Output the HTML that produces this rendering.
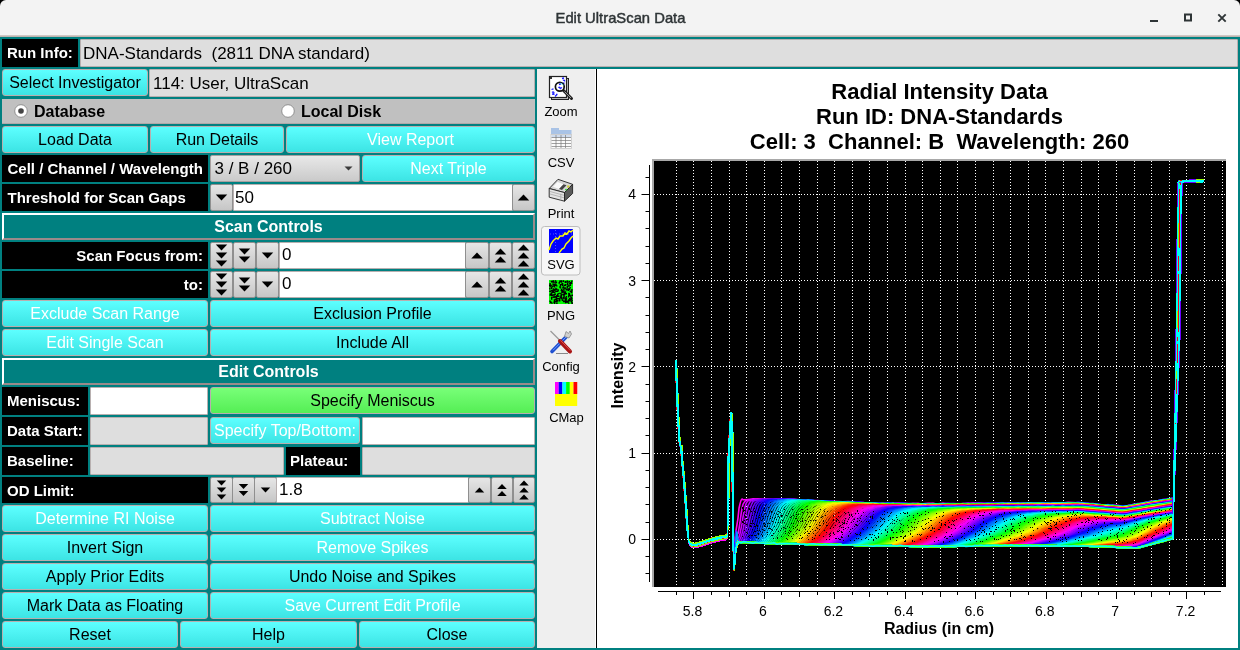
<!DOCTYPE html><html><head><meta charset="utf-8"><style>
html,body{margin:0;padding:0}
body{width:1240px;height:650px;position:relative;overflow:hidden;will-change:transform;background:#008080;font-family:"Liberation Sans", sans-serif}
</style></head><body><div style="position:absolute;left:0px;top:0px;width:1240px;height:10px;background:#000"></div><div style="position:absolute;left:0px;top:0px;width:1240px;height:37px;background:#f3f3f3;border-radius:6px 6px 0 0;border-bottom:1px solid #cfc6c2;box-sizing:border-box"></div><div style="position:absolute;left:0px;top:35px;width:1240px;height:2px;background:linear-gradient(#d8d2cf,#b8aaa5)"></div><div style="position:absolute;left:0.5px;top:9px;width:1240px;text-align:center;font-size:14.8px;font-weight:normal;-webkit-text-stroke:0.45px #2e3436;color:#2e3436;line-height:18px">Edit UltraScan Data</div><svg style="position:absolute;left:0;top:0" width="1240" height="36"><rect x="1150" y="20" width="8" height="2" fill="#2e3436"/><rect x="1185" y="14.5" width="6" height="6" fill="none" stroke="#2e3436" stroke-width="2"/><path d="M1218.3 14.3 L1225.7 21.7 M1225.7 14.3 L1218.3 21.7" stroke="#2e3436" stroke-width="1.9"/></svg><div style="position:absolute;left:2px;top:39px;width:76px;height:28px;background:#000;color:#fff;font-weight:bold;font-size:15px;display:flex;align-items:center;justify-content:flex-start;padding:0 5px;box-sizing:border-box;white-space:pre"><span style="position:relative;top:-1px">Run Info:</span></div><div style="position:absolute;left:80px;top:39px;width:1158px;height:28px;background:#dedede;border:1px solid #b8b0b0;border-radius:1px;box-sizing:border-box;color:#000;font-size:17px;display:flex;align-items:center;padding:0 2px;white-space:pre"><span style="position:relative;top:1px">DNA-Standards  (2811 DNA standard)</span></div><div style="position:absolute;left:2px;top:69px;width:146px;height:27px;background:linear-gradient(#5dffff,#3ce4e4);border:1px solid #b9aeae;border-radius:3px;box-sizing:border-box;color:#000;font-size:16px;display:flex;align-items:center;justify-content:center;padding:0 0px;white-space:pre"><span style="position:relative;top:0px">Select Investigator</span></div><div style="position:absolute;left:149px;top:69px;width:386px;height:28px;background:#dedede;border:1px solid #b8b0b0;border-radius:1px;box-sizing:border-box;color:#000;font-size:17px;display:flex;align-items:center;padding:0 3px;white-space:pre"><span style="position:relative;top:1px">114: User, UltraScan</span></div><div style="position:absolute;left:2px;top:99px;width:533px;height:25px;background:#c0c0c0;border-bottom:1px solid #b0a8a8;box-sizing:border-box"></div><svg style="position:absolute;left:0;top:99px" width="540" height="25"><circle cx="21" cy="12" r="6.3" fill="#fff" stroke="#888" stroke-width="0.9"/><circle cx="21" cy="12" r="2.8" fill="#444"/><circle cx="288" cy="12" r="6.3" fill="#fff" stroke="#888" stroke-width="0.9"/></svg><div style="position:absolute;left:34px;top:99px;height:25px;line-height:25px;font-size:16px;font-weight:bold;color:#000">Database</div><div style="position:absolute;left:301px;top:99px;height:25px;line-height:25px;font-size:16px;font-weight:bold;color:#000">Local Disk</div><div style="position:absolute;left:2px;top:126px;width:146px;height:27px;background:linear-gradient(#5dffff,#3ce4e4);border:1px solid #b9aeae;border-radius:3px;box-sizing:border-box;color:#000;font-size:16px;display:flex;align-items:center;justify-content:center;padding:0 0px;white-space:pre"><span style="position:relative;top:0px">Load Data</span></div><div style="position:absolute;left:150px;top:126px;width:134px;height:27px;background:linear-gradient(#5dffff,#3ce4e4);border:1px solid #b9aeae;border-radius:3px;box-sizing:border-box;color:#000;font-size:16px;display:flex;align-items:center;justify-content:center;padding:0 0px;white-space:pre"><span style="position:relative;top:0px">Run Details</span></div><div style="position:absolute;left:286px;top:126px;width:249px;height:27px;background:linear-gradient(#5dffff,#3ce4e4);border:1px solid #b9aeae;border-radius:3px;box-sizing:border-box;color:#fff;font-size:16px;display:flex;align-items:center;justify-content:center;padding:0 0px;white-space:pre"><span style="position:relative;top:0px">View Report</span></div><div style="position:absolute;left:2px;top:155px;width:206px;height:27px;background:#000;color:#fff;font-weight:bold;font-size:15px;display:flex;align-items:center;justify-content:flex-start;padding:0 5.5px;box-sizing:border-box;white-space:pre"><span style="position:relative;top:0px">Cell / Channel / Wavelength</span></div><div style="position:absolute;left:210px;top:155px;width:150px;height:27px;background:linear-gradient(#e8e8e8,#cacaca);border:1px solid #a8a0a0;border-radius:2px;box-sizing:border-box;font-size:17px;display:flex;align-items:center;padding-left:3.5px">3 / B / 260<svg style="position:absolute;left:132px;top:9.3px" width="14" height="8"><polygon points="1.5,1.5 9.5,1.5 5.5,5.5" fill="#3a3a3a"/></svg></div><div style="position:absolute;left:362px;top:155px;width:173px;height:27px;background:linear-gradient(#5dffff,#3ce4e4);border:1px solid #b9aeae;border-radius:3px;box-sizing:border-box;color:#fff;font-size:16px;display:flex;align-items:center;justify-content:center;padding:0 0px;white-space:pre"><span style="position:relative;top:0px">Next Triple</span></div><div style="position:absolute;left:2px;top:184px;width:206px;height:27px;background:#000;color:#fff;font-weight:bold;font-size:15px;display:flex;align-items:center;justify-content:flex-start;padding:0 5.5px;box-sizing:border-box;white-space:pre"><span style="position:relative;top:0px">Threshold for Scan Gaps</span></div><div style="position:absolute;left:210px;top:184px;width:23px;height:27px;background:linear-gradient(#e6e6e6,#c6c6c6);border:1px solid #8f8f8f;border-radius:2px;box-sizing:border-box"><svg width="23" height="27" style="position:absolute;left:-1.5px;top:-1.3px"><polygon points="5.75,10.6 17.25,10.6 11.5,16.4" fill="#000"/></svg></div><div style="position:absolute;left:233px;top:184px;width:280px;height:27px;background:#fff;border:1px solid #b8b0b0;border-radius:1px;box-sizing:border-box;color:#000;font-size:17px;display:flex;align-items:center;padding:0 1px;white-space:pre"><span style="position:relative;top:0px">50</span></div><div style="position:absolute;left:512px;top:184px;width:23px;height:27px;background:linear-gradient(#e6e6e6,#c6c6c6);border:1px solid #8f8f8f;border-radius:2px;box-sizing:border-box"><svg width="23" height="27" style="position:absolute;left:-1.5px;top:-1.3px"><polygon points="5.75,16.4 17.25,16.4 11.5,10.6" fill="#000"/></svg></div><div style="position:absolute;left:2px;top:213px;width:533px;height:27px;background:#008080;border-top:2px solid #fff;border-left:2px solid #fff;border-bottom:2px solid #9a8a8a;border-right:2px solid #9a8a8a;box-sizing:border-box;color:#fff;font-weight:bold;font-size:16px;display:flex;align-items:center;justify-content:center">Scan Controls</div><div style="position:absolute;left:2px;top:242px;width:206px;height:27px;background:#000;color:#fff;font-weight:bold;font-size:15px;display:flex;align-items:center;justify-content:flex-end;padding:0 5px;box-sizing:border-box;white-space:pre"><span style="position:relative;top:0px">Scan Focus from:</span></div><div style="position:absolute;left:210px;top:242px;width:23px;height:27px;background:linear-gradient(#e6e6e6,#c6c6c6);border:1px solid #8f8f8f;border-radius:2px;box-sizing:border-box"><svg width="23" height="27" style="position:absolute;left:-1.5px;top:-1.3px"><polygon points="5.75,2.6 17.25,2.6 11.5,8.4" fill="#000"/><polygon points="5.75,10.6 17.25,10.6 11.5,16.4" fill="#000"/><polygon points="5.75,18.6 17.25,18.6 11.5,24.4" fill="#000"/></svg></div><div style="position:absolute;left:233px;top:242px;width:23px;height:27px;background:linear-gradient(#e6e6e6,#c6c6c6);border:1px solid #8f8f8f;border-radius:2px;box-sizing:border-box"><svg width="23" height="27" style="position:absolute;left:-1.5px;top:-1.3px"><polygon points="5.75,6.6 17.25,6.6 11.5,12.4" fill="#000"/><polygon points="5.75,14.6 17.25,14.6 11.5,20.4" fill="#000"/></svg></div><div style="position:absolute;left:256px;top:242px;width:23px;height:27px;background:linear-gradient(#e6e6e6,#c6c6c6);border:1px solid #8f8f8f;border-radius:2px;box-sizing:border-box"><svg width="23" height="27" style="position:absolute;left:-1.5px;top:-1.3px"><polygon points="5.75,10.6 17.25,10.6 11.5,16.4" fill="#000"/></svg></div><div style="position:absolute;left:279px;top:242px;width:187px;height:27px;background:#fff;border:1px solid #b8b0b0;border-radius:1px;box-sizing:border-box;color:#000;font-size:17px;display:flex;align-items:center;padding:0 2px;white-space:pre"><span style="position:relative;top:-0.5px">0</span></div><div style="position:absolute;left:465px;top:242px;width:24px;height:27px;background:linear-gradient(#e6e6e6,#c6c6c6);border:1px solid #8f8f8f;border-radius:2px;box-sizing:border-box"><svg width="24" height="27" style="position:absolute;left:-1.5px;top:-1.3px"><polygon points="6.25,16.4 17.75,16.4 12.0,10.6" fill="#000"/></svg></div><div style="position:absolute;left:489px;top:242px;width:23px;height:27px;background:linear-gradient(#e6e6e6,#c6c6c6);border:1px solid #8f8f8f;border-radius:2px;box-sizing:border-box"><svg width="23" height="27" style="position:absolute;left:-1.5px;top:-1.3px"><polygon points="5.75,12.4 17.25,12.4 11.5,6.6" fill="#000"/><polygon points="5.75,20.4 17.25,20.4 11.5,14.6" fill="#000"/></svg></div><div style="position:absolute;left:512px;top:242px;width:23px;height:27px;background:linear-gradient(#e6e6e6,#c6c6c6);border:1px solid #8f8f8f;border-radius:2px;box-sizing:border-box"><svg width="23" height="27" style="position:absolute;left:-1.5px;top:-1.3px"><polygon points="5.75,8.4 17.25,8.4 11.5,2.6" fill="#000"/><polygon points="5.75,16.4 17.25,16.4 11.5,10.6" fill="#000"/><polygon points="5.75,24.4 17.25,24.4 11.5,18.6" fill="#000"/></svg></div><div style="position:absolute;left:2px;top:271px;width:206px;height:27px;background:#000;color:#fff;font-weight:bold;font-size:15px;display:flex;align-items:center;justify-content:flex-end;padding:0 5px;box-sizing:border-box;white-space:pre"><span style="position:relative;top:0px">to:</span></div><div style="position:absolute;left:210px;top:271px;width:23px;height:27px;background:linear-gradient(#e6e6e6,#c6c6c6);border:1px solid #8f8f8f;border-radius:2px;box-sizing:border-box"><svg width="23" height="27" style="position:absolute;left:-1.5px;top:-1.3px"><polygon points="5.75,2.6 17.25,2.6 11.5,8.4" fill="#000"/><polygon points="5.75,10.6 17.25,10.6 11.5,16.4" fill="#000"/><polygon points="5.75,18.6 17.25,18.6 11.5,24.4" fill="#000"/></svg></div><div style="position:absolute;left:233px;top:271px;width:23px;height:27px;background:linear-gradient(#e6e6e6,#c6c6c6);border:1px solid #8f8f8f;border-radius:2px;box-sizing:border-box"><svg width="23" height="27" style="position:absolute;left:-1.5px;top:-1.3px"><polygon points="5.75,6.6 17.25,6.6 11.5,12.4" fill="#000"/><polygon points="5.75,14.6 17.25,14.6 11.5,20.4" fill="#000"/></svg></div><div style="position:absolute;left:256px;top:271px;width:23px;height:27px;background:linear-gradient(#e6e6e6,#c6c6c6);border:1px solid #8f8f8f;border-radius:2px;box-sizing:border-box"><svg width="23" height="27" style="position:absolute;left:-1.5px;top:-1.3px"><polygon points="5.75,10.6 17.25,10.6 11.5,16.4" fill="#000"/></svg></div><div style="position:absolute;left:279px;top:271px;width:187px;height:27px;background:#fff;border:1px solid #b8b0b0;border-radius:1px;box-sizing:border-box;color:#000;font-size:17px;display:flex;align-items:center;padding:0 2px;white-space:pre"><span style="position:relative;top:-0.5px">0</span></div><div style="position:absolute;left:465px;top:271px;width:24px;height:27px;background:linear-gradient(#e6e6e6,#c6c6c6);border:1px solid #8f8f8f;border-radius:2px;box-sizing:border-box"><svg width="24" height="27" style="position:absolute;left:-1.5px;top:-1.3px"><polygon points="6.25,16.4 17.75,16.4 12.0,10.6" fill="#000"/></svg></div><div style="position:absolute;left:489px;top:271px;width:23px;height:27px;background:linear-gradient(#e6e6e6,#c6c6c6);border:1px solid #8f8f8f;border-radius:2px;box-sizing:border-box"><svg width="23" height="27" style="position:absolute;left:-1.5px;top:-1.3px"><polygon points="5.75,12.4 17.25,12.4 11.5,6.6" fill="#000"/><polygon points="5.75,20.4 17.25,20.4 11.5,14.6" fill="#000"/></svg></div><div style="position:absolute;left:512px;top:271px;width:23px;height:27px;background:linear-gradient(#e6e6e6,#c6c6c6);border:1px solid #8f8f8f;border-radius:2px;box-sizing:border-box"><svg width="23" height="27" style="position:absolute;left:-1.5px;top:-1.3px"><polygon points="5.75,8.4 17.25,8.4 11.5,2.6" fill="#000"/><polygon points="5.75,16.4 17.25,16.4 11.5,10.6" fill="#000"/><polygon points="5.75,24.4 17.25,24.4 11.5,18.6" fill="#000"/></svg></div><div style="position:absolute;left:2px;top:300px;width:206px;height:27px;background:linear-gradient(#5dffff,#3ce4e4);border:1px solid #b9aeae;border-radius:3px;box-sizing:border-box;color:#fff;font-size:16px;display:flex;align-items:center;justify-content:center;padding:0 0px;white-space:pre"><span style="position:relative;top:0px">Exclude Scan Range</span></div><div style="position:absolute;left:210px;top:300px;width:325px;height:27px;background:linear-gradient(#5dffff,#3ce4e4);border:1px solid #b9aeae;border-radius:3px;box-sizing:border-box;color:#000;font-size:16px;display:flex;align-items:center;justify-content:center;padding:0 0px;white-space:pre"><span style="position:relative;top:0px">Exclusion Profile</span></div><div style="position:absolute;left:2px;top:329px;width:206px;height:27px;background:linear-gradient(#5dffff,#3ce4e4);border:1px solid #b9aeae;border-radius:3px;box-sizing:border-box;color:#fff;font-size:16px;display:flex;align-items:center;justify-content:center;padding:0 0px;white-space:pre"><span style="position:relative;top:0px">Edit Single Scan</span></div><div style="position:absolute;left:210px;top:329px;width:325px;height:27px;background:linear-gradient(#5dffff,#3ce4e4);border:1px solid #b9aeae;border-radius:3px;box-sizing:border-box;color:#000;font-size:16px;display:flex;align-items:center;justify-content:center;padding:0 0px;white-space:pre"><span style="position:relative;top:0px">Include All</span></div><div style="position:absolute;left:2px;top:358px;width:533px;height:27px;background:#008080;border-top:2px solid #fff;border-left:2px solid #fff;border-bottom:2px solid #9a8a8a;border-right:2px solid #9a8a8a;box-sizing:border-box;color:#fff;font-weight:bold;font-size:16px;display:flex;align-items:center;justify-content:center">Edit Controls</div><div style="position:absolute;left:2px;top:387px;width:86px;height:28px;background:#000;color:#fff;font-weight:bold;font-size:15px;display:flex;align-items:center;justify-content:flex-start;padding:0 5px;box-sizing:border-box;white-space:pre"><span style="position:relative;top:-1px">Meniscus:</span></div><div style="position:absolute;left:90px;top:387px;width:118px;height:28px;background:#fff;border:1px solid #b8b0b0;border-radius:1px;box-sizing:border-box;color:#000;font-size:17px;display:flex;align-items:center;padding:0 4px;white-space:pre"><span style="position:relative;top:1px"></span></div><div style="position:absolute;left:210px;top:387px;width:325px;height:27px;background:linear-gradient(#78ff78,#55ee55);border:1px solid #b9aeae;border-radius:3px;box-sizing:border-box;color:#000;font-size:16px;display:flex;align-items:center;justify-content:center;padding:0 0px;white-space:pre"><span style="position:relative;top:0px">Specify Meniscus</span></div><div style="position:absolute;left:2px;top:417px;width:86px;height:28px;background:#000;color:#fff;font-weight:bold;font-size:15px;display:flex;align-items:center;justify-content:flex-start;padding:0 5px;box-sizing:border-box;white-space:pre"><span style="position:relative;top:-1px">Data Start:</span></div><div style="position:absolute;left:90px;top:417px;width:118px;height:28px;background:#dedede;border:1px solid #b8b0b0;border-radius:1px;box-sizing:border-box;color:#000;font-size:17px;display:flex;align-items:center;padding:0 4px;white-space:pre"><span style="position:relative;top:1px"></span></div><div style="position:absolute;left:210px;top:417px;width:150px;height:27px;background:linear-gradient(#5dffff,#3ce4e4);border:1px solid #b9aeae;border-radius:3px;box-sizing:border-box;color:#fff;font-size:16px;display:flex;align-items:center;justify-content:center;padding:0 0px;white-space:pre"><span style="position:relative;top:0px">Specify Top/Bottom:</span></div><div style="position:absolute;left:362px;top:417px;width:173px;height:28px;background:#fff;border:1px solid #b8b0b0;border-radius:1px;box-sizing:border-box;color:#000;font-size:17px;display:flex;align-items:center;padding:0 4px;white-space:pre"><span style="position:relative;top:1px"></span></div><div style="position:absolute;left:2px;top:447px;width:86px;height:28px;background:#000;color:#fff;font-weight:bold;font-size:15px;display:flex;align-items:center;justify-content:flex-start;padding:0 5px;box-sizing:border-box;white-space:pre"><span style="position:relative;top:-1px">Baseline:</span></div><div style="position:absolute;left:90px;top:447px;width:194px;height:28px;background:#dedede;border:1px solid #b8b0b0;border-radius:1px;box-sizing:border-box;color:#000;font-size:17px;display:flex;align-items:center;padding:0 4px;white-space:pre"><span style="position:relative;top:1px"></span></div><div style="position:absolute;left:286px;top:447px;width:74px;height:28px;background:#000;color:#fff;font-weight:bold;font-size:15px;display:flex;align-items:center;justify-content:flex-start;padding:0 4px;box-sizing:border-box;white-space:pre"><span style="position:relative;top:-1px">Plateau:</span></div><div style="position:absolute;left:362px;top:447px;width:173px;height:28px;background:#dedede;border:1px solid #b8b0b0;border-radius:1px;box-sizing:border-box;color:#000;font-size:17px;display:flex;align-items:center;padding:0 4px;white-space:pre"><span style="position:relative;top:1px"></span></div><div style="position:absolute;left:2px;top:477px;width:206px;height:26px;background:#000;color:#fff;font-weight:bold;font-size:15px;display:flex;align-items:center;justify-content:flex-start;padding:0 5px;box-sizing:border-box;white-space:pre"><span style="position:relative;top:0px">OD Limit:</span></div><div style="position:absolute;left:210px;top:477px;width:23px;height:26px;background:linear-gradient(#e6e6e6,#c6c6c6);border:1px solid #8f8f8f;border-radius:2px;box-sizing:border-box"><svg width="23" height="26" style="position:absolute;left:-1.5px;top:-1.3px"><polygon points="6.75,3.5 16.25,3.5 11.5,8.5" fill="#000"/><polygon points="6.75,10.5 16.25,10.5 11.5,15.5" fill="#000"/><polygon points="6.75,17.5 16.25,17.5 11.5,22.5" fill="#000"/></svg></div><div style="position:absolute;left:232px;top:477px;width:23px;height:26px;background:linear-gradient(#e6e6e6,#c6c6c6);border:1px solid #8f8f8f;border-radius:2px;box-sizing:border-box"><svg width="23" height="26" style="position:absolute;left:-1.5px;top:-1.3px"><polygon points="6.75,7.0 16.25,7.0 11.5,12.0" fill="#000"/><polygon points="6.75,14.0 16.25,14.0 11.5,19.0" fill="#000"/></svg></div><div style="position:absolute;left:254px;top:477px;width:23px;height:26px;background:linear-gradient(#e6e6e6,#c6c6c6);border:1px solid #8f8f8f;border-radius:2px;box-sizing:border-box"><svg width="23" height="26" style="position:absolute;left:-1.5px;top:-1.3px"><polygon points="6.75,10.5 16.25,10.5 11.5,15.5" fill="#000"/></svg></div><div style="position:absolute;left:276px;top:477px;width:193px;height:26px;background:#fff;border:1px solid #b8b0b0;border-radius:1px;box-sizing:border-box;color:#000;font-size:17px;display:flex;align-items:center;padding:0 2px;white-space:pre"><span style="position:relative;top:0px">1.8</span></div><div style="position:absolute;left:468px;top:477px;width:23px;height:26px;background:linear-gradient(#e6e6e6,#c6c6c6);border:1px solid #8f8f8f;border-radius:2px;box-sizing:border-box"><svg width="23" height="26" style="position:absolute;left:-1.5px;top:-1.3px"><polygon points="6.75,15.5 16.25,15.5 11.5,10.5" fill="#000"/></svg></div><div style="position:absolute;left:491px;top:477px;width:22px;height:26px;background:linear-gradient(#e6e6e6,#c6c6c6);border:1px solid #8f8f8f;border-radius:2px;box-sizing:border-box"><svg width="22" height="26" style="position:absolute;left:-1.5px;top:-1.3px"><polygon points="6.25,12.0 15.75,12.0 11.0,7.0" fill="#000"/><polygon points="6.25,19.0 15.75,19.0 11.0,14.0" fill="#000"/></svg></div><div style="position:absolute;left:513px;top:477px;width:22px;height:26px;background:linear-gradient(#e6e6e6,#c6c6c6);border:1px solid #8f8f8f;border-radius:2px;box-sizing:border-box"><svg width="22" height="26" style="position:absolute;left:-1.5px;top:-1.3px"><polygon points="6.25,8.5 15.75,8.5 11.0,3.5" fill="#000"/><polygon points="6.25,15.5 15.75,15.5 11.0,10.5" fill="#000"/><polygon points="6.25,22.5 15.75,22.5 11.0,17.5" fill="#000"/></svg></div><div style="position:absolute;left:2px;top:505px;width:206px;height:27px;background:linear-gradient(#5dffff,#3ce4e4);border:1px solid #b9aeae;border-radius:3px;box-sizing:border-box;color:#fff;font-size:16px;display:flex;align-items:center;justify-content:center;padding:0 0px;white-space:pre"><span style="position:relative;top:0px">Determine RI Noise</span></div><div style="position:absolute;left:210px;top:505px;width:325px;height:27px;background:linear-gradient(#5dffff,#3ce4e4);border:1px solid #b9aeae;border-radius:3px;box-sizing:border-box;color:#fff;font-size:16px;display:flex;align-items:center;justify-content:center;padding:0 0px;white-space:pre"><span style="position:relative;top:0px">Subtract Noise</span></div><div style="position:absolute;left:2px;top:534px;width:206px;height:27px;background:linear-gradient(#5dffff,#3ce4e4);border:1px solid #b9aeae;border-radius:3px;box-sizing:border-box;color:#000;font-size:16px;display:flex;align-items:center;justify-content:center;padding:0 0px;white-space:pre"><span style="position:relative;top:0px">Invert Sign</span></div><div style="position:absolute;left:210px;top:534px;width:325px;height:27px;background:linear-gradient(#5dffff,#3ce4e4);border:1px solid #b9aeae;border-radius:3px;box-sizing:border-box;color:#fff;font-size:16px;display:flex;align-items:center;justify-content:center;padding:0 0px;white-space:pre"><span style="position:relative;top:0px">Remove Spikes</span></div><div style="position:absolute;left:2px;top:563px;width:206px;height:27px;background:linear-gradient(#5dffff,#3ce4e4);border:1px solid #b9aeae;border-radius:3px;box-sizing:border-box;color:#000;font-size:16px;display:flex;align-items:center;justify-content:center;padding:0 0px;white-space:pre"><span style="position:relative;top:0px">Apply Prior Edits</span></div><div style="position:absolute;left:210px;top:563px;width:325px;height:27px;background:linear-gradient(#5dffff,#3ce4e4);border:1px solid #b9aeae;border-radius:3px;box-sizing:border-box;color:#000;font-size:16px;display:flex;align-items:center;justify-content:center;padding:0 0px;white-space:pre"><span style="position:relative;top:0px">Undo Noise and Spikes</span></div><div style="position:absolute;left:2px;top:592px;width:206px;height:27px;background:linear-gradient(#5dffff,#3ce4e4);border:1px solid #b9aeae;border-radius:3px;box-sizing:border-box;color:#000;font-size:16px;display:flex;align-items:center;justify-content:center;padding:0 0px;white-space:pre"><span style="position:relative;top:0px">Mark Data as Floating</span></div><div style="position:absolute;left:210px;top:592px;width:325px;height:27px;background:linear-gradient(#5dffff,#3ce4e4);border:1px solid #b9aeae;border-radius:3px;box-sizing:border-box;color:#fff;font-size:16px;display:flex;align-items:center;justify-content:center;padding:0 0px;white-space:pre"><span style="position:relative;top:0px">Save Current Edit Profile</span></div><div style="position:absolute;left:2px;top:621px;width:176px;height:27px;background:linear-gradient(#5dffff,#3ce4e4);border:1px solid #b9aeae;border-radius:3px;box-sizing:border-box;color:#000;font-size:16px;display:flex;align-items:center;justify-content:center;padding:0 0px;white-space:pre"><span style="position:relative;top:0px">Reset</span></div><div style="position:absolute;left:180px;top:621px;width:177px;height:27px;background:linear-gradient(#5dffff,#3ce4e4);border:1px solid #b9aeae;border-radius:3px;box-sizing:border-box;color:#000;font-size:16px;display:flex;align-items:center;justify-content:center;padding:0 0px;white-space:pre"><span style="position:relative;top:0px">Help</span></div><div style="position:absolute;left:359px;top:621px;width:176px;height:27px;background:linear-gradient(#5dffff,#3ce4e4);border:1px solid #b9aeae;border-radius:3px;box-sizing:border-box;color:#000;font-size:16px;display:flex;align-items:center;justify-content:center;padding:0 0px;white-space:pre"><span style="position:relative;top:0px">Close</span></div><div style="position:absolute;left:537px;top:69px;width:59px;height:579px;background:#efefef"></div><div style="position:absolute;left:595px;top:69px;width:1px;height:579px;background:#fff"></div><div style="position:absolute;left:596px;top:69px;width:1px;height:579px;background:#000"></div><div style="position:absolute;left:597px;top:69px;width:641px;height:579px;background:#fff"></div><svg style="position:absolute;left:0;top:0" width="1240" height="650" font-family="Liberation Sans, sans-serif"><rect x="541.5" y="226.5" width="38.5" height="48.5" rx="3" fill="#f7f7f7" stroke="#bdbdbd" stroke-width="1"/><text x="561" y="116" font-size="13" text-anchor="middle" fill="#000">Zoom</text><text x="561" y="167" font-size="13" text-anchor="middle" fill="#000">CSV</text><text x="561" y="218" font-size="13" text-anchor="middle" fill="#000">Print</text><text x="561" y="269" font-size="13" text-anchor="middle" fill="#000">SVG</text><text x="561" y="320" font-size="13" text-anchor="middle" fill="#000">PNG</text><text x="561" y="370.5" font-size="13" text-anchor="middle" fill="#000">Config</text><text x="566.5" y="421.7" font-size="13" text-anchor="middle" fill="#000">CMap</text><g><rect x="551.5" y="78.5" width="17" height="21" fill="#bdbdbd" stroke="#222" stroke-width="1"/><rect x="549.5" y="76.5" width="17" height="21" fill="#fff" stroke="#222" stroke-width="1.2"/><path d="M550 77h2v2h-2z" fill="#333"/><path d="M562 78.5l2 -0.5M563 80.5c1 -1 2 0 1.5 1M562.5 83.5l2 -0.5M551.5 89.5l2 -0.6M552 92.5c1.5 -1.3 2.5 0 1.5 1M552 94l2.5 0.3M555 96.5l1.5 -1.5M556 94.5h1.5" stroke="#1a1aff" stroke-width="1.3" fill="none"/><line x1="563.5" y1="90.5" x2="571.5" y2="98.5" stroke="#222" stroke-width="3" stroke-linecap="round"/><line x1="564.5" y1="91.5" x2="571" y2="98" stroke="#999" stroke-width="1"/><circle cx="559.8" cy="86.8" r="4.4" fill="#fff" stroke="#111" stroke-width="1.7"/><path d="M559 84.5l2 -0.6M558.5 87.8c1 -1 2.2 0 1.5 1.2M561 87.5l0.8 0.8" stroke="#1a1aff" stroke-width="1.5" fill="none"/><path d="M560.5 83.3a3.5 3.5 0 0 1 2.8 2" stroke="#6ee" stroke-width="1" fill="none"/></g><g><rect x="551" y="128" width="8" height="3" fill="#a9c3e6"/><rect x="551" y="130" width="20.5" height="4.5" fill="#a9c3e6"/><rect x="551" y="134.5" width="20.5" height="14" fill="#fafafa" stroke="#c8c8c8" stroke-width="0.8"/><rect x="551.5" y="135" width="19.5" height="2.5" fill="#cfdcef"/><path d="M551.5 137.5H571M551.5 140.5H571M551.5 143.5H571M551.5 146.5H571M556 135V148M561 135V148M565.5 135V148" stroke="#7a7a7a" stroke-width="0.7"/></g><g stroke-linejoin="round"><polygon points="549.2,188.5 558,179.3 572.6,184.3 564.5,192.6" fill="#d6d6d6" stroke="#222" stroke-width="0.9"/><polygon points="549.2,188.5 564.5,192.6 564.5,201.2 549.2,197.2" fill="#e4e4e4" stroke="#222" stroke-width="0.9"/><polygon points="564.5,192.6 572.6,184.3 572.6,193.5 564.5,201.2" fill="#5a5a5a" stroke="#222" stroke-width="0.9"/><polygon points="553,186.8 557.5,182 563.5,184.2 559,189" fill="#fafafa"/><polygon points="559,189 563.5,184.2 566.5,185.3 562,190" fill="#444"/><path d="M550 191.5L564 195.3M550 194L564 197.8M560.8 193.8V200.5" stroke="#aaa" stroke-width="0.8"/><circle cx="566" cy="189.6" r="0.9" fill="#22dd22"/><rect x="567.2" y="185.5" width="2.2" height="2.2" fill="#cccc33"/></g><rect x="549" y="229" width="24" height="24" fill="#0000ff"/><path d="M549 250 L551 244 L553 241 L556 238 L558 239 L560 236 L563 236 L565 233 L567 234 L569 231 L571 232 L573 230" stroke="#ffff00" stroke-width="1.4" fill="none"/><path d="M559 253 L562 249 L564 248 L566 244 L569 241 L571 238 L573 236" stroke="#ffff00" stroke-width="1.4" fill="none"/><path d="M555.5 230V253M550 234H573" stroke="#8888ff" stroke-width="0.6" stroke-dasharray="1 2" fill="none"/><rect x="549" y="280" width="24" height="24" fill="#00ff00"/><path d="M559.2 292.7h1.4v1.4h-1.4zM569.9 290.5h1.4v1.4h-1.4zM560.5 293.3h1.4v1.4h-1.4zM553.2 291.6h1.4v1.4h-1.4zM563.2 297.9h1.4v1.4h-1.4zM551.1 286.9h1.4v1.4h-1.4zM551.0 298.3h1.4v1.4h-1.4zM564.7 280.9h1.4v1.4h-1.4zM571.2 301.8h1.4v1.4h-1.4zM563.8 293.9h1.4v1.4h-1.4zM552.6 280.3h1.4v1.4h-1.4zM560.9 281.3h1.4v1.4h-1.4zM553.3 285.5h1.4v1.4h-1.4zM549.7 290.5h1.4v1.4h-1.4zM559.0 299.0h1.4v1.4h-1.4zM560.7 294.5h1.4v1.4h-1.4zM560.3 295.0h1.4v1.4h-1.4zM559.3 286.3h1.4v1.4h-1.4zM571.5 302.5h1.4v1.4h-1.4zM568.0 296.0h1.4v1.4h-1.4zM556.1 285.2h1.4v1.4h-1.4zM555.5 281.6h1.4v1.4h-1.4zM566.3 289.0h1.4v1.4h-1.4zM568.1 288.7h1.4v1.4h-1.4zM570.7 299.1h1.4v1.4h-1.4zM549.0 284.7h1.4v1.4h-1.4zM569.6 290.6h1.4v1.4h-1.4zM571.2 289.0h1.4v1.4h-1.4zM550.7 294.2h1.4v1.4h-1.4zM566.6 286.1h1.4v1.4h-1.4zM551.0 287.5h1.4v1.4h-1.4zM570.8 297.1h1.4v1.4h-1.4zM551.7 285.6h1.4v1.4h-1.4zM551.3 281.4h1.4v1.4h-1.4zM567.0 284.0h1.4v1.4h-1.4zM561.6 290.1h1.4v1.4h-1.4zM553.3 296.5h1.4v1.4h-1.4zM552.0 294.5h1.4v1.4h-1.4zM551.6 289.5h1.4v1.4h-1.4zM553.8 286.1h1.4v1.4h-1.4zM570.9 298.2h1.4v1.4h-1.4zM555.9 300.0h1.4v1.4h-1.4zM553.8 288.9h1.4v1.4h-1.4zM568.3 294.5h1.4v1.4h-1.4zM551.3 302.4h1.4v1.4h-1.4zM553.8 285.8h1.4v1.4h-1.4zM566.5 287.4h1.4v1.4h-1.4zM555.7 281.7h1.4v1.4h-1.4zM551.0 293.2h1.4v1.4h-1.4zM554.5 293.6h1.4v1.4h-1.4zM557.4 290.2h1.4v1.4h-1.4zM570.7 290.9h1.4v1.4h-1.4zM562.0 299.6h1.4v1.4h-1.4zM553.1 283.5h1.4v1.4h-1.4zM569.5 298.5h1.4v1.4h-1.4zM554.6 284.3h1.4v1.4h-1.4zM565.7 301.3h1.4v1.4h-1.4zM553.4 301.5h1.4v1.4h-1.4zM568.9 293.6h1.4v1.4h-1.4zM558.5 282.3h1.4v1.4h-1.4zM549.9 301.8h1.4v1.4h-1.4zM554.4 295.9h1.4v1.4h-1.4zM554.8 298.6h1.4v1.4h-1.4zM562.5 286.6h1.4v1.4h-1.4zM553.0 296.3h1.4v1.4h-1.4zM550.6 285.2h1.4v1.4h-1.4zM561.6 299.3h1.4v1.4h-1.4zM562.9 286.3h1.4v1.4h-1.4zM569.7 284.6h1.4v1.4h-1.4zM549.4 286.1h1.4v1.4h-1.4zM559.1 281.4h1.4v1.4h-1.4zM553.0 288.3h1.4v1.4h-1.4zM561.9 283.0h1.4v1.4h-1.4zM557.2 300.1h1.4v1.4h-1.4zM571.2 294.8h1.4v1.4h-1.4zM564.6 293.2h1.4v1.4h-1.4zM552.2 280.8h1.4v1.4h-1.4zM549.4 300.6h1.4v1.4h-1.4zM564.8 301.8h1.4v1.4h-1.4zM549.5 294.4h1.4v1.4h-1.4zM559.9 296.5h1.4v1.4h-1.4zM556.2 302.6h1.4v1.4h-1.4zM550.7 292.3h1.4v1.4h-1.4zM565.7 300.3h1.4v1.4h-1.4zM565.7 295.9h1.4v1.4h-1.4zM566.9 300.7h1.4v1.4h-1.4zM557.0 295.5h1.4v1.4h-1.4zM569.4 299.7h1.4v1.4h-1.4zM558.4 297.9h1.4v1.4h-1.4zM568.5 292.9h1.4v1.4h-1.4zM563.1 288.6h1.4v1.4h-1.4zM562.2 293.8h1.4v1.4h-1.4zM550.8 294.5h1.4v1.4h-1.4zM571.4 299.9h1.4v1.4h-1.4zM565.5 288.8h1.4v1.4h-1.4zM565.6 293.1h1.4v1.4h-1.4zM559.0 298.9h1.4v1.4h-1.4zM550.9 297.0h1.4v1.4h-1.4zM549.7 293.6h1.4v1.4h-1.4zM559.9 285.2h1.4v1.4h-1.4zM564.8 291.2h1.4v1.4h-1.4zM562.9 300.8h1.4v1.4h-1.4zM554.8 280.3h1.4v1.4h-1.4zM555.8 295.3h1.4v1.4h-1.4zM553.6 283.8h1.4v1.4h-1.4zM569.5 294.9h1.4v1.4h-1.4zM559.0 300.2h1.4v1.4h-1.4zM556.4 295.0h1.4v1.4h-1.4zM553.5 289.7h1.4v1.4h-1.4zM567.2 300.7h1.4v1.4h-1.4zM568.9 288.7h1.4v1.4h-1.4zM562.2 287.2h1.4v1.4h-1.4zM552.1 291.2h1.4v1.4h-1.4zM567.9 299.2h1.4v1.4h-1.4zM565.1 301.5h1.4v1.4h-1.4zM555.3 283.8h1.4v1.4h-1.4zM559.2 286.2h1.4v1.4h-1.4zM553.8 289.4h1.4v1.4h-1.4zM563.1 291.2h1.4v1.4h-1.4zM556.1 299.0h1.4v1.4h-1.4zM571.2 290.2h1.4v1.4h-1.4zM550.7 280.7h1.4v1.4h-1.4zM568.7 280.9h1.4v1.4h-1.4zM565.0 292.9h1.4v1.4h-1.4zM556.0 297.9h1.4v1.4h-1.4zM549.4 283.1h1.4v1.4h-1.4zM559.3 280.6h1.4v1.4h-1.4zM567.8 285.4h1.4v1.4h-1.4zM552.2 281.1h1.4v1.4h-1.4zM563.2 290.1h1.4v1.4h-1.4zM563.2 294.8h1.4v1.4h-1.4zM567.2 301.7h1.4v1.4h-1.4zM564.5 284.5h1.4v1.4h-1.4zM559.7 284.0h1.4v1.4h-1.4zM549.2 290.7h1.4v1.4h-1.4zM565.1 284.0h1.4v1.4h-1.4zM555.2 287.8h1.4v1.4h-1.4zM564.8 291.8h1.4v1.4h-1.4zM562.9 297.1h1.4v1.4h-1.4zM557.9 297.9h1.4v1.4h-1.4zM569.5 282.0h1.4v1.4h-1.4zM570.1 296.3h1.4v1.4h-1.4zM551.9 290.2h1.4v1.4h-1.4zM563.1 300.6h1.4v1.4h-1.4zM557.5 292.9h1.4v1.4h-1.4zM568.9 298.0h1.4v1.4h-1.4zM570.3 290.5h1.4v1.4h-1.4zM563.7 284.6h1.4v1.4h-1.4zM565.3 298.5h1.4v1.4h-1.4zM563.5 296.2h1.4v1.4h-1.4zM553.8 300.3h1.4v1.4h-1.4zM571.2 302.1h1.4v1.4h-1.4zM561.1 297.9h1.4v1.4h-1.4zM556.2 300.6h1.4v1.4h-1.4zM568.3 287.9h1.4v1.4h-1.4zM550.9 290.0h1.4v1.4h-1.4zM561.4 297.4h1.4v1.4h-1.4zM560.0 280.6h1.4v1.4h-1.4zM567.3 281.4h1.4v1.4h-1.4zM567.1 283.9h1.4v1.4h-1.4zM556.6 297.8h1.4v1.4h-1.4zM552.2 283.4h1.4v1.4h-1.4zM560.7 296.4h1.4v1.4h-1.4zM568.0 295.6h1.4v1.4h-1.4zM570.4 291.1h1.4v1.4h-1.4zM570.5 281.9h1.4v1.4h-1.4zM554.0 291.9h1.4v1.4h-1.4zM555.6 296.5h1.4v1.4h-1.4zM563.4 291.8h1.4v1.4h-1.4zM568.1 292.7h1.4v1.4h-1.4zM556.0 288.6h1.4v1.4h-1.4zM568.1 300.4h1.4v1.4h-1.4zM553.7 299.2h1.4v1.4h-1.4zM570.9 291.8h1.4v1.4h-1.4zM561.9 284.5h1.4v1.4h-1.4zM561.1 291.4h1.4v1.4h-1.4zM562.7 280.6h1.4v1.4h-1.4zM570.9 291.7h1.4v1.4h-1.4zM558.1 298.1h1.4v1.4h-1.4zM561.7 291.1h1.4v1.4h-1.4zM564.6 281.5h1.4v1.4h-1.4zM561.2 289.4h1.4v1.4h-1.4zM570.6 300.9h1.4v1.4h-1.4zM555.1 290.7h1.4v1.4h-1.4zM551.9 289.8h1.4v1.4h-1.4zM567.4 300.4h1.4v1.4h-1.4zM559.8 287.2h1.4v1.4h-1.4zM553.3 294.0h1.4v1.4h-1.4zM569.9 282.9h1.4v1.4h-1.4zM566.6 280.5h1.4v1.4h-1.4zM553.4 285.1h1.4v1.4h-1.4zM564.5 287.3h1.4v1.4h-1.4zM557.0 294.0h1.4v1.4h-1.4zM551.4 296.5h1.4v1.4h-1.4zM551.8 291.5h1.4v1.4h-1.4zM554.7 284.5h1.4v1.4h-1.4zM561.0 289.9h1.4v1.4h-1.4zM557.5 289.3h1.4v1.4h-1.4zM561.0 283.6h1.4v1.4h-1.4zM553.6 294.3h1.4v1.4h-1.4zM563.4 292.0h1.4v1.4h-1.4zM568.2 293.8h1.4v1.4h-1.4zM568.4 285.3h1.4v1.4h-1.4zM565.7 298.3h1.4v1.4h-1.4zM569.4 287.1h1.4v1.4h-1.4zM556.1 300.9h1.4v1.4h-1.4zM553.9 302.6h1.4v1.4h-1.4zM569.1 283.0h1.4v1.4h-1.4zM554.4 296.4h1.4v1.4h-1.4zM554.9 282.2h1.4v1.4h-1.4zM567.8 289.5h1.4v1.4h-1.4zM566.9 282.8h1.4v1.4h-1.4zM558.1 295.5h1.4v1.4h-1.4zM549.4 284.5h1.4v1.4h-1.4zM564.4 300.6h1.4v1.4h-1.4zM570.9 282.6h1.4v1.4h-1.4zM560.4 297.1h1.4v1.4h-1.4zM560.4 295.5h1.4v1.4h-1.4zM553.3 281.6h1.4v1.4h-1.4zM551.4 280.8h1.4v1.4h-1.4zM561.5 291.6h1.4v1.4h-1.4zM561.9 283.3h1.4v1.4h-1.4zM553.2 284.6h1.4v1.4h-1.4zM568.0 302.4h1.4v1.4h-1.4zM569.9 282.2h1.4v1.4h-1.4zM550.4 301.5h1.4v1.4h-1.4zM559.4 297.3h1.4v1.4h-1.4zM556.4 290.6h1.4v1.4h-1.4zM560.6 289.7h1.4v1.4h-1.4zM562.6 280.3h1.4v1.4h-1.4zM564.8 299.1h1.4v1.4h-1.4zM553.1 290.3h1.4v1.4h-1.4zM565.7 289.2h1.4v1.4h-1.4zM553.4 283.7h1.4v1.4h-1.4zM560.6 280.3h1.4v1.4h-1.4zM569.2 298.1h1.4v1.4h-1.4zM564.9 299.5h1.4v1.4h-1.4zM563.2 289.1h1.4v1.4h-1.4zM562.6 291.4h1.4v1.4h-1.4zM571.2 298.2h1.4v1.4h-1.4zM554.8 300.6h1.4v1.4h-1.4zM565.8 297.6h1.4v1.4h-1.4zM567.4 289.2h1.4v1.4h-1.4zM569.3 299.9h1.4v1.4h-1.4zM564.7 297.3h1.4v1.4h-1.4zM566.3 289.2h1.4v1.4h-1.4zM565.3 281.6h1.4v1.4h-1.4zM556.7 290.6h1.4v1.4h-1.4zM549.2 288.0h1.4v1.4h-1.4zM563.4 294.1h1.4v1.4h-1.4zM554.2 301.3h1.4v1.4h-1.4zM564.1 287.6h1.4v1.4h-1.4zM563.9 292.9h1.4v1.4h-1.4zM561.0 288.8h1.4v1.4h-1.4zM571.6 294.5h1.4v1.4h-1.4zM564.8 297.2h1.4v1.4h-1.4zM571.1 280.5h1.4v1.4h-1.4zM562.9 296.7h1.4v1.4h-1.4zM554.8 289.1h1.4v1.4h-1.4zM550.1 284.4h1.4v1.4h-1.4z" fill="#000"/><g><line x1="550.5" y1="331" x2="560" y2="340.5" stroke="#9a9a9a" stroke-width="1.3"/><line x1="567" y1="336" x2="552" y2="351.5" stroke="#1f4fd0" stroke-width="3.6" stroke-linecap="round"/><line x1="566" y1="337" x2="553" y2="350.3" stroke="#6f9bff" stroke-width="1"/><path d="M564.5 336.5 L566 331.5 L568.5 333.5 L570 331 L571.5 334 L569 338 Z" fill="#cfcfcf" stroke="#8a8a8a" stroke-width="0.8"/><line x1="560" y1="341" x2="570" y2="351.5" stroke="#a81414" stroke-width="4" stroke-linecap="round"/><line x1="560.5" y1="340.3" x2="570.2" y2="350.5" stroke="#e05050" stroke-width="1"/><line x1="556" y1="353.5" x2="568" y2="353.5" stroke="#888" stroke-width="1"/></g><rect x="555" y="382" width="3.75" height="12" fill="#ff00ff"/><rect x="558.7" y="382" width="3.75" height="12" fill="#0000ff"/><rect x="562.4" y="382" width="3.75" height="12" fill="#00ffff"/><rect x="566.1" y="382" width="3.75" height="12" fill="#00ff00"/><rect x="569.8" y="382" width="3.75" height="12" fill="#ffff00"/><rect x="573.5" y="382" width="3.75" height="12" fill="#ff0000"/><rect x="555" y="394" width="22.2" height="12" fill="#ffff00"/></svg><svg style="position:absolute;left:0;top:0" width="1240" height="650" font-family="Liberation Sans, sans-serif"><text x="939.5" y="99" font-size="22" font-weight="bold" text-anchor="middle" xml:space="preserve">Radial Intensity Data</text><text x="939.5" y="124" font-size="22" font-weight="bold" text-anchor="middle" xml:space="preserve">Run ID: DNA-Standards</text><text x="939.5" y="149" font-size="22" font-weight="bold" text-anchor="middle" xml:space="preserve">Cell: 3  Channel: B  Wavelength: 260</text><rect x="652" y="159" width="574" height="428" fill="#a8a8a8"/><rect x="654" y="161" width="572" height="426" fill="#000"/><path d="M676.5 161V587M693.5 161V587M711.5 161V587M729.5 161V587M746.5 161V587M764.5 161V587M781.5 161V587M799.5 161V587M817.5 161V587M834.5 161V587M852.5 161V587M869.5 161V587M887.5 161V587M905.5 161V587M922.5 161V587M940.5 161V587M957.5 161V587M975.5 161V587M993.5 161V587M1010.5 161V587M1028.5 161V587M1045.5 161V587M1063.5 161V587M1081.5 161V587M1098.5 161V587M1116.5 161V587M1134.5 161V587M1151.5 161V587M1169.5 161V587M1186.5 161V587M1204.5 161V587M1222.5 161V587M654 539.5H1226M654 453.5H1226M654 366.5H1226M654 280.5H1226M654 194.5H1226" stroke="#fff" stroke-width="1" stroke-dasharray="1 2" fill="none"/><path d="M649.5 165V582M645.5 573.5H649.5M645.5 556.5H649.5M641.5 539.5H649.5M645.5 522.5H649.5M645.5 504.5H649.5M645.5 487.5H649.5M645.5 470.5H649.5M641.5 453.5H649.5M645.5 435.5H649.5M645.5 418.5H649.5M645.5 401.5H649.5M645.5 384.5H649.5M641.5 366.5H649.5M645.5 349.5H649.5M645.5 332.5H649.5M645.5 315.5H649.5M645.5 297.5H649.5M641.5 280.5H649.5M645.5 263.5H649.5M645.5 246.5H649.5M645.5 228.5H649.5M645.5 211.5H649.5M641.5 194.5H649.5M645.5 177.5H649.5" stroke="#000" stroke-width="1" fill="none"/><text x="636" y="544.4" font-size="14" text-anchor="end">0</text><text x="636" y="458.1" font-size="14" text-anchor="end">1</text><text x="636" y="371.9" font-size="14" text-anchor="end">2</text><text x="636" y="285.6" font-size="14" text-anchor="end">3</text><text x="636" y="199.4" font-size="14" text-anchor="end">4</text><path d="M658 591.5H1221M676.5 591V595M693.5 591V599M711.5 591V595M729.5 591V597M746.5 591V595M764.5 591V599M781.5 591V595M799.5 591V597M817.5 591V595M834.5 591V599M852.5 591V595M869.5 591V597M887.5 591V595M905.5 591V599M922.5 591V595M940.5 591V597M957.5 591V595M975.5 591V599M993.5 591V595M1010.5 591V597M1028.5 591V595M1046.5 591V599M1063.5 591V595M1081.5 591V597M1098.5 591V595M1116.5 591V599M1134.5 591V595M1151.5 591V597M1169.5 591V595M1186.5 591V599M1204.5 591V595" stroke="#000" stroke-width="1" fill="none"/><text x="692.5" y="616" font-size="14" text-anchor="middle">5.8</text><text x="762.9" y="616" font-size="14" text-anchor="middle">6</text><text x="833.4" y="616" font-size="14" text-anchor="middle">6.2</text><text x="903.8" y="616" font-size="14" text-anchor="middle">6.4</text><text x="974.3" y="616" font-size="14" text-anchor="middle">6.6</text><text x="1044.7" y="616" font-size="14" text-anchor="middle">6.8</text><text x="1115.1" y="616" font-size="14" text-anchor="middle">7</text><text x="1185.6" y="616" font-size="14" text-anchor="middle">7.2</text><text x="939" y="634" font-size="16" font-weight="bold" text-anchor="middle">Radius (in cm)</text><text transform="translate(622.5,375.5) rotate(-90)" font-size="16" font-weight="bold" text-anchor="middle">Intensity</text><g fill="none" stroke-linejoin="round"><path d="M734 560.8 735.5 533.8 738 518.1 739 508.3 740 503.9 741 500.4 742 499 743 499.7 748 499.6 753 499.7 758 499.1 763 499.3 768 499.5 773 499.5 778 499.4 783 499.2 788 499.2 793 499.5 798 499.8 803 499.9 808 500.5 813 500.9 818 500.7 823 501.3 828 501.5 833 501.4 838 501.6 843 501.9 848 501.5 853 501.8 858 502.6 863 502.7 868 503.3 873 503.4 878 503.2 883 503.8 888 503.6 893 503.3 898 503.2 903 503.3 908 503.7 913 504.2 918 504 923 503.7 928 503.4 933 503.3 938 504.3 943 503.6 948 504.3 953 504.3 958 503.7 963 503.7 968 503.8 973 503.9 978 503.3 983 503.5 988 503.6 993 503.5 998 503.4 1003 503.2 1008 503.1 1013 503.3 1018 503.3 1023 503.2 1028 503.4 1033 503.5 1038 503 1043 503.4 1048 503.3 1053 502.9 1058 503 1063 503 1068 502.4 1073 502.5 1078 503 1083 503.2 1088 504 1093 504.3 1098 504.2 1103 505.1 1108 505.2 1113 505.3 1118 505.5 1123 506 1128 505.7 1133 505.3 1138 504.2 1143 503 1148 501.8 1153 500.8 1158 501.1 1163 499.7 1168 499.7 1173 499" stroke="#ff00f2" stroke-width="1.60"/><path d="M734.2 562.1 735.6 536.4 738 533.6 739 528.4 740 522.5 741 514.7 742 508.4 743 504.4 744 502.6 745 501.2 746 500.2 747 499.9 748 499.8 753 498.9 758 499 763 499.5 768 499.6 773 499.7 778 498.7 783 499.9 788 499.1 793 499 798 499.9 803 500.6 808 500.6 813 500.7 818 500.9 823 501 828 501.3 833 501.5 838 502.4 843 502.2 848 502.4 853 502.5 858 502.6 863 502.8 868 503.2 873 502.8 878 503.4 883 503.9 888 503.8 893 503.6 898 503.2 903 503.8 908 503.5 913 503.5 918 503.4 923 504.2 928 503.8 933 503.7 938 503.9 943 503.4 948 503.7 953 503.5 958 503.8 963 503.8 968 503.8 973 503.1 978 503.2 983 503.6 988 503.7 993 503.7 998 502.7 1003 503.9 1008 503.1 1013 502.8 1018 503.4 1023 503.8 1028 503.6 1033 503.4 1038 503.3 1043 503 1048 503.1 1053 503.1 1058 503.7 1063 503.3 1068 503.3 1073 503.1 1078 503 1083 503.3 1088 503.8 1093 503.6 1098 504.5 1103 505.2 1108 505.4 1113 505.6 1118 505.5 1123 506.5 1128 505.6 1133 504.6 1138 503.6 1143 503.5 1148 502.1 1153 501.3 1158 500.8 1163 499.5 1168 499.1 1173 498.2" stroke="#ec00ff" stroke-width="1.61"/><path d="M734.2 561.6 735.7 536.7 738 540.1 739 536.9 740 533.5 741 528.7 742 523.9 743 517.1 744 512 745 507.1 746 503.9 747 501.9 748 500.7 749 500.4 750 500.2 753 499.7 758 499.7 763 499.6 768 499.3 773 499.2 778 499.8 783 499.2 788 499.7 793 499.9 798 500.2 803 500.4 808 500.5 813 500.9 818 501.1 823 501.3 828 502.2 833 501.7 838 501.8 843 501.9 848 502.2 853 502.4 858 503.1 863 502.8 868 502.9 873 503.8 878 503.6 883 503.4 888 503.5 893 503.3 898 503.9 903 503.5 908 504.2 913 503.6 918 503.7 923 504.2 928 504.2 933 503.5 938 504.2 943 504 948 503.9 953 503.8 958 503.7 963 503.5 968 503.4 973 503.8 978 503.8 983 503.7 988 503.3 993 503.3 998 503.8 1003 503.2 1008 503.7 1013 503.6 1018 503.7 1023 503.6 1028 503.4 1033 503.5 1038 503.5 1043 503.4 1048 504 1053 503.2 1058 503.1 1063 503 1068 503 1073 503.1 1078 503.4 1083 503.2 1088 503.5 1093 504.6 1098 504.6 1103 504.8 1108 505.2 1113 505.3 1118 506.2 1123 506.2 1128 506.3 1133 504.7 1138 503.9 1143 503.5 1148 502.6 1153 501.1 1158 501 1163 500.2 1168 499.3 1173 498.4" stroke="#cc00ff" stroke-width="1.61"/><path d="M734.1 563.5 735.8 536.8 738 542 739 541.7 740 539.2 741 536.7 742 533.5 743 529.6 744 525.3 745 519.8 746 513.7 747 509.4 748 505.7 749 503.9 750 502 751 501 752 500 753 501 754 499.8 758 499.9 763 499.5 768 500.1 773 500.1 778 499.9 783 499.5 788 499.5 793 500 798 500.8 803 500.4 808 500.6 813 500.5 818 500.6 823 501.7 828 501.6 833 501.7 838 502 843 502.2 848 502.6 853 502.1 858 503.2 863 502.6 868 503.2 873 503.4 878 503.6 883 503.8 888 503.9 893 503.9 898 503.7 903 503.4 908 503.8 913 504.3 918 503.8 923 503.7 928 503.7 933 503.7 938 504 943 503.9 948 503.6 953 503.7 958 503.9 963 503.9 968 503.4 973 504.5 978 504.1 983 503.6 988 504.2 993 504.2 998 504 1003 503.5 1008 503.5 1013 503.8 1018 504.3 1023 503.6 1028 503.5 1033 503.1 1038 502.9 1043 503.8 1048 503.4 1053 503.3 1058 503.3 1063 503.3 1068 503.4 1073 502.8 1078 503.6 1083 503 1088 503.9 1093 504.2 1098 504.6 1103 505.1 1108 505.5 1113 505.9 1118 506.1 1123 506.1 1128 505.8 1133 505.4 1138 504 1143 502.9 1148 502.1 1153 501.2 1158 500.9 1163 500 1168 499 1173 498.3" stroke="#ac00ff" stroke-width="1.62"/><path d="M733.9 563.3 735.9 536 738 542 739 542 740 542.1 741 541.1 742 539.1 743 536.3 744 532.9 745 530.5 746 525.9 747 521.7 748 516.3 749 511.8 750 507.8 751 505.8 752 503.5 753 501.7 754 500.8 755 500.7 756 499.9 757 500.1 758 499.9 763 499.4 768 499.6 773 499.5 778 499.4 783 499.5 788 499.4 793 499.6 798 499.9 803 500.6 808 499.9 813 500.9 818 501.5 823 501.4 828 501.4 833 501.9 838 501.9 843 502.2 848 501.8 853 502.3 858 502.1 863 502.5 868 503.2 873 503.3 878 503.9 883 503.5 888 503.5 893 504 898 503.9 903 504 908 503.8 913 504 918 504.2 923 504.7 928 504 933 504.6 938 504.1 943 504.5 948 503.8 953 504.1 958 504 963 503.8 968 503.8 973 503.4 978 503.8 983 503.5 988 503.7 993 503.5 998 503.4 1003 503.5 1008 503.3 1013 503.4 1018 503.4 1023 503.8 1028 502.8 1033 503.5 1038 503.9 1043 503.5 1048 503.2 1053 503.4 1058 503.3 1063 503.3 1068 502.7 1073 502.9 1078 502.5 1083 502.9 1088 503.8 1093 504.1 1098 505 1103 504.9 1108 505.1 1113 506 1118 506.3 1123 506.7 1128 505.8 1133 505.1 1138 504.4 1143 504 1148 502.3 1153 502.1 1158 500.9 1163 500.6 1168 499.2 1173 498.7" stroke="#8c00ff" stroke-width="1.62"/><path d="M734 560.2 736 530.8 738 542 739 542 740 542.1 741 542.1 742 542.2 743 540.8 744 538.8 745 536 746 533.3 747 530.3 748 527.4 749 523 750 518.3 751 514.3 752 510.2 753 506.9 754 505.1 755 503.1 756 502.2 757 501.6 758 500.4 759 500.7 760 499.9 763 499.6 768 499.2 773 499.9 778 498.7 783 499.6 788 499.4 793 499.8 798 499.8 803 500.3 808 500.8 813 500.7 818 501.5 823 502 828 501.6 833 501.6 838 502.2 843 501.9 848 501.9 853 502.9 858 502.6 863 502.7 868 503.1 873 503.3 878 503.3 883 503.6 888 503.3 893 503.8 898 503.7 903 503.5 908 503.9 913 503.8 918 504 923 504.2 928 504.6 933 504.1 938 504.3 943 504.2 948 503.6 953 504.4 958 503.5 963 504 968 504.2 973 503.8 978 503.5 983 503.6 988 503.3 993 503.9 998 502.7 1003 503.6 1008 503.3 1013 503.6 1018 503.3 1023 503.5 1028 503.7 1033 503.4 1038 503.9 1043 504.1 1048 503.4 1053 503.2 1058 503.5 1063 503 1068 502.7 1073 503.5 1078 503 1083 503.2 1088 503.7 1093 504.1 1098 504.3 1103 505 1108 505 1113 505.8 1118 506 1123 506.2 1128 506 1133 505 1138 504.2 1143 503.5 1148 502.9 1153 501.7 1158 501.2 1163 500.3 1168 499 1173 499" stroke="#6c00ff" stroke-width="1.63"/><path d="M734.1 563.6 736.1 532.7 738 542 739 542 740.1 542.1 741.1 542.1 742.2 542.2 743 542.2 743.2 542.2 744.3 541.6 745.3 539.8 746.3 538 747.4 535.2 748 533.6 748.4 532.5 749.5 529.1 750.5 526.6 751.6 521.7 752.6 517.5 753 515.5 753.6 513.1 754.7 509.7 755.7 506.4 756.8 504.1 757.8 503.4 758 502.7 758.9 501.8 759.9 501.3 760.9 501 762 500.4 763 499.8 768 499.8 773 499.5 778 499.3 783 499.8 788 499.9 793 499.9 798 499.9 803 500.6 808 500.1 813 500.9 818 501.3 823 501.1 828 501.8 833 502 838 501.8 843 502.6 848 502.5 853 502.4 858 502.6 863 502.8 868 503.3 873 503.3 878 503.8 883 503.5 888 503.4 893 503.4 898 503.8 903 503.9 908 503.9 913 504.5 918 504.1 923 504.3 928 504 933 504.5 938 504.4 943 504.7 948 504.1 953 503.9 958 503.9 963 503.8 968 503.8 973 503.8 978 503.7 983 503.4 988 503.8 993 503.5 998 503.3 1003 503.7 1008 503.9 1013 503.6 1018 503.4 1023 503.8 1028 503 1033 503.5 1038 503.7 1043 503.2 1048 503.6 1053 503.5 1058 503.2 1063 503.7 1068 503.4 1073 503 1078 503 1083 503.2 1088 503.9 1093 504.1 1098 504.8 1103 504.8 1108 505.1 1113 505.4 1118 506.2 1123 506.6 1128 505.9 1133 505.6 1138 504.3 1143 503.6 1148 502.3 1153 502.1 1158 501.2 1163 500.8 1168 499.5 1173 498.5" stroke="#4c00ff" stroke-width="1.63"/><path d="M734.1 563.2 736.2 537.7 738 542 739.3 542.1 740.4 542.1 741.5 542.2 742.6 542.2 743 542.2 743.8 542.3 744.9 542.3 746 541.8 747.1 540 748 538.5 748.2 538.1 749.3 535.4 750.5 532.3 751.6 529.2 752.7 526.7 753 525.5 753.8 522.3 754.9 517.3 756 513.6 757.2 509.4 758 507 758.3 506.3 759.4 504 760.5 503.6 761.6 501.9 762.7 501.4 763 501.4 763.9 501 765 500.2 766.1 500 768 499.8 773 499.3 778 500.1 783 499.2 788 499.9 793 500.1 798 499.6 803 500.8 808 500.3 813 501.1 818 501.1 823 501.1 828 501.7 833 501.8 838 502.2 843 502.6 848 502.6 853 502.6 858 502.2 863 502.7 868 502.9 873 503.1 878 503.6 883 503.7 888 503.9 893 503.9 898 503.9 903 503.8 908 503.8 913 504.3 918 504.1 923 504.4 928 504.1 933 504 938 504 943 504 948 504 953 504.4 958 503.8 963 503.9 968 504.1 973 503.9 978 503.4 983 504 988 503.6 993 503.3 998 504.2 1003 503.2 1008 503.9 1013 503.9 1018 503.1 1023 504 1028 503.2 1033 503.8 1038 503.4 1043 503.2 1048 503.5 1053 503.3 1058 503.5 1063 503.7 1068 503.5 1073 503.2 1078 502.6 1083 503.1 1088 503.5 1093 503.9 1098 504.6 1103 505 1108 505.5 1113 505.9 1118 506.2 1123 506.5 1128 505.8 1133 505.4 1138 504.3 1143 503.7 1148 502.5 1153 501.6 1158 500.9 1163 500.2 1168 499.4 1173 499.1" stroke="#2d00ff" stroke-width="1.64"/><path d="M734.2 560.3 736.3 534.2 738 542 740.7 542.1 741.9 542.2 743 542.2 744.2 542.3 745.4 542.3 746.6 542.4 747.8 541.9 748 541.6 749 539.9 750.2 537.8 751.3 535.4 752.5 532.6 753 531.6 753.7 529.7 754.9 525.9 756.1 522 757.3 517.3 758 515.1 758.5 513.4 759.7 510.3 760.8 506.9 762 504.8 763 503.5 763.2 503.3 764.4 502.6 765.6 501.4 766.8 501 768 500.2 769.1 500.5 770.3 500 773 500 778 499.8 783 499.6 788 499.7 793 500.4 798 500.2 803 500.5 808 500.4 813 501 818 501 823 501.6 828 501.2 833 501.4 838 502.2 843 501.7 848 502.8 853 502.8 858 501.9 863 502.8 868 503.7 873 503.5 878 502.9 883 504.1 888 503 893 503.9 898 504.1 903 503.5 908 503.9 913 504.2 918 504 923 504.3 928 503.8 933 503.9 938 504.1 943 503.8 948 503.5 953 503.9 958 503.8 963 504.7 968 503.8 973 503.9 978 504.1 983 503.9 988 503.6 993 503.9 998 503.8 1003 503.5 1008 503.6 1013 504.2 1018 503.7 1023 503.7 1028 503.3 1033 503.7 1038 503.4 1043 503.6 1048 503 1053 502.9 1058 503.5 1063 502.8 1068 503.7 1073 503.4 1078 502.3 1083 503.3 1088 504.3 1093 504.4 1098 503.9 1103 505.5 1108 504.6 1113 505.9 1118 506.4 1123 506.2 1128 505.9 1133 505.3 1138 504.2 1143 503.5 1148 502.2 1153 501.5 1158 500.9 1163 499.9 1168 498.9 1173 498.6" stroke="#0d00ff" stroke-width="1.64"/><path d="M734.2 565.5 736.4 534.2 738 542 742.1 542.2 743 542.2 743.3 542.2 744.6 542.3 745.8 542.4 747.1 542.4 748 542.5 748.3 542.5 749.6 542 750.9 540.1 752.1 537.9 753 536.7 753.4 535.9 754.6 533 755.9 530.2 757.1 526.3 758 524.5 758.4 522.9 759.6 517.8 760.9 513.1 762.1 509.9 763 507.7 763.4 506.9 764.6 504.7 765.9 503.3 767.2 502.2 768 501.4 768.4 501.2 769.7 500.7 770.9 500.8 772.2 500.1 773 500.4 773.4 500.3 778 500 783 499.5 788 499.8 793 499.5 798 500.2 803 500.5 808 500.3 813 501.4 818 500.9 823 500.7 828 501.3 833 502 838 501.9 843 502.6 848 502.7 853 502.8 858 503.1 863 502.8 868 502.9 873 503.8 878 504.2 883 503.9 888 503.2 893 503.4 898 503.9 903 503.1 908 504.4 913 504.5 918 504.2 923 504.4 928 504.7 933 504 938 504.1 943 504.9 948 504.5 953 503.6 958 503.8 963 504 968 504 973 504.3 978 504.5 983 503.8 988 503.6 993 504 998 503.9 1003 503.5 1008 503.8 1013 503.2 1018 503.7 1023 503.7 1028 503.2 1033 504 1038 503.2 1043 502.8 1048 503.1 1053 503.5 1058 503.3 1063 503.7 1068 503.5 1073 503.4 1078 503.5 1083 503.2 1088 503.5 1093 504.6 1098 505.2 1103 505.2 1108 504.9 1113 505.4 1118 506.2 1123 505.8 1128 506.5 1133 505.6 1138 504.4 1143 503.7 1148 503 1153 501.6 1158 500.9 1163 501 1168 499.9 1173 498.3" stroke="#0013ff" stroke-width="1.65"/><path d="M734.2 562.1 736.5 536.5 738 542 743 542.2 743.5 542.2 744.8 542.3 746.1 542.4 747.5 542.4 748 542.5 748.8 542.5 750.1 542.5 751.4 542.1 752.7 540.4 753 539.9 754.1 538.2 755.4 535.2 756.7 532.9 758 530.1 759.3 526.4 760.7 523 762 517.5 763 514.1 763.3 513.2 764.6 509.5 765.9 507.4 767.3 505.2 768 503.6 768.6 502.9 769.9 501.6 771.2 501 772.5 500.7 773 500.4 773.9 500.2 775.2 500.4 778 500.3 783 499.7 788 499.6 793 499.6 798 499.9 803 500.3 808 500.5 813 500.5 818 501.2 823 501.1 828 501.5 833 502.6 838 502 843 502.1 848 502.6 853 503.1 858 502.7 863 503.3 868 503.3 873 503.2 878 503.8 883 504 888 503.7 893 503.8 898 504.1 903 503.3 908 504.3 913 504.1 918 504.2 923 503.8 928 504.3 933 504.2 938 503.9 943 504.8 948 504.3 953 503.7 958 503.9 963 503.8 968 504.1 973 503.9 978 504.1 983 503.8 988 503.6 993 503.5 998 504.1 1003 503.6 1008 503.6 1013 503.4 1018 503.4 1023 503.5 1028 503.4 1033 503.1 1038 503.5 1043 503.2 1048 503.3 1053 504.1 1058 503.3 1063 503.2 1068 503.4 1073 503.7 1078 503.1 1083 503.8 1088 503.9 1093 504.1 1098 504.8 1103 505.3 1108 505.4 1113 505.8 1118 506.4 1123 506 1128 506.3 1133 505.2 1138 504.4 1143 503.1 1148 502.7 1153 501.8 1158 500.7 1163 500.9 1168 499.7 1173 498.4" stroke="#0033ff" stroke-width="1.65"/><path d="M734.3 563.9 736.6 533.6 738 542 743 542.2 745 542.3 746.4 542.4 747.7 542.4 748 542.5 749.1 542.5 750.5 542.6 751.9 542.6 753 542.5 753.3 542.2 754.6 540.2 756 538.3 757.4 535.9 758 535 758.8 533.3 760.2 530.1 761.6 526.2 762.9 522.2 763 522.5 764.3 518 765.7 513.2 767.1 509.9 768 507.7 768.5 506.8 769.9 503.9 771.2 503.4 772.6 502.3 773 502.2 774 501.9 775.4 500.7 776.8 501 778 499.8 778.1 499.8 779.5 500.6 783 500.3 788 499.8 793 500.3 798 500.2 803 500.8 808 500.8 813 500.7 818 501.2 823 502 828 502.2 833 501.8 838 502.5 843 501.9 848 502.9 853 502.3 858 503.2 863 503.5 868 502.7 873 503.6 878 503.7 883 503.6 888 504.1 893 503.7 898 503.6 903 504 908 503.7 913 504.3 918 503.9 923 503.8 928 504 933 504.4 938 504 943 503.9 948 504.8 953 504.1 958 504.6 963 504.2 968 503.8 973 504.3 978 504.4 983 504.1 988 503.7 993 504 998 503.3 1003 504.1 1008 503.7 1013 504 1018 503.7 1023 504 1028 503.7 1033 503.3 1038 503.5 1043 504.1 1048 504 1053 503.4 1058 503.8 1063 503 1068 503.7 1073 503 1078 503.6 1083 503.9 1088 503.3 1093 504.4 1098 504.8 1103 504.9 1108 505.8 1113 505.7 1118 506 1123 506.7 1128 505.7 1133 505.4 1138 504.1 1143 503.1 1148 502.3 1153 501.9 1158 500.9 1163 500 1168 500.2 1173 498.8" stroke="#0053ff" stroke-width="1.66"/><path d="M734.1 560.3 736.7 535.8 738 542 743 542.2 746.4 542.4 747.9 542.5 748 542.5 749.3 542.5 750.8 542.6 752.2 542.6 753 542.7 753.7 542.7 755.1 542.3 756.6 540.5 758 538.4 759.4 535.9 760.9 533.4 762.3 529.8 763 528.6 763.8 526.8 765.2 522.5 766.7 517.2 768 513.2 768.1 512.9 769.6 509.7 771 507 772.4 504.5 773 504.1 773.9 503.2 775.3 501.9 776.8 501.8 778 500.8 778.2 500.7 779.7 500.5 781.1 500.1 782.6 500 783 500.2 788 500.6 793 500.4 798 500.6 803 500.3 808 500.8 813 501 818 501 823 501.3 828 502 833 502.3 838 502.2 843 502.7 848 502.3 853 502.8 858 502.8 863 503.2 868 503.4 873 503.4 878 503.9 883 503.7 888 503.9 893 504.1 898 504.1 903 504.1 908 503.9 913 503.5 918 504 923 503.8 928 505 933 504.3 938 504.5 943 504.5 948 503.9 953 504.1 958 504.1 963 504.2 968 503.7 973 504.4 978 504.1 983 504.1 988 503.4 993 503.8 998 503.6 1003 503.9 1008 504.5 1013 504.2 1018 504.1 1023 503.5 1028 503.7 1033 503.7 1038 503.3 1043 503.4 1048 503.8 1053 503.8 1058 503.5 1063 503.8 1068 503.2 1073 503.4 1078 503.2 1083 503.7 1088 504 1093 504.2 1098 505 1103 505.1 1108 505.6 1113 506.1 1118 506.5 1123 506.8 1128 505.9 1133 504.7 1138 504.2 1143 503.1 1148 503.3 1153 501.9 1158 501.4 1163 500.6 1168 499.3 1173 498.8" stroke="#0073ff" stroke-width="1.67"/><path d="M734.1 563.8 736.8 532.2 738 542 743 542.2 747.9 542.5 748 542.5 749.4 542.5 751 542.6 752.5 542.7 753 542.7 754 542.7 755.5 542.8 757 542.3 758 541.1 758.5 540.4 760 538.5 761.5 535.9 763 533.6 764.5 530.6 766 526.2 767.5 522.2 768 521.6 769 517.4 770.5 513.6 772 509.8 773 508 773.5 507.2 775 505 776.5 503.6 778 502.1 779.5 501.2 781 500.7 782.5 500.6 783 500.5 784.1 500.1 788 499.7 793 499.9 798 500.7 803 500.8 808 500.5 813 501.1 818 501.6 823 501.6 828 501.8 833 502.2 838 502.2 843 502.6 848 502.9 853 502.9 858 503 863 503.4 868 503.7 873 503.3 878 503.7 883 503.8 888 503.4 893 503.9 898 503.8 903 504.7 908 504.1 913 504.3 918 504.1 923 504.1 928 504 933 505.1 938 504.6 943 504.2 948 504.3 953 504.4 958 505 963 503.6 968 504.3 973 503.9 978 503.8 983 504.6 988 504.7 993 504 998 503.6 1003 503.8 1008 503.5 1013 503.6 1018 504.2 1023 504 1028 503.5 1033 503.7 1038 503.9 1043 503.6 1048 503.6 1053 503.7 1058 503.5 1063 503.7 1068 503.8 1073 503.5 1078 503.3 1083 503.8 1088 504.3 1093 504.1 1098 504.7 1103 505.1 1108 505.1 1113 505.9 1118 506.1 1123 507.4 1128 506.1 1133 505.5 1138 504.3 1143 503.4 1148 502.4 1153 502.6 1158 501.4 1163 500.3 1168 499.6 1173 499.1" stroke="#0093ff" stroke-width="1.67"/><path d="M738 542 743 542.2 748 542.5 749.5 542.5 751 542.6 752.6 542.7 753 542.7 754.1 542.7 755.7 542.8 757.3 542.9 758 542.9 758.8 542.5 760.4 540.9 762 538.2 763 537.2 763.5 536.4 765.1 533.1 766.7 530.1 768 527.5 768.2 527.1 769.8 522.4 771.3 517.7 772.9 513.4 773 513.5 774.5 510.1 776 506.7 777.6 505.1 778 505 779.2 503.6 780.7 501.9 782.3 501.6 783 501.8 783.9 501.5 785.4 500.6 787 500.1 788 500.1 793 500 798 500.5 803 500.5 808 500.4 813 500.6 818 501.6 823 501.8 828 502.4 833 502.1 838 502.6 843 502.9 848 502.3 853 503.1 858 503.3 863 503.1 868 503.3 873 503.9 878 503.7 883 504.1 888 503.8 893 503.7 898 504.3 903 504.1 908 504.9 913 504.5 918 504.2 923 504.5 928 504.7 933 504.2 938 504.4 943 504.5 948 504.5 953 504.2 958 504.5 963 504.2 968 504.9 973 503.7 978 504.4 983 504.5 988 504.3 993 504.2 998 504.4 1003 504.4 1008 503.7 1013 503.6 1018 503.9 1023 503.7 1028 503.3 1033 503.3 1038 504 1043 503.8 1048 504.2 1053 503.7 1058 503.9 1063 504 1068 503.1 1073 503.7 1078 503.6 1083 503.6 1088 503.9 1093 504.7 1098 504.7 1103 505.4 1108 505.5 1113 505.7 1118 506.7 1123 506.8 1128 507 1133 505.6 1138 504.4 1143 503.7 1148 503.1 1153 501.7 1158 501.3 1163 500.6 1168 499.9 1173 498.9" stroke="#00b2ff" stroke-width="1.68"/><path d="M738 542 743 542.2 748 542.5 751 542.6 752.6 542.7 753 542.7 754.2 542.7 755.9 542.8 757.5 542.9 758 542.9 759.1 543 760.7 542.5 762.3 540.8 763 540 764 538.7 765.6 535.8 767.2 533.6 768 531.9 768.8 530.3 770.4 527.3 772.1 522.4 773 519.8 773.7 517.8 775.3 513.2 776.9 510.4 778 508.2 778.5 507.4 780.2 505.1 781.8 503.4 783 503.1 783.4 502.9 785 501.5 786.6 501.7 788 500.4 788.3 500.4 789.9 500.6 793 500.6 798 500.6 803 500.9 808 500.5 813 500.8 818 501.3 823 501.3 828 501.7 833 502.2 838 502.4 843 502.3 848 502.9 853 502.9 858 503.2 863 503.3 868 503.7 873 503.4 878 503.8 883 504.2 888 504.1 893 504.1 898 504 903 504.1 908 504 913 504.2 918 504.7 923 504.4 928 505.1 933 504.5 938 504 943 504 948 504.8 953 504.3 958 504.4 963 503.9 968 504 973 504.1 978 504.4 983 504.5 988 504.3 993 504 998 504.1 1003 504.4 1008 503.6 1013 504.1 1018 504 1023 504.1 1028 503.4 1033 503.5 1038 503.7 1043 503.4 1048 503.5 1053 503.8 1058 503.7 1063 503.4 1068 503.7 1073 503.6 1078 503.6 1083 503.7 1088 504.3 1093 504.2 1098 504.8 1103 505.5 1108 505.8 1113 506.2 1118 506.4 1123 506.8 1128 506.1 1133 505.3 1138 504.8 1143 503.7 1148 503.5 1153 502.1 1158 500.8 1163 500.1 1168 500.2 1173 499" stroke="#00d2ff" stroke-width="1.68"/><path d="M738 542 743 542.2 748 542.5 752.5 542.7 753 542.7 754.2 542.7 755.9 542.8 757.6 542.9 758 542.9 759.2 543 760.9 543 762.6 542.6 763 542.1 764.3 540.7 766 538.5 767.6 536.7 768 535.2 769.3 533 771 530.1 772.7 526.5 773 526.2 774.3 523.3 776 517.9 777.7 513.6 778 512.7 779.4 509.9 781 506.7 782.7 504.8 783 504.5 784.4 503.3 786.1 502.5 787.8 501.6 788 502.4 789.4 501.5 791.1 500.7 792.8 500.5 793 500.7 794.5 500.6 798 500.5 803 500.9 808 500.8 813 501.1 818 501.2 823 501.6 828 502.3 833 502.2 838 501.9 843 502.1 848 503.2 853 503 858 503 863 503.4 868 503.2 873 503.6 878 503.9 883 504.2 888 503.7 893 504.7 898 504.5 903 504.1 908 504.4 913 504.8 918 504.6 923 504.5 928 505 933 504.3 938 504.4 943 504.3 948 504.9 953 504.4 958 504.5 963 504.1 968 505 973 504.2 978 503.7 983 503.9 988 503.9 993 504.1 998 503.9 1003 503.7 1008 504.8 1013 504 1018 503.9 1023 504.1 1028 503.7 1033 503.7 1038 503.6 1043 503.7 1048 504.1 1053 503.7 1058 503.3 1063 503.2 1068 504.1 1073 503.6 1078 503.4 1083 503.8 1088 503.8 1093 504.5 1098 505 1103 505.5 1108 505.4 1113 506.7 1118 506.8 1123 506.8 1128 506.4 1133 505.9 1138 504.8 1143 503.8 1148 503.4 1153 501.9 1158 501.2 1163 500.4 1168 500.3 1173 499.1" stroke="#00f2ff" stroke-width="1.69"/><path d="M738 542 743 542.2 748 542.5 753 542.7 754.1 542.7 755.8 542.8 757.6 542.9 758 542.9 759.3 543 761 543 762.8 543.1 763 543.1 764.5 542.6 766.2 540.9 768 538.4 769.7 536.3 771.4 533.6 773 530.7 773.2 530.4 774.9 526.9 776.6 522.7 778 518.6 778.3 517.8 780.1 513.7 781.8 510.2 783 507.7 783.5 506.9 785.3 505.2 787 503.8 788 502.7 788.7 502.3 790.5 501.9 792.2 500.7 793 501.5 793.9 501.4 795.7 501.2 798 500.4 803 500.6 808 501 813 501.2 818 501.4 823 502.3 828 502 833 502.1 838 502.3 843 502.9 848 502.4 853 502.3 858 503.7 863 502.9 868 503.4 873 503.9 878 503.8 883 504.7 888 504.3 893 504.2 898 504.1 903 504.1 908 504.7 913 505.2 918 503.8 923 504.2 928 504.6 933 504.2 938 504.4 943 504.9 948 504.1 953 504.3 958 504.2 963 504.4 968 504.2 973 504.5 978 504.5 983 504.2 988 504 993 504.4 998 503.8 1003 503.7 1008 503.8 1013 504.4 1018 503.6 1023 503.7 1028 503.9 1033 503.9 1038 503.8 1043 504.4 1048 503.8 1053 503.7 1058 503.6 1063 504 1068 503.3 1073 503 1078 504.1 1083 503.3 1088 504 1093 504.7 1098 504.8 1103 506 1108 505.9 1113 506.2 1118 506.5 1123 506.8 1128 506.8 1133 506.3 1138 504 1143 503.5 1148 503 1153 501.8 1158 501.2 1163 501 1168 499.5 1173 499" stroke="#00ffec" stroke-width="1.69"/><path d="M738 542 743 542.2 748 542.5 753 542.7 755.7 542.8 757.4 542.9 758 542.9 759.2 543 761 543 762.8 543.1 763 543.1 764.6 543.1 766.4 542.6 768 541 768.2 540.8 770 538.4 771.7 536.9 773 533.8 773.5 533 775.3 530.1 777.1 527 778 525.1 778.9 522.6 780.7 518 782.5 513.5 783 512.1 784.3 510 786 507.4 787.8 505.1 788 504.8 789.6 503.4 791.4 502.4 793 501.9 793.2 501.9 795 501.5 796.8 501 798 501.3 798.6 501.3 800.3 500.7 803 501.4 808 500.7 813 501.8 818 501.8 823 501.7 828 502.3 833 502 838 502.2 843 502.5 848 503 853 503 858 503.6 863 503.8 868 503.7 873 503.5 878 504 883 504.1 888 504.5 893 503.6 898 504.3 903 504.5 908 504.6 913 504.8 918 505.1 923 504.5 928 505 933 504.9 938 504.3 943 504.9 948 504.3 953 504.8 958 504.5 963 504.6 968 503.8 973 504.6 978 505 983 504.6 988 504.2 993 503.8 998 503.9 1003 503.6 1008 503.9 1013 504 1018 504.2 1023 504.5 1028 503.6 1033 504.4 1038 504.1 1043 503.8 1048 504.1 1053 503.5 1058 503.5 1063 503.6 1068 503.9 1073 503.6 1078 504 1083 504.2 1088 504.3 1093 504.3 1098 505 1103 505.4 1108 506.1 1113 505.6 1118 506.7 1123 507.2 1128 506.6 1133 505.9 1138 505.3 1143 503.7 1148 503.4 1153 502.5 1158 501.1 1163 501 1168 499.7 1173 499.5" stroke="#00ffcc" stroke-width="1.70"/><path d="M738 542 743 542.2 748 542.5 753 542.7 757.2 542.9 758 542.9 759.1 543 760.9 543 762.8 543.1 763 543.1 764.6 543.1 766.4 543.2 768 543 768.3 542.7 770.1 540.9 772 538.8 773 537.4 773.8 536.2 775.6 533.6 777.5 530.5 778 529.8 779.3 527.7 781.2 522.8 783 517.9 784.9 513.7 786.7 510.2 788 508.2 788.5 507.5 790.4 505 792.2 503.6 793 503.1 794.1 502.8 795.9 501.9 797.7 501.5 798 500.9 799.6 501.2 801.4 501.4 803 501.8 808 500.7 813 501.2 818 501.4 823 502.5 828 501.9 833 502.5 838 502.5 843 502.6 848 502.9 853 502.8 858 503.5 863 503.9 868 503.2 873 504.2 878 504.1 883 504.3 888 504.4 893 504.2 898 504.1 903 504.8 908 504.3 913 504.6 918 504.9 923 505 928 504.9 933 504 938 504.5 943 504.4 948 504.1 953 504.7 958 504.4 963 504.7 968 504.7 973 504.4 978 504.7 983 503.8 988 504.5 993 504.2 998 504.6 1003 504 1008 504.2 1013 503.9 1018 503.3 1023 504.7 1028 503.5 1033 503.8 1038 503.8 1043 504.6 1048 503.7 1053 504 1058 503.8 1063 503.7 1068 503.7 1073 503.5 1078 503.9 1083 504.3 1088 503.9 1093 505 1098 505.1 1103 505.7 1108 506 1113 506.2 1118 506.5 1123 507.5 1128 506.3 1133 505.7 1138 505 1143 504.2 1148 503.2 1153 501.6 1158 501.3 1163 500.5 1168 499.5 1173 499.4" stroke="#00ffac" stroke-width="1.70"/><path d="M738 542 743 542.2 748 542.5 753 542.7 758 542.9 758.8 542.9 760.7 543 762.6 543.1 763 543.1 764.5 543.1 766.4 543.2 768 543.2 768.3 543.2 770.2 542.7 772.1 540.9 773 539.9 774 538.8 775.9 536.1 777.8 532.8 778 533 779.7 530.7 781.6 526.7 783 524.4 783.4 523.4 785.3 518.6 787.2 513.9 788 512.6 789.1 510.2 791 507.2 792.9 505.2 793 505.5 794.8 504.2 796.7 503.3 798 502.1 798.6 501.9 800.5 501.6 802.4 501.5 803 501.3 804.3 501.4 808 501.2 813 501.9 818 501 823 502 828 501.8 833 503.1 838 502.8 843 502.9 848 502.9 853 502.8 858 503.5 863 503.7 868 503.6 873 503.6 878 503.9 883 503.7 888 504.6 893 504.7 898 504.7 903 504.4 908 504.8 913 504.5 918 504.4 923 505 928 505 933 504.5 938 504.7 943 504.5 948 504 953 504.2 958 504.6 963 504.2 968 504.4 973 504.8 978 504 983 504.1 988 504.7 993 504.2 998 504.1 1003 504.5 1008 504.5 1013 504.4 1018 503.8 1023 503.9 1028 503.9 1033 504.5 1038 503.4 1043 504.1 1048 503.6 1053 504.6 1058 504.1 1063 504 1068 503.7 1073 503.4 1078 503.9 1083 504.1 1088 504.2 1093 504.4 1098 505 1103 505 1108 506.3 1113 506.7 1118 507 1123 507.1 1128 506.9 1133 505.6 1138 504.6 1143 504.3 1148 503.4 1153 502.1 1158 501.5 1163 500.6 1168 499.4 1173 498.9" stroke="#00ff8c" stroke-width="1.71"/><path d="M738 542 743 542.2 748 542.5 753 542.7 758 542.9 760.4 543 762.4 543.1 763 543.1 764.3 543.1 766.3 543.2 768 543.2 768.2 543.2 770.2 543.3 772.1 542.8 773 542.1 774.1 540.9 776 539.1 777.9 536.5 778 536.5 779.9 533.5 781.8 530.8 783 527.9 783.8 526.6 785.7 522.7 787.7 518.1 788 517.8 789.6 514.4 791.6 510.5 793 508.5 793.5 507.8 795.4 505.8 797.4 504.2 798 503.9 799.3 503.2 801.3 502.5 803 501.6 803.2 501.6 805.2 502 807.1 501.3 808 501.4 813 502 818 501.6 823 502.1 828 502.6 833 502.6 838 502.4 843 502.7 848 503 853 502.9 858 503.3 863 503.7 868 503.6 873 504.2 878 504.3 883 504.5 888 504.8 893 504.9 898 504.3 903 504.8 908 504.3 913 504.5 918 504.5 923 504.6 928 504.9 933 505.4 938 504.2 943 505.1 948 504.8 953 504.6 958 504.6 963 504.9 968 504.3 973 504.3 978 504.3 983 504.7 988 504.2 993 504.6 998 504.6 1003 503.7 1008 504.6 1013 504.4 1018 504.3 1023 503.6 1028 503.9 1033 504.5 1038 503.9 1043 504.1 1048 504.4 1053 504.2 1058 503.7 1063 503.8 1068 503.9 1073 503.5 1078 503.7 1083 504.1 1088 504.2 1093 505 1098 505.4 1103 505.8 1108 506.5 1113 506.9 1118 506.7 1123 507.5 1128 506.3 1133 505.6 1138 504.7 1143 503.9 1148 503.2 1153 503 1158 501 1163 501.2 1168 500.2 1173 499.3" stroke="#00ff6c" stroke-width="1.71"/><path d="M738 542 743 542.2 748 542.5 753 542.7 758 542.9 762 543 763 543.1 764 543.1 766 543.1 768 543.2 770 543.2 772 543.3 773 543.3 774 542.8 776 541 778 538.8 780 536.5 782 533.5 783 531.8 784 530.9 786 527.3 788 522.9 790 518.3 792 514.2 793 512.1 794 510.7 796 507.9 798 505.3 800 504.7 802 503.4 803 503 804 502.6 806 502.3 808 502.4 810 501.7 812 501.6 813 501.8 818 500.9 823 502.3 828 501.8 833 502.4 838 503 843 503.3 848 503.1 853 503.3 858 503.9 863 503.9 868 503.7 873 503.7 878 504.2 883 504.5 888 504.4 893 503.6 898 504.9 903 504.1 908 504.7 913 505 918 504.4 923 505.5 928 505 933 505 938 505 943 505.2 948 504.5 953 504.9 958 504.8 963 505.5 968 504.7 973 504.5 978 504.7 983 504.2 988 504.3 993 504.4 998 504.2 1003 504.1 1008 504.2 1013 504.2 1018 503.8 1023 504.3 1028 504.6 1033 504.2 1038 503.2 1043 504.4 1048 503.6 1053 503.9 1058 504.3 1063 504.4 1068 504 1073 503.9 1078 504.2 1083 504.3 1088 504.3 1093 504.5 1098 505.3 1103 505.8 1108 506 1113 505.6 1118 507.3 1123 506.8 1128 506.7 1133 506.1 1138 504.6 1143 504.7 1148 503.3 1153 502.6 1158 501.8 1163 501.3 1168 499.9 1173 499.6" stroke="#00ff4c" stroke-width="1.72"/><path d="M738 542 743 542.2 748 542.5 753 542.7 758 542.9 763 543.1 763.7 543.1 765.7 543.1 767.8 543.2 768 543.2 769.8 543.2 771.9 543.3 773 543.3 773.9 543.3 775.9 542.9 778 540.9 780 539 782.1 536.6 783 535.4 784.1 534 786.2 531.1 788 527.8 788.2 527.5 790.3 523 792.3 518.5 793 516.4 794.4 514.5 796.4 510.5 798 508.3 798.5 507.7 800.5 506 802.6 504 803 504.2 804.6 503.5 806.6 502.8 808 502.7 808.7 502.6 810.7 502.4 812.8 501.8 813 501.8 814.8 502 818 501.8 823 501.9 828 502.2 833 502.4 838 502.9 843 503.1 848 502.7 853 502.9 858 503.6 863 503.6 868 504 873 504.5 878 503.5 883 504.5 888 504.6 893 504.9 898 504.6 903 504.4 908 504.9 913 504.7 918 504.1 923 504.8 928 504.8 933 505.2 938 504.5 943 505 948 504.2 953 504.8 958 505 963 504.4 968 505 973 504.8 978 504.6 983 504.7 988 504.4 993 503.9 998 503.9 1003 504.6 1008 504.5 1013 503.9 1018 504.1 1023 504.2 1028 504.4 1033 504 1038 504 1043 503.9 1048 503.9 1053 503.9 1058 504.2 1063 504.2 1068 503.5 1073 503.5 1078 504 1083 504.1 1088 504.6 1093 505.3 1098 504.5 1103 505.8 1108 506.3 1113 506.9 1118 506.9 1123 507.1 1128 506.9 1133 505.8 1138 504.3 1143 504 1148 503.2 1153 502.8 1158 501.3 1163 501.1 1168 499.6 1173 499.5" stroke="#00ff2d" stroke-width="1.73"/><path d="M738 542 743 542.2 748 542.5 753 542.7 758 542.9 763 543.1 765.3 543.1 767.4 543.2 768 543.2 769.5 543.2 771.6 543.3 773 543.3 773.7 543.3 775.8 543.4 777.9 542.9 778 542.9 780 541.1 782.1 538.9 783 538.2 784.2 537 786.3 534.1 788 531 788.4 530.4 790.5 527 792.5 523.4 793 521.8 794.6 518.6 796.7 514.5 798 512.4 798.8 511.1 800.9 508.3 803 506 805.1 504.7 807.2 503.7 808 503.4 809.3 502.7 811.4 502.7 813 501.9 813.5 501.8 815.6 502.4 817.7 502.4 818 502 823 502.2 828 502.3 833 502.6 838 502.6 843 503 848 503.4 853 503.5 858 503.7 863 504.1 868 504.5 873 504.4 878 504.8 883 504.1 888 505.1 893 504.4 898 504.5 903 505 908 504.9 913 504.7 918 504.9 923 505 928 504.7 933 504.6 938 504.8 943 505.2 948 505.1 953 504.6 958 504.8 963 504.9 968 504.2 973 504.4 978 504.6 983 504.6 988 504.5 993 504.6 998 504.8 1003 504.8 1008 504.3 1013 504.1 1018 504.6 1023 504.2 1028 504.3 1033 503.7 1038 504 1043 504.2 1048 504.1 1053 504.1 1058 503.9 1063 504.1 1068 504.3 1073 504.1 1078 504 1083 504.5 1088 505.1 1093 505.2 1098 505.9 1103 505.5 1108 506.7 1113 506.4 1118 506.9 1123 507.7 1128 506.9 1133 505.8 1138 505.1 1143 504.3 1148 503.1 1153 502.2 1158 501.6 1163 501.3 1168 500.5 1173 499.3" stroke="#00ff0d" stroke-width="1.73"/><path d="M738 542 743 542.2 748 542.5 753 542.7 758 542.9 763 543.1 766.9 543.2 768 543.2 769.1 543.2 771.2 543.3 773 543.3 773.4 543.3 775.5 543.4 777.7 543.4 778 543.5 779.8 543 781.9 541.2 783 540.3 784.1 539.3 786.2 536.8 788 535 788.4 534.5 790.5 530.7 792.7 527.6 793 527 794.8 523.3 797 518.2 798 516.8 799.1 514.5 801.3 511.1 803 508.5 803.4 508.1 805.6 505.9 807.7 504.3 808 504.9 809.8 504.3 812 503.3 813 503.5 814.1 502.7 816.3 502.7 818 502.4 818.4 502.4 823 502.8 828 502.9 833 502.7 838 503 843 503 848 503.3 853 503.3 858 504.1 863 503.8 868 504.2 873 504.6 878 504.2 883 503.7 888 504.3 893 504.8 898 504.4 903 504.9 908 504.5 913 504.6 918 504.8 923 505 928 504.9 933 504.8 938 504.8 943 504.9 948 504.6 953 504.6 958 504.2 963 504.6 968 504.6 973 505.3 978 504.9 983 504.8 988 504.9 993 504.4 998 504.6 1003 504.8 1008 505.3 1013 504.5 1018 504.7 1023 504.2 1028 504.6 1033 504.8 1038 504.3 1043 504.6 1048 504.6 1053 504.2 1058 504.3 1063 504.1 1068 504.1 1073 503.9 1078 504.5 1083 504.2 1088 504.8 1093 505.4 1098 505.2 1103 505 1108 505.9 1113 506.8 1118 506.7 1123 507.5 1128 506.5 1133 505.7 1138 505 1143 504.3 1148 503.2 1153 502.4 1158 501.7 1163 501 1168 500 1173 499.3" stroke="#13ff00" stroke-width="1.74"/><path d="M738 542 743 542.2 748 542.5 753 542.7 758 542.9 763 543.1 768 543.2 768.6 543.2 770.8 543.3 773 543.3 775.2 543.4 777.3 543.4 778 543.5 779.5 543.5 781.7 543.1 783 542.1 783.9 541.4 786.1 539.1 788 537.2 788.3 536.8 790.5 534 792.7 531.4 793 530.2 794.9 527 797.1 523.6 798 521.5 799.3 518.6 801.5 514.7 803 511.6 803.7 510.6 805.9 508.4 808 507.2 808.1 507.2 810.3 505 812.5 503.9 813 504.6 814.7 503.6 816.8 502.9 818 502.9 819 502.4 821.2 502.3 823 502.3 823.4 502.3 828 502.8 833 503.1 838 502.8 843 503.8 848 503.5 853 503.2 858 503 863 503.9 868 504.2 873 504.4 878 504.7 883 504.3 888 504.3 893 504.4 898 504.7 903 504.3 908 504.9 913 504.5 918 504.8 923 505 928 505.4 933 505.3 938 505.2 943 505.1 948 504.9 953 504.7 958 504.7 963 504.4 968 504.8 973 505 978 505 983 505.3 988 504.9 993 504.6 998 504.3 1003 505.1 1008 504.8 1013 504.4 1018 504.5 1023 504 1028 505.2 1033 505.1 1038 504.4 1043 504.1 1048 504.4 1053 504.6 1058 504.1 1063 504.9 1068 504.3 1073 503.9 1078 503.4 1083 504.3 1088 504.8 1093 505.2 1098 505.7 1103 505.6 1108 506 1113 506.4 1118 507 1123 507 1128 506.9 1133 505.6 1138 505 1143 504.3 1148 503.7 1153 502.8 1158 502 1163 501.2 1168 500.3 1173 499.4" stroke="#33ff00" stroke-width="1.74"/><path d="M738 542 743 542.2 748 542.5 753 542.7 758 542.9 763 543.1 768 543.2 770.2 543.3 772.5 543.3 773 543.3 774.7 543.4 776.9 543.4 778 543.5 779.2 543.5 781.4 543.5 783 543.6 783.7 543.1 785.9 541.4 788 539.4 788.2 539.2 790.4 536.8 792.6 534.1 793 533.5 794.9 530.5 797.1 527.5 798 526.8 799.4 523.6 801.6 519.1 803 516.9 803.9 515.3 806.1 511.2 808 509.1 808.3 508.8 810.6 506.4 812.8 504.8 813 505.2 815.1 504.6 817.3 503.4 818 503.7 819.6 503.1 821.8 502.6 823 502.9 824 502.8 826.3 503.3 828 502.7 833 503 838 503.2 843 503.1 848 503.2 853 503.3 858 503.7 863 503.7 868 504.1 873 504.3 878 504.5 883 504.9 888 505.2 893 504.9 898 504.9 903 505.2 908 504.9 913 505.1 918 504.7 923 505.3 928 505.1 933 505.8 938 505.2 943 505.2 948 504.7 953 505.1 958 504.9 963 504.7 968 505.5 973 505.4 978 504.1 983 504.9 988 504.6 993 504.6 998 504.9 1003 504.7 1008 504.7 1013 504.7 1018 505 1023 505.1 1028 504.6 1033 504.5 1038 504.7 1043 504.4 1048 504.2 1053 504.5 1058 504.5 1063 504.2 1068 504 1073 503.9 1078 504.1 1083 504.2 1088 504.7 1093 505.2 1098 505.6 1103 506.2 1108 506.8 1113 506.9 1118 507.2 1123 507.9 1128 506.9 1133 506.2 1138 504.9 1143 504.6 1148 503.5 1153 503.4 1158 502 1163 501.3 1168 500.1 1173 499.8" stroke="#53ff00" stroke-width="1.75"/><path d="M738 542 743 542.2 748 542.5 753 542.7 758 542.9 763 543.1 768 543.2 771.9 543.3 773 543.3 774.2 543.4 776.5 543.4 778 543.5 778.7 543.5 781 543.5 783 543.6 783.3 543.6 785.6 543.1 787.9 541.2 788 541.2 790.2 539.3 792.5 537 793 535.9 794.8 533.6 797.1 531.6 798 529.5 799.4 527.4 801.6 523.4 803 521 803.9 519.2 806.2 514.3 808 511.9 808.5 511.2 810.8 509.1 813 506.3 813.1 506.3 815.4 504.9 817.7 504.2 818 503.9 820 503.7 822.3 503.8 823 503.4 824.5 503.4 826.8 502.8 828 503 829.1 503.2 833 503.1 838 503.1 843 503.5 848 503.2 853 503.6 858 503.6 863 503.7 868 503.5 873 504.4 878 504.8 883 504.6 888 504.8 893 504.7 898 505.4 903 504.8 908 505.1 913 505.4 918 505.4 923 505.2 928 505.3 933 505.2 938 505 943 504.8 948 504.6 953 505.7 958 504.7 963 505.3 968 504.7 973 504.7 978 505.4 983 504.5 988 505.1 993 504.9 998 504.4 1003 504.8 1008 504.5 1013 504.4 1018 504.5 1023 504.7 1028 504.3 1033 504 1038 504.1 1043 504.5 1048 504.4 1053 504.5 1058 504.3 1063 504.6 1068 504.1 1073 504.3 1078 504 1083 504.1 1088 504.2 1093 505.2 1098 505.8 1103 505.9 1108 506.4 1113 506.7 1118 507.7 1123 507.5 1128 507.2 1133 506.5 1138 505.6 1143 504.5 1148 503.7 1153 502.8 1158 501.8 1163 500.9 1168 500 1173 500.4" stroke="#73ff00" stroke-width="1.75"/><path d="M738 542 743 542.2 748 542.5 753 542.7 758 542.9 763 543.1 768 543.2 773 543.3 773.5 543.3 775.9 543.4 778 543.5 778.2 543.5 780.6 543.5 782.9 543.6 783 543.6 785.2 543.6 787.6 543.1 788 542.9 789.9 541.3 792.2 539.4 793 538.6 794.6 536.7 796.9 533.9 798 533.1 799.2 531.6 801.6 527.8 803 525.4 803.9 523.6 806.3 518.9 808 516 808.6 515 810.9 511.4 813 509.2 813.3 508.9 815.6 507.4 817.9 505.8 818 505.3 820.3 504.3 822.6 504.1 823 503.8 824.9 503.8 827.3 503.4 828 503.5 829.6 503.2 833 502.9 838 503.2 843 503.3 848 503.4 853 504.1 858 504.1 863 504.1 868 504 873 504.8 878 505.4 883 504.3 888 504.8 893 504.8 898 505.1 903 504.7 908 504.9 913 505.1 918 505.7 923 505.3 928 505 933 505.4 938 505.1 943 505.7 948 505.3 953 504.8 958 504.7 963 505.3 968 505.3 973 505 978 504.8 983 505 988 504.9 993 505.6 998 505.2 1003 504.5 1008 504.8 1013 504.9 1018 505.1 1023 504.4 1028 504.7 1033 504.5 1038 504.3 1043 504.4 1048 504.7 1053 504.1 1058 504.4 1063 504.3 1068 504.3 1073 504.7 1078 504.5 1083 504.5 1088 504.6 1093 505.6 1098 506.4 1103 505.6 1108 506.4 1113 506.8 1118 507.4 1123 507.4 1128 507 1133 506.2 1138 505.9 1143 504.6 1148 503.4 1153 503 1158 501.9 1163 501.8 1168 500.7 1173 499.5" stroke="#93ff00" stroke-width="1.76"/><path d="M738 542 743 542.2 748 542.5 753 542.7 758 542.9 763 543.1 768 543.2 773 543.3 775.2 543.4 777.6 543.4 778 543.5 780 543.5 782.4 543.6 783 543.6 784.7 543.6 787.1 543.7 788 543.7 789.5 543.2 791.9 541.6 793 540.5 794.3 539.3 796.7 536.1 798 535.1 799 534.4 801.4 530.5 803 529.1 803.8 528 806.2 524.3 808 520.5 808.6 519.3 811 514.2 813 512.4 813.3 512 815.7 509.2 818 507 818.1 506.9 820.5 505.8 822.9 504.9 823 504.2 825.3 504.4 827.6 503.9 828 503.3 830 503.9 832.4 503.2 833 503.4 838 503.8 843 503.2 848 503.6 853 504.3 858 504.5 863 504.1 868 504 873 504.7 878 505 883 505.3 888 505.1 893 504.5 898 505.3 903 504.9 908 505 913 505.7 918 504.6 923 505.5 928 505.6 933 505.4 938 505.8 943 505.1 948 505.4 953 505.4 958 505.2 963 505.3 968 505.3 973 504.7 978 504.9 983 505 988 504.5 993 504.6 998 505.2 1003 505.3 1008 504.7 1013 504.8 1018 504.4 1023 504.8 1028 504.8 1033 504.9 1038 504.4 1043 504 1048 504.1 1053 504.5 1058 504.9 1063 504.2 1068 504.4 1073 504.9 1078 504.8 1083 504.5 1088 504.7 1093 505.5 1098 506.1 1103 506.6 1108 506.7 1113 506.5 1118 507.6 1123 507.6 1128 507 1133 506.8 1138 504.8 1143 504.8 1148 504 1153 503 1158 502.6 1163 501.2 1168 500.8 1173 500" stroke="#b3ff00" stroke-width="1.76"/><path d="M738 542 743 542.2 748 542.5 753 542.7 758 542.9 763 543.1 768 543.2 773 543.3 776.9 543.4 778 543.5 779.3 543.5 781.7 543.5 783 543.6 784.2 543.6 786.6 543.7 788 543.7 789 543.7 791.5 543.3 793 542.1 793.9 541.4 796.3 539.7 798 537.6 798.7 536.9 801.2 534.5 803 531.8 803.6 531 806 528.5 808 525.5 808.5 524.5 810.9 519.3 813 515.9 813.3 515.4 815.8 511.2 818 509.7 818.2 509.6 820.6 507.4 823 505.6 825.5 505.4 827.9 504.6 828 504.7 830.3 503.8 832.8 504.3 833 503.4 835.2 502.9 837.6 503.5 838 503.3 843 503.5 848 503.8 853 504.1 858 503.9 863 504.1 868 504.6 873 504.8 878 504.9 883 504.6 888 504.9 893 504.8 898 505.2 903 505.1 908 505.1 913 504.7 918 505.9 923 505.4 928 504.6 933 505.2 938 505.5 943 505.4 948 505.7 953 505.3 958 505.2 963 504.5 968 505.3 973 505.3 978 505.4 983 505.6 988 505.3 993 504.8 998 505.5 1003 505 1008 504.9 1013 504.6 1018 504.7 1023 504.6 1028 505.3 1033 504.8 1038 505 1043 504.3 1048 504.9 1053 504.2 1058 504.3 1063 504.4 1068 504.6 1073 504.7 1078 504.3 1083 504.5 1088 505.2 1093 505.7 1098 505.9 1103 505.9 1108 506.6 1113 506.8 1118 507.5 1123 507.8 1128 507.2 1133 505.8 1138 506.1 1143 504.7 1148 503 1153 502.8 1158 502.4 1163 501.6 1168 501.1 1173 500" stroke="#d2ff00" stroke-width="1.77"/><path d="M738 542 743 542.2 748 542.5 753 542.7 758 542.9 763 543.1 768 543.2 773 543.3 778 543.5 778.6 543.5 781 543.5 783 543.6 783.5 543.6 786 543.6 788 543.7 788.5 543.7 790.9 543.8 793 543.6 793.4 543.3 795.9 541.5 798 539.7 798.4 539.4 800.8 536.9 803 534.8 803.3 534.4 805.8 531.2 808 528.6 808.3 528.2 810.7 524.6 813 520.3 813.2 519.9 815.7 515.1 818 512.3 818.2 512 820.6 509.5 823 507.4 823.1 507.4 825.6 506.1 828 504.3 828.1 504.3 830.5 504.8 833 503.5 835.5 504 838 503.7 840.4 503.3 843 503.2 848 503.4 853 503.8 858 504 863 504.1 868 504.6 873 504.4 878 504.7 883 505.4 888 505 893 505.1 898 504.9 903 505.9 908 505.3 913 505.5 918 504.8 923 505.3 928 505.6 933 505 938 506 943 505.7 948 505.4 953 505.1 958 505.8 963 505.8 968 505.4 973 505.3 978 505.1 983 504.6 988 505.2 993 504.7 998 505.3 1003 505 1008 504.4 1013 504.6 1018 504.8 1023 505 1028 504.9 1033 505.2 1038 504.8 1043 504.6 1048 503.8 1053 504 1058 504.5 1063 504.1 1068 504.2 1073 504.4 1078 504.4 1083 504.6 1088 505.2 1093 505.2 1098 505.8 1103 506.7 1108 506.6 1113 507.1 1118 507.2 1123 508.6 1128 507.4 1133 506.6 1138 505 1143 504.6 1148 504 1153 502.5 1158 502.9 1163 501.8 1168 500.8 1173 499.8" stroke="#f2ff00" stroke-width="1.77"/><path d="M738 542 743 542.2 748 542.5 753 542.7 758 542.9 763 543.1 768 543.2 773 543.3 778 543.5 780.2 543.5 782.8 543.6 783 543.6 785.3 543.6 787.8 543.7 788 543.7 790.3 543.8 792.8 543.8 793 543.8 795.4 543.4 797.9 541.7 798 541.6 800.4 539.5 802.9 537.1 803 536.8 805.4 534.1 808 531.5 810.5 528.8 813 524.2 815.5 520.1 818 515.6 818.1 515.5 820.6 512.5 823 509.5 823.1 509.4 825.6 507.6 828 506.3 828.1 506.3 830.7 505.1 833 504.7 833.2 504.7 835.7 504.2 838 504.4 838.2 504.4 840.7 503.6 843 503.5 843.3 503.5 848 503.7 853 503.8 858 504.5 863 504.2 868 504.7 873 504.7 878 504.9 883 504.8 888 505.6 893 504.9 898 504.8 903 505.1 908 505.4 913 505.5 918 504.6 923 505 928 505.4 933 505.5 938 505.8 943 505.4 948 505.4 953 505.3 958 505.1 963 505.9 968 504.7 973 505.1 978 504.9 983 505.6 988 505 993 505.3 998 504.7 1003 505.1 1008 505.2 1013 504.8 1018 505.1 1023 504.7 1028 505.1 1033 504.8 1038 504.8 1043 504.6 1048 504.7 1053 504.7 1058 505 1063 504.2 1068 504.4 1073 504.3 1078 504.9 1083 504.6 1088 505.3 1093 505.5 1098 505.9 1103 506.2 1108 507.2 1113 506.9 1118 507.1 1123 507.8 1128 507.5 1133 506.6 1138 504.8 1143 504.2 1148 503.8 1153 503.1 1158 502.6 1163 501.5 1168 500.8 1173 500" stroke="#ffec00" stroke-width="1.78"/><path d="M738 542 743 542.2 748 542.5 753 542.7 758 542.9 763 543.1 768 543.2 773 543.3 778 543.5 781.9 543.5 783 543.6 784.5 543.6 787.1 543.7 788 543.7 789.6 543.7 792.2 543.8 793 543.8 794.8 543.9 797.3 543.5 798 543.1 799.9 541.6 802.5 539.5 803 539 805 536.8 807.6 534.5 808 534.1 810.2 531.2 812.7 528.2 813 528 815.3 524.5 817.8 520.4 818 519.7 820.4 515.6 823 512 825.5 510.7 828 507.9 828.1 507.8 830.7 506.4 833 505.1 833.2 505 835.8 505.6 838 504.9 838.4 504.9 840.9 504.3 843 504.3 843.5 504.3 848 504.5 853 504.5 858 504.5 863 504.1 868 504.6 873 504.2 878 504.6 883 505.8 888 505.1 893 505.5 898 505.4 903 505.4 908 505.3 913 504.9 918 505.6 923 505.1 928 505.6 933 505.4 938 505.7 943 505.9 948 505.9 953 505.3 958 505.3 963 505 968 505.3 973 505 978 505.5 983 505.6 988 505.5 993 505.2 998 505.3 1003 504.9 1008 504.8 1013 504.8 1018 505.4 1023 504.9 1028 505.1 1033 505 1038 505 1043 504.5 1048 504.8 1053 504.3 1058 505.1 1063 504.9 1068 505.1 1073 505 1078 504.8 1083 504.5 1088 505.2 1093 505.1 1098 505.7 1103 507.1 1108 506.8 1113 507.5 1118 507.7 1123 508.1 1128 507.3 1133 506 1138 505.8 1143 504.4 1148 503.9 1153 503 1158 502.5 1163 502 1168 501.3 1173 500" stroke="#ffcc00" stroke-width="1.79"/><path d="M738 542 743 542.2 748 542.5 753 542.7 758 542.9 763 543.1 768 543.2 773 543.3 778 543.5 783 543.6 783.6 543.6 786.2 543.7 788 543.7 788.9 543.7 791.5 543.8 793 543.8 794.1 543.9 796.7 543.9 798 544 799.3 543.5 801.9 541.9 803 540.8 804.5 539.7 807.1 536.5 808 535.8 809.7 534.4 812.3 531.1 813 530.3 814.9 528.6 817.6 524.6 818 523.6 820.2 520 822.8 515.9 823 515.5 825.4 512.3 828 509.8 830.6 507.8 833 507.1 833.2 507 835.8 506 838 505.2 838.4 505.1 841 504.5 843 504.6 843.6 504.6 846.3 504.6 848 504.3 848.9 504.3 853 504.1 858 504.2 863 504.5 868 504.4 873 504.9 878 505.2 883 505.5 888 505.3 893 505.4 898 505.6 903 505.9 908 505.9 913 505.1 918 505.2 923 505.7 928 505.7 933 505.1 938 505.1 943 505.2 948 505.6 953 505 958 505.4 963 505.1 968 505.3 973 505.3 978 505.4 983 505.8 988 505.3 993 504.8 998 505.2 1003 505 1008 504.8 1013 504.8 1018 505 1023 504.9 1028 504.5 1033 504.5 1038 504.9 1043 504.9 1048 504.8 1053 505.2 1058 504.9 1063 504.9 1068 504.8 1073 504.6 1078 504.5 1083 504.9 1088 505 1093 505.7 1098 506.2 1103 506.9 1108 506.9 1113 507.5 1118 507.9 1123 508.6 1128 507.9 1133 506.2 1138 505.4 1143 505 1148 504.1 1153 502.7 1158 502 1163 501.3 1168 501 1173 499.7" stroke="#ffac00" stroke-width="1.79"/><path d="M738 542 743 542.2 748 542.5 753 542.7 758 542.9 763 543.1 768 543.2 773 543.3 778 543.5 783 543.6 785.3 543.6 788 543.7 790.6 543.8 793 543.8 793.3 543.8 795.9 543.9 798 544 798.6 544 801.3 543.5 803 542.4 803.9 541.8 806.6 539.7 808 538.7 809.2 537.5 811.9 534.6 813 533.3 814.5 531.9 817.2 528.5 818 527.3 819.8 524.8 822.5 520.3 823 519.7 825.1 516.1 827.8 512.6 828 513.1 830.4 509.4 833 508.5 833.1 508.4 835.7 507 838 506.1 838.4 506 841.1 505.8 843 504.8 843.7 504.7 846.4 504.4 848 504.6 849 504.2 853 504.2 858 504.3 863 504.3 868 505.1 873 504.9 878 506.1 883 505.3 888 505.6 893 505.9 898 505.7 903 505.2 908 505.9 913 505.5 918 505.5 923 505.8 928 506.1 933 505.2 938 506 943 506 948 505.3 953 505.9 958 506.1 963 505.6 968 506 973 505.8 978 505 983 505.3 988 505.3 993 505.5 998 505.2 1003 505.3 1008 505.5 1013 505.1 1018 505.4 1023 505.3 1028 505.4 1033 505.1 1038 504.8 1043 505.5 1048 505.6 1053 505.2 1058 505 1063 504.7 1068 504.9 1073 504.6 1078 504.6 1083 504.7 1088 505.7 1093 505.7 1098 507.2 1103 506.6 1108 507.2 1113 507.9 1118 508 1123 507.9 1128 508 1133 506.6 1138 505.7 1143 505 1148 504.5 1153 502.8 1158 502.8 1163 502.2 1168 500.7 1173 500.6" stroke="#ff8c00" stroke-width="1.80"/><path d="M738 542 743 542.2 748 542.5 753 542.7 758 542.9 763 543.1 768 543.2 773 543.3 778 543.5 783 543.6 787 543.7 788 543.7 789.7 543.7 792.4 543.8 793 543.8 795.1 543.9 797.8 543.9 798 544 800.5 544 803 543.7 803.2 543.6 805.9 541.7 808 540.4 808.6 539.9 811.3 537.2 813 535.8 814 534.2 816.7 531.7 818 530.1 819.4 528.5 822.1 524.6 823 523.3 824.8 519.9 827.5 515.5 828 515.8 830.2 513.2 832.9 510.2 833 510.1 835.6 507.6 838 506.8 838.3 506.7 841 506.6 843 506 843.7 505.9 846.4 505.2 848 504.5 849.1 504.9 851.8 505.5 853 504.9 858 504.3 863 504.6 868 504.9 873 505.4 878 505.1 883 505.3 888 506 893 505.7 898 505.4 903 505.2 908 505.9 913 505.7 918 505.9 923 506.2 928 505.6 933 505.6 938 505.7 943 505.4 948 505.6 953 506.3 958 505.5 963 505.4 968 505.3 973 505.5 978 505.4 983 505.2 988 505.8 993 505 998 505.5 1003 505.3 1008 505.4 1013 504.9 1018 505.6 1023 505.1 1028 505.4 1033 505.2 1038 505 1043 505.2 1048 505.3 1053 504.9 1058 504.7 1063 505.4 1068 504.6 1073 505.1 1078 504.5 1083 504.9 1088 505.5 1093 506.2 1098 506.1 1103 506.6 1108 507.7 1113 507.7 1118 507.7 1123 507.8 1128 507.9 1133 506.8 1138 506.1 1143 505.5 1148 504 1153 503.1 1158 502.6 1163 501.5 1168 500.9 1173 501" stroke="#ff6c00" stroke-width="1.80"/><path d="M738 542 743 542.2 748 542.5 753 542.7 758 542.9 763 543.1 768 543.2 773 543.3 778 543.5 783 543.6 788 543.7 788.7 543.7 791.5 543.8 793 543.8 794.2 543.9 797 543.9 798 544 799.7 544 802.4 544.1 803 544.1 805.2 543.6 807.9 541.8 808 541.8 810.7 539.7 813 537.6 813.4 537.3 816.1 535 818 533.5 818.9 532.5 821.6 528.4 823 527 824.4 525 827.1 520.1 828 518.4 829.9 516.1 832.6 512.9 833 512.4 835.3 510.4 838 508.3 838.1 508.2 840.8 507.5 843 506 843.6 505.8 846.3 505.5 848 505.2 849 505.3 851.8 504.8 853 504.9 854.5 504.6 857.3 504.6 858 505 863 504.8 868 505 873 504.6 878 505.5 883 505.5 888 505.5 893 505.9 898 505.6 903 505.6 908 505.8 913 505.6 918 506.1 923 506.2 928 505.7 933 506.1 938 505.7 943 505.5 948 505.3 953 505.7 958 505.7 963 505.6 968 506 973 505.3 978 505.6 983 506 988 505.7 993 505.2 998 505.3 1003 505.6 1008 505.6 1013 505.2 1018 505.1 1023 505.5 1028 505.3 1033 505.1 1038 505.9 1043 505 1048 504.6 1053 504.9 1058 504.8 1063 504.6 1068 504.8 1073 505 1078 505.1 1083 505.1 1088 505.6 1093 505.3 1098 506.5 1103 506.8 1108 507.1 1113 507.9 1118 508 1123 508.3 1128 507.9 1133 506.7 1138 506.3 1143 505.5 1148 504.1 1153 503.7 1158 502.5 1163 501.6 1168 500.7 1173 500.4" stroke="#ff4d00" stroke-width="1.81"/><path d="M738 542 743 542.2 748 542.5 753 542.7 758 542.9 763 543.1 768 543.2 773 543.3 778 543.5 783 543.6 788 543.7 790.5 543.8 793 543.8 793.2 543.8 796 543.9 798 544 798.8 544 801.6 544 803 544.1 804.4 544.1 807.2 543.6 808 543.1 809.9 541.9 812.7 539.8 813 539.7 815.5 538 818 535.1 818.3 534.8 821.1 531.6 823 529.1 823.9 528.1 826.6 524.8 828 522.4 829.4 520.8 832.2 516.4 833 515.2 835 513.4 837.8 510.2 838 510.7 840.6 508.4 843 507.3 843.3 507.2 846.1 506.5 848 505.5 848.9 505.3 851.7 505.1 853 505.4 854.5 505.2 857.3 505.4 858 505.1 860 504.8 863 504.9 868 505.1 873 505 878 505.1 883 505.3 888 505.5 893 505.3 898 505.8 903 505.8 908 506.1 913 506 918 506.5 923 505.8 928 506.2 933 506.3 938 506 943 506.3 948 505.7 953 505.3 958 505.9 963 505.7 968 506 973 505.4 978 505.2 983 505.9 988 505.6 993 505.4 998 505.5 1003 505.9 1008 505.6 1013 505.2 1018 505.5 1023 505.5 1028 505.2 1033 505.4 1038 505.2 1043 504.6 1048 504.9 1053 505 1058 505.5 1063 505 1068 504.6 1073 505.2 1078 505.1 1083 505.1 1088 505.6 1093 505.7 1098 506.1 1103 506.6 1108 507.1 1113 507.3 1118 508.1 1123 508.5 1128 508.2 1133 507.1 1138 506.7 1143 505.1 1148 504.5 1153 503.9 1158 502.9 1163 502.4 1168 501.1 1173 500" stroke="#ff2d00" stroke-width="1.81"/><path d="M738 542 743 542.2 748 542.5 753 542.7 758 542.9 763 543.1 768 543.2 773 543.3 778 543.5 783 543.6 788 543.7 792.2 543.8 793 543.8 795 543.9 797.8 543.9 798 544 800.7 544 803 544.1 803.5 544.1 806.3 544.1 808 544.2 809.1 543.8 812 541.9 813 541.5 814.8 539.9 817.6 537.5 818 536.9 820.4 535.8 823 532.3 823.3 532 826.1 528.9 828 526.6 828.9 525.1 831.7 520.3 833 518.4 834.6 517.3 837.4 513.7 838 512.6 840.2 510.6 843 508.5 845.9 507.4 848 506.6 848.7 506.4 851.5 505.8 853 505.1 854.3 505.5 857.2 505.3 858 504.9 860 505.1 862.8 505.9 863 506 868 505.4 873 504.7 878 505.3 883 505.3 888 506.1 893 505.7 898 505.6 903 506 908 505.6 913 506.3 918 505.8 923 506.1 928 505.6 933 505.8 938 506.3 943 505.6 948 505.7 953 505.9 958 505.6 963 505.6 968 505.8 973 506.5 978 505.9 983 504.9 988 505.5 993 505.5 998 505.8 1003 505.4 1008 505.8 1013 505.6 1018 505.2 1023 505.9 1028 505.5 1033 505.8 1038 505.1 1043 505.4 1048 505.3 1053 504.9 1058 505.1 1063 504.8 1068 505 1073 504.5 1078 504.7 1083 506.1 1088 505.9 1093 505.4 1098 506.2 1103 506.5 1108 507.8 1113 507.7 1118 508 1123 508.7 1128 507.7 1133 507.4 1138 506 1143 505.4 1148 503.9 1153 503.3 1158 503.1 1163 501.7 1168 501.1 1173 500.6" stroke="#ff0d00" stroke-width="1.82"/><path d="M738 542 743 542.2 748 542.5 753 542.7 758 542.9 763 543.1 768 543.2 773 543.3 778 543.5 783 543.6 788 543.7 793 543.8 793.9 543.8 796.8 543.9 798 544 799.6 544 802.5 544.1 803 544.1 805.4 544.1 808 544.2 808.2 544.2 811.1 543.8 813 542.7 814 542 816.8 540.1 818 539.2 819.7 537.5 822.6 535 823 535.1 825.4 532 828 529.4 828.3 529 831.2 524.7 833 522.2 834.1 520.9 836.9 517 838 515.3 839.8 513.9 842.7 510.3 843 510.9 845.5 509.2 848 507.7 848.4 507.5 851.3 506.5 853 506.3 854.1 506.1 857 506.1 858 505.5 859.9 505.4 862.7 505.9 863 505.4 865.6 505.8 868 506.2 873 505.8 878 505.3 883 505.7 888 505.7 893 505.3 898 505.6 903 506 908 506.7 913 505.9 918 506.2 923 506.1 928 506.1 933 506.9 938 506.2 943 506.2 948 505.9 953 505.8 958 506.1 963 505.4 968 505.7 973 505.6 978 506 983 506.1 988 505.9 993 504.8 998 505.9 1003 505 1008 505.8 1013 505.5 1018 505.3 1023 505.9 1028 506 1033 505.7 1038 505.5 1043 505.9 1048 505.3 1053 505.3 1058 505.2 1063 505.6 1068 505.1 1073 505.2 1078 505 1083 505.4 1088 506.6 1093 506.5 1098 506.3 1103 507 1108 507.3 1113 507.3 1118 508 1123 508.7 1128 508.8 1133 507 1138 506.4 1143 505.4 1148 504.5 1153 504.5 1158 503.1 1163 502.3 1168 501.2 1173 500.4" stroke="#ff0013" stroke-width="1.82"/><path d="M738 542 743 542.2 748 542.5 753 542.7 758 542.9 763 543.1 768 543.2 773 543.3 778 543.5 783 543.6 788 543.7 793 543.8 795.6 543.9 798 544 798.5 544 801.4 544 803 544.1 804.4 544.1 807.3 544.2 808 544.2 810.2 544.2 813 543.8 813.1 543.8 816 542.1 818 540.5 818.9 539.8 821.8 537.7 823 536.6 824.7 534.9 827.6 531.8 828 531.5 830.5 529.3 833 526.5 833.5 525.7 836.4 521.2 838 518.6 839.3 516 842.2 513.3 843 512.7 845.1 510.9 848 509.6 850.9 507.8 853 507.2 853.8 506.9 856.7 506.4 858 506 859.6 505.4 862.6 506.1 863 505.6 865.5 506 868 505.6 873 504.8 878 505.4 883 506 888 505.5 893 505.4 898 505.4 903 506 908 505.9 913 505.9 918 506.4 923 506.5 928 506.3 933 506.3 938 506.2 943 506.9 948 506.2 953 506.3 958 505.5 963 505.4 968 506.1 973 505.8 978 506.2 983 505.9 988 505.6 993 506.1 998 505.5 1003 506.3 1008 506.1 1013 505.5 1018 505.4 1023 505.4 1028 504.9 1033 505.6 1038 505.2 1043 505.5 1048 505.2 1053 505.9 1058 505.5 1063 505.3 1068 505.7 1073 505.3 1078 505.1 1083 505.4 1088 505.8 1093 505.4 1098 506.3 1103 507.2 1108 507.2 1113 507.4 1118 507.7 1123 508.7 1128 507.9 1133 507.1 1138 506.6 1143 505.8 1148 504.6 1153 503.8 1158 503 1163 503 1168 501.6 1173 501" stroke="#ff0033" stroke-width="1.83"/><path d="M738 542 743 542.2 748 542.5 753 542.7 758 542.9 763 543.1 768 543.2 773 543.3 778 543.5 783 543.6 788 543.7 793 543.8 797.4 543.9 798 544 800.3 544 803 544.1 803.3 544.1 806.2 544.1 808 544.2 809.2 544.2 812.1 544.3 813 544.3 815.1 543.8 818 542.2 821 540.3 823 538.5 823.9 537.8 826.9 535.6 828 533.9 829.8 531.7 832.8 529.3 833 529 835.7 525.9 838 521.5 838.7 520.5 841.6 517.5 843 515.2 844.6 513.7 847.5 510.9 848 511.1 850.5 509.4 853 508.3 853.4 508.1 856.4 507.7 858 507 859.3 506.1 862.3 505.5 863 506 865.2 505.5 868 506 868.2 506 871.1 506.4 873 505.5 878 506.2 883 505.8 888 505.6 893 506.4 898 506.2 903 506 908 505.9 913 506 918 506.5 923 506.1 928 506.8 933 506 938 506.3 943 506.6 948 506.4 953 506.1 958 506.2 963 506.3 968 505.9 973 506.3 978 505.3 983 506.2 988 505.9 993 505.6 998 506.4 1003 505.3 1008 505.8 1013 505.8 1018 505.9 1023 505.7 1028 505.5 1033 505.8 1038 505.9 1043 505.6 1048 505.4 1053 505.5 1058 505 1063 505.3 1068 505.6 1073 505.5 1078 505.6 1083 505.5 1088 506.2 1093 506.1 1098 507.1 1103 507.1 1108 507.2 1113 508.3 1118 508.5 1123 508.6 1128 507.9 1133 507.1 1138 506.7 1143 505.4 1148 505.2 1153 503.5 1158 503.1 1163 502.8 1168 501.8 1173 500.8" stroke="#ff0053" stroke-width="1.83"/><path d="M738 542 743 542.2 748 542.5 753 542.7 758 542.9 763 543.1 768 543.2 773 543.3 778 543.5 783 543.6 788 543.7 793 543.8 798 544 799.1 544 802.1 544 803 544.1 805.1 544.1 808 544.2 808.1 544.2 811.1 544.2 813 544.3 814.1 544.3 817 543.9 818 543.4 820 542.2 823 539.9 826 538.1 828 536.2 829 535.4 832 532.7 833 531.3 835 529.2 838 525.4 841 520.9 843 518.3 844 517.2 847 514.2 848 513.1 850 511.2 853 509.4 856 508.1 858 507.2 858.9 507 861.9 507.2 863 506.5 864.9 506.2 867.9 506 868 506.3 870.9 505.8 873 506.4 878 506.2 883 505.9 888 505.6 893 506.9 898 505.8 903 505.9 908 506.5 913 506.3 918 506.8 923 505.6 928 506.1 933 506.5 938 506.3 943 506.1 948 505.9 953 505.8 958 506.2 963 505.7 968 506.1 973 506.3 978 505.9 983 506.3 988 506 993 505.7 998 506.1 1003 505.6 1008 505.5 1013 505.5 1018 505.5 1023 505.3 1028 505.2 1033 505.7 1038 505.8 1043 505.2 1048 505.7 1053 505.5 1058 505.5 1063 505.4 1068 505.7 1073 505.4 1078 505.1 1083 505.6 1088 506.3 1093 506.9 1098 507.1 1103 507.1 1108 507.2 1113 508.9 1118 508.1 1123 508.6 1128 508.5 1133 507.4 1138 507 1143 504.9 1148 504.4 1153 504 1158 503.1 1163 502.2 1168 501.3 1173 500.5" stroke="#ff0073" stroke-width="1.84"/><path d="M738 542 743 542.2 748 542.5 753 542.7 758 542.9 763 543.1 768 543.2 773 543.3 778 543.5 783 543.6 788 543.7 793 543.8 798 544 800.8 544 803 544.1 803.9 544.1 806.9 544.1 808 544.2 809.9 544.2 813 544.3 816 544.3 818 544.4 819 543.9 822.1 542.3 823 541.5 825.1 540.1 828 538.1 828.1 538 831.2 535.2 833 533.7 834.2 532.3 837.2 529.2 838 528.5 840.3 525.2 843 521.8 843.3 521.3 846.3 516.9 848 515.3 849.4 514.5 852.4 510.7 853 511.2 855.4 509.6 858 508.5 858.5 508.3 861.5 507.5 863 506.9 864.5 507 867.6 506.5 868 506.1 870.6 506 873 505.8 873.6 505.8 878 505.8 883 506.4 888 506 893 505.9 898 506.6 903 506.4 908 506.3 913 506.3 918 506.3 923 506.5 928 506.2 933 506.4 938 506.2 943 506.7 948 506.4 953 506.1 958 506.4 963 505.9 968 506.1 973 506.4 978 506.1 983 506 988 505.9 993 506.2 998 505.4 1003 505.9 1008 505.6 1013 505.9 1018 505.4 1023 505.9 1028 506 1033 505.6 1038 505.7 1043 505.3 1048 505.8 1053 505.8 1058 505.4 1063 505.8 1068 505.4 1073 505.6 1078 505.4 1083 505.5 1088 505.8 1093 506.1 1098 506.6 1103 507.5 1108 507.6 1113 507.8 1118 508.9 1123 509.1 1128 508.3 1133 507.4 1138 506.5 1143 505.8 1148 504.6 1153 504 1158 503 1163 502.8 1168 501.8 1173 500.8" stroke="#ff0093" stroke-width="1.85"/><path d="M738 542 743 542.2 748 542.5 753 542.7 758 542.9 763 543.1 768 543.2 773 543.3 778 543.5 783 543.6 788 543.7 793 543.8 798 544 802.6 544.1 803 544.1 805.6 544.1 808 544.2 808.7 544.2 811.8 544.3 813 544.3 814.9 544.3 817.9 544.4 818 544.4 821 544 823 542.9 824.1 542.3 827.2 540.4 828 539.5 830.2 538.4 833 535 833.3 534.8 836.4 532.3 838 531.2 839.5 530.1 842.5 525.5 843 525.1 845.6 521.8 848 517.8 848.7 516.9 851.8 514.1 853 512.9 854.8 511.7 857.9 509.7 858 509.5 861 508.3 863 507.4 864.1 507.2 867.1 507.3 868 506.4 870.2 506.6 873 506.5 873.3 506.5 876.4 506.2 878 506.8 883 506.6 888 506.2 893 506.5 898 505.8 903 506.6 908 506.7 913 506.1 918 506.6 923 506 928 506.5 933 506.7 938 506 943 506.7 948 506.4 953 506.2 958 506.7 963 506.1 968 506.4 973 505.9 978 506.9 983 505.6 988 505.8 993 506.5 998 505.9 1003 505.8 1008 506.3 1013 506 1018 505.6 1023 506 1028 505.5 1033 505.9 1038 504.8 1043 505.6 1048 505.5 1053 505.1 1058 505.9 1063 505.7 1068 505.2 1073 505.4 1078 505.3 1083 505.3 1088 505.6 1093 506.6 1098 507.5 1103 507.7 1108 507.8 1113 508.4 1118 508.1 1123 509.3 1128 508.7 1133 507.2 1138 506.8 1143 505.3 1148 504.9 1153 504.3 1158 502.9 1163 502.9 1168 501.8 1173 500.8" stroke="#ff00b3" stroke-width="1.85"/><path d="M738 542 743 542.2 748 542.5 753 542.7 758 542.9 763 543.1 768 543.2 773 543.3 778 543.5 783 543.6 788 543.7 793 543.8 798 544 803 544.1 804.3 544.1 807.4 544.2 808 544.2 810.5 544.2 813 544.3 813.7 544.3 816.8 544.4 818 544.4 819.9 544.4 823 544 826.1 542.3 828 540.9 829.2 540.4 832.3 538.2 833 537 835.5 535.3 838 533.1 838.6 532.5 841.7 529.2 843 528.5 844.8 525.9 847.9 521.1 848 521.8 851 517.4 853 515.4 854.2 514.4 857.3 511.8 858 511.6 860.4 509.8 863 509.3 863.5 509.1 866.6 507.9 868 507.4 869.7 507.6 872.8 506.8 873 506.2 876 506.9 878 506.6 879.1 506.5 882.2 506.4 883 506.5 888 506.9 893 506.5 898 506.7 903 506.5 908 506.3 913 506.7 918 506.8 923 506.8 928 506.1 933 506.5 938 506.4 943 505.9 948 506.4 953 506.6 958 507.2 963 506.3 968 506.1 973 506.1 978 506.1 983 505.9 988 506.1 993 505.7 998 506.4 1003 506.2 1008 506.3 1013 505.7 1018 505.9 1023 506.3 1028 506 1033 505.8 1038 505.4 1043 505.7 1048 505.4 1053 505.3 1058 505.7 1063 505.9 1068 506.2 1073 505.6 1078 505.9 1083 506.3 1088 506.2 1093 506 1098 507 1103 507.5 1108 508.4 1113 508.4 1118 509 1123 509.1 1128 508.3 1133 507.8 1138 507 1143 506.1 1148 504.4 1153 504 1158 503.2 1163 502 1168 501.8 1173 501.2" stroke="#ff00d2" stroke-width="1.86"/><path d="M738 542 743 542.2 748 542.5 753 542.7 758 542.9 763 543.1 768 543.2 773 543.3 778 543.5 783 543.6 788 543.7 793 543.8 798 544 803 544.1 806.1 544.1 808 544.2 809.2 544.2 812.4 544.3 813 544.3 815.5 544.3 818 544.4 818.7 544.4 821.8 544.5 823 544.5 825 544 828 542.4 828.1 542.4 831.3 540.6 833 539.2 834.5 538.2 837.6 535.1 838 535.2 840.8 532.8 843 530.1 843.9 529.2 847.1 525.9 848 524.8 850.2 521.2 853 518 853.4 517.5 856.5 515 858 513.4 859.7 512.3 862.9 510.1 863 509.8 866 509.2 868 508 869.2 508.2 872.3 507.3 873 507 875.5 507.3 878 506.4 878.6 506.3 881.8 506.6 883 506.9 888 507.1 893 506.9 898 506.3 903 506.4 908 507.1 913 506.4 918 505.9 923 506.6 928 506.6 933 506.4 938 506.7 943 506.5 948 505.8 953 506.4 958 506.5 963 506.3 968 506.3 973 506.4 978 506.5 983 506.7 988 506.7 993 506.2 998 506.1 1003 506.4 1008 506.1 1013 506.3 1018 506 1023 506.1 1028 506.4 1033 506 1038 505.7 1043 506.1 1048 505.8 1053 505.9 1058 505.9 1063 505.3 1068 506 1073 505.6 1078 505.8 1083 505.7 1088 506.1 1093 506.5 1098 506.6 1103 507.9 1108 508.6 1113 508.8 1118 508.6 1123 509 1128 509.1 1133 507.5 1138 506.1 1143 505.9 1148 505 1153 504 1158 503.5 1163 502.6 1168 501.2 1173 501" stroke="#ff00f2" stroke-width="1.86"/><path d="M738 542 743 542.2 748 542.5 753 542.7 758 542.9 763 543.1 768 543.2 773 543.3 778 543.5 783 543.6 788 543.7 793 543.8 798 544 803 544.1 807.8 544.2 808 544.2 811 544.2 813 544.3 814.2 544.3 817.4 544.4 818 544.4 820.6 544.4 823 544.5 823.8 544.5 827 544.1 828 543.6 830.2 542.4 833 541 833.4 540.8 836.6 538.1 838 537.3 839.8 535.8 843 532.8 846.2 529.5 848 527.9 849.3 526.5 852.5 521.4 853 521.6 855.7 518.5 858 515.2 858.9 514.4 862.1 512.3 863 512.1 865.3 510 868 508.9 868.5 508.7 871.7 508.6 873 508 874.9 507.4 878 507.4 878.1 507.4 881.3 506.4 883 507 884.5 507 887.7 506.6 888 507.5 893 506.7 898 506.5 903 506.6 908 506.8 913 506.1 918 506.5 923 506.2 928 506.8 933 506.6 938 506.7 943 506.4 948 506.1 953 506.3 958 506.6 963 506.7 968 506.5 973 506.8 978 506.7 983 506.5 988 507.1 993 506 998 506 1003 505.5 1008 506.4 1013 506.2 1018 506 1023 506 1028 505.7 1033 506.1 1038 506.3 1043 506 1048 505.8 1053 506.6 1058 506.2 1063 506 1068 505.9 1073 506.4 1078 505.5 1083 506.6 1088 506.1 1093 506.9 1098 507.4 1103 507.7 1108 508.8 1113 508.5 1118 508.8 1123 509.3 1128 508.8 1133 507.2 1138 506.7 1143 505.5 1148 505.2 1153 504.2 1158 503.6 1163 502.5 1168 501.5 1173 501" stroke="#ec00ff" stroke-width="1.87"/><path d="M738 542 743 542.2 748 542.5 753 542.7 758 542.9 763 543.1 768 543.2 773 543.3 778 543.5 783 543.6 788 543.7 793 543.8 798 544 803 544.1 808 544.2 809.6 544.2 812.8 544.3 813 544.3 816 544.3 818 544.4 819.3 544.4 822.5 544.5 823 544.5 825.7 544.6 828 544.6 829 544.1 832.2 542.7 833 542.1 835.4 540.5 838 538.6 838.7 538 841.9 535.3 843 535.1 845.1 532.6 848 530.5 848.4 530.1 851.6 526.4 853 524 854.9 521.6 858 517.8 858.1 517.7 861.3 514.4 863 513.9 864.6 512 867.8 510 868 510.7 871 509.7 873 509.1 874.3 507.8 877.5 507.5 878 507.5 880.7 507.6 883 506.9 884 507.2 887.2 506.7 888 506.5 893 506.3 898 506.7 903 506.8 908 506.6 913 506.8 918 507 923 506.7 928 506.7 933 506.7 938 506.2 943 507 948 507 953 507.1 958 506.4 963 506.8 968 506.3 973 507.1 978 506.6 983 506.8 988 506.3 993 506.4 998 506.6 1003 505.9 1008 506.4 1013 506.3 1018 506.1 1023 506.3 1028 506.2 1033 505.9 1038 505.5 1043 506 1048 505.7 1053 506.2 1058 505.9 1063 506.4 1068 506.2 1073 505.7 1078 505.7 1083 506.6 1088 506.8 1093 507.4 1098 507.1 1103 507.5 1108 507.7 1113 508.1 1118 508.9 1123 509.4 1128 508.5 1133 507.8 1138 507.1 1143 506 1148 505.1 1153 504.3 1158 503 1163 503.1 1168 502.4 1173 501.8" stroke="#cc00ff" stroke-width="1.87"/><path d="M738 542 743 542.2 748 542.5 753 542.7 758 542.9 763 543.1 768 543.2 773 543.3 778 543.5 783 543.6 788 543.7 793 543.8 798 544 803 544.1 808 544.2 811.3 544.2 813 544.3 814.6 544.3 817.9 544.4 818 544.4 821.1 544.5 823 544.5 824.4 544.5 827.7 544.6 828 544.6 831 544.2 833 543.3 834.2 542.7 837.5 540.6 838 540.3 840.8 538.4 843 536.5 844.1 535.3 847.3 532.7 848 531.9 850.6 529.9 853 527.4 853.9 526.1 857.2 521.9 858 521.1 860.4 518.5 863 515.5 863.7 514.9 867 512.4 868 511.7 870.3 510.9 873 510.3 873.5 510.2 876.8 508.9 878 508 880.1 507.9 883 507.7 883.4 507.6 886.6 506.9 888 506.9 889.9 507.4 893 507.1 893.2 507.1 898 507 903 506.4 908 507.2 913 506.3 918 507.1 923 506.7 928 507.3 933 506.6 938 506.7 943 507.3 948 506.5 953 506.7 958 506.9 963 507.1 968 506.3 973 507 978 506.7 983 506 988 507.1 993 506.6 998 506.2 1003 506.3 1008 507.1 1013 506.2 1018 506.2 1023 506.5 1028 506.5 1033 505.9 1038 506.3 1043 506 1048 506.4 1053 506.5 1058 506.2 1063 506 1068 505.6 1073 505.9 1078 506.2 1083 506.2 1088 506.4 1093 507.8 1098 507.1 1103 508 1108 508 1113 508.8 1118 509.2 1123 509 1128 509.2 1133 507.4 1138 507.2 1143 506 1148 505.7 1153 504.2 1158 503.5 1163 503.4 1168 501.9 1173 501.4" stroke="#ac00ff" stroke-width="1.88"/><path d="M738 542 743 542.2 748 542.5 753 542.7 758 542.9 763 543.1 768 543.2 773 543.3 778 543.5 783 543.6 788 543.7 793 543.8 798 544 803 544.1 808 544.2 813 544.3 813.1 544.3 816.4 544.4 818 544.4 819.7 544.4 823 544.5 826.3 544.6 828 544.6 829.6 544.6 833 544.2 836.3 542.5 838 541.5 839.6 540.3 842.9 538.4 843 538.2 846.2 535.4 848 534.6 849.5 532.9 852.8 529.8 853 529.7 856.2 526.4 858 523.6 859.5 521.7 862.8 518 863 517.7 866.1 515.6 868 513.1 869.4 512.2 872.7 511 873 510.6 876 509.5 878 509 879.4 509 882.7 507.7 883 507.9 886 507.5 888 506.9 889.3 507.2 892.6 507.1 893 507.2 895.9 507.3 898 507.1 903 506.7 908 507.3 913 507.2 918 507.3 923 506.6 928 506.6 933 507.2 938 507.2 943 507.1 948 506.8 953 506.7 958 506.1 963 507.2 968 506.8 973 506.5 978 506.9 983 506.6 988 507.4 993 506.4 998 506.9 1003 506.2 1008 506.2 1013 506.5 1018 506.1 1023 506.5 1028 506.5 1033 505.9 1038 506.1 1043 506.4 1048 506.2 1053 506 1058 506 1063 506 1068 506.4 1073 505.9 1078 505.8 1083 506 1088 506.2 1093 507 1098 507.5 1103 507.8 1108 507.8 1113 508.8 1118 509.2 1123 509.2 1128 509.3 1133 508.3 1138 507.5 1143 505.8 1148 505 1153 504.7 1158 504.1 1163 503.2 1168 502.1 1173 501.4" stroke="#8c00ff" stroke-width="1.88"/><path d="M738 542 743 542.2 748 542.5 753 542.7 758 542.9 763 543.1 768 543.2 773 543.3 778 543.5 783 543.6 788 543.7 793 543.8 798 544 803 544.1 808 544.2 813 544.3 814.8 544.3 818 544.4 818.2 544.4 821.5 544.5 823 544.5 824.9 544.5 828 544.6 828.2 544.6 831.6 544.7 833 544.7 835 544.3 838 542.6 838.3 542.4 841.7 540.7 843 539.7 845 538.7 848 536.1 848.4 535.7 851.7 533.7 853 531.9 855.1 530.6 858 527.2 858.4 526.7 861.8 522 863 520.6 865.1 518.2 868 516 868.5 515.6 871.8 513 873 512 875.2 510.8 878 509.9 878.5 509.8 881.9 508.4 883 508.3 885.3 507.7 888 507.6 888.6 507.6 892 507.3 893 507 895.3 507.2 898 507 898.7 507 903 507.1 908 507.2 913 506.9 918 507.2 923 507 928 506.7 933 507.2 938 507.1 943 507 948 506.7 953 506.6 958 506.6 963 506.5 968 506.8 973 506.7 978 506.7 983 506.6 988 506.5 993 506.9 998 506.6 1003 507.2 1008 506.7 1013 506.5 1018 506.5 1023 507.1 1028 506 1033 506.3 1038 506.2 1043 506.6 1048 506.1 1053 506.4 1058 505.7 1063 506.1 1068 506.1 1073 506.1 1078 506.3 1083 506.3 1088 507.2 1093 507.1 1098 507.6 1103 507.7 1108 508.2 1113 508.4 1118 509 1123 509.6 1128 509.1 1133 508 1138 507.3 1143 506.3 1148 505.1 1153 504.8 1158 504 1163 503.2 1168 502.1 1173 501.3" stroke="#6c00ff" stroke-width="1.89"/><path d="M738 542 743 542.2 748 542.5 753 542.7 758 542.9 763 543.1 768 543.2 773 543.3 778 543.5 783 543.6 788 543.7 793 543.8 798 544 803 544.1 808 544.2 813 544.3 816.6 544.4 818 544.4 820 544.4 823 544.5 823.4 544.5 826.8 544.6 828 544.6 830.2 544.6 833 544.7 833.6 544.7 836.9 544.4 838 543.8 840.3 542.7 843 541.1 843.7 540.7 847.1 538.5 848 538 850.5 535.5 853 534 853.9 533.2 857.3 530.5 858 529.5 860.7 526.7 863 523.8 864.1 522.6 867.5 518.5 868 518.3 870.9 515.4 873 513.2 874.3 513.1 877.7 511 878 511.2 881.1 510.3 883 509.4 884.4 508.9 887.8 508 888 508 891.2 507.6 893 507.5 894.6 507.6 898 507 901.4 507.3 903 507.3 908 507.1 913 507.2 918 507.4 923 507.4 928 507.7 933 506.9 938 507.9 943 507 948 507.2 953 507 958 507.1 963 507.2 968 506.9 973 506.8 978 506.8 983 506.8 988 506.9 993 507 998 506.9 1003 506.9 1008 506.1 1013 506.6 1018 506.4 1023 506.8 1028 506.6 1033 506.8 1038 506.3 1043 506.8 1048 506.5 1053 506.6 1058 506 1063 506.2 1068 506.4 1073 506.3 1078 506 1083 506.7 1088 507.2 1093 506.7 1098 507.8 1103 508.2 1108 508.2 1113 508.7 1118 508.9 1123 509.8 1128 508.9 1133 508.3 1138 507.5 1143 506.7 1148 506 1153 504.5 1158 504.8 1163 503.1 1168 502.6 1173 501.7" stroke="#4c00ff" stroke-width="1.89"/><path d="M738 542 743 542.2 748 542.5 753 542.7 758 542.9 763 543.1 768 543.2 773 543.3 778 543.5 783 543.6 788 543.7 793 543.8 798 544 803 544.1 808 544.2 813 544.3 818 544.4 818.4 544.4 821.8 544.5 823 544.5 825.2 544.5 828 544.6 828.7 544.6 832.1 544.7 833 544.7 835.5 544.8 838 544.8 838.9 544.4 842.4 542.6 843 542.2 845.8 540.9 848 539.5 849.2 538.7 852.7 536.4 853 535.4 856.1 533.6 858 531.3 859.5 530.6 863 526.6 866.4 522.9 868 520.1 869.8 519.4 873 516.2 873.3 516 876.7 513.6 878 512.5 880.1 511.3 883 510.4 883.6 510.2 887 509.4 888 508.8 890.4 508.4 893 507.4 893.8 507.3 897.3 507.8 898 507.4 900.7 507.6 903 506.9 908 507.7 913 507.1 918 507.6 923 507.3 928 507.6 933 507.6 938 506.7 943 506.8 948 507 953 507.6 958 506.8 963 507.2 968 507.5 973 506.9 978 506.7 983 507.2 988 506.6 993 506.6 998 506.4 1003 506.6 1008 506.5 1013 506.5 1018 506.8 1023 506.9 1028 506.3 1033 506.9 1038 506.2 1043 506.6 1048 506.7 1053 505.9 1058 506 1063 505.9 1068 506.6 1073 506 1078 506 1083 506.5 1088 506.5 1093 507.9 1098 507.9 1103 508.4 1108 508.6 1113 508.3 1118 509.1 1123 509.2 1128 509.5 1133 508.1 1138 507.7 1143 506.6 1148 505.9 1153 505.1 1158 503.6 1163 502.9 1168 502.4 1173 502.2" stroke="#2d00ff" stroke-width="1.90"/><path d="M738 542 743 542.2 748 542.5 753 542.7 758 542.9 763 543.1 768 543.2 773 543.3 778 543.5 783 543.6 788 543.7 793 543.8 798 544 803 544.1 808 544.2 813 544.3 818 544.4 820.1 544.4 823 544.5 823.6 544.5 827.1 544.6 828 544.6 830.5 544.7 833 544.7 834 544.7 837.5 544.8 838 544.8 840.9 544.4 843 543.4 844.4 542.8 847.9 540.7 848 540.8 851.4 538.7 853 537.1 854.8 536.1 858 533.3 858.3 533.1 861.8 530.7 863 529.7 865.2 526.9 868 523.1 868.7 522.3 872.2 519 873 517.7 875.6 515.7 878 513.8 879.1 513.4 882.6 511.2 883 510.8 886.1 509.9 888 509 889.5 509.5 893 508.8 896.5 507.7 898 508 899.9 508.1 903 507.7 903.4 507.6 908 507.2 913 507.1 918 507.4 923 507.1 928 507.8 933 507.7 938 507.6 943 506.4 948 507.7 953 507.3 958 507.4 963 507.2 968 506.5 973 507 978 506.6 983 506.9 988 507.2 993 507.2 998 506.7 1003 506.5 1008 506.6 1013 506.5 1018 507.5 1023 506.5 1028 507.3 1033 506.7 1038 506.5 1043 506.4 1048 506.8 1053 506.5 1058 506.4 1063 506.1 1068 506.5 1073 506.1 1078 506.1 1083 507 1088 506.8 1093 507.1 1098 507.7 1103 507.8 1108 508.2 1113 509.3 1118 509.5 1123 509.9 1128 509 1133 508.1 1138 507.6 1143 506.3 1148 506.2 1153 505.3 1158 504.5 1163 502.5 1168 503.1 1173 502" stroke="#0d00ff" stroke-width="1.91"/><path d="M738 542 743 542.2 748 542.5 753 542.7 758 542.9 763 543.1 768 543.2 773 543.3 778 543.5 783 543.6 788 543.7 793 543.8 798 544 803 544.1 808 544.2 813 544.3 818 544.4 821.9 544.5 823 544.5 825.4 544.5 828 544.6 828.9 544.6 832.4 544.7 833 544.7 835.9 544.8 838 544.8 839.4 544.8 842.9 544.5 843 544.5 846.5 542.8 848 541.9 850 540.7 853 538.6 853.5 538.3 857 536.1 858 535.4 860.5 533.4 863 531.4 864 530.4 867.5 526.8 868 526.3 871 522.4 873 520.6 874.5 518.9 878 515.6 881.5 513.4 883 512.6 885 511.6 888 510.8 888.6 510.6 892.1 509.1 893 509.4 895.6 508.5 898 508.3 899.1 508.9 902.6 507.6 903 507.6 906.1 507.5 908 507 913 507.9 918 508.1 923 507.9 928 507.7 933 506.9 938 507.2 943 507.6 948 507.8 953 507.1 958 507.5 963 507.4 968 507.2 973 506.5 978 507.6 983 507.1 988 507.1 993 506.9 998 506.8 1003 507 1008 506.8 1013 506.7 1018 507.1 1023 506.2 1028 507 1033 507.1 1038 507 1043 506.9 1048 506.7 1053 506.9 1058 506.7 1063 507.2 1068 506.3 1073 506.2 1078 506.5 1083 506.7 1088 507.1 1093 507.7 1098 507.7 1103 508.4 1108 509.1 1113 509.5 1118 509.5 1123 509.7 1128 508.7 1133 508.8 1138 508.2 1143 507.1 1148 506.1 1153 504.5 1158 504.1 1163 503.7 1168 503.1 1173 501.8" stroke="#0013ff" stroke-width="1.91"/><path d="M738 542 743 542.2 748 542.5 753 542.7 758 542.9 763 543.1 768 543.2 773 543.3 778 543.5 783 543.6 788 543.7 793 543.8 798 544 803 544.1 808 544.2 813 544.3 818 544.4 823 544.5 823.7 544.5 827.2 544.6 828 544.6 830.8 544.7 833 544.7 834.3 544.7 837.9 544.8 838 544.8 841.4 544.9 843 544.9 844.9 544.5 848 543.2 848.5 543 852 540.9 853 540.2 855.6 538.7 858 537.3 859.1 536.6 862.7 533.8 863 533.3 866.2 530.8 868 529.4 869.8 526.5 873 522.8 873.3 522.4 876.9 519.3 878 517.9 880.4 515.8 883 514.1 884 513.5 887.5 511.2 888 510.8 891.1 510 893 509.8 894.6 509.3 898 508.8 898.1 508.8 901.7 508.3 903 507.8 905.2 508.2 908 507.8 908.8 507.7 912.3 507.8 913 507.3 918 508.1 923 507.5 928 507.9 933 507.5 938 507.5 943 507.2 948 508 953 507.4 958 507.6 963 507.5 968 507.3 973 507.3 978 507.5 983 507.5 988 506.9 993 507.2 998 507.1 1003 507.1 1008 507.8 1013 507.8 1018 506.2 1023 506.5 1028 506.8 1033 507.2 1038 506.7 1043 506.6 1048 507 1053 506.8 1058 506.6 1063 506.4 1068 507 1073 506.4 1078 506.9 1083 506.8 1088 507.5 1093 507.3 1098 508 1103 508.4 1108 508.2 1113 509.2 1118 509.7 1123 509.6 1128 509.3 1133 508.2 1138 508.2 1143 506.7 1148 506.2 1153 505 1158 504.3 1163 503.3 1168 503.4 1173 502" stroke="#0033ff" stroke-width="1.92"/><path d="M738 542 743 542.2 748 542.5 753 542.7 758 542.9 763 543.1 768 543.2 773 543.3 778 543.5 783 543.6 788 543.7 793 543.8 798 544 803 544.1 808 544.2 813 544.3 818 544.4 823 544.5 825.4 544.5 828 544.6 829 544.6 832.6 544.7 833 544.7 836.2 544.8 838 544.8 839.8 544.9 843 544.9 843.4 544.9 847 544.5 848 544.2 850.5 543 853 541.8 854.1 541.3 857.7 538.4 858 538.2 861.3 536.5 863 534.5 864.9 533.5 868 531.1 868.5 530.7 872 527.5 873 525.4 875.6 523.1 878 520.2 879.2 519 882.8 515.3 883 516 886.4 513.4 888 512.7 890 512 893 511 893.5 510.8 897.1 510.3 898 509.9 900.7 509 903 508.8 904.3 508.2 907.9 508.2 908 507.6 911.5 508.2 913 507.6 915.1 507.3 918 507.8 923 508.1 928 508.1 933 507.9 938 507 943 508 948 507.4 953 507.6 958 507.3 963 507.1 968 507.1 973 507.1 978 506.9 983 507.2 988 506.9 993 507.4 998 506.8 1003 507.2 1008 507.6 1013 507.6 1018 506.8 1023 506.8 1028 507 1033 506.9 1038 506.8 1043 506.7 1048 507.2 1053 506.9 1058 506.9 1063 506.4 1068 507.1 1073 507 1078 506.3 1083 506.3 1088 507.3 1093 507.2 1098 507.9 1103 508.6 1108 508.9 1113 509.7 1118 510.3 1123 510.4 1128 509 1133 508.3 1138 507.8 1143 507.2 1148 506.4 1153 505.4 1158 503.8 1163 504.2 1168 502.8 1173 502.2" stroke="#0053ff" stroke-width="1.92"/><path d="M738 542 743 542.2 748 542.5 753 542.7 758 542.9 763 543.1 768 543.2 773 543.3 778 543.5 783 543.6 788 543.7 793 543.8 798 544 803 544.1 808 544.2 813 544.3 818 544.4 823 544.5 827.2 544.6 828 544.6 830.8 544.7 833 544.7 834.5 544.7 838 544.8 838.1 544.8 841.7 544.9 843 544.9 845.3 545 848 545 849 544.6 852.6 542.7 853 542.6 856.2 541.2 858 540.4 859.8 538.9 863 536.5 863.4 536.2 867.1 533.8 868 532.8 870.7 530.7 873 528.7 874.3 527.1 877.9 523.1 878 522.8 881.6 519.7 883 517.5 885.2 516 888 514.2 888.8 513.8 892.4 512.6 893 511.6 896 510.4 898 509.8 899.7 509.6 903 509.3 903.3 509.3 906.9 508.6 908 508.1 910.5 507.8 913 508.3 914.2 508.2 918 507.1 923 507.5 928 507.9 933 507.8 938 507.9 943 507.8 948 507.5 953 507.6 958 507.4 963 507.7 968 507.9 973 507.9 978 507.6 983 507.3 988 507.1 993 507.6 998 507.1 1003 507.2 1008 507.5 1013 507.2 1018 507.2 1023 507.2 1028 507 1033 506.7 1038 507.3 1043 506.9 1048 507.2 1053 507.3 1058 506.9 1063 507.3 1068 507.3 1073 506.4 1078 507.2 1083 506.8 1088 507.2 1093 507.7 1098 508.1 1103 508.2 1108 509.1 1113 509.4 1118 509.7 1123 510.5 1128 509.3 1133 508.9 1138 507 1143 506.6 1148 506.2 1153 505.3 1158 504.7 1163 503.9 1168 502.9 1173 502.3" stroke="#0073ff" stroke-width="1.93"/><path d="M738 542 743 542.2 748 542.5 753 542.7 758 542.9 763 543.1 768 543.2 773 543.3 778 543.5 783 543.6 788 543.7 793 543.8 798 544 803 544.1 808 544.2 813 544.3 818 544.4 823 544.5 828 544.6 829 544.6 832.7 544.7 833 544.7 836.3 544.8 838 544.8 840 544.9 843 544.9 843.6 544.9 847.3 545 848 545 851 544.6 853 543.8 854.6 543.2 858 541.1 858.3 540.9 861.9 538.8 863 538.6 865.6 536.8 868 534.9 869.3 533.7 872.9 530.9 873 530.7 876.6 527.6 878 525.2 880.2 523.2 883 520.8 883.9 520 887.6 515.9 888 515.4 891.2 513.8 893 513.3 894.9 511.7 898 510.7 898.5 510.6 902.2 509.7 903 509.8 905.9 509.2 908 508.7 909.5 508.4 913 508.2 913.2 508.2 916.8 507.9 918 508 923 508.1 928 507.9 933 507.3 938 508.3 943 508 948 507.6 953 507.8 958 507.1 963 507.8 968 507.4 973 507.5 978 507 983 508 988 507 993 507.3 998 507.4 1003 507 1008 507.4 1013 507.2 1018 507.5 1023 507.1 1028 507.1 1033 507.6 1038 506.4 1043 507.1 1048 506.7 1053 506.7 1058 507.2 1063 506.5 1068 506.9 1073 507 1078 506.6 1083 507.5 1088 507.7 1093 507.7 1098 507.8 1103 509.3 1108 508.6 1113 509.9 1118 509.8 1123 510.5 1128 509.6 1133 508.6 1138 507.9 1143 507.2 1148 506.1 1153 504.8 1158 505.1 1163 504 1168 503 1173 502.5" stroke="#0093ff" stroke-width="1.93"/><path d="M738 542 743 542.2 748 542.5 753 542.7 758 542.9 763 543.1 768 543.2 773 543.3 778 543.5 783 543.6 788 543.7 793 543.8 798 544 803 544.1 808 544.2 813 544.3 818 544.4 823 544.5 828 544.6 830.8 544.7 833 544.7 834.5 544.7 838 544.8 838.2 544.8 841.9 544.9 843 544.9 845.6 545 848 545 849.3 545.1 853 544.7 856.7 543.1 858 542.4 860.4 540.9 863 539.8 864.1 539.3 867.8 536.3 868 536.4 871.5 533.6 873 532.8 875.2 530.5 878 528.1 878.8 527.2 882.5 522.8 883 522.3 886.2 519.7 888 517.7 889.9 516.3 893 513.9 893.6 513.6 897.3 512.5 898 512.2 901 511.2 903 510.2 904.7 509.3 908 509.1 908.4 509 912.1 508.8 913 509.1 915.8 508.7 918 508.7 919.5 508.4 923 508.2 928 508 933 507.7 938 507.9 943 508.3 948 507.9 953 507.7 958 508 963 507.4 968 507.6 973 507.8 978 507.5 983 507.6 988 507.7 993 507.5 998 507.6 1003 507.3 1008 507.5 1013 507.5 1018 506.7 1023 507.2 1028 507.2 1033 507.5 1038 507.5 1043 506.9 1048 507.1 1053 507.6 1058 507.2 1063 507.5 1068 506.8 1073 506.9 1078 506.9 1083 507.3 1088 507.7 1093 508.1 1098 508.1 1103 508.4 1108 509 1113 509.2 1118 510.3 1123 510.4 1128 509.6 1133 509.3 1138 508.3 1143 507.2 1148 506.2 1153 505.2 1158 504.6 1163 504.4 1168 503.3 1173 502.3" stroke="#00b2ff" stroke-width="1.94"/><path d="M738 542 743 542.2 748 542.5 753 542.7 758 542.9 763 543.1 768 543.2 773 543.3 778 543.5 783 543.6 788 543.7 793 543.8 798 544 803 544.1 808 544.2 813 544.3 818 544.4 823 544.5 828 544.6 832.6 544.7 833 544.7 836.3 544.8 838 544.8 840 544.9 843 544.9 843.8 544.9 847.5 545 848 545 851.2 545.1 853 545.1 855 544.8 858 543.5 858.7 543.2 862.4 541.7 863 541 866.2 538.9 868 537.8 869.9 537 873 534.6 873.6 534.1 877.4 531.2 878 530.4 881.1 527.5 883 525.7 884.9 523.4 888 519.9 888.6 519.3 892.3 516.8 893 515.8 896.1 514.3 898 512.6 899.8 512.3 903 511.1 903.5 511 907.3 510.3 908 509.9 911 509.7 913 508.9 914.7 508.9 918 508.4 918.5 508.3 922.2 508.8 923 508.7 925.9 508 928 508.5 933 508.2 938 508.2 943 507.9 948 507.8 953 508 958 507.8 963 507.8 968 507.6 973 508.3 978 508.3 983 507.6 988 507.3 993 507.6 998 507.7 1003 507.7 1008 507.8 1013 507.7 1018 507.8 1023 507.2 1028 507.1 1033 507.7 1038 506.9 1043 507.3 1048 507.3 1053 507.1 1058 507.1 1063 506.6 1068 507.2 1073 506.7 1078 507.2 1083 507.3 1088 507.6 1093 508.2 1098 508.3 1103 509.3 1108 509 1113 509.5 1118 509.7 1123 510.6 1128 510 1133 508.8 1138 507.9 1143 507.5 1148 506.6 1153 505.6 1158 505 1163 504 1168 503.1 1173 502.6" stroke="#00d2ff" stroke-width="1.94"/><path d="M738 542 743 542.2 748 542.5 753 542.7 758 542.9 763 543.1 768 543.2 773 543.3 778 543.5 783 543.6 788 543.7 793 543.8 798 544 803 544.1 808 544.2 813 544.3 818 544.4 823 544.5 828 544.6 833 544.7 834.4 544.7 838 544.8 838.1 544.8 841.9 544.9 843 544.9 845.7 545 848 545 849.4 545.1 853 545.1 853.2 545.1 857 544.8 858 544.4 860.8 543.2 863 541.9 864.5 541.3 868 539.4 868.3 539.2 872.1 536.9 873 536.7 875.8 533.9 878 532.1 879.6 530.9 883 527.7 883.4 527.2 887.2 523.4 888 522.6 890.9 520.1 893 518.1 894.7 516.6 898 514.7 898.5 514.4 902.2 512.2 903 512.2 906 510.9 908 510.4 909.8 510 913 509.2 913.6 509.2 917.3 508.9 918 509.1 921.1 508.7 923 508.3 924.9 508.4 928 508.4 933 508.6 938 507.7 943 507.9 948 508.5 953 507.9 958 507.8 963 508.3 968 507.7 973 508 978 507.8 983 508 988 507.6 993 507.6 998 507.6 1003 507.3 1008 507.2 1013 507.8 1018 507.9 1023 507.2 1028 507.6 1033 507.6 1038 507.4 1043 507.3 1048 507.4 1053 507 1058 507.4 1063 507.4 1068 507.5 1073 507.3 1078 507.2 1083 507 1088 507.9 1093 508.9 1098 508.2 1103 508.7 1108 509.4 1113 510 1118 510.5 1123 510.8 1128 509.9 1133 508.8 1138 508.3 1143 507 1148 506.4 1153 506 1158 504.4 1163 504 1168 503.9 1173 502.6" stroke="#00f2ff" stroke-width="1.95"/><path d="M738 542 743 542.2 748 542.5 753 542.7 758 542.9 763 543.1 768 543.2 773 543.3 778 543.5 783 543.6 788 543.7 793 543.8 798 544 803 544.1 808 544.2 813 544.3 818 544.4 823 544.5 828 544.6 833 544.7 836.2 544.8 838 544.8 840 544.9 843 544.9 843.8 544.9 847.6 545 848 545 851.4 545.1 853 545.1 855.2 545.2 858 545.2 859 544.8 862.8 543.2 863 543.2 866.6 541.7 868 540.5 870.4 539.1 873 537.8 874.2 536.6 878 533.9 881.8 531.6 883 530.2 885.7 527.2 888 524.9 889.5 523.1 893 519.5 893.3 519.2 897.1 516.5 898 515.8 900.9 513.9 903 513.1 904.7 512 908 511.4 908.5 511.2 912.3 509.6 913 509.7 916.1 509.4 918 509.5 919.9 509.3 923 509.3 923.7 509.2 927.5 509.2 928 508.4 931.3 508.5 933 508.1 938 508.9 943 508.4 948 508 953 508.7 958 508.3 963 508.1 968 508.3 973 507.8 978 508.2 983 507.7 988 507.7 993 507.7 998 507.4 1003 507.8 1008 508.1 1013 508.1 1018 507.7 1023 507.4 1028 507 1033 507.5 1038 507 1043 507.2 1048 507.6 1053 507.7 1058 507.1 1063 507.9 1068 507.6 1073 507.5 1078 507.5 1083 507.7 1088 507.8 1093 508.5 1098 508.4 1103 508.8 1108 509.3 1113 509.4 1118 510.1 1123 510.6 1128 510.2 1133 508.9 1138 508.6 1143 507.8 1148 506.3 1153 505.4 1158 505.6 1163 504.4 1168 503.4 1173 503.3" stroke="#00ffec" stroke-width="1.95"/><path d="M738 542 743 542.2 748 542.5 753 542.7 758 542.9 763 543.1 768 543.2 773 543.3 778 543.5 783 543.6 788 543.7 793 543.8 798 544 803 544.1 808 544.2 813 544.3 818 544.4 823 544.5 828 544.6 833 544.7 837.9 544.8 838 544.8 841.8 544.9 843 544.9 845.6 545 848 545 849.5 545.1 853 545.1 853.3 545.1 857.2 545.2 858 545.2 861 544.9 863 544.1 864.9 543.1 868 541.7 868.7 541.4 872.5 539.5 873 539.4 876.4 537.1 878 536 880.2 533.6 883 532.5 884.1 531.1 887.9 527.8 888 527.7 891.8 523.6 893 522.9 895.6 519.6 898 518 899.5 516.9 903 514.5 903.3 514.4 907.1 512.1 908 512.5 911 511.3 913 510.6 914.8 510.7 918 509.9 918.7 509.8 922.5 509.2 923 509.2 926.4 509.3 928 508.5 930.2 508.9 933 508.2 934.1 508.8 938 508.6 943 508 948 508.4 953 508.1 958 507.9 963 507.9 968 508 973 507.7 978 507.8 983 507.8 988 508.3 993 508 998 507.7 1003 508 1008 508.1 1013 507.8 1018 507.4 1023 507.8 1028 507.3 1033 507.8 1038 507.5 1043 507.9 1048 507.2 1053 507.7 1058 507.7 1063 507.8 1068 507.7 1073 507.2 1078 507.5 1083 507.5 1088 507.9 1093 508.8 1098 509 1103 509.5 1108 509.6 1113 510.6 1118 510.5 1123 510.8 1128 510.4 1133 509.2 1138 508.6 1143 507.5 1148 506.3 1153 505.4 1158 505.3 1163 504 1168 503.7 1173 502.7" stroke="#00ffcc" stroke-width="1.96"/><path d="M738 542 743 542.2 748 542.5 753 542.7 758 542.9 763 543.1 768 543.2 773 543.3 778 543.5 783 543.6 788 543.7 793 543.8 798 544 803 544.1 808 544.2 813 544.3 818 544.4 823 544.5 828 544.6 833 544.7 838 544.8 839.7 544.9 843 544.9 843.6 544.9 847.5 545 848 545 851.4 545.1 853 545.1 855.3 545.2 858 545.2 859.1 545.3 863 544.9 866.9 543.4 868 542.6 870.8 541.5 873 539.7 874.7 539 878 537.3 878.5 537 882.4 534.4 883 533.7 886.3 531.2 888 530.9 890.2 527.7 893 525 894.1 523.6 898 519.9 901.8 516.9 903 516.2 905.7 514.4 908 513.2 909.6 513.1 913 511.5 913.5 511.3 917.4 510.8 918 510 921.2 509.7 923 509.6 925.1 509.7 928 509.2 929 508.9 932.9 509 933 509 936.8 508.7 938 509.2 943 508.7 948 507.9 953 508.5 958 508 963 508.6 968 508.3 973 508.3 978 507.8 983 508.4 988 508.5 993 507.6 998 508.2 1003 507.6 1008 508 1013 507.8 1018 507.6 1023 507.2 1028 507.7 1033 507.6 1038 507.9 1043 507.7 1048 507.6 1053 506.5 1058 507.6 1063 507.6 1068 507.6 1073 507.2 1078 507.4 1083 508.1 1088 507.5 1093 507.8 1098 509 1103 509.2 1108 510.4 1113 510.3 1118 510.5 1123 511 1128 510.2 1133 509.4 1138 508.2 1143 507.6 1148 506.9 1153 506.1 1158 505.8 1163 504.7 1168 503.2 1173 503.1" stroke="#00ffac" stroke-width="1.97"/><path d="M738 542 743 542.2 748 542.5 753 542.7 758 542.9 763 543.1 768 543.2 773 543.3 778 543.5 783 543.6 788 543.7 793 543.8 798 544 803 544.1 808 544.2 813 544.3 818 544.4 823 544.5 828 544.6 833 544.7 838 544.8 841.5 544.9 843 544.9 845.5 545 848 545 849.4 545.1 853 545.1 853.3 545.1 857.2 545.2 858 545.2 861.1 545.3 863 545.4 865 544.9 868 543.8 869 543.3 872.9 541.4 873 541.4 876.8 539.6 878 538.4 880.7 536.9 883 534.9 884.6 534.2 888 531.9 888.5 531.5 892.5 527.5 893 526.6 896.4 523.7 898 521.9 900.3 519.8 903 517.3 904.2 517.5 908 514.4 908.1 514.4 912 512.8 913 512.7 916 511.1 918 511.1 919.9 510 923 510.6 923.8 510.4 927.7 510 928 509.6 931.6 509.5 933 509.2 935.5 508.8 938 508.3 943 508.5 948 508.4 953 508.5 958 507.9 963 508.3 968 507.6 973 508.5 978 508.3 983 508.5 988 507.8 993 507.4 998 508.1 1003 508.1 1008 508.1 1013 508.2 1018 507.8 1023 507.6 1028 508.2 1033 507.5 1038 507.3 1043 508.5 1048 508 1053 507.8 1058 507.4 1063 507.6 1068 507.5 1073 507.4 1078 507.5 1083 507.6 1088 508.1 1093 508.6 1098 508.7 1103 508.9 1108 509.8 1113 509.4 1118 510.3 1123 510.4 1128 510.2 1133 509.8 1138 508.8 1143 508.3 1148 507 1153 506.2 1158 504.8 1163 504.5 1168 503.7 1173 503.1" stroke="#00ff8c" stroke-width="1.97"/><path d="M738 542 743 542.2 748 542.5 753 542.7 758 542.9 763 543.1 768 543.2 773 543.3 778 543.5 783 543.6 788 543.7 793 543.8 798 544 803 544.1 808 544.2 813 544.3 818 544.4 823 544.5 828 544.6 833 544.7 838 544.8 843 544.9 843.3 544.9 847.3 545 848 545 851.2 545.1 853 545.1 855.2 545.2 858 545.2 859.1 545.3 863 545.4 863.1 545.4 867.1 545 868 544.6 871 543.3 873 542.4 875 541.5 878 539.9 878.9 539.4 882.9 536.6 883 536.5 886.8 534 888 533.3 890.8 530.8 893 530.1 894.7 527.7 898 524.6 898.7 523.9 902.6 520.8 903 519.9 906.6 517 908 516.2 910.5 514.7 913 513.7 914.5 512.8 918 512 918.4 511.9 922.4 510.9 923 510.4 926.4 509.6 928 510 930.3 509.6 933 509.7 934.3 509.5 938 508.9 938.2 508.9 943 509.3 948 508.1 953 508.9 958 508.6 963 508.1 968 508.4 973 508 978 508.1 983 508 988 508.4 993 507.9 998 507.7 1003 508.4 1008 508.1 1013 507.4 1018 508.6 1023 508.3 1028 508.1 1033 507.5 1038 508.5 1043 507.8 1048 507.9 1053 507.7 1058 508.2 1063 507.9 1068 507.8 1073 507.2 1078 508 1083 508 1088 507.9 1093 508.3 1098 509 1103 509 1108 509.6 1113 510.5 1118 510.7 1123 511.1 1128 510.5 1133 509.8 1138 509 1143 507.7 1148 507.2 1153 506.5 1158 505.3 1163 505.2 1168 503.3 1173 503.5" stroke="#00ff6c" stroke-width="1.98"/><path d="M738 542 743 542.2 748 542.5 753 542.7 758 542.9 763 543.1 768 543.2 773 543.3 778 543.5 783 543.6 788 543.7 793 543.8 798 544 803 544.1 808 544.2 813 544.3 818 544.4 823 544.5 828 544.6 833 544.7 838 544.8 843 544.9 845.1 545 848 545 849.1 545.1 853 545.1 853.1 545.1 857.1 545.2 858 545.2 861.1 545.3 863 545.4 865.1 545.4 868 545.4 869.1 545 873 543.5 873.1 543.4 877 541.6 878 541.3 881 539.3 883 538.5 885 537.2 888 535.4 889 534.4 893 531.3 897 528 898 526.8 901 523.5 903 522.4 905 520.5 908 517.9 909 517.3 913 514.3 916.9 513 918 512.3 920.9 511.6 923 511.2 924.9 510.9 928 510.1 928.9 510 932.9 510.1 933 509.7 936.9 509.2 938 508.8 940.9 509.1 943 508.9 948 509.4 953 508.6 958 508.7 963 508.2 968 508 973 508.5 978 507.9 983 508.1 988 508.2 993 507.7 998 508.7 1003 507.9 1008 507.7 1013 508.5 1018 507.8 1023 508.2 1028 507.4 1033 508.3 1038 508.7 1043 507.9 1048 508.2 1053 507.7 1058 508.1 1063 508.6 1068 508 1073 507.8 1078 508 1083 507.8 1088 508.3 1093 508.6 1098 509.4 1103 509.8 1108 510.2 1113 510 1118 510.5 1123 511.6 1128 510.6 1133 509.2 1138 508.5 1143 508 1148 506.9 1153 506.3 1158 505.1 1163 504.7 1168 504.6 1173 503.1" stroke="#00ff4d" stroke-width="1.98"/><path d="M738 542 743 542.2 748 542.5 753 542.7 758 542.9 763 543.1 768 543.2 773 543.3 778 543.5 783 543.6 788 543.7 793 543.8 798 544 803 544.1 808 544.2 813 544.3 818 544.4 823 544.5 828 544.6 833 544.7 838 544.8 843 544.9 846.9 545 848 545 851 545.1 853 545.1 855 545.2 858 545.2 859 545.3 863 545.4 867.1 545.4 868 545.5 871.1 545.1 873 544.3 875.1 543.6 878 542.4 879.1 541.8 883 539.6 883.2 539.5 887.2 537.3 888 536.4 891.2 534.2 893 532.8 895.2 531.7 898 529.2 899.3 527.9 903 524.5 903.3 524.2 907.3 520 908 519.1 911.3 517.4 913 516.1 915.4 514.8 918 513.3 919.4 513.6 923 511.8 923.4 511.7 927.4 511.3 928 509.8 931.5 510.3 933 509.9 935.5 510.2 938 509.5 939.5 509 943 509.1 943.5 509.1 948 509.1 953 509.3 958 508.4 963 508.6 968 508.2 973 508.4 978 508.2 983 508.4 988 508.1 993 508.2 998 509.2 1003 508.3 1008 508.1 1013 508.2 1018 508.7 1023 508 1028 507.9 1033 508 1038 508.2 1043 508.3 1048 508.2 1053 508.1 1058 507.4 1063 508.1 1068 508 1073 507.9 1078 508 1083 507.8 1088 508.2 1093 508.7 1098 509.6 1103 509.7 1108 509.8 1113 510 1118 510.6 1123 511.4 1128 510 1133 509.6 1138 508.6 1143 507.9 1148 506.2 1153 506.3 1158 505.6 1163 504.8 1168 504.2 1173 503.8" stroke="#00ff2d" stroke-width="1.99"/><path d="M738 542 743 542.2 748 542.5 753 542.7 758 542.9 763 543.1 768 543.2 773 543.3 778 543.5 783 543.6 788 543.7 793 543.8 798 544 803 544.1 808 544.2 813 544.3 818 544.4 823 544.5 828 544.6 833 544.7 838 544.8 843 544.9 848 545 848.7 545 852.8 545.1 853 545.1 856.9 545.2 858 545.2 860.9 545.3 863 545.4 865 545.4 868 545.5 869 545.5 873 545.1 873.1 545.1 877.2 543.6 878 543.1 881.2 541.9 883 540.9 885.3 539.9 888 538 889.3 536.9 893 534.6 893.4 534.4 897.5 531.3 898 531.9 901.5 528.2 903 527.2 905.6 524 908 521.4 909.7 520.2 913 517.9 913.7 517.4 917.8 514.8 918 515.1 921.8 512.5 923 512.4 925.9 511.8 928 512 930 510.7 933 510.6 934 510.7 938 510 938.1 509.9 942.1 509.6 943 509.5 946.2 509.3 948 509.1 953 509 958 509 963 508.7 968 509.1 973 508.4 978 508.8 983 508.7 988 508.4 993 508.3 998 508.4 1003 508 1008 508.7 1013 508.9 1018 508.3 1023 508.7 1028 508.4 1033 508.3 1038 508.4 1043 508 1048 508.1 1053 508 1058 507.9 1063 508.3 1068 508.2 1073 508.2 1078 507.4 1083 508.1 1088 508.1 1093 509 1098 509.1 1103 509.8 1108 510.2 1113 510.4 1118 511.4 1123 511.8 1128 510.3 1133 509.9 1138 509.3 1143 507.8 1148 507.9 1153 506.6 1158 505.8 1163 505 1168 504.2 1173 503.4" stroke="#00ff0d" stroke-width="1.99"/><path d="M738 542 743 542.2 748 542.5 753 542.7 758 542.9 763 543.1 768 543.2 773 543.3 778 543.5 783 543.6 788 543.7 793 543.8 798 544 803 544.1 808 544.2 813 544.3 818 544.4 823 544.5 828 544.6 833 544.7 838 544.8 843 544.9 848 545 850.6 545.1 853 545.1 854.6 545.2 858 545.2 858.7 545.3 862.8 545.3 863 545.4 866.9 545.4 868 545.5 871 545.5 873 545.5 875.1 545.2 878 544.2 879.2 543.8 883 541.9 883.3 541.8 887.4 540 888 539.7 891.5 537 893 535.7 895.6 534.2 898 533.6 899.7 531.7 903 529.3 903.8 528.5 907.9 523.8 908 523.8 912 520.4 913 519.2 916.1 517.5 918 515.9 920.2 514.9 923 514.3 924.3 513.4 928 511.7 928.4 511.6 932.5 511.5 933 510.9 936.6 510.1 938 510.5 940.7 510 943 509.9 944.8 509.5 948 509.9 948.9 509.9 953 509.1 958 508.8 963 509.5 968 508.9 973 509.3 978 509.2 983 508.9 988 508.7 993 508.4 998 508.4 1003 508.3 1008 508.5 1013 508.3 1018 508.9 1023 508.8 1028 508.2 1033 508.7 1038 507.8 1043 508 1048 508.7 1053 508.3 1058 508.4 1063 508.5 1068 507.8 1073 508.1 1078 508.1 1083 507.7 1088 508.8 1093 509.1 1098 509.7 1103 509.8 1108 510.6 1113 510.1 1118 511.7 1123 511.7 1128 510.6 1133 509.5 1138 508.7 1143 508.7 1148 507 1153 506.5 1158 506.2 1163 505.3 1168 504.9 1173 503.5" stroke="#13ff00" stroke-width="2.00"/><path d="M738 542 743 542.2 748 542.5 753 542.7 758 542.9 763 543.1 768 543.2 773 543.3 778 543.5 783 543.6 788 543.7 793 543.8 798 544 803 544.1 808 544.2 813 544.3 818 544.4 823 544.5 828 544.6 833 544.7 838 544.8 843 544.9 848 545 852.4 545.1 853 545.1 856.5 545.2 858 545.2 860.6 545.3 863 545.4 864.8 545.4 868 545.5 868.9 545.5 873 545.5 877.1 545.2 878 544.9 881.3 543.6 883 542.9 885.4 541.8 888 540.4 889.5 539.4 893 537 893.7 536.6 897.8 534.2 898 534.7 901.9 532.2 903 531.3 906.1 528.3 908 526.1 910.2 524.4 913 521.5 914.3 520.3 918 517.8 918.5 517.5 922.6 515.2 923 515.2 926.7 513.2 928 512.9 930.9 512.2 933 511.9 935 510.9 938 510.5 939.1 510 943 510.3 943.2 510.2 947.4 509.8 948 509.9 951.5 509.5 953 509.5 955.6 509.3 958 508.9 963 509.1 968 509.4 973 509.1 978 509.2 983 508.8 988 508.8 993 508.8 998 508.5 1003 508.6 1008 508.7 1013 508.2 1018 508.5 1023 508.7 1028 508.5 1033 508.2 1038 508.3 1043 508.5 1048 508.5 1053 508.2 1058 508.2 1063 507.9 1068 507.8 1073 507.9 1078 508.6 1083 508.6 1088 509.1 1093 509.4 1098 510 1103 510 1108 510.3 1113 510.1 1118 511.3 1123 511.6 1128 510.6 1133 509.8 1138 509.1 1143 508.5 1148 507.4 1153 507 1158 505.8 1163 505.4 1168 504.6 1173 503.8" stroke="#33ff00" stroke-width="2.00"/><path d="M738 542 743 542.2 748 542.5 753 542.7 758 542.9 763 543.1 768 543.2 773 543.3 778 543.5 783 543.6 788 543.7 793 543.8 798 544 803 544.1 808 544.2 813 544.3 818 544.4 823 544.5 828 544.6 833 544.7 838 544.8 843 544.9 848 545 853 545.1 854.2 545.2 858 545.2 858.3 545.2 862.5 545.3 863 545.4 866.7 545.4 868 545.5 870.8 545.5 873 545.5 875 545.6 878 545.6 879.2 545.2 883 543.8 883.3 543.7 887.5 541.9 888 541.5 891.7 540.2 893 539.2 895.8 537.4 898 536 900 534.9 903 532.5 904.2 531.8 908 528.8 908.3 528.5 912.5 524.4 913 523.5 916.7 520.8 918 519.9 920.8 517.8 923 516.4 925 515.9 928 514.4 929.2 513.7 933 512.3 933.3 512.3 937.5 511.7 938 511.3 941.7 510.5 943 510.2 945.8 509.9 948 510.2 950 510.1 953 509.5 954.2 509.5 958 509.9 963 509.4 968 509.1 973 509 978 509 983 508.9 988 508.5 993 508.4 998 508.7 1003 509 1008 508.8 1013 508.7 1018 508.5 1023 508.2 1028 508.6 1033 508.6 1038 508.1 1043 508.2 1048 508.5 1053 509 1058 508 1063 508.2 1068 508.2 1073 508 1078 508.8 1083 508.8 1088 508.4 1093 508.7 1098 509.5 1103 510 1108 510.3 1113 511.1 1118 511.3 1123 511.4 1128 511.1 1133 509.8 1138 509.5 1143 508.5 1148 508 1153 506.8 1158 506.1 1163 505.1 1168 504.8 1173 503.7" stroke="#53ff00" stroke-width="2.00"/><path d="M738 542 743 542.2 748 542.5 753 542.7 758 542.9 763 543.1 768 543.2 773 543.3 778 543.5 783 543.6 788 543.7 793 543.8 798 544 803 544.1 808 544.2 813 544.3 818 544.4 823 544.5 828 544.6 833 544.7 838 544.8 843 544.9 848 545 853 545.1 856 545.2 858 545.2 860.2 545.3 863 545.4 864.4 545.4 868 545.5 868.6 545.5 872.8 545.5 873 545.5 877 545.6 878 545.6 881.2 545.3 883 544.7 885.4 543.6 888 542.7 889.6 542.2 893 540.2 893.8 539.8 898 537.9 902.2 535.2 903 534.1 906.4 531.6 908 531.1 910.6 527.8 913 526.3 914.8 524.3 918 522 919 521 923 517.8 923.2 517.7 927.4 515.5 928 516.1 931.6 513.7 933 513.3 935.8 512.7 938 511.5 940 511.5 943 510.6 944.2 510.2 948 510.6 948.4 510.5 952.6 509.7 953 509.8 956.8 509.9 958 509.8 963 509.3 968 509.4 973 509.2 978 508.8 983 509.1 988 509 993 508.9 998 509 1003 508.9 1008 508.8 1013 508.7 1018 508.7 1023 508.9 1028 509.1 1033 508.8 1038 508.7 1043 509 1048 508.5 1053 508.1 1058 508.7 1063 508.2 1068 507.9 1073 508.4 1078 508.1 1083 508.1 1088 508.6 1093 509.6 1098 509.7 1103 510.4 1108 510.7 1113 511 1118 511.9 1123 511.6 1128 511.3 1133 510.4 1138 509.8 1143 508.4 1148 508.6 1153 507 1158 505.8 1163 505.1 1168 505 1173 503.9" stroke="#73ff00" stroke-width="2.00"/><path d="M738 542 743 542.2 748 542.5 753 542.7 758 542.9 763 543.1 768 543.2 773 543.3 778 543.5 783 543.6 788 543.7 793 543.8 798 544 803 544.1 808 544.2 813 544.3 818 544.4 823 544.5 828 544.6 833 544.7 838 544.8 843 544.9 848 545 853 545.1 857.8 545.2 858 545.2 862 545.3 863 545.4 866.3 545.4 868 545.5 870.5 545.5 873 545.5 874.7 545.6 878 545.6 879 545.6 883 545.4 883.2 545.3 887.4 543.9 888 543.5 891.7 542 893 541.3 895.9 540.2 898 538.1 900.2 537.6 903 535.3 904.4 535.1 908 532.3 908.6 531.9 912.9 528.4 913 528.6 917.1 524.6 918 524 921.3 520.7 923 519.7 925.6 518 928 516.2 929.8 515.5 933 514 934.1 513.7 938 512.4 938.3 512.3 942.5 511.4 943 511.2 946.8 511 948 510.6 951 509.8 953 510.4 955.2 509.4 958 509.6 959.5 509.6 963 509.6 968 509.4 973 509.1 978 509.1 983 509.2 988 509.6 993 509 998 509 1003 509.4 1008 508.8 1013 508.9 1018 508.8 1023 509.3 1028 508.7 1033 508.7 1038 509 1043 508.6 1048 508.5 1053 508.7 1058 508.4 1063 508.5 1068 508.1 1073 509.1 1078 508.7 1083 508.7 1088 508.4 1093 509.1 1098 509.4 1103 510.6 1108 510.7 1113 511.1 1118 510.9 1123 511.5 1128 511.1 1133 510.5 1138 509.8 1143 508.7 1148 507.5 1153 506.9 1158 506.2 1163 505.4 1168 504.7 1173 504.3" stroke="#93ff00" stroke-width="2.00"/><path d="M738 542 743 542.2 748 542.5 753 542.7 758 542.9 763 543.1 768 543.2 773 543.3 778 543.5 783 543.6 788 543.7 793 543.8 798 544 803 544.1 808 544.2 813 544.3 818 544.4 823 544.5 828 544.6 833 544.7 838 544.8 843 544.9 848 545 853 545.1 858 545.2 859.6 545.3 863 545.4 863.9 545.4 868 545.5 868.2 545.5 872.4 545.5 873 545.5 876.7 545.6 878 545.6 881 545.7 883 545.7 885.2 545.3 888 544.3 889.5 543.9 893 542.5 893.8 542.1 898 539.8 898.1 539.7 902.3 537.6 903 537.1 906.6 534.9 908 533.6 910.9 532.7 913 530.9 915.1 528.9 918 525.8 919.4 524.4 923 522 923.7 521.5 927.9 518.2 928 518.3 932.2 515.4 933 515.5 936.5 514 938 513.5 940.8 512.3 943 512.4 945 511.1 948 510.6 949.3 511.1 953 510.4 953.6 510.3 957.8 509.9 958 510.3 962.1 509.7 963 510 966.4 510.1 968 510.2 973 509.2 978 509.2 983 509.2 988 509.3 993 508.8 998 509.3 1003 508.5 1008 509.1 1013 509.3 1018 509 1023 509.1 1028 508.9 1033 509.1 1038 509.5 1043 509.2 1048 508.7 1053 508.5 1058 508.9 1063 508.6 1068 508.6 1073 508.7 1078 509.2 1083 508.6 1088 509.5 1093 509.5 1098 510.7 1103 510.4 1108 510.7 1113 511.4 1118 511.4 1123 511.9 1128 511 1133 510.6 1138 509.5 1143 509.2 1148 508.2 1153 507.3 1158 506.6 1163 506.1 1168 504.5 1173 504.1" stroke="#b2ff00" stroke-width="2.00"/><path d="M738 542 743 542.2 748 542.5 753 542.7 758 542.9 763 543.1 768 543.2 773 543.3 778 543.5 783 543.6 788 543.7 793 543.8 798 544 803 544.1 808 544.2 813 544.3 818 544.4 823 544.5 828 544.6 833 544.7 838 544.8 843 544.9 848 545 853 545.1 858 545.2 861.4 545.3 863 545.4 865.7 545.4 868 545.5 870 545.5 873 545.5 874.3 545.6 878 545.6 878.6 545.6 883 545.7 887.3 545.4 888 545.1 891.6 543.6 893 543.3 895.9 541.7 898 541.3 900.2 539.8 903 538.2 904.5 537.3 908 535 908.8 534.5 913 532.3 913.1 532.3 917.4 528.7 918 527.9 921.7 524.4 923 523.4 926 521.1 928 520.1 930.3 517.9 933 516.7 934.6 516 938 514 938.9 513.7 943 512.6 943.2 512.6 947.5 511.9 948 511.6 951.9 510.5 953 510.6 956.2 510.5 958 510.6 960.5 509.8 963 510 964.8 509.8 968 509.5 973 509.4 978 509.8 983 509.4 988 509 993 509.2 998 508.9 1003 509 1008 508.8 1013 509.4 1018 509.7 1023 509.1 1028 508.7 1033 509.3 1038 509.1 1043 508.8 1048 508.7 1053 508.9 1058 508.8 1063 508.8 1068 508.5 1073 508.8 1078 508.8 1083 508.8 1088 509 1093 510.1 1098 510.6 1103 510.3 1108 510.7 1113 511.3 1118 512 1123 511.8 1128 511 1133 510.6 1138 509.5 1143 508.7 1148 508.4 1153 507.4 1158 506.3 1163 505.7 1168 505 1173 504" stroke="#d2ff00" stroke-width="2.00"/><path d="M738 542 743 542.2 748 542.5 753 542.7 758 542.9 763 543.1 768 543.2 773 543.3 778 543.5 783 543.6 788 543.7 793 543.8 798 544 803 544.1 808 544.2 813 544.3 818 544.4 823 544.5 828 544.6 833 544.7 838 544.8 843 544.9 848 545 853 545.1 858 545.2 863 545.4 863.2 545.4 867.6 545.4 868 545.5 871.9 545.5 873 545.5 876.3 545.6 878 545.6 880.6 545.7 883 545.7 884.9 545.7 888 545.8 889.3 545.4 893 544.1 893.6 543.9 898 542.3 902.3 540.2 903 540 906.6 537.6 908 537.2 911 535 913 534.1 915.3 532.5 918 530.4 919.7 528.7 923 526 924 524.6 928 521.7 928.4 521.4 932.7 518.2 933 517.8 937 515.8 938 515.8 941.4 514 943 513.2 945.7 512.4 948 512.4 950.1 511.8 953 510.8 954.4 510.7 958 510.3 958.7 510.2 963 510.2 963.1 510.2 967.4 510 968 509.5 971.8 509.7 973 509.5 978 509.8 983 509.4 988 508.9 993 509.6 998 509.4 1003 509.4 1008 509.3 1013 509.5 1018 509.2 1023 509 1028 509.3 1033 509.1 1038 509.2 1043 509.2 1048 508.6 1053 509.3 1058 509.1 1063 508.8 1068 509.4 1073 508.9 1078 508.8 1083 509.3 1088 509.2 1093 509.6 1098 510.3 1103 510.1 1108 511.3 1113 511.4 1118 512.1 1123 512.6 1128 512 1133 511 1138 509.8 1143 509.2 1148 508.3 1153 507.1 1158 507 1163 505.6 1168 505.4 1173 503.9" stroke="#f2ff00" stroke-width="2.00"/><path d="M738 542 743 542.2 748 542.5 753 542.7 758 542.9 763 543.1 768 543.2 773 543.3 778 543.5 783 543.6 788 543.7 793 543.8 798 544 803 544.1 808 544.2 813 544.3 818 544.4 823 544.5 828 544.6 833 544.7 838 544.8 843 544.9 848 545 853 545.1 858 545.2 863 545.4 865.1 545.4 868 545.5 869.4 545.5 873 545.5 873.8 545.6 878 545.6 878.2 545.6 882.6 545.7 883 545.7 886.9 545.8 888 545.8 891.3 545.4 893 544.8 895.7 544 898 542.9 900.1 542.2 903 540.9 904.4 539.7 908 538.2 908.8 537.7 913 535.6 913.2 535.5 917.6 532.7 918 532 921.9 528.9 923 527.8 926.3 524.9 928 523.7 930.7 521.6 933 519.4 935.1 518.3 938 516.6 939.4 516 943 514.5 943.8 514.2 948 512.9 948.2 512.8 952.6 511.5 953 511.8 956.9 511 958 511.4 961.3 510.4 963 511.3 965.7 510 968 509.8 970.1 510.3 973 509.6 974.4 509.9 978 510 983 509.6 988 509.6 993 510.1 998 510 1003 509.9 1008 510 1013 509.2 1018 508.6 1023 509.5 1028 508.7 1033 509.3 1038 509.2 1043 509.4 1048 509.3 1053 508.9 1058 509.3 1063 508.7 1068 508.8 1073 509.3 1078 508.8 1083 509.2 1088 509 1093 509.8 1098 509.9 1103 510.2 1108 511 1113 511 1118 511.7 1123 512.5 1128 511.7 1133 511.2 1138 509.8 1143 508.9 1148 508.5 1153 507.2 1158 506.7 1163 506.1 1168 505.3 1173 504.5" stroke="#ffec00" stroke-width="2.00"/><path d="M738 542 743 542.2 748 542.5 753 542.7 758 542.9 763 543.1 768 543.2 773 543.3 778 543.5 783 543.6 788 543.7 793 543.8 798 544 803 544.1 808 544.2 813 544.3 818 544.4 823 544.5 828 544.6 833 544.7 838 544.8 843 544.9 848 545 853 545.1 858 545.2 863 545.4 866.9 545.4 868 545.5 871.3 545.5 873 545.5 875.7 545.6 878 545.6 880.1 545.7 883 545.7 884.5 545.7 888 545.8 888.9 545.8 893 545.6 893.3 545.5 897.7 544 898 543.8 902.2 541.8 903 541.9 906.6 539.8 908 539.1 911 537.4 913 536.5 915.4 535 918 533.6 919.8 532.4 923 530.3 924.2 528.5 928 525.6 928.6 525 933 521.8 937.4 518.5 938 517.6 941.8 516 943 515.4 946.3 513.8 948 513.3 950.7 512.5 953 512 955.1 512 958 511 959.5 511.1 963 510.3 963.9 510.2 968 510.7 968.3 510.7 972.7 509.8 973 509.7 977.1 510.2 978 510.1 983 510.3 988 509.5 993 509.4 998 510.1 1003 509.5 1008 509.8 1013 509.4 1018 510 1023 509.1 1028 509.4 1033 509.8 1038 509.2 1043 509.2 1048 509.2 1053 509.7 1058 508.8 1063 508.6 1068 509.3 1073 508.8 1078 509.4 1083 509.2 1088 509.5 1093 509.8 1098 510.1 1103 510.8 1108 511.5 1113 511.6 1118 511.9 1123 512.5 1128 511.5 1133 510.8 1138 510.1 1143 509.4 1148 508.4 1153 507.9 1158 506.4 1163 506.1 1168 505.1 1173 504.3" stroke="#ffcc00" stroke-width="2.00"/><path d="M738 542 743 542.2 748 542.5 753 542.7 758 542.9 763 543.1 768 543.2 773 543.3 778 543.5 783 543.6 788 543.7 793 543.8 798 544 803 544.1 808 544.2 813 544.3 818 544.4 823 544.5 828 544.6 833 544.7 838 544.8 843 544.9 848 545 853 545.1 858 545.2 863 545.4 868 545.5 868.7 545.5 873 545.5 873.2 545.6 877.6 545.6 878 545.6 882 545.7 883 545.7 886.5 545.8 888 545.8 890.9 545.8 893 545.9 895.4 545.5 898 544.6 899.8 544 903 542.8 904.3 542.4 908 540.6 908.7 540.3 913 537.7 913.1 537.6 917.6 535.2 918 534.9 922 533 923 532.2 926.5 529.3 928 527.8 930.9 525.1 933 523.4 935.4 521.3 938 519.6 939.8 518.4 943 516.4 944.2 516.2 948 514.4 948.7 514.1 953 513.3 953.1 513.3 957.6 511.9 958 511.9 962 511.8 963 511.2 966.5 511.5 968 511 970.9 510.8 973 510.4 975.3 510.4 978 510 983 509.7 988 509.9 993 509.8 998 509.6 1003 509.2 1008 509.4 1013 509.7 1018 509.5 1023 509.5 1028 509.2 1033 509.1 1038 509.3 1043 509 1048 509.5 1053 509.3 1058 509.5 1063 509.5 1068 509.1 1073 509.2 1078 509.3 1083 509.3 1088 509.9 1093 510.2 1098 510.5 1103 511.3 1108 511.7 1113 511.8 1118 512 1123 512.7 1128 512 1133 510.8 1138 510.1 1143 509.6 1148 508.6 1153 507.7 1158 507 1163 505.9 1168 505.3 1173 505" stroke="#ffac00" stroke-width="2.00"/><path d="M738 542 743 542.2 748 542.5 753 542.7 758 542.9 763 543.1 768 543.2 773 543.3 778 543.5 783 543.6 788 543.7 793 543.8 798 544 803 544.1 808 544.2 813 544.3 818 544.4 823 544.5 828 544.6 833 544.7 838 544.8 843 544.9 848 545 853 545.1 858 545.2 863 545.4 868 545.5 870.5 545.5 873 545.5 875 545.6 878 545.6 879.5 545.7 883 545.7 884 545.7 888 545.8 888.4 545.8 892.9 545.9 893 545.9 897.4 545.6 898 545.4 901.9 544.1 903 543.5 906.4 542 908 541.4 910.8 540.1 913 539.2 915.3 538 918 536.4 919.8 535.6 923 533.3 924.3 533.2 928 530.2 928.7 529.6 933 525.6 933.2 525.5 937.7 521.7 938 521.1 942.2 518.3 943 518 946.6 515.7 948 515.3 951.1 514.3 953 513.8 955.6 513.1 958 512.5 960.1 511.7 963 511.1 964.6 511.6 968 511.4 969 510.7 973 510.7 973.5 510.6 978 510.3 982.5 510.9 983 510.1 988 510.1 993 510.3 998 509.6 1003 509.9 1008 510.1 1013 509.7 1018 509.1 1023 509.6 1028 509.4 1033 509.6 1038 510 1043 509.7 1048 509.9 1053 509.9 1058 508.9 1063 509.3 1068 509.3 1073 509.2 1078 509.4 1083 509.3 1088 509.9 1093 511 1098 510.4 1103 511 1108 511.7 1113 512.1 1118 512.4 1123 512.4 1128 511.8 1133 511.3 1138 510.3 1143 509.3 1148 508.9 1153 508.1 1158 506.9 1163 506.2 1168 505.4 1173 504.9" stroke="#ff8c00" stroke-width="2.00"/><path d="M738 542 743 542.2 748 542.5 753 542.7 758 542.9 763 543.1 768 543.2 773 543.3 778 543.5 783 543.6 788 543.7 793 543.8 798 544 803 544.1 808 544.2 813 544.3 818 544.4 823 544.5 828 544.6 833 544.7 838 544.8 843 544.9 848 545 853 545.1 858 545.2 863 545.4 868 545.5 872.4 545.5 873 545.5 876.9 545.6 878 545.6 881.4 545.7 883 545.7 885.9 545.8 888 545.8 890.4 545.8 893 545.9 894.9 545.9 898 546 899.4 545.6 903 544.4 903.9 544 908 542.5 908.4 542.4 913 539.8 917.5 537.5 918 537.6 922 535.7 923 535.3 926.5 532.4 928 531.9 931 529.3 933 527.6 935.5 525.4 938 522.8 940 521.5 943 519.2 944.5 518.4 948 515.8 949.1 516 953 514.2 953.6 514 958 512.7 958.1 512.7 962.6 511.7 963 511.7 967.1 511.4 968 511.1 971.6 510.7 973 511.3 976.1 510.5 978 510.7 980.6 510.4 983 510.5 988 510.3 993 510.3 998 509.8 1003 510.2 1008 509.7 1013 509.7 1018 509.4 1023 509.6 1028 509.8 1033 509.6 1038 509.9 1043 509.5 1048 509.5 1053 509.7 1058 509.4 1063 509.5 1068 509 1073 509.6 1078 509.2 1083 509 1088 509.5 1093 510 1098 510.6 1103 511.1 1108 510.8 1113 512.2 1118 512.3 1123 512.6 1128 512.2 1133 510.8 1138 510.4 1143 510.1 1148 508.8 1153 508.1 1158 506.8 1163 506.1 1168 504.7 1173 504.5" stroke="#ff6c00" stroke-width="2.00"/><path d="M738 542 743 542.2 748 542.5 753 542.7 758 542.9 763 543.1 768 543.2 773 543.3 778 543.5 783 543.6 788 543.7 793 543.8 798 544 803 544.1 808 544.2 813 544.3 818 544.4 823 544.5 828 544.6 833 544.7 838 544.8 843 544.9 848 545 853 545.1 858 545.2 863 545.4 868 545.5 873 545.5 874.2 545.6 878 545.6 878.7 545.6 883 545.7 883.3 545.7 887.8 545.8 888 545.8 892.4 545.9 893 545.9 896.9 545.9 898 546 901.5 545.6 903 545.1 906 544.2 908 543.3 910.5 542.5 913 541.2 915.1 540.3 918 538.7 919.6 537.8 923 536.4 924.2 535.8 928 533.4 928.7 533 933 530.3 933.3 530.1 937.8 525.7 938 525.2 942.4 521.6 943 521.4 946.9 518.5 948 517.9 951.5 516.4 953 515.2 956 514.4 958 514.5 960.5 512.8 963 513 965.1 511.9 968 511.1 969.6 512 973 511 974.2 510.9 978 511.2 978.7 511.1 983 510.3 983.3 510.3 988 510.6 993 509.8 998 509.7 1003 509.9 1008 510.1 1013 510.1 1018 509.9 1023 509.6 1028 509.6 1033 509.4 1038 509.9 1043 509.9 1048 509.9 1053 509.1 1058 509.8 1063 509.5 1068 509.7 1073 509.4 1078 509.5 1083 509.7 1088 510.7 1093 510.5 1098 510.9 1103 511.3 1108 511.7 1113 511.6 1118 512.3 1123 512.9 1128 512.1 1133 511.3 1138 510.4 1143 509.9 1148 509 1153 508.8 1158 507.4 1163 506.7 1168 505.7 1173 504.6" stroke="#ff4d00" stroke-width="2.00"/><path d="M738 542 743 542.2 748 542.5 753 542.7 758 542.9 763 543.1 768 543.2 773 543.3 778 543.5 783 543.6 788 543.7 793 543.8 798 544 803 544.1 808 544.2 813 544.3 818 544.4 823 544.5 828 544.6 833 544.7 838 544.8 843 544.9 848 545 853 545.1 858 545.2 863 545.4 868 545.5 873 545.5 876 545.6 878 545.6 880.6 545.7 883 545.7 885.2 545.8 888 545.8 889.8 545.8 893 545.9 894.3 545.9 898 546 898.9 546 903 545.8 903.5 545.6 908 544 908.1 543.9 912.6 542.5 913 542.2 917.2 540.3 918 539.8 921.8 537.9 923 537.6 926.4 535.3 928 534.3 931 532.6 933 532 935.5 529.6 938 527.1 940.1 524.9 943 522.9 944.7 521.9 948 519.2 949.3 519.1 953 516.9 953.9 516.5 958 514.1 958.4 513.9 963 513.2 967.6 512.1 968 511.8 972.2 511.7 973 511.5 976.7 511.2 978 511.1 981.3 511.2 983 510.3 985.9 510.4 988 510 990.5 510.4 993 510.4 998 510.1 1003 509.6 1008 510.1 1013 509.6 1018 510.1 1023 510.2 1028 510 1033 510 1038 509.6 1043 510.3 1048 509.7 1053 509.6 1058 510 1063 509.6 1068 509.9 1073 509.9 1078 509.4 1083 510 1088 510.5 1093 510.7 1098 510.5 1103 511.6 1108 511.9 1113 512.6 1118 512.6 1123 513 1128 511.7 1133 511.5 1138 510.5 1143 510 1148 508.6 1153 508.5 1158 507.3 1163 506.5 1168 505.6 1173 505.3" stroke="#ff2d00" stroke-width="2.00"/><path d="M738 542 743 542.2 748 542.5 753 542.7 758 542.9 763 543.1 768 543.2 773 543.3 778 543.5 783 543.6 788 543.7 793 543.8 798 544 803 544.1 808 544.2 813 544.3 818 544.4 823 544.5 828 544.6 833 544.7 838 544.8 843 544.9 848 545 853 545.1 858 545.2 863 545.4 868 545.5 873 545.5 877.8 545.6 878 545.6 882.5 545.7 883 545.7 887.1 545.8 888 545.8 891.7 545.9 893 545.9 896.3 545.9 898 546 900.9 546 903 546 905.5 545.7 908 544.9 910.1 544.2 913 543.1 914.7 542.7 918 541.2 919.4 539.7 923 538.3 924 537.9 928 535.9 928.6 535.5 933 533 933.2 532.9 937.8 529 938 529.6 942.4 525.1 943 524.7 947 522.1 948 521.2 951.6 518.3 953 517.8 956.3 516.2 958 516 960.9 514.6 963 513.7 965.5 512.8 968 512.9 970.1 512.7 973 512 974.7 511.3 978 511.6 979.3 511.3 983 511.2 983.9 511.1 988 510.9 988.5 510.9 993 510.7 993.2 510.7 998 510.6 1003 509.9 1008 510.2 1013 510.3 1018 510 1023 509.7 1028 509.8 1033 509.9 1038 510.1 1043 509.9 1048 509.6 1053 510 1058 509.5 1063 510.3 1068 509.8 1073 509.6 1078 509.2 1083 510.3 1088 510.4 1093 510.3 1098 511.4 1103 511.3 1108 512.4 1113 512.2 1118 513 1123 513 1128 512.3 1133 511.6 1138 511 1143 509.6 1148 509 1153 508.2 1158 507.9 1163 506.5 1168 506.1 1173 505" stroke="#ff0d00" stroke-width="2.00"/><path d="M738 542 743 542.2 748 542.5 753 542.7 758 542.9 763 543.1 768 543.2 773 543.3 778 543.5 783 543.6 788 543.7 793 543.8 798 544 803 544.1 808 544.2 813 544.3 818 544.4 823 544.5 828 544.6 833 544.7 838 544.8 843 544.9 848 545 853 545.1 858 545.2 863 545.4 868 545.5 873 545.5 878 545.6 879.7 545.7 883 545.7 884.3 545.7 888 545.8 889 545.8 893 545.9 893.6 545.9 898 546 898.3 546 902.9 546 903 546 907.6 545.7 908 545.5 912.2 544.4 913 543.7 916.8 542.7 918 541.7 921.5 540.1 923 539.2 926.1 538.5 928 537.2 930.8 536 933 534.4 935.4 532.6 938 531.4 940.1 529.9 943 526.7 944.7 525.5 948 522.4 949.4 521.7 953 519.2 954 518.9 958 516.5 958.7 516.2 963 515.2 963.3 515.1 967.9 513.4 968 513.2 972.6 512.4 973 512.3 977.2 511.4 978 511.6 981.9 511.2 983 511.3 986.5 511.6 988 510.5 991.2 510.9 993 510.6 995.8 509.9 998 509.8 1003 510.5 1008 510.7 1013 510.1 1018 510.2 1023 510 1028 510.4 1033 510.8 1038 510.1 1043 510.1 1048 510.1 1053 509.4 1058 510 1063 510.6 1068 510 1073 510.5 1078 509.6 1083 509.5 1088 510.9 1093 511.1 1098 511.3 1103 511.6 1108 511.9 1113 512.2 1118 513.4 1123 512.8 1128 512.3 1133 511.1 1138 510.4 1143 509.5 1148 509.1 1153 508.4 1158 507.7 1163 506.7 1168 505.7 1173 505.1" stroke="#ff0013" stroke-width="2.00"/><path d="M738 542 743 542.2 748 542.5 753 542.7 758 542.9 763 543.1 768 543.2 773 543.3 778 543.5 783 543.6 788 543.7 793 543.8 798 544 803 544.1 808 544.2 813 544.3 818 544.4 823 544.5 828 544.6 833 544.7 838 544.8 843 544.9 848 545 853 545.1 858 545.2 863 545.4 868 545.5 873 545.5 878 545.6 881.5 545.7 883 545.7 886.2 545.8 888 545.8 890.9 545.8 893 545.9 895.5 545.9 898 546 900.2 546 903 546 904.9 546.1 908 546.1 909.6 545.7 913 544.6 914.3 544.3 918 543.2 918.9 542.9 923 540.5 923.6 540.2 928 538.8 928.3 538.7 933 535.7 937.7 532.6 938 532.5 942.3 529.3 943 528.8 947 525 948 525.1 951.7 522 953 521 956.4 518.5 958 518.1 961.1 516.4 963 515.9 965.7 514.3 968 514 970.4 513.5 973 513.1 975.1 512.5 978 511.7 979.8 512 983 510.7 984.5 511.9 988 510.9 989.1 511.1 993 510.9 993.8 510.8 998 510.3 998.5 510.3 1003 510.3 1008 510 1013 510.9 1018 510.3 1023 510 1028 510.2 1033 510.1 1038 509.9 1043 510 1048 510.2 1053 510.7 1058 510.2 1063 509.9 1068 509.7 1073 510.3 1078 510.1 1083 510.4 1088 510.1 1093 511.4 1098 511.5 1103 511.6 1108 512.2 1113 512.5 1118 513.3 1123 513.7 1128 512.8 1133 511.6 1138 511.5 1143 509.8 1148 509.7 1153 508.5 1158 507.6 1163 506.9 1168 506.7 1173 505.5" stroke="#ff0033" stroke-width="2.00"/><path d="M738 542 743 542.2 748 542.5 753 542.7 758 542.9 763 543.1 768 543.2 773 543.3 778 543.5 783 543.6 788 543.7 793 543.8 798 544 803 544.1 808 544.2 813 544.3 818 544.4 823 544.5 828 544.6 833 544.7 838 544.8 843 544.9 848 545 853 545.1 858 545.2 863 545.4 868 545.5 873 545.5 878 545.6 883 545.7 883.3 545.7 888 545.8 888.1 545.8 892.8 545.9 893 545.9 897.5 546 898 546 902.2 546 903 546 906.9 546.1 908 546.1 911.6 545.8 913 545.3 916.3 544.3 918 543.7 921 542.3 923 541.8 925.8 540.4 928 539.4 930.5 538.4 933 536.6 935.2 535.5 938 533.7 939.9 533 943 531.2 944.6 529.4 948 526.7 949.3 525.4 953 522.4 954 522.4 958 519.5 958.7 519.1 963 516.8 963.5 516.6 968 515 968.2 514.9 972.9 513.4 973 513.9 977.6 512.8 978 512.5 982.3 512 983 511.9 987 511.9 988 511.7 991.7 511.5 993 511.1 996.4 511.1 998 511 1001.2 510.3 1003 510.6 1008 510.3 1013 510.3 1018 510.8 1023 510.7 1028 510.4 1033 510.7 1038 510.4 1043 509.8 1048 510.4 1053 510.2 1058 510.2 1063 510.4 1068 510.1 1073 510.2 1078 509.5 1083 509.9 1088 510.6 1093 511.5 1098 511.5 1103 511.5 1108 512.4 1113 512.7 1118 512.9 1123 513.3 1128 513 1133 511.6 1138 511 1143 510.3 1148 509.2 1153 508.3 1158 507.5 1163 507.4 1168 506.4 1173 505.3" stroke="#ff0053" stroke-width="2.00"/><path d="M738 542 743 542.2 748 542.5 753 542.7 758 542.9 763 543.1 768 543.2 773 543.3 778 543.5 783 543.6 788 543.7 793 543.8 798 544 803 544.1 808 544.2 813 544.3 818 544.4 823 544.5 828 544.6 833 544.7 838 544.8 843 544.9 848 545 853 545.1 858 545.2 863 545.4 868 545.5 873 545.5 878 545.6 883 545.7 885.2 545.8 888 545.8 889.9 545.8 893 545.9 894.7 545.9 898 546 899.4 546 903 546 904.2 546.1 908 546.1 908.9 546.1 913 546 913.7 545.8 918 544.5 918.4 544.3 923 542.8 923.1 542.8 927.9 540.9 928 540.3 932.6 538.2 933 538.3 937.4 535.3 938 535.1 942.1 533.5 943 531.8 946.9 530 948 529.1 951.6 525.7 953 524.5 956.4 522.2 958 521.1 961.1 519 963 518.3 965.9 516.8 968 515.8 970.6 514.7 973 514.3 975.3 514.2 978 512.7 980.1 513.5 983 512.5 984.8 512.1 988 511.9 989.6 511.5 993 511.4 994.3 511.2 998 510.9 999.1 510.8 1003 510.9 1003.8 510.9 1008 510.7 1013 510.9 1018 511 1023 510.8 1028 510.9 1033 510 1038 510.7 1043 510.6 1048 510.1 1053 510.2 1058 510.8 1063 510.1 1068 510.1 1073 510.2 1078 509.8 1083 510.6 1088 511.5 1093 511 1098 511.6 1103 511.9 1108 512.3 1113 513.2 1118 513.1 1123 513.7 1128 513.1 1133 512.1 1138 511.2 1143 510.5 1148 509.2 1153 508.9 1158 507.8 1163 506.6 1168 507 1173 505.8" stroke="#ff0073" stroke-width="2.00"/><path d="M738 542 743 542.2 748 542.5 753 542.7 758 542.9 763 543.1 768 543.2 773 543.3 778 543.5 783 543.6 788 543.7 793 543.8 798 544 803 544.1 808 544.2 813 544.3 818 544.4 823 544.5 828 544.6 833 544.7 838 544.8 843 544.9 848 545 853 545.1 858 545.2 863 545.4 868 545.5 873 545.5 878 545.6 883 545.7 887 545.8 888 545.8 891.8 545.9 893 545.9 896.6 545.9 898 546 901.4 546 903 546 906.1 546.1 908 546.1 910.9 546.2 913 546.2 915.7 545.8 918 545.2 920.5 544.3 923 543.6 925.2 542.8 928 541.7 930 540.3 933 539 934.8 538.1 938 536.6 939.6 535.9 943 533.6 944.4 533.2 948 530.4 949.1 529.5 953 526.5 953.9 525.8 958 522.9 958.7 522.5 963 519.1 963.5 518.8 968 516.9 968.3 516.7 973 515.3 977.8 513.3 978 513.6 982.6 512.7 983 512.5 987.4 511.8 988 511.7 992.1 511.8 993 511.5 996.9 511.4 998 511.4 1001.7 511.1 1003 511.2 1006.5 511.3 1008 511.1 1013 510.6 1018 510.8 1023 510.9 1028 510.6 1033 510.6 1038 510.6 1043 510.3 1048 510.8 1053 510.6 1058 510.8 1063 510.3 1068 510.3 1073 510.5 1078 510.4 1083 510.1 1088 511.6 1093 510.9 1098 512.2 1103 511.7 1108 512.8 1113 512.9 1118 513.6 1123 513.6 1128 513.3 1133 512.5 1138 511.4 1143 510.6 1148 509.8 1153 508.6 1158 508.1 1163 507.2 1168 506.4 1173 506" stroke="#ff0093" stroke-width="2.00"/><path d="M738 542 743 542.2 748 542.5 753 542.7 758 542.9 763 543.1 768 543.2 773 543.3 778 543.5 783 543.6 788 543.7 793 543.8 798 544 803 544.1 808 544.2 813 544.3 818 544.4 823 544.5 828 544.6 833 544.7 838 544.8 843 544.9 848 545 853 545.1 858 545.2 863 545.4 868 545.5 873 545.5 878 545.6 883 545.7 888 545.8 888.9 545.8 893 545.9 893.7 545.9 898 546 898.5 546 903 546 903.3 546.1 908 546.1 908.1 546.1 912.9 546.2 913 546.2 917.7 545.9 918 545.8 922.5 544.5 923 544.3 927.3 542.6 928 542 932.2 540.6 933 540 937 538.6 938 538.1 941.8 536.2 943 535.2 946.6 532.8 948 532.3 951.4 529.6 953 528 956.2 525.4 958 523.9 961 522 963 520.3 965.8 519.1 968 518.2 970.7 517.4 973 515.4 975.5 515.3 978 514.7 980.3 514.2 983 512.9 985.1 513 988 512.4 989.9 512.1 993 511.9 994.7 511.6 998 511.9 999.5 512.1 1003 511 1004.3 510.6 1008 511 1009.1 511 1013 511.1 1018 511.3 1023 510.8 1028 510.9 1033 510.3 1038 510.3 1043 510.9 1048 510.5 1053 510.6 1058 510.6 1063 510.5 1068 510.6 1073 510 1078 510.3 1083 510.8 1088 510.9 1093 511.5 1098 511.9 1103 512.4 1108 511.9 1113 513 1118 513.3 1123 514.4 1128 512.9 1133 511.8 1138 511.7 1143 510.6 1148 509 1153 508.7 1158 508.5 1163 507.6 1168 506.8 1173 505.7" stroke="#ff00b3" stroke-width="2.00"/><path d="M738 542 743 542.2 748 542.5 753 542.7 758 542.9 763 543.1 768 543.2 773 543.3 778 543.5 783 543.6 788 543.7 793 543.8 798 544 803 544.1 808 544.2 813 544.3 818 544.4 823 544.5 828 544.6 833 544.7 838 544.8 843 544.9 848 545 853 545.1 858 545.2 863 545.4 868 545.5 873 545.5 878 545.6 883 545.7 888 545.8 890.7 545.8 893 545.9 895.5 545.9 898 546 900.4 546 903 546 905.2 546.1 908 546.1 910.1 546.2 913 546.2 914.9 546.2 918 546.3 919.8 545.9 923 545.2 924.6 544.3 928 543.4 929.5 542.7 933 541.1 934.3 540.7 938 539.1 939.1 538.4 943 536.5 944 535.5 948 533.3 948.8 532.9 953 529.9 953.7 529.3 958 526.2 958.5 525.8 963 522.3 963.4 522 968 519.3 968.2 519.2 973 516.4 977.9 515.2 978 515.3 982.7 513.6 983 513.9 987.6 512.8 988 513.6 992.4 511.9 993 512.5 997.3 511.5 998 511.5 1002.1 511.6 1003 511.6 1007 511.1 1008 511.8 1011.8 511.7 1013 510.9 1018 510.9 1023 511.1 1028 510.8 1033 511.3 1038 510.4 1043 510.3 1048 510.9 1053 510.5 1058 510.4 1063 510.6 1068 510.9 1073 510.4 1078 511.2 1083 511 1088 511.4 1093 511.6 1098 511.7 1103 512 1108 512.4 1113 513 1118 513.4 1123 514.1 1128 513.1 1133 512.3 1138 511.2 1143 511.6 1148 509.9 1153 508.9 1158 508.5 1163 507.8 1168 506.6 1173 505.8" stroke="#ff00d2" stroke-width="2.00"/><path d="M738 542 743 542.2 748 542.5 753 542.7 758 542.9 763 543.1 768 543.2 773 543.3 778 543.5 783 543.6 788 543.7 793 543.8 798 544 803 544.1 808 544.2 813 544.3 818 544.4 823 544.5 828 544.6 833 544.7 838 544.8 843 544.9 848 545 853 545.1 858 545.2 863 545.4 868 545.5 873 545.5 878 545.6 883 545.7 888 545.8 892.5 545.9 893 545.9 897.4 546 898 546 902.3 546 903 546 907.2 546.1 908 546.1 912 546.2 913 546.2 916.9 546.3 918 546.3 921.8 545.9 923 545.6 926.7 544.4 928 544.3 931.6 542.7 933 542 936.4 540.8 938 539.7 941.3 538.4 943 537.9 946.2 535.8 948 534.8 951.1 533.1 953 532 955.9 529.9 958 527.6 960.8 524.9 963 524.4 965.7 522.5 968 521 970.6 519.3 973 518.5 975.4 517.3 978 515.8 980.3 514.8 983 514.5 985.2 514 988 513.4 990.1 512.9 993 512.7 995 512.6 998 511.9 999.8 511.5 1003 511.6 1004.7 512 1008 511.6 1009.6 511.9 1013 511 1014.5 511.5 1018 511.1 1023 511 1028 511.2 1033 510.7 1038 511.4 1043 511.4 1048 510.7 1053 510.9 1058 511.2 1063 510.6 1068 510.9 1073 510.7 1078 510.8 1083 510.2 1088 511.2 1093 512.1 1098 511.9 1103 512.6 1108 513.6 1113 512.9 1118 513.3 1123 513.8 1128 513 1133 512.8 1138 512 1143 510.8 1148 510.5 1153 509 1158 508.2 1163 508.2 1168 507 1173 506.2" stroke="#ff00f2" stroke-width="2.00"/><path d="M738 542 743 542.2 748 542.5 753 542.7 758 542.9 763 543.1 768 543.2 773 543.3 778 543.5 783 543.6 788 543.7 793 543.8 798 544 803 544.1 808 544.2 813 544.3 818 544.4 823 544.5 828 544.6 833 544.7 838 544.8 843 544.9 848 545 853 545.1 858 545.2 863 545.4 868 545.5 873 545.5 878 545.6 883 545.7 888 545.8 893 545.9 894.4 545.9 898 546 899.3 546 903 546 904.2 546.1 908 546.1 909.1 546.2 913 546.2 914 546.2 918 546.3 918.9 546.3 923 546.2 923.8 546 928 544.8 928.7 544.5 933 543.1 933.7 542.8 938 541 938.6 540.8 943 538.7 943.5 538.5 948 535.8 948.4 535.6 953 533.5 953.3 533.4 958 530.1 958.2 529.9 963 526 963.1 525.9 968 521.7 972.9 519.3 973 519.3 977.8 516.7 978 516.8 982.8 515.5 983 514.6 987.7 514.1 988 513.5 992.6 513.2 993 513.3 997.5 512.5 998 512.3 1002.4 512.5 1003 512.1 1007.3 511.5 1008 511.7 1012.2 511.6 1013 511.5 1017.1 511.4 1018 511.4 1023 511.2 1028 511.4 1033 511.2 1038 511.5 1043 511.2 1048 510.7 1053 510.7 1058 510.6 1063 511 1068 510.9 1073 510.6 1078 510.7 1083 511.1 1088 511.4 1093 511.5 1098 512 1103 512.9 1108 512.7 1113 513.5 1118 514 1123 514.1 1128 513.4 1133 513 1138 511.7 1143 510.8 1148 509.9 1153 509.4 1158 508.7 1163 508 1168 506.9 1173 506.6" stroke="#ec00ff" stroke-width="2.00"/><path d="M738 542 743 542.2 748 542.5 753 542.7 758 542.9 763 543.1 768 543.2 773 543.3 778 543.5 783 543.6 788 543.7 793 543.8 798 544 803 544.1 808 544.2 813 544.3 818 544.4 823 544.5 828 544.6 833 544.7 838 544.8 843 544.9 848 545 853 545.1 858 545.2 863 545.4 868 545.5 873 545.5 878 545.6 883 545.7 888 545.8 893 545.9 896.2 545.9 898 546 901.2 546 903 546 906.1 546.1 908 546.1 911.1 546.2 913 546.2 916 546.3 918 546.3 920.9 546.3 923 546.4 925.9 546 928 545.5 930.8 544.5 933 543.8 935.8 542.5 938 541.4 940.7 540.6 943 539.1 945.6 538 948 536.9 950.6 535.6 953 534.3 955.5 532.7 958 531.7 960.5 530 963 527.1 965.4 525.6 968 524.6 970.4 522.3 973 520.3 975.3 519.5 978 518.4 980.2 516.7 983 516.4 985.2 515.7 988 514.8 990.1 514.1 993 513.9 995.1 513.2 998 512.6 1000 512.4 1003 511.8 1004.9 512.3 1008 511.5 1009.9 511.8 1013 511.9 1014.8 511.6 1018 511.2 1019.8 511.2 1023 511.1 1028 510.7 1033 510.8 1038 511.2 1043 511.1 1048 511 1053 510.7 1058 511.3 1063 511.1 1068 511 1073 510.9 1078 510.8 1083 511.3 1088 511.3 1093 511.8 1098 512.3 1103 512.8 1108 512.8 1113 513.7 1118 514.2 1123 514.1 1128 513.7 1133 512.7 1138 512.1 1143 511.2 1148 510.7 1153 509.5 1158 508.1 1163 507.4 1168 506.9 1173 506.2" stroke="#cc00ff" stroke-width="2.00"/><path d="M738 542 743 542.2 748 542.5 753 542.7 758 542.9 763 543.1 768 543.2 773 543.3 778 543.5 783 543.6 788 543.7 793 543.8 798 544 803 544.1 808 544.2 813 544.3 818 544.4 823 544.5 828 544.6 833 544.7 838 544.8 843 544.9 848 545 853 545.1 858 545.2 863 545.4 868 545.5 873 545.5 878 545.6 883 545.7 888 545.8 893 545.9 898 546 898.1 546 903 546 908 546.1 913 546.2 918 546.3 922.9 546.4 923 546.4 927.9 546.1 928 546 932.9 544.6 933 544.6 937.9 542.7 938 542.6 942.8 541.2 943 540.5 947.8 537.8 948 538.1 952.8 535.8 953 535.6 957.8 532.8 958 532.6 962.7 529.9 963 529.8 967.7 525.8 968 526 972.7 522.4 973 522.2 977.7 519.2 978 519.7 982.6 517.5 983 517.6 987.6 515 988 515.7 992.6 514 993 514.5 997.6 514.1 998 513.3 1002.5 512.8 1003 513 1007.5 512.3 1008 512.6 1012.5 512.4 1013 512.2 1017.5 511.3 1018 511.5 1022.4 511.9 1023 511.9 1028 511.4 1033 511.2 1038 511.5 1043 511.4 1048 511.2 1053 511.2 1058 511.3 1063 511.7 1068 511.2 1073 511.1 1078 511 1083 511.4 1088 511.8 1093 512.2 1098 512.5 1103 512.3 1108 513.1 1113 513.2 1118 514.3 1123 514.6 1128 513.9 1133 513.1 1138 512.2 1143 511.6 1148 510 1153 509.8 1158 508.7 1163 507.9 1168 507.2 1173 506.5" stroke="#ac00ff" stroke-width="2.00"/><path d="M738 542 743 542.2 748 542.5 753 542.7 758 542.9 763 543.1 768 543.2 773 543.3 778 543.5 783 543.6 788 543.7 793 543.8 798 544 803 544.1 808 544.2 813 544.3 818 544.4 823 544.5 828 544.6 833 544.7 838 544.8 843 544.9 848 545 853 545.1 858 545.2 863 545.4 868 545.5 873 545.5 878 545.6 883 545.7 888 545.8 893 545.9 898 546 899.9 546 903 546 904.9 546.1 908 546.1 909.9 546.2 913 546.2 914.9 546.2 918 546.3 919.9 546.3 923 546.4 924.9 546.4 928 546.5 930 546.1 933 545.2 935 544.4 938 543.7 940 542.6 943 541.8 945 540.6 948 539.4 950 537.9 953 537 955 535.8 958 534.4 960 533.3 963 531.2 965 529.6 968 527.8 970 526.1 973 523.5 975 522.3 978 520.4 980 519.3 983 518 985 517.4 988 516.4 990 516.1 993 515 995 514.4 998 513.8 1000.1 513.6 1003 513.1 1005.1 512.8 1008 512.6 1010.1 512.4 1013 512 1015.1 512 1018 512.4 1020.1 511.6 1023 511.5 1025.1 511.4 1028 511.8 1033 511.7 1038 511.4 1043 511.6 1048 511.4 1053 511.3 1058 511.7 1063 511.5 1068 510.9 1073 511.3 1078 510.6 1083 511.3 1088 511.8 1093 512 1098 512.7 1103 512.4 1108 513.1 1113 513.9 1118 514.5 1123 514.3 1128 514 1133 512.8 1138 512.2 1143 511.1 1148 510.5 1153 509.6 1158 509.4 1163 508.5 1168 507.5 1173 506.8" stroke="#8c00ff" stroke-width="2.00"/><path d="M738 542 743 542.2 748 542.5 753 542.7 758 542.9 763 543.1 768 543.2 773 543.3 778 543.5 783 543.6 788 543.7 793 543.8 798 544 803 544.1 808 544.2 813 544.3 818 544.4 823 544.5 828 544.6 833 544.7 838 544.8 843 544.9 848 545 853 545.1 858 545.2 863 545.4 868 545.5 873 545.5 878 545.6 883 545.7 888 545.8 893 545.9 898 546 901.8 546 903 546 906.8 546.1 908 546.1 911.8 546.2 913 546.2 916.9 546.3 918 546.3 921.9 546.4 923 546.4 927 546.5 928 546.5 932 546.1 933 545.8 937 544.6 938 544.2 942.1 542.8 943 542.4 947.1 540.3 948 539.9 952.2 537.9 953 537.9 957.2 535.4 958 535.2 962.2 533.4 963 532.6 967.3 529.7 968 529.2 972.3 526 973 525.7 977.3 522.5 978 522.3 982.4 519.8 983 519.9 987.4 517.5 988 517.3 992.5 515.3 993 516 997.5 514.2 998 514.6 1002.5 513.7 1003 513.7 1007.6 512.7 1008 512.7 1012.6 512.9 1013 512.4 1017.7 512.5 1018 512.3 1022.7 511.6 1023 512.5 1028 511.7 1033 511.8 1038 511.9 1043 511.7 1048 511.8 1053 511 1058 511.1 1063 511.4 1068 511.8 1073 511.5 1078 512 1083 511.5 1088 511.6 1093 512.5 1098 512.8 1103 512.8 1108 513.4 1113 513.8 1118 514.2 1123 515 1128 514.5 1133 513 1138 512.6 1143 511.5 1148 510.9 1153 509.6 1158 508.9 1163 508.4 1168 507.2 1173 506.8" stroke="#6c00ff" stroke-width="2.00"/><path d="M738 542 743 542.2 748 542.5 753 542.7 758 542.9 763 543.1 768 543.2 773 543.3 778 543.5 783 543.6 788 543.7 793 543.8 798 544 803 544.1 808 544.2 813 544.3 818 544.4 823 544.5 828 544.6 833 544.7 838 544.8 843 544.9 848 545 853 545.1 858 545.2 863 545.4 868 545.5 873 545.5 878 545.6 883 545.7 888 545.8 893 545.9 898 546 903 546 903.6 546.1 908 546.1 908.7 546.1 913 546.2 913.8 546.2 918 546.3 918.8 546.3 923 546.4 923.9 546.4 928 546.5 929 546.5 933 546.3 934 546 938 544.9 939.1 544.5 943 543.1 944.2 542.6 948 540.4 949.3 540.6 953 539 954.3 538.2 958 536.2 959.4 536 963 533.9 964.5 532.9 968 531.6 969.5 530.1 973 527.5 974.6 525.7 978 523.9 979.7 522.5 983 520.9 984.7 519.5 988 518 989.8 518 993 516.3 994.9 515.9 998 514.9 1000 514.6 1003 513.9 1005 513.1 1008 513.5 1010.1 513.3 1013 512.8 1015.2 513.3 1018 512.3 1020.2 512.3 1023 512.2 1025.3 511.9 1028 512.1 1033 511.7 1038 511.5 1043 511.8 1048 512 1053 512.2 1058 512 1063 511.8 1068 511.5 1073 510.8 1078 511 1083 512.2 1088 512 1093 512.2 1098 512.8 1103 513.3 1108 513.9 1113 513.9 1118 514.4 1123 514.5 1128 514.2 1133 512.8 1138 512.2 1143 511.8 1148 510.9 1153 510.1 1158 509.4 1163 508.3 1168 506.7 1173 506.9" stroke="#4c00ff" stroke-width="2.00"/><path d="M738 542 743 542.2 748 542.5 753 542.7 758 542.9 763 543.1 768 543.2 773 543.3 778 543.5 783 543.6 788 543.7 793 543.8 798 544 803 544.1 808 544.2 813 544.3 818 544.4 823 544.5 828 544.6 833 544.7 838 544.8 843 544.9 848 545 853 545.1 858 545.2 863 545.4 868 545.5 873 545.5 878 545.6 883 545.7 888 545.8 893 545.9 898 546 903 546 905.5 546.1 908 546.1 910.6 546.2 913 546.2 915.7 546.3 918 546.3 920.8 546.3 923 546.4 925.9 546.4 928 546.5 931 546.5 933 546.5 936.1 546 938 545.5 941.2 544.2 943 543.8 946.3 542.9 948 542.1 951.4 540.9 953 540 956.5 538.4 958 537.2 961.6 535.4 963 535.5 966.7 533.1 968 532.4 971.8 529.8 973 529.2 976.9 526 978 525.2 982 522.6 983 522.2 987.1 520 988 519.6 992.2 517.4 993 517.1 997.3 515.7 998 516 1002.4 514.5 1003 514.8 1007.5 513.4 1008 513.6 1012.6 513.1 1013 513.1 1017.7 512.4 1018 512.3 1022.8 511.9 1023 512.4 1027.9 512.4 1028 511.8 1033 511.6 1038 512.3 1043 512.1 1048 511.9 1053 511.8 1058 511.6 1063 511.8 1068 511.7 1073 511.7 1078 511.8 1083 511.5 1088 512.6 1093 512 1098 513 1103 513.5 1108 513.8 1113 514.3 1118 514.5 1123 514.3 1128 514.2 1133 512.6 1138 512.5 1143 511.8 1148 510.7 1153 510.1 1158 509.5 1163 508.4 1168 507.8 1173 507.1" stroke="#2d00ff" stroke-width="2.00"/><path d="M738 542 743 542.2 748 542.5 753 542.7 758 542.9 763 543.1 768 543.2 773 543.3 778 543.5 783 543.6 788 543.7 793 543.8 798 544 803 544.1 808 544.2 813 544.3 818 544.4 823 544.5 828 544.6 833 544.7 838 544.8 843 544.9 848 545 853 545.1 858 545.2 863 545.4 868 545.5 873 545.5 878 545.6 883 545.7 888 545.8 893 545.9 898 546 903 546 907.3 546.1 908 546.1 912.4 546.2 913 546.2 917.6 546.3 918 546.3 922.7 546.4 923 546.4 927.9 546.5 928 546.5 933 546.5 938 546 938.1 546 943 544.4 943.3 544.2 948 542.9 948.4 542.7 953 540.8 953.5 540.6 958 538.7 958.7 538.3 963 536.6 963.8 536.2 968 533.6 968.9 533.2 973 530.9 974.1 529.8 978 526.7 979.2 525.7 983 523.3 984.3 522.5 988 521 989.5 519.7 993 518.3 994.6 517.5 998 516.4 999.7 515.8 1003 515.6 1004.9 514.9 1008 514.6 1010 513.3 1013 513.6 1015.1 512.8 1018 512.5 1020.3 513.2 1023 512.5 1025.4 512.5 1028 512.1 1030.6 512.3 1033 512.5 1038 511.8 1043 511.7 1048 512.1 1053 511.8 1058 511.4 1063 511.6 1068 511.8 1073 511.9 1078 511.4 1083 511.7 1088 512.5 1093 513.2 1098 512.9 1103 513.3 1108 514.1 1113 514 1118 514.7 1123 514.9 1128 513.8 1133 513.6 1138 512.8 1143 511.6 1148 510.8 1153 510.5 1158 509 1163 508.1 1168 508 1173 507.1" stroke="#0d00ff" stroke-width="2.00"/><path d="M738 542 743 542.2 748 542.5 753 542.7 758 542.9 763 543.1 768 543.2 773 543.3 778 543.5 783 543.6 788 543.7 793 543.8 798 544 803 544.1 808 544.2 813 544.3 818 544.4 823 544.5 828 544.6 833 544.7 838 544.8 843 544.9 848 545 853 545.1 858 545.2 863 545.4 868 545.5 873 545.5 878 545.6 883 545.7 888 545.8 893 545.9 898 546 903 546 908 546.1 909.2 546.2 913 546.2 914.3 546.2 918 546.3 919.5 546.3 923 546.4 924.7 546.4 928 546.5 929.8 546.5 933 546.5 935 546.4 938 546.4 940.2 545.9 943 545.2 945.3 544.5 948 543.5 950.5 542.9 953 541.9 955.7 540.8 958 539.7 960.8 538.5 963 537.3 966 536 968 534.7 971.2 533.3 973 532.9 976.3 530.3 978 528.7 981.5 525.8 983 524.7 986.7 523 988 522.2 991.8 519.6 993 520 997 518 998 517.7 1002.2 515.8 1003 515.8 1007.3 514.7 1008 514.5 1012.5 514.1 1013 514.1 1017.7 513.5 1018 513.2 1022.8 512.7 1023 512.6 1028 512.5 1033 512.2 1033.2 512.2 1038 512 1043 512.3 1048 511.6 1053 512.2 1058 511.4 1063 511.6 1068 512.2 1073 512.3 1078 511.2 1083 512.6 1088 512.9 1093 512.4 1098 513.2 1103 513.6 1108 513.8 1113 514.5 1118 515.2 1123 515.2 1128 514.6 1133 513.7 1138 513.1 1143 512.4 1148 510.6 1153 509.9 1158 509.6 1163 509.1 1168 508 1173 507.5" stroke="#0013ff" stroke-width="2.00"/><path d="M738 542 743 542.2 748 542.5 753 542.7 758 542.9 763 543.1 768 543.2 773 543.3 778 543.5 783 543.6 788 543.7 793 543.8 798 544 803 544.1 808 544.2 813 544.3 818 544.4 823 544.5 828 544.6 833 544.7 838 544.8 843 544.9 848 545 853 545.1 858 545.2 863 545.4 868 545.5 873 545.5 878 545.6 883 545.7 888 545.8 893 545.9 898 546 903 546 908 546.1 911 546.2 913 546.2 916.2 546.3 918 546.3 921.4 546.4 923 546.4 926.6 546.4 928 546.5 931.8 546.5 933 546.5 937 546.4 938 546.4 942.2 546 943 545.7 947.4 544.3 948 544.2 952.6 542.8 953 542.6 957.8 540.4 958 540.9 963 538.4 968 536.4 968.2 536.3 973 533.5 973.4 533.3 978 530.3 978.6 529.8 983 526.4 983.8 525.8 988 523.4 989 522.9 993 520.8 994.2 519.6 998 518.4 999.4 517.7 1003 517.4 1004.6 516.4 1008 515.6 1009.8 514.9 1013 514.2 1015 513.8 1018 513.8 1020.2 513.4 1023 513.1 1025.4 513 1028 512.3 1030.6 513.3 1033 512.8 1035.8 512.3 1038 512.2 1041 512.5 1043 512.3 1048 512.2 1053 512.6 1058 512.1 1063 512.4 1068 511.5 1073 512 1078 511.9 1083 512.4 1088 512.5 1093 512.9 1098 513.3 1103 513.3 1108 514 1113 514.3 1118 514.4 1123 515.4 1128 514.4 1133 513.7 1138 513 1143 511.6 1148 511 1153 510.3 1158 510.1 1163 508.8 1168 508.1 1173 507.5" stroke="#0033ff" stroke-width="2.00"/><path d="M738 542 743 542.2 748 542.5 753 542.7 758 542.9 763 543.1 768 543.2 773 543.3 778 543.5 783 543.6 788 543.7 793 543.8 798 544 803 544.1 808 544.2 813 544.3 818 544.4 823 544.5 828 544.6 833 544.7 838 544.8 843 544.9 848 545 853 545.1 858 545.2 863 545.4 868 545.5 873 545.5 878 545.6 883 545.7 888 545.8 893 545.9 898 546 903 546 908 546.1 912.9 546.2 913 546.2 918 546.3 918.1 546.3 923 546.4 923.3 546.4 928 546.5 928.6 546.5 933 546.5 933.8 546.4 938 546.4 939 546.4 943 546.2 944.3 545.9 948 544.8 949.5 544.4 953 543.4 954.7 542.5 958 541.5 959.9 540.4 963 539.6 965.2 538.8 968 536.8 970.4 535.7 973 534.6 975.6 533.7 978 532.2 980.9 530.3 983 528.2 986.1 525.9 988 524.8 991.3 522.3 993 521.8 996.6 519.9 998 519.7 1001.8 518.1 1003 517.5 1007 516.5 1008 516 1012.2 515.4 1013 515 1017.5 514.4 1018 514.1 1022.7 513.5 1023 513.5 1027.9 513.5 1028 513 1033 513.2 1033.2 513.1 1038 513.1 1038.4 513 1043 512.3 1043.6 512.2 1048 511.9 1053 512.3 1058 512 1063 512.4 1068 512.7 1073 512.4 1078 512.4 1083 512.4 1088 512.8 1093 512.8 1098 513.1 1103 513.5 1108 514.2 1113 514.7 1118 515.4 1123 515.1 1128 515.4 1133 514 1138 512.7 1143 512.4 1148 510.7 1153 510.8 1158 509.8 1163 509.6 1168 508.3 1173 507.8" stroke="#0053ff" stroke-width="2.00"/><path d="M738 542 743 542.2 748 542.5 753 542.7 758 542.9 763 543.1 768 543.2 773 543.3 778 543.5 783 543.6 788 543.7 793 543.8 798 544 803 544.1 808 544.2 813 544.3 818 544.4 823 544.5 828 544.6 833 544.7 838 544.8 843 544.9 848 545 853 545.1 858 545.2 863 545.4 868 545.5 873 545.5 878 545.6 883 545.7 888 545.8 893 545.9 898 546 903 546 908 546.1 913 546.2 914.7 546.2 918 546.3 920 546.3 923 546.4 925.3 546.4 928 546.5 930.5 546.5 933 546.5 935.8 546.4 938 546.4 941 546.3 943 546.3 946.3 545.9 948 545.4 951.6 544.3 953 543.9 956.8 542.5 958 542.3 962.1 540.9 963 540.6 967.3 538.3 968 538.2 972.6 535.7 973 535.7 977.9 532.5 978 532.8 983 530.2 983.1 530.1 988 526.1 988.4 525.9 993 522.9 993.7 522.4 998 520.6 998.9 520.2 1003 518.3 1004.2 518.4 1008 517.1 1009.4 516.6 1013 515.4 1014.7 515.2 1018 514.9 1020 514.3 1023 513.9 1025.2 513.5 1028 513 1030.5 513.5 1033 513 1035.7 513.5 1038 512.5 1041 513 1043 512.7 1048 513 1053 512.1 1058 512 1063 512.2 1068 512.1 1073 512.1 1078 512.1 1083 511.9 1088 512.5 1093 513.7 1098 513.5 1103 513.5 1108 514.7 1113 514.6 1118 514.7 1123 515.3 1128 515.2 1133 514.2 1138 513.1 1143 512.4 1148 511.8 1153 510.5 1158 510 1163 508.9 1168 508.2 1173 507.7" stroke="#0073ff" stroke-width="2.00"/><path d="M738 542 743 542.2 748 542.5 753 542.7 758 542.9 763 543.1 768 543.2 773 543.3 778 543.5 783 543.6 788 543.7 793 543.8 798 544 803 544.1 808 544.2 813 544.3 818 544.4 823 544.5 828 544.6 833 544.7 838 544.8 843 544.9 848 545 853 545.1 858 545.2 863 545.4 868 545.5 873 545.5 878 545.6 883 545.7 888 545.8 893 545.9 898 546 903 546 908 546.1 913 546.2 916.6 546.3 918 546.3 921.9 546.4 923 546.4 927.2 546.5 928 546.5 932.5 546.5 933 546.5 937.8 546.4 938 546.4 943 546.3 943.1 546.3 948 545.9 948.3 545.9 953 544.6 953.6 544.4 958 542.8 958.9 542.4 963 541.6 964.2 540.3 968 539.1 969.5 538.4 973 536.5 974.8 535.9 978 533.9 980.1 532.9 983 531.6 985.4 529.7 988 528.3 990.7 526.5 993 524.8 996 523 998 522.4 1001.3 520.5 1003 519.7 1006.6 518.4 1008 518.2 1011.9 517.2 1013 516.7 1017.2 515.9 1018 515.8 1022.4 514.3 1023 514.7 1027.7 513.9 1028 514.2 1033 513.6 1038 512.9 1038.3 512.8 1043 512.6 1043.6 512.6 1048 513 1048.9 513 1053 512.7 1058 512.4 1063 512.6 1068 512.6 1073 512 1078 511.9 1083 512.5 1088 513.3 1093 513.8 1098 513.9 1103 514.2 1108 514.6 1113 515.5 1118 515.5 1123 515.4 1128 514.9 1133 513.6 1138 513.3 1143 512.1 1148 511.6 1153 511.1 1158 510 1163 509.3 1168 508.7 1173 507.8" stroke="#0093ff" stroke-width="2.00"/><path d="M738 542 743 542.2 748 542.5 753 542.7 758 542.9 763 543.1 768 543.2 773 543.3 778 543.5 783 543.6 788 543.7 793 543.8 798 544 803 544.1 808 544.2 813 544.3 818 544.4 823 544.5 828 544.6 833 544.7 838 544.8 843 544.9 848 545 853 545.1 858 545.2 863 545.4 868 545.5 873 545.5 878 545.6 883 545.7 888 545.8 893 545.9 898 546 903 546 908 546.1 913 546.2 918 546.3 918.4 546.3 923 546.4 923.8 546.4 928 546.5 929.1 546.5 933 546.5 934.4 546.4 938 546.4 939.7 546.4 943 546.3 945.1 546.3 948 546.2 950.4 545.8 953 545.1 955.7 544.4 958 543.4 961 542.5 963 541.4 966.4 540.6 968 539.4 971.7 538.4 973 538.2 977 536.1 978 535.6 982.3 533.6 983 533.2 987.7 530 988 529.6 993 526.4 998 523.1 998.3 522.9 1003 520.8 1003.6 520.5 1008 518.7 1009 518.1 1013 517.1 1014.3 516.9 1018 515.7 1019.6 515.3 1023 514.8 1024.9 515 1028 513.8 1030.3 513.9 1033 513.3 1035.6 513.8 1038 513.4 1040.9 512.9 1043 513 1046.2 512.5 1048 512.9 1053 513.1 1058 511.9 1063 512.8 1068 512.9 1073 512.6 1078 512.4 1083 513.2 1088 513.2 1093 513.9 1098 513.6 1103 514.4 1108 514.7 1113 514.8 1118 515.2 1123 515.3 1128 515.4 1133 514.5 1138 513.7 1143 512.6 1148 511.9 1153 511 1158 509.8 1163 508.7 1168 508.8 1173 507.6" stroke="#00b2ff" stroke-width="2.00"/><path d="M738 542 743 542.2 748 542.5 753 542.7 758 542.9 763 543.1 768 543.2 773 543.3 778 543.5 783 543.6 788 543.7 793 543.8 798 544 803 544.1 808 544.2 813 544.3 818 544.4 823 544.5 828 544.6 833 544.7 838 544.8 843 544.9 848 545 853 545.1 858 545.2 863 545.4 868 545.5 873 545.5 878 545.6 883 545.7 888 545.8 893 545.9 898 546 903 546 908 546.1 913 546.2 918 546.3 920.3 546.3 923 546.4 925.7 546.4 928 546.5 931 546.5 933 546.5 936.4 546.4 938 546.4 941.7 546.3 943 546.3 947.1 546.3 948 546.2 952.4 545.8 953 545.6 957.8 544.4 958 544.3 963 542.5 963.1 542.5 968 540.4 968.5 540.2 973 539 973.9 538.6 978 536.4 979.2 535.6 983 533.6 984.6 532.8 988 531.5 989.9 530.4 993 527.9 995.3 526.1 998 524.6 1000.6 523.7 1003 521.9 1006 520.7 1008 519.2 1011.4 518.4 1013 517.4 1016.7 516.1 1018 516.6 1022.1 515.6 1023 515.5 1027.4 514.7 1028 514.6 1032.8 514.1 1033 513.8 1038 513.6 1038.1 513.5 1043 513.1 1043.5 513.1 1048 512.9 1048.8 512.9 1053 513.1 1054.2 512.4 1058 512.5 1063 512.8 1068 512.7 1073 512.2 1078 512.7 1083 512.4 1088 513.3 1093 513 1098 513.7 1103 514 1108 514.9 1113 515.5 1118 515.3 1123 516.4 1128 514.7 1133 514.2 1138 514.2 1143 513.1 1148 511.7 1153 511.1 1158 510.5 1163 509.4 1168 508.2 1173 507.9" stroke="#00d2ff" stroke-width="2.00"/><path d="M738 542 743 542.2 748 542.5 753 542.7 758 542.9 763 543.1 768 543.2 773 543.3 778 543.5 783 543.6 788 543.7 793 543.8 798 544 803 544.1 808 544.2 813 544.3 818 544.4 823 544.5 828 544.6 833 544.7 838 544.8 843 544.9 848 545 853 545.1 858 545.2 863 545.4 868 545.5 873 545.5 878 545.6 883 545.7 888 545.8 893 545.9 898 546 903 546 908 546.1 913 546.2 918 546.3 922.2 546.4 923 546.4 927.5 546.5 928 546.5 932.9 546.5 933 546.5 938 546.4 938.3 546.4 943 546.3 943.7 546.3 948 546.2 949.1 546.2 953 546.1 954.5 545.7 958 544.8 959.9 544.3 963 543.3 965.3 542.4 968 541.6 970.6 540.2 973 539.7 976 538.5 978 537.4 981.4 535.8 983 535.4 986.8 533 988 533.3 992.2 530.5 993 529.5 997.6 526.4 998 526.7 1003 523.6 1008 520.5 1008.4 520.4 1013 519.1 1013.7 518.9 1018 516.7 1019.1 516.8 1023 516.4 1024.5 515.1 1028 514.5 1029.9 515 1033 514.7 1035.3 514.1 1038 514.4 1040.7 513.8 1043 513.3 1046.1 513.7 1048 513.5 1051.5 513.3 1053 513.4 1058 513.5 1063 513.1 1068 512.4 1073 512.6 1078 512.3 1083 512.6 1088 513.6 1093 513.8 1098 513.9 1103 514.2 1108 514.7 1113 515.3 1118 515.8 1123 516.2 1128 515.9 1133 515.3 1138 513.8 1143 512.6 1148 512.2 1153 511.1 1158 510.1 1163 509.7 1168 508.8 1173 507.7" stroke="#00f2ff" stroke-width="2.00"/><path d="M738 542 743 542.2 748 542.5 753 542.7 758 542.9 763 543.1 768 543.2 773 543.3 778 543.5 783 543.6 788 543.7 793 543.8 798 544 803 544.1 808 544.2 813 544.3 818 544.4 823 544.5 828 544.6 833 544.7 838 544.8 843 544.9 848 545 853 545.1 858 545.2 863 545.4 868 545.5 873 545.5 878 545.6 883 545.7 888 545.8 893 545.9 898 546 903 546 908 546.1 913 546.2 918 546.3 923 546.4 924 546.4 928 546.5 929.4 546.5 933 546.5 934.9 546.4 938 546.4 940.3 546.4 943 546.3 945.7 546.3 948 546.2 951.1 546.2 953 546.2 956.5 545.8 958 545.4 961.9 544.1 963 543.9 967.4 542.7 968 542.2 972.8 539.9 973 540.9 978 538 978.2 538 983 536.1 983.6 535.8 988 533.5 989 533.6 993 531.1 994.5 530.4 998 527.9 999.9 526.6 1003 524.8 1005.3 522.9 1008 521.6 1010.7 520.5 1013 519.7 1016.1 518.3 1018 518.1 1021.6 517.2 1023 516.4 1027 515.6 1028 515.5 1032.4 514.6 1033 514.4 1037.8 513.9 1038 514.6 1043 514.4 1043.2 514.3 1048 513.9 1048.6 513.9 1053 513.5 1054.1 513 1058 513.3 1059.5 512.9 1063 513.2 1068 512.8 1073 513 1078 512.5 1083 513.2 1088 513.2 1093 514.5 1098 514.5 1103 514.7 1108 514.8 1113 515.4 1118 516 1123 515.9 1128 515.9 1133 514.8 1138 513.8 1143 513 1148 511.8 1153 511.1 1158 510.8 1163 509.7 1168 509 1173 508.2" stroke="#00ffec" stroke-width="2.00"/><path d="M738 542 743 542.2 748 542.5 753 542.7 758 542.9 763 543.1 768 543.2 773 543.3 778 543.5 783 543.6 788 543.7 793 543.8 798 544 803 544.1 808 544.2 813 544.3 818 544.4 823 544.5 828 544.6 833 544.7 838 544.8 843 544.9 848 545 853 545.1 858 545.2 863 545.4 868 545.5 873 545.5 878 545.6 883 545.7 888 545.8 893 545.9 898 546 903 546 908 546.1 913 546.2 918 546.3 923 546.4 925.9 546.4 928 546.5 931.3 546.5 933 546.5 936.8 546.4 938 546.4 942.2 546.3 943 546.3 947.7 546.2 948 546.2 953 546.2 953.1 546.2 958 545.9 958.6 545.7 963 544.6 964 544.3 968 543.3 969.5 542.5 973 541.3 974.9 540.5 978 538.9 980.4 538.4 983 537 985.8 536.2 988 534.4 991.3 533.7 993 532.7 996.7 530.6 998 529.6 1002.2 526.3 1003 526.4 1007.6 523.3 1008 523.2 1013 520.4 1013.1 520.3 1018 519 1018.5 518.9 1023 517.9 1024 517 1028 516.2 1029.4 515.9 1033 515.4 1034.9 514.5 1038 514.8 1040.3 514 1043 514.3 1045.8 513.7 1048 514.1 1051.2 513.7 1053 513.8 1056.7 513.6 1058 513.2 1062.1 513 1063 513.3 1068 513.4 1073 513.1 1078 512.4 1083 513 1088 514 1093 514.4 1098 514.6 1103 514.8 1108 514.3 1113 515.8 1118 515.9 1123 516.1 1128 516.1 1133 515.1 1138 513.4 1143 513 1148 511.9 1153 511.7 1158 510.5 1163 509.9 1168 509.2 1173 508.3" stroke="#00ffcc" stroke-width="2.00"/><path d="M738 542 743 542.2 748 542.5 753 542.7 758 542.9 763 543.1 768 543.2 773 543.3 778 543.5 783 543.6 788 543.7 793 543.8 798 544 803 544.1 808 544.2 813 544.3 818 544.4 823 544.5 828 544.6 833 544.7 838 544.8 843 544.9 848 545 853 545.1 858 545.2 863 545.4 868 545.5 873 545.5 878 545.6 883 545.7 888 545.8 893 545.9 898 546 903 546 908 546.1 913 546.2 918 546.3 923 546.4 927.7 546.5 928 546.5 933 546.5 933.2 546.5 938 546.4 938.7 546.4 943 546.3 944.2 546.3 948 546.2 949.7 546.2 953 546.2 955.1 546.1 958 546.1 960.6 545.7 963 545 966.1 544.1 968 543.5 971.6 542.6 973 542.1 977.1 540.9 978 539.5 982.5 538.5 983 538.2 988 535.8 993 533.9 993.5 533.7 998 531.4 999 530.5 1003 527.5 1004.5 526.2 1008 525.3 1010 522.8 1013 521.9 1015.4 521.6 1018 519.8 1020.9 518.3 1023 518.5 1026.4 516.9 1028 516.6 1031.9 516.2 1033 516.2 1037.4 515.1 1038 514.5 1042.8 514.8 1043 514.8 1048 513.8 1048.3 513.7 1053 513.9 1053.8 513.8 1058 513.5 1059.3 514.4 1063 513.7 1064.8 514.1 1068 512.9 1073 513.6 1078 512.9 1083 513 1088 514.2 1093 514.1 1098 514.6 1103 515.2 1108 515.5 1113 515.4 1118 516.5 1123 516.6 1128 516.2 1133 514.7 1138 514.6 1143 513.4 1148 512.1 1153 511.1 1158 510.5 1163 510.3 1168 509.2 1173 508.1" stroke="#00ffac" stroke-width="2.00"/><path d="M738 542 743 542.2 748 542.5 753 542.7 758 542.9 763 543.1 768 543.2 773 543.3 778 543.5 783 543.6 788 543.7 793 543.8 798 544 803 544.1 808 544.2 813 544.3 818 544.4 823 544.5 828 544.6 833 544.7 838 544.8 843 544.9 848 545 853 545.1 858 545.2 863 545.4 868 545.5 873 545.5 878 545.6 883 545.7 888 545.8 893 545.9 898 546 903 546 908 546.1 913 546.2 918 546.3 923 546.4 928 546.5 929.6 546.5 933 546.5 935.1 546.4 938 546.4 940.6 546.3 943 546.3 946.1 546.3 948 546.2 951.7 546.2 953 546.2 957.2 546.1 958 546.1 962.7 545.6 963 545.6 968 544.1 968.2 544.1 973 542.8 973.7 542.5 978 541 979.2 540.2 983 539 984.7 538.4 988 537.1 990.2 535.3 993 534.8 995.7 532.8 998 533 1001.3 530.3 1003 528.7 1006.8 526.9 1008 526 1012.3 523.3 1013 522.6 1017.8 520.9 1018 520.8 1023 519 1023.3 518.9 1028 517.1 1028.8 516.9 1033 516.4 1034.3 515.7 1038 515.4 1039.8 515.8 1043 514.6 1045.3 514.6 1048 514.5 1050.9 514.3 1053 514.5 1056.4 514.2 1058 513.4 1061.9 513.5 1063 514.2 1067.4 513.6 1068 513.5 1073 513.7 1078 513.1 1083 513.3 1088 513.8 1093 514.5 1098 514.6 1103 514.9 1108 516.2 1113 515.6 1118 516.5 1123 516.6 1128 516.5 1133 515.2 1138 514 1143 513.1 1148 512.6 1153 511.9 1158 510.9 1163 509.8 1168 509.2 1173 508.8" stroke="#00ff8c" stroke-width="2.00"/><path d="M738 542 743 542.2 748 542.5 753 542.7 758 542.9 763 543.1 768 543.2 773 543.3 778 543.5 783 543.6 788 543.7 793 543.8 798 544 803 544.1 808 544.2 813 544.3 818 544.4 823 544.5 828 544.6 833 544.7 838 544.8 843 544.9 848 545 853 545.1 858 545.2 863 545.4 868 545.5 873 545.5 878 545.6 883 545.7 888 545.8 893 545.9 898 546 903 546 908 546.1 913 546.2 918 546.3 923 546.4 928 546.5 931.5 546.5 933 546.5 937 546.4 938 546.4 942.6 546.3 943 546.3 948 546.2 948.1 546.2 953 546.2 953.6 546.2 958 546.1 959.2 546.1 963 546 964.7 545.7 968 544.9 970.3 544.2 973 543.4 975.8 542.7 978 541.5 981.4 540 983 540.1 986.9 538.2 988 537.7 992.4 536.1 993 535.3 998 533.4 1003 530.8 1003.5 530.5 1008 527.6 1009.1 526.8 1013 524.8 1014.6 523.6 1018 522 1020.1 520.8 1023 519.7 1025.7 518.7 1028 517.8 1031.2 517.3 1033 517.1 1036.8 515.4 1038 515.3 1042.3 514.9 1043 514.6 1047.9 514.7 1048 514.4 1053 514.2 1053.4 514.2 1058 514.4 1058.9 514.3 1063 513.9 1064.5 513.4 1068 513.5 1070 513.5 1073 513.7 1078 513.1 1083 513.6 1088 513.9 1093 514.2 1098 514.7 1103 515.2 1108 515.5 1113 515.8 1118 516.5 1123 516.8 1128 515.9 1133 515.2 1138 514.8 1143 513 1148 512.8 1153 511.4 1158 510.6 1163 510.5 1168 509.2 1173 508.6" stroke="#00ff6c" stroke-width="2.00"/><path d="M738 542 743 542.2 748 542.5 753 542.7 758 542.9 763 543.1 768 543.2 773 543.3 778 543.5 783 543.6 788 543.7 793 543.8 798 544 803 544.1 808 544.2 813 544.3 818 544.4 823 544.5 828 544.6 833 544.7 838 544.8 843 544.9 848 545 853 545.1 858 545.2 863 545.4 868 545.5 873 545.5 878 545.6 883 545.7 888 545.8 893 545.9 898 546 903 546 908 546.1 913 546.2 918 546.3 923 546.4 928 546.5 933 546.5 933.3 546.5 938 546.4 938.9 546.4 943 546.3 944.5 546.3 948 546.2 950.1 546.2 953 546.2 955.6 546.1 958 546.1 961.2 546.1 963 546 966.8 545.6 968 545.3 972.4 544.2 973 543.9 977.9 542.7 978 542.3 983 540.4 983.5 540.2 988 538.3 989.1 538.2 993 536.8 994.6 536.3 998 534.1 1000.2 534 1003 532 1005.8 530.4 1008 529.1 1011.4 526.8 1013 526 1016.9 523.7 1018 523.3 1022.5 521.1 1023 520.9 1028 519.1 1028.1 519.1 1033 517.8 1033.6 517.7 1038 516.6 1039.2 516.1 1043 515.5 1044.8 515 1048 515.7 1050.4 514.2 1053 514.7 1055.9 514.1 1058 513.9 1061.5 513.9 1063 514.1 1067.1 514.4 1068 513.8 1073 513.9 1078 513.9 1083 513.8 1088 513.8 1093 514.3 1098 514.7 1103 515.1 1108 515.7 1113 516 1118 516.5 1123 517.5 1128 516.1 1133 515.1 1138 514.6 1143 513.6 1148 512.9 1153 512.4 1158 511.5 1163 510.1 1168 509.1 1173 509.3" stroke="#00ff4d" stroke-width="2.00"/><path d="M738 542 743 542.2 748 542.5 753 542.7 758 542.9 763 543.1 768 543.2 773 543.3 778 543.5 783 543.6 788 543.7 793 543.8 798 544 803 544.1 808 544.2 813 544.3 818 544.4 823 544.5 828 544.6 833 544.7 838 544.8 843 544.9 848 545 853 545.1 858 545.2 863 545.4 868 545.5 873 545.5 878 545.6 883 545.7 888 545.8 893 545.9 898 546 903 546 908 546.1 913 546.2 918 546.3 923 546.4 928 546.5 933 546.5 935.2 546.4 938 546.4 940.8 546.3 943 546.3 946.4 546.3 948 546.2 952 546.2 953 546.2 957.6 546.1 958 546.1 963 546 963.2 546 968 545.7 968.8 545.5 973 544.5 974.4 544.1 978 542.9 980 542.1 983 541.1 985.6 540.7 988 539.4 991.2 537.7 993 537.3 996.8 535.9 998 535.2 1002.4 533.5 1003 533 1008 530.8 1008.1 530.7 1013 527 1013.7 526.5 1018 524.4 1019.3 524 1023 522.3 1024.9 520.9 1028 519.3 1030.5 518.6 1033 518.3 1036.1 517.8 1038 516.9 1041.7 516.2 1043 516.4 1047.3 514.9 1048 515.6 1052.9 514.8 1053 514.9 1058 514.6 1058.5 514.6 1063 514.6 1064.1 514 1068 514.1 1069.7 514.2 1073 514 1075.3 513.8 1078 513.6 1083 513.9 1088 514.4 1093 514.3 1098 514.6 1103 515.6 1108 516.3 1113 516.6 1118 516.5 1123 517 1128 516.2 1133 515.1 1138 515.1 1143 513 1148 513.4 1153 511.7 1158 510.9 1163 510.5 1168 509.9 1173 508.6" stroke="#00ff2d" stroke-width="2.00"/><path d="M738 542 743 542.2 748 542.5 753 542.7 758 542.9 763 543.1 768 543.2 773 543.3 778 543.5 783 543.6 788 543.7 793 543.8 798 544 803 544.1 808 544.2 813 544.3 818 544.4 823 544.5 828 544.6 833 544.7 838 544.8 843 544.9 848 545 853 545.1 858 545.2 863 545.4 868 545.5 873 545.5 878 545.6 883 545.7 888 545.8 893 545.9 898 546 903 546 908 546.1 913 546.2 918 546.3 923 546.4 928 546.5 933 546.5 937.1 546.4 938 546.4 942.7 546.3 943 546.3 948 546.2 948.3 546.2 953 546.2 954 546.2 958 546.1 959.6 546.1 963 546 965.2 546 968 546 970.9 545.6 973 544.9 976.5 544 978 543.7 982.1 542.6 983 542.1 987.8 540.5 988 540.4 993 538.2 993.4 538.1 998 536.6 999 536 1003 534.9 1004.7 533.3 1008 532.5 1010.3 530.8 1013 528.3 1016 527 1018 525.6 1021.6 523.7 1023 523 1027.2 521 1028 521.1 1032.9 518.8 1033 519.6 1038 518 1038.5 517.9 1043 517.1 1044.1 516.6 1048 516.2 1049.8 515.3 1053 514.8 1055.4 515 1058 515 1061 514.4 1063 514.4 1066.7 514.7 1068 514.2 1072.3 513.6 1073 513.9 1077.9 513.8 1078 514.3 1083 514.2 1088 514.4 1093 514.5 1098 515.3 1103 514.7 1108 516.5 1113 516 1118 517.5 1123 516.7 1128 516.2 1133 515.1 1138 514.6 1143 513.3 1148 513.1 1153 511.9 1158 511.2 1163 510.9 1168 509.9 1173 508.8" stroke="#00ff0d" stroke-width="2.00"/><path d="M738 542 743 542.2 748 542.5 753 542.7 758 542.9 763 543.1 768 543.2 773 543.3 778 543.5 783 543.6 788 543.7 793 543.8 798 544 803 544.1 808 544.2 813 544.3 818 544.4 823 544.5 828 544.6 833 544.7 838 544.8 843 544.9 848 545 853 545.1 858 545.2 863 545.4 868 545.5 873 545.5 878 545.6 883 545.7 888 545.8 893 545.9 898 546 903 546 908 546.1 913 546.2 918 546.3 923 546.4 928 546.5 933 546.5 938 546.4 938.9 546.4 943 546.3 944.6 546.3 948 546.2 950.3 546.2 953 546.2 955.9 546.1 958 546.1 961.6 546 963 546 967.3 546 968 546 972.9 545.5 973 545.5 978 544.4 978.6 544.2 983 542.7 984.3 542.4 988 541.2 989.9 540.5 993 539.5 995.6 538.4 998 537 1001.3 536.8 1003 535.5 1006.9 534.1 1008 533.7 1012.6 530.4 1013 530.5 1018 527 1018.2 526.9 1023 524.4 1023.9 523.9 1028 521.9 1029.6 521.6 1033 520.2 1035.2 519.8 1038 518.2 1040.9 517.5 1043 516.4 1046.6 516.4 1048 516.3 1052.2 515.7 1053 516 1057.9 515 1058 515.7 1063 514.8 1063.6 514.7 1068 514.4 1069.2 514.5 1073 515.1 1074.9 514.3 1078 514.6 1083 514.4 1088 514.4 1093 515 1098 515.1 1103 515.8 1108 515.7 1113 516.8 1118 516 1123 516.9 1128 516.8 1133 515.6 1138 515.2 1143 514 1148 512.7 1153 512.3 1158 511.3 1163 510.7 1168 509.5 1173 509.1" stroke="#13ff00" stroke-width="2.00"/><path d="M738 542 743 542.2 748 542.5 753 542.7 758 542.9 763 543.1 768 543.2 773 543.3 778 543.5 783 543.6 788 543.7 793 543.8 798 544 803 544.1 808 544.2 813 544.3 818 544.4 823 544.5 828 544.6 833 544.7 838 544.8 843 544.9 848 545 853 545.1 858 545.2 863 545.4 868 545.5 873 545.5 878 545.6 883 545.7 888 545.8 893 545.9 898 546 903 546 908 546.1 913 546.2 918 546.3 923 546.4 928 546.5 933 546.5 938 546.4 940.8 546.3 943 546.3 946.5 546.3 948 546.2 952.2 546.2 953 546.2 957.9 546.1 958 546.1 963 546 963.6 546 968 546 969.3 545.9 973 545.9 975 545.5 978 544.6 980.7 544.1 983 542.9 986.4 542.1 988 541.9 992.1 540.3 993 540.1 997.8 538.4 998 538 1003 536 1003.5 535.8 1008 534 1009.2 533.4 1013 531.8 1014.8 530.8 1018 529 1020.5 527.2 1023 525.8 1026.2 524 1028 523.6 1031.9 521.9 1033 521.3 1037.6 520.3 1038 519 1043 518.3 1043.3 518.2 1048 517 1049 517.1 1053 516.2 1054.7 515.5 1058 515.2 1060.4 515.6 1063 515 1066.1 514.7 1068 515 1071.8 514.7 1073 514.8 1077.5 513.9 1078 513.7 1083 514 1083.2 514 1088 514.9 1093 514.7 1098 515.4 1103 515.8 1108 516 1113 516.2 1118 517.4 1123 517.7 1128 517.1 1133 515.7 1138 515.1 1143 513.9 1148 512.8 1153 512.6 1158 511.9 1163 511.2 1168 510.6 1173 509.5" stroke="#33ff00" stroke-width="2.00"/><path d="M738 542 743 542.2 748 542.5 753 542.7 758 542.9 763 543.1 768 543.2 773 543.3 778 543.5 783 543.6 788 543.7 793 543.8 798 544 803 544.1 808 544.2 813 544.3 818 544.4 823 544.5 828 544.6 833 544.7 838 544.8 843 544.9 848 545 853 545.1 858 545.2 863 545.4 868 545.5 873 545.5 878 545.6 883 545.7 888 545.8 893 545.9 898 546 903 546 908 546.1 913 546.2 918 546.3 923 546.4 928 546.5 933 546.5 938 546.4 942.7 546.3 943 546.3 948 546.2 948.4 546.2 953 546.2 954.1 546.2 958 546.1 959.9 546.1 963 546 965.6 546 968 546 971.3 545.9 973 545.9 977 545.5 978 545.3 982.8 543.9 983 543.9 988 542.5 988.5 542.3 993 540.9 994.2 539.9 998 538 999.9 538.3 1003 537.5 1005.7 537 1008 534.9 1011.4 533.9 1013 533.1 1017.1 530.1 1018 530.1 1022.8 527.6 1023 527.4 1028 524.4 1028.6 524.1 1033 521.8 1034.3 521.3 1038 520.8 1040 519.7 1043 518.6 1045.7 518.3 1048 517.1 1051.5 516.8 1053 516.3 1057.2 515.9 1058 515.9 1062.9 515 1063 515.5 1068 515.4 1068.6 515.4 1073 514.9 1074.4 514.6 1078 514.7 1080.1 514.8 1083 514.9 1085.8 514.4 1088 514.6 1093 515.5 1098 515.4 1103 515.7 1108 516.2 1113 517.3 1118 517 1123 518 1128 517.1 1133 515.9 1138 515 1143 514.4 1148 513.6 1153 512.8 1158 512.2 1163 511.2 1168 510.4 1173 509.3" stroke="#53ff00" stroke-width="2.00"/><path d="M738 542 743 542.2 748 542.5 753 542.7 758 542.9 763 543.1 768 543.2 773 543.3 778 543.5 783 543.6 788 543.7 793 543.8 798 544 803 544.1 808 544.2 813 544.3 818 544.4 823 544.5 828 544.6 833 544.7 838 544.8 843 544.9 848 545 853 545.1 858 545.2 863 545.4 868 545.5 873 545.5 878 545.6 883 545.7 888 545.8 893 545.9 898 546 903 546 908 546.1 913 546.2 918 546.3 923 546.4 928 546.5 933 546.5 938 546.4 943 546.3 944.6 546.3 948 546.2 950.3 546.2 953 546.2 956.1 546.1 958 546.1 961.8 546 963 546 967.6 546 968 546 973 545.9 973.3 545.9 978 545.7 979.1 545.4 983 544.4 984.8 543.9 988 543.3 990.6 542.1 993 541.4 996.4 540.3 998 539.9 1002.1 538.4 1003 538.2 1007.9 536 1008 536.5 1013 534.2 1013.6 534 1018 531.4 1019.4 531.1 1023 529.1 1025.1 527.2 1028 525.5 1030.9 524.9 1033 523.8 1036.6 521.2 1038 521.8 1042.4 519.3 1043 519.7 1048 518.2 1048.2 518.2 1053 517 1053.9 516.8 1058 516.3 1059.7 516 1063 515.6 1065.4 515.4 1068 515.2 1071.2 515.5 1073 515.2 1076.9 515 1078 514.8 1082.7 514.9 1083 514.2 1088 515.2 1088.4 515.2 1093 515.7 1098 515.3 1103 515.7 1108 516.6 1113 516.6 1118 516.9 1123 517.5 1128 516.6 1133 515.9 1138 515.8 1143 514 1148 513.7 1153 513.7 1158 512.1 1163 511.4 1168 510.8 1173 510.2" stroke="#73ff00" stroke-width="2.00"/><path d="M738 542 743 542.2 748 542.5 753 542.7 758 542.9 763 543.1 768 543.2 773 543.3 778 543.5 783 543.6 788 543.7 793 543.8 798 544 803 544.1 808 544.2 813 544.3 818 544.4 823 544.5 828 544.6 833 544.7 838 544.8 843 544.9 848 545 853 545.1 858 545.2 863 545.4 868 545.5 873 545.5 878 545.6 883 545.7 888 545.8 893 545.9 898 546 903 546 908 546.1 913 546.2 918 546.3 923 546.4 928 546.5 933 546.5 938 546.4 943 546.3 946.4 546.3 948 546.2 952.2 546.2 953 546.2 958 546.1 963 546 963.8 546 968 546 969.6 545.9 973 545.9 975.4 545.9 978 545.8 981.1 545.4 983 544.9 986.9 544.1 988 543.8 992.7 542 993 542.2 998 541.4 998.5 541.3 1003 538.9 1004.3 538.7 1008 537.1 1010.1 536.5 1013 535.2 1015.9 533.6 1018 532.7 1021.6 530.9 1023 530.4 1027.4 527.9 1028 526.8 1033 524.5 1033.2 524.4 1038 522.4 1039 522 1043 520.2 1044.8 519.5 1048 519.2 1050.6 518 1053 517.2 1056.4 517.2 1058 516.6 1062.1 516.3 1063 516.4 1067.9 515.5 1068 515.8 1073 515.1 1073.7 515.1 1078 515.2 1079.5 514.8 1083 515 1085.3 515.5 1088 515.4 1093 516.1 1098 515.6 1103 516.6 1108 516.8 1113 516.7 1118 517.2 1123 518 1128 517 1133 515.9 1138 515.6 1143 514.8 1148 514 1153 512.7 1158 512.4 1163 511.6 1168 510.4 1173 510" stroke="#93ff00" stroke-width="2.00"/><path d="M738 542 743 542.2 748 542.5 753 542.7 758 542.9 763 543.1 768 543.2 773 543.3 778 543.5 783 543.6 788 543.7 793 543.8 798 544 803 544.1 808 544.2 813 544.3 818 544.4 823 544.5 828 544.6 833 544.7 838 544.8 843 544.9 848 545 853 545.1 858 545.2 863 545.4 868 545.5 873 545.5 878 545.6 883 545.7 888 545.8 893 545.9 898 546 903 546 908 546.1 913 546.2 918 546.3 923 546.4 928 546.5 933 546.5 938 546.4 943 546.3 948 546.2 948.3 546.2 953 546.2 954.1 546.2 958 546.1 959.9 546.1 963 546 965.8 546 968 546 971.6 545.9 973 545.9 977.4 545.8 978 545.8 983 545.4 983.2 545.4 988 544.2 989 544.1 993 542.8 994.8 542.7 998 541.6 1000.6 540.6 1003 539.6 1006.5 538.5 1008 537.4 1012.3 536.1 1013 535.4 1018 533.8 1018.1 533.8 1023 531.7 1023.9 531.1 1028 528.4 1029.7 527.4 1033 525.5 1035.5 524.8 1038 523.5 1041.4 522.1 1043 521 1047.2 519.7 1048 519.3 1053 518.2 1058 516.9 1058.8 516.8 1063 516.2 1064.6 516.1 1068 515.8 1070.4 515.7 1073 516.4 1076.2 515.2 1078 515.4 1082.1 514.9 1083 514.8 1087.9 515.2 1088 515.2 1093 515.8 1093.7 515.9 1098 515.8 1103 516.2 1108 517 1113 517.4 1118 518 1123 517.6 1128 517.4 1133 516.6 1138 515 1143 514.8 1148 513.3 1153 512.8 1158 512.1 1163 511.8 1168 510.8 1173 510.1" stroke="#b3ff00" stroke-width="2.00"/><path d="M738 542 743 542.2 748 542.5 753 542.7 758 542.9 763 543.1 768 543.2 773 543.3 778 543.5 783 543.6 788 543.7 793 543.8 798 544 803 544.1 808 544.2 813 544.3 818 544.4 823 544.5 828 544.6 833 544.7 838 544.8 843 544.9 848 545 853 545.1 858 545.2 863 545.4 868 545.5 873 545.5 878 545.6 883 545.7 888 545.8 893 545.9 898 546 903 546 908 546.1 913 546.2 918 546.3 923 546.4 928 546.5 933 546.5 938 546.4 943 546.3 948 546.2 950.2 546.2 953 546.2 956 546.1 958 546.1 961.9 546 963 546 967.7 546 968 546 973 545.9 973.6 545.9 978 545.8 979.4 545.8 983 545.7 985.3 545.3 988 544.6 991.1 544 993 543.5 996.9 542.5 998 541.6 1002.8 540.4 1003 539.9 1008 538.8 1008.6 538.6 1013 536.9 1014.5 535.5 1018 535.2 1020.3 534.1 1023 532.9 1026.2 530.8 1028 530.3 1032 527.2 1033 527 1037.9 524.6 1038 524.6 1043 522.2 1043.7 521.9 1048 520.9 1049.6 520.2 1053 518.9 1055.4 517.9 1058 518.1 1061.2 517.2 1063 517 1067.1 516.5 1068 516.4 1072.9 515.5 1073 516.1 1078 515.1 1078.8 515 1083 515.6 1084.6 515.7 1088 515.7 1090.5 515.6 1093 515.8 1096.3 516 1098 516 1103 516.6 1108 516.7 1113 517.2 1118 517.5 1123 518.4 1128 517.7 1133 516.6 1138 515.7 1143 514.4 1148 513.8 1153 513.5 1158 512.4 1163 511.7 1168 511.3 1173 510.3" stroke="#d2ff00" stroke-width="2.00"/><path d="M738 542 743 542.2 748 542.5 753 542.7 758 542.9 763 543.1 768 543.2 773 543.3 778 543.5 783 543.6 788 543.7 793 543.8 798 544 803 544.1 808 544.2 813 544.3 818 544.4 823 544.5 828 544.6 833 544.7 838 544.8 843 544.9 848 545 853 545.1 858 545.2 863 545.4 868 545.5 873 545.5 878 545.6 883 545.7 888 545.8 893 545.9 898 546 903 546 908 546.1 913 546.2 918 546.3 923 546.4 928 546.5 933 546.5 938 546.4 943 546.3 948 546.2 952.1 546.2 953 546.2 957.9 546.1 958 546.1 963 546 963.8 546 968 546 969.7 545.9 973 545.9 975.6 545.8 978 545.8 981.4 545.8 983 545.7 987.3 545.3 988 545.2 993 543.9 993.2 543.9 998 542.5 999.1 542.2 1003 541.2 1004.9 540.2 1008 539.4 1010.8 538.7 1013 538.3 1016.7 536.6 1018 535.6 1022.6 533.8 1023 533.7 1028 531.2 1028.4 531 1033 528.2 1034.3 528 1038 525.6 1040.2 524.2 1043 523.6 1046.1 521.9 1048 521.4 1051.9 520.3 1053 519.6 1057.8 517.9 1058 518.6 1063 518 1063.7 517.8 1068 516.6 1069.6 516.8 1073 516 1075.4 515.7 1078 515.9 1081.3 515.9 1083 515.6 1087.2 515.8 1088 515.6 1093 516 1093.1 516.1 1098 516.5 1103 517.3 1108 517.1 1113 517.2 1118 518.1 1123 518.1 1128 517.7 1133 516.9 1138 516 1143 514.7 1148 513.6 1153 513.1 1158 512.5 1163 511.9 1168 511.2 1173 510.1" stroke="#f2ff00" stroke-width="2.00"/><path d="M738 542 743 542.2 748 542.5 753 542.7 758 542.9 763 543.1 768 543.2 773 543.3 778 543.5 783 543.6 788 543.7 793 543.8 798 544 803 544.1 808 544.2 813 544.3 818 544.4 823 544.5 828 544.6 833 544.7 838 544.8 843 544.9 848 545 853 545.1 858 545.2 863 545.4 868 545.5 873 545.5 878 545.6 883 545.7 888 545.8 893 545.9 898 546 903 546 908 546.1 913 546.2 918 546.3 923 546.4 928 546.5 933 546.5 938 546.4 943 546.3 948 546.2 953 546.2 953.9 546.2 958 546.1 959.8 546.1 963 546 965.7 546 968 546 971.6 545.9 973 545.9 977.6 545.8 978 545.8 983 545.7 983.5 545.7 988 545.6 989.4 545.3 993 544.5 995.3 543.9 998 543.3 1001.2 542.4 1003 541.7 1007.1 540.3 1008 540.4 1013 538.5 1018 536.9 1018.9 536.6 1023 534.5 1024.8 534 1028 532.6 1030.7 530.9 1033 529.9 1036.6 527.8 1038 527 1042.5 524.5 1043 524.6 1048 522.5 1048.4 522.4 1053 520.1 1054.3 520 1058 518.7 1060.2 518 1063 517.8 1066.1 517.4 1068 517.1 1072 516.7 1073 516.2 1077.9 515.8 1078 516.1 1083 515.5 1083.9 515.6 1088 515.9 1089.8 516.8 1093 516.4 1095.7 516.4 1098 516.3 1101.6 516.2 1103 516.4 1108 517.7 1113 518 1118 518 1123 518.4 1128 517.9 1133 516.9 1138 515.8 1143 515 1148 513.7 1153 513.4 1158 512.6 1163 511.9 1168 510.9 1173 510.7" stroke="#ffec00" stroke-width="2.00"/><path d="M738 542 743 542.2 748 542.5 753 542.7 758 542.9 763 543.1 768 543.2 773 543.3 778 543.5 783 543.6 788 543.7 793 543.8 798 544 803 544.1 808 544.2 813 544.3 818 544.4 823 544.5 828 544.6 833 544.7 838 544.8 843 544.9 848 545 853 545.1 858 545.2 863 545.4 868 545.5 873 545.5 878 545.6 883 545.7 888 545.8 893 545.9 898 546 903 546 908 546.1 913 546.2 918 546.3 923 546.4 928 546.5 933 546.5 938 546.4 943 546.3 948 546.2 953 546.2 955.8 546.1 958 546.1 961.7 546 963 546 967.7 546 968 546 973 545.9 973.6 545.9 978 545.8 979.5 545.8 983 545.7 985.5 545.7 988 545.7 991.4 545.3 993 544.9 997.4 544 998 543.7 1003 542.4 1003.3 542.4 1008 540.6 1009.2 540.5 1013 539.2 1015.2 538.5 1018 537.8 1021.1 536.5 1023 535.7 1027 533.7 1028 534.3 1033 531.3 1038 527.7 1038.9 527.2 1043 526.2 1044.8 525.1 1048 523.4 1050.8 522.4 1053 521.4 1056.7 520.7 1058 519.4 1062.6 518.1 1063 519.2 1068 517.6 1068.6 517.5 1073 516.8 1074.5 517.3 1078 516.1 1080.5 516.6 1083 515.4 1086.4 516 1088 516 1092.3 516.5 1093 516.3 1098 517.5 1098.3 517.5 1103 517.3 1108 517.2 1113 517.5 1118 518.1 1123 518.4 1128 518.2 1133 516.9 1138 516.3 1143 515 1148 514.2 1153 513.7 1158 513.4 1163 511.8 1168 510.7 1173 511.1" stroke="#ffcc00" stroke-width="2.00"/><path d="M738 542 743 542.2 748 542.5 753 542.7 758 542.9 763 543.1 768 543.2 773 543.3 778 543.5 783 543.6 788 543.7 793 543.8 798 544 803 544.1 808 544.2 813 544.3 818 544.4 823 544.5 828 544.6 833 544.7 838 544.8 843 544.9 848 545 853 545.1 858 545.2 863 545.4 868 545.5 873 545.5 878 545.6 883 545.7 888 545.8 893 545.9 898 546 903 546 908 546.1 913 546.2 918 546.3 923 546.4 928 546.5 933 546.5 938 546.4 943 546.3 948 546.2 953 546.2 957.7 546.1 958 546.1 963 546 963.6 546 968 546 969.6 545.9 973 545.9 975.6 545.8 978 545.8 981.5 545.8 983 545.7 987.5 545.7 988 545.7 993 545.3 993.5 545.2 998 544.3 999.4 543.9 1003 542.9 1005.4 542.6 1008 542.1 1011.4 540.8 1013 539.8 1017.3 538.3 1018 538.1 1023 536.8 1023.3 536.7 1028 534.7 1029.3 534.7 1033 532.8 1035.2 531.3 1038 530.1 1041.2 527.7 1043 527.1 1047.2 524.5 1048 524.2 1053 522.7 1053.1 522.7 1058 521.1 1059.1 520.6 1063 519.3 1065.1 518 1068 518.1 1071 517.8 1073 517.3 1077 517 1078 516.8 1083 516.7 1088 516.5 1088.9 516.5 1093 517.5 1094.9 517.2 1098 517.3 1100.9 517.2 1103 517.6 1106.8 517.4 1108 517.8 1113 517.8 1118 518.1 1123 518.4 1128 517.6 1133 517.1 1138 515.9 1143 515.3 1148 514.6 1153 513.9 1158 513.5 1163 512.5 1168 510.7 1173 510.7" stroke="#ffac00" stroke-width="2.00"/><path d="M738 542 743 542.2 748 542.5 753 542.7 758 542.9 763 543.1 768 543.2 773 543.3 778 543.5 783 543.6 788 543.7 793 543.8 798 544 803 544.1 808 544.2 813 544.3 818 544.4 823 544.5 828 544.6 833 544.7 838 544.8 843 544.9 848 545 853 545.1 858 545.2 863 545.4 868 545.5 873 545.5 878 545.6 883 545.7 888 545.8 893 545.9 898 546 903 546 908 546.1 913 546.2 918 546.3 923 546.4 928 546.5 933 546.5 938 546.4 943 546.3 948 546.2 953 546.2 958 546.1 959.6 546.1 963 546 965.6 546 968 546 971.6 545.9 973 545.9 977.5 545.8 978 545.8 983 545.7 983.5 545.7 988 545.7 989.5 545.6 993 545.6 995.5 545.2 998 544.6 1001.5 544 1003 543.7 1007.5 542.2 1008 542.2 1013 540.9 1013.5 540.8 1018 538.8 1019.5 538.6 1023 537.3 1025.5 536.5 1028 536.2 1031.5 534.4 1033 533.4 1037.5 531.6 1038 531 1043 528.9 1043.5 528.6 1048 525.8 1049.5 525 1053 523 1055.5 522.4 1058 521.4 1061.5 519.9 1063 519.6 1067.5 518.7 1068 519.1 1073 517.4 1073.5 517.3 1078 517.5 1079.5 517.6 1083 516.3 1085.5 517 1088 516.7 1091.5 516.7 1093 517.3 1097.4 517.1 1098 517.2 1103 517.6 1103.4 517.6 1108 517.9 1109.4 518 1113 518.3 1118 518.5 1123 518.6 1128 518.2 1133 516.9 1138 516.7 1143 515.9 1148 514.7 1153 513.6 1158 513 1163 512.1 1168 511.6 1173 510.6" stroke="#ff8c00" stroke-width="2.00"/><path d="M738 542 743 542.2 748 542.5 753 542.7 758 542.9 763 543.1 768 543.2 773 543.3 778 543.5 783 543.6 788 543.7 793 543.8 798 544 803 544.1 808 544.2 813 544.3 818 544.4 823 544.5 828 544.6 833 544.7 838 544.8 843 544.9 848 545 853 545.1 858 545.2 863 545.4 868 545.5 873 545.5 878 545.6 883 545.7 888 545.8 893 545.9 898 546 903 546 908 546.1 913 546.2 918 546.3 923 546.4 928 546.5 933 546.5 938 546.4 943 546.3 948 546.2 953 546.2 958 546.1 961.4 546.1 963 546 967.5 546 968 546 973 545.9 973.5 545.9 978 545.8 979.5 545.8 983 545.7 985.5 545.7 988 545.7 991.6 545.6 993 545.6 997.6 545.2 998 545.1 1003 544.1 1003.6 544 1008 543 1009.6 542.5 1013 541.5 1015.7 540.5 1018 539.6 1021.7 538.6 1023 538.3 1027.7 536.9 1028 536.6 1033 534.7 1033.7 534.5 1038 532.6 1039.8 531.3 1043 529.3 1045.8 528 1048 528 1051.8 525.3 1053 524.6 1057.8 522.6 1058 522.7 1063 521 1063.9 520.8 1068 519.1 1069.9 519.2 1073 518.7 1075.9 518.1 1078 517.6 1081.9 516.6 1083 517 1088 517.3 1093 517.7 1094 517.9 1098 517.6 1100 517.4 1103 517.1 1106 517.5 1108 518.4 1112.1 518.2 1113 518.6 1118 518.3 1123 518.7 1128 517.8 1133 517.5 1138 516.5 1143 515.9 1148 514.5 1153 514.3 1158 512.8 1163 512.6 1168 511.8 1173 511.2" stroke="#ff6c00" stroke-width="2.00"/><path d="M738 542 743 542.2 748 542.5 753 542.7 758 542.9 763 543.1 768 543.2 773 543.3 778 543.5 783 543.6 788 543.7 793 543.8 798 544 803 544.1 808 544.2 813 544.3 818 544.4 823 544.5 828 544.6 833 544.7 838 544.8 843 544.9 848 545 853 545.1 858 545.2 863 545.4 868 545.5 873 545.5 878 545.6 883 545.7 888 545.8 893 545.9 898 546 903 546 908 546.1 913 546.2 918 546.3 923 546.4 928 546.5 933 546.5 938 546.4 943 546.3 948 546.2 953 546.2 958 546.1 963 546 963.3 546 968 546 969.4 545.9 973 545.9 975.4 545.9 978 545.8 981.5 545.8 983 545.7 987.5 545.7 988 545.7 993 545.6 993.6 545.6 998 545.5 999.6 545.2 1003 544.5 1005.7 544 1008 543.3 1011.8 542.3 1013 542.5 1017.8 540.9 1018 541.1 1023 539.2 1023.9 538.9 1028 537.7 1029.9 536 1033 536 1036 534.1 1038 533.5 1042 531.8 1043 530.6 1048 528.2 1048.1 528.2 1053 525.1 1054.1 525.2 1058 523.3 1060.2 522 1063 521.5 1066.2 520.8 1068 520.1 1072.3 518.6 1073 519.3 1078 518.2 1078.4 518.2 1083 517.9 1084.4 517.5 1088 517.6 1090.5 517.4 1093 517.7 1096.5 517.8 1098 517.7 1102.6 517.7 1103 517.6 1108 518 1108.6 518 1113 518.1 1118 518.7 1123 519 1128 518.1 1133 517.2 1138 515.8 1143 515.9 1148 514.8 1153 514 1158 513.2 1163 512.8 1168 511.1 1173 511.2" stroke="#ff4d00" stroke-width="2.00"/><path d="M738 542 743 542.2 748 542.5 753 542.7 758 542.9 763 543.1 768 543.2 773 543.3 778 543.5 783 543.6 788 543.7 793 543.8 798 544 803 544.1 808 544.2 813 544.3 818 544.4 823 544.5 828 544.6 833 544.7 838 544.8 843 544.9 848 545 853 545.1 858 545.2 863 545.4 868 545.5 873 545.5 878 545.6 883 545.7 888 545.8 893 545.9 898 546 903 546 908 546.1 913 546.2 918 546.3 923 546.4 928 546.5 933 546.5 938 546.4 943 546.3 948 546.2 953 546.2 958 546.1 963 546 965.2 546 968 546 971.3 545.9 973 545.9 977.4 545.8 978 545.8 983 545.7 983.5 545.7 988 545.7 989.5 545.6 993 545.6 995.6 545.6 998 545.5 1001.7 545.2 1003 545 1007.8 544 1008 544.1 1013 542.6 1013.9 542.4 1018 541.7 1020 540.3 1023 540.2 1026 538.7 1028 537.8 1032.1 536.8 1033 537 1038 534.8 1038.2 534.7 1043 532 1044.3 531.4 1048 529.5 1050.4 527.4 1053 526.9 1056.5 525.2 1058 524.4 1062.5 522.5 1063 523 1068 521.1 1068.6 520.9 1073 519 1074.7 519.2 1078 518.7 1080.8 518.6 1083 518.5 1086.9 517.9 1088 518 1093 517.7 1098 518 1099 518.4 1103 517.9 1105.1 517.7 1108 518.4 1111.2 518.4 1113 518.4 1118 518.9 1123 519.7 1128 518.8 1133 517.8 1138 516.8 1143 516.2 1148 515 1153 513.9 1158 513.4 1163 512.9 1168 512.2 1173 511.4" stroke="#ff2d00" stroke-width="2.00"/><path d="M738 542 743 542.2 748 542.5 753 542.7 758 542.9 763 543.1 768 543.2 773 543.3 778 543.5 783 543.6 788 543.7 793 543.8 798 544 803 544.1 808 544.2 813 544.3 818 544.4 823 544.5 828 544.6 833 544.7 838 544.8 843 544.9 848 545 853 545.1 858 545.2 863 545.4 868 545.5 873 545.5 878 545.6 883 545.7 888 545.8 893 545.9 898 546 903 546 908 546.1 913 546.2 918 546.3 923 546.4 928 546.5 933 546.5 938 546.4 943 546.3 948 546.2 953 546.2 958 546.1 963 546 967.1 546 968 546 973 545.9 973.2 545.9 978 545.8 979.3 545.8 983 545.7 985.4 545.7 988 545.7 991.5 545.6 993 545.6 997.7 545.5 998 545.5 1003 545.3 1003.8 545.2 1008 544.4 1009.9 544 1013 543.2 1016 542.6 1018 541.8 1022.1 541.1 1023 540.6 1028 538.9 1028.2 538.8 1033 537.2 1034.3 536.6 1038 535.5 1040.4 533.8 1043 533.2 1046.6 532 1048 531.1 1052.7 528.1 1053 528 1058 525.8 1058.8 525.4 1063 524.1 1064.9 523 1068 521.7 1071 521 1073 520.1 1077.1 519.1 1078 519.6 1083 518.6 1083.2 518.6 1088 518.6 1089.3 518.4 1093 518.2 1095.5 517.8 1098 518.3 1101.6 518.2 1103 518.7 1107.7 518.8 1108 518.7 1113 518.4 1113.8 518.5 1118 519.1 1123 519.1 1128 518.8 1133 517.8 1138 517.2 1143 516 1148 515.4 1153 515 1158 514.3 1163 513 1168 512.4 1173 510.9" stroke="#ff0d00" stroke-width="2.00"/><path d="M738 542 743 542.2 748 542.5 753 542.7 758 542.9 763 543.1 768 543.2 773 543.3 778 543.5 783 543.6 788 543.7 793 543.8 798 544 803 544.1 808 544.2 813 544.3 818 544.4 823 544.5 828 544.6 833 544.7 838 544.8 843 544.9 848 545 853 545.1 858 545.2 863 545.4 868 545.5 873 545.5 878 545.6 883 545.7 888 545.8 893 545.9 898 546 903 546 908 546.1 913 546.2 918 546.3 923 546.4 928 546.5 933 546.5 938 546.4 943 546.3 948 546.2 953 546.2 958 546.1 963 546 968 546 969 545.9 973 545.9 975.1 545.9 978 545.8 981.3 545.8 983 545.7 987.4 545.7 988 545.7 993 545.6 993.5 545.6 998 545.5 999.7 545.5 1003 545.5 1005.8 545.2 1008 544.7 1012 544 1013 543.8 1018 542.4 1018.1 542.4 1023 541.4 1024.3 541 1028 539.3 1030.4 538.6 1033 537.5 1036.5 536.6 1038 535.9 1042.7 534.1 1043 534.9 1048 532.7 1048.8 532.3 1053 529.1 1055 528.5 1058 526.6 1061.1 525.6 1063 524.9 1067.2 523 1068 522.9 1073 521.2 1073.4 521 1078 520.1 1079.5 519.6 1083 519.4 1085.7 518.5 1088 518.9 1091.8 518.8 1093 518.8 1098 518.5 1103 518.5 1104.1 518.4 1108 519.4 1110.2 519 1113 519.3 1116.4 519.6 1118 518.9 1122.5 519 1123 519.8 1128 518.4 1133 518.2 1138 516.9 1143 516.3 1148 515.5 1153 514.9 1158 514 1163 513.3 1168 512.1 1173 511.6" stroke="#ff0013" stroke-width="2.00"/><path d="M738 542 743 542.2 748 542.5 753 542.7 758 542.9 763 543.1 768 543.2 773 543.3 778 543.5 783 543.6 788 543.7 793 543.8 798 544 803 544.1 808 544.2 813 544.3 818 544.4 823 544.5 828 544.6 833 544.7 838 544.8 843 544.9 848 545 853 545.1 858 545.2 863 545.4 868 545.5 873 545.5 878 545.6 883 545.7 888 545.8 893 545.9 898 546 903 546 908 546.1 913 546.2 918 546.3 923 546.4 928 546.5 933 546.5 938 546.4 943 546.3 948 546.2 953 546.2 958 546.1 963 546 968 546 970.9 545.9 973 545.9 977 545.8 978 545.8 983 545.7 983.2 545.7 988 545.7 989.4 545.7 993 545.6 995.5 545.6 998 545.5 1001.7 545.5 1003 545.5 1007.9 545.2 1008 545.2 1013 544.2 1014.1 543.8 1018 543 1020.2 543.1 1023 541.8 1026.4 540.7 1028 540.1 1032.6 538.6 1033 538.7 1038 537.2 1038.7 537 1043 535.3 1044.9 535 1048 533.9 1051.1 531.8 1053 531.1 1057.3 527.8 1058 527.8 1063 525.6 1063.4 525.5 1068 523.7 1069.6 522.8 1073 521.9 1075.8 520.9 1078 520.2 1081.9 519.9 1083 520 1088 519.9 1088.1 519.9 1093 518.5 1094.3 518.7 1098 519.4 1100.5 518.7 1103 518.4 1106.6 518.6 1108 518.5 1112.8 520 1113 519.1 1118 519.8 1119 519.4 1123 519.9 1125.1 520 1128 519.4 1133 518.1 1138 517.1 1143 516.4 1148 515.1 1153 514.5 1158 513.6 1163 513.6 1168 512 1173 511.4" stroke="#ff0033" stroke-width="2.00"/><path d="M738 542 743 542.2 748 542.5 753 542.7 758 542.9 763 543.1 768 543.2 773 543.3 778 543.5 783 543.6 788 543.7 793 543.8 798 544 803 544.1 808 544.2 813 544.3 818 544.4 823 544.5 828 544.6 833 544.7 838 544.8 843 544.9 848 545 853 545.1 858 545.2 863 545.4 868 545.5 873 545.5 878 545.6 883 545.7 888 545.8 893 545.9 898 546 903 546 908 546.1 913 546.2 918 546.3 923 546.4 928 546.5 933 546.5 938 546.4 943 546.3 948 546.2 953 546.2 958 546.1 963 546 968 546 972.7 545.9 973 545.9 978 545.8 978.9 545.8 983 545.7 985.1 545.7 988 545.7 991.3 545.6 993 545.6 997.5 545.5 998 545.5 1003 545.5 1003.7 545.5 1008 545.5 1009.9 545.2 1013 544.6 1016.1 544.1 1018 543.5 1022.3 542.4 1023 542.4 1028 540.9 1028.5 540.7 1033 539.7 1034.7 539.4 1038 538.6 1040.9 537.1 1043 536.1 1047.1 535.4 1048 534 1053 531.8 1053.4 531.6 1058 529.2 1059.6 528.7 1063 527.2 1065.8 526 1068 524.9 1072 523.5 1073 522.5 1078 521.6 1078.2 521.6 1083 519.7 1084.4 519.8 1088 519.8 1090.6 519.5 1093 518.7 1096.8 519 1098 519 1103 519.3 1108 520 1109.2 519.5 1113 519.2 1115.4 519.3 1118 519.2 1121.6 519.8 1123 519.9 1128 519 1133 519 1138 517.7 1143 516.6 1148 515.9 1153 514.5 1158 514 1163 513.6 1168 512.5 1173 512" stroke="#ff0053" stroke-width="2.00"/><path d="M738 542 743 542.2 748 542.5 753 542.7 758 542.9 763 543.1 768 543.2 773 543.3 778 543.5 783 543.6 788 543.7 793 543.8 798 544 803 544.1 808 544.2 813 544.3 818 544.4 823 544.5 828 544.6 833 544.7 838 544.8 843 544.9 848 545 853 545.1 858 545.2 863 545.4 868 545.5 873 545.5 878 545.6 883 545.7 888 545.8 893 545.9 898 546 903 546 908 546.1 913 546.2 918 546.3 923 546.4 928 546.5 933 546.5 938 546.4 943 546.3 948 546.2 953 546.2 958 546.1 963 546 968 546 973 545.9 974.6 545.9 978 545.8 980.9 545.8 983 545.7 987.1 545.7 988 545.7 993 545.6 993.3 545.6 998 545.5 999.5 545.5 1003 545.5 1005.8 545.5 1008 545.5 1012 545.2 1013 545.1 1018 544.1 1018.2 544.1 1023 543 1024.5 542.6 1028 541.8 1030.7 541.3 1033 540.1 1036.9 539.1 1038 538.8 1043 537 1043.2 536.9 1048 535.1 1049.4 535.2 1053 533.4 1055.6 531.9 1058 530.7 1061.8 528.6 1063 528.1 1068 525.8 1068.1 525.8 1073 523.8 1074.3 523.2 1078 521.8 1080.5 521.3 1083 521 1086.8 520.1 1088 519.9 1093 519.8 1098 519.2 1099.2 519.7 1103 519.9 1105.5 519.8 1108 519 1111.7 519.6 1113 519.5 1117.9 520.4 1118 520.3 1123 520.2 1124.1 520.2 1128 519.6 1133 518.7 1138 517.7 1143 516.7 1148 516.4 1153 514.9 1158 514.7 1163 513.2 1168 512.6 1173 512.1" stroke="#ff0073" stroke-width="2.00"/><path d="M738 542 743 542.2 748 542.5 753 542.7 758 542.9 763 543.1 768 543.2 773 543.3 778 543.5 783 543.6 788 543.7 793 543.8 798 544 803 544.1 808 544.2 813 544.3 818 544.4 823 544.5 828 544.6 833 544.7 838 544.8 843 544.9 848 545 853 545.1 858 545.2 863 545.4 868 545.5 873 545.5 878 545.6 883 545.7 888 545.8 893 545.9 898 546 903 546 908 546.1 913 546.2 918 546.3 923 546.4 928 546.5 933 546.5 938 546.4 943 546.3 948 546.2 953 546.2 958 546.1 963 546 968 546 973 545.9 976.5 545.8 978 545.8 982.8 545.7 983 545.7 988 545.7 989 545.7 993 545.6 995.3 545.6 998 545.5 1001.5 545.5 1003 545.5 1007.8 545.5 1008 545.5 1013 545.4 1014.1 545.2 1018 544.5 1020.3 544.1 1023 543.4 1026.6 542.6 1028 542.2 1032.8 541.3 1033 540.7 1038 540 1039.1 539.3 1043 537.6 1045.4 537.1 1048 536.2 1051.6 534.6 1053 534.4 1057.9 532.3 1058 531.8 1063 529.4 1064.1 528.2 1068 527 1070.4 525.7 1073 524.3 1076.7 523.1 1078 522.8 1082.9 520.8 1083 521.5 1088 520.7 1089.2 520.5 1093 520.6 1095.4 519.7 1098 520 1101.7 520.2 1103 520.3 1108 520.4 1113 520.4 1114.2 520.2 1118 520.5 1120.5 520.3 1123 520.8 1126.7 520.2 1128 519.8 1133 519.3 1138 517.6 1143 517 1148 515.8 1153 515 1158 514.4 1163 513.5 1168 512.9 1173 512.2" stroke="#ff0093" stroke-width="2.00"/><path d="M738 542 743 542.2 748 542.5 753 542.7 758 542.9 763 543.1 768 543.2 773 543.3 778 543.5 783 543.6 788 543.7 793 543.8 798 544 803 544.1 808 544.2 813 544.3 818 544.4 823 544.5 828 544.6 833 544.7 838 544.8 843 544.9 848 545 853 545.1 858 545.2 863 545.4 868 545.5 873 545.5 878 545.6 883 545.7 888 545.8 893 545.9 898 546 903 546 908 546.1 913 546.2 918 546.3 923 546.4 928 546.5 933 546.5 938 546.4 943 546.3 948 546.2 953 546.2 958 546.1 963 546 968 546 973 545.9 978 545.8 978.4 545.8 983 545.7 984.7 545.7 988 545.7 991 545.6 993 545.6 997.3 545.5 998 545.5 1003 545.5 1003.5 545.5 1008 545.5 1009.8 545.6 1013 545.6 1016.1 545.3 1018 544.9 1022.4 544 1023 544 1028 542.9 1028.7 542.7 1033 541.1 1035 540.9 1038 539.8 1041.3 539.4 1043 538.5 1047.6 536.9 1048 537.3 1053 534.8 1053.9 534.5 1058 533.3 1060.1 532.3 1063 530.2 1066.4 528.7 1068 528 1072.7 525.7 1073 526 1078 523.6 1079 523.5 1083 522.4 1085.3 521.9 1088 521.3 1091.6 520.7 1093 520.7 1097.9 520.4 1098 520.1 1103 520.3 1104.2 520.4 1108 519.9 1110.5 520.6 1113 520 1116.7 519.8 1118 520.4 1123 520.5 1128 519.6 1129.3 519.5 1133 519.1 1135.6 518.8 1138 518 1143 517.4 1148 515.9 1153 515.5 1158 514.7 1163 513.7 1168 512.6 1173 511.4" stroke="#ff00b3" stroke-width="2.00"/><path d="M738 542 743 542.2 748 542.5 753 542.7 758 542.9 763 543.1 768 543.2 773 543.3 778 543.5 783 543.6 788 543.7 793 543.8 798 544 803 544.1 808 544.2 813 544.3 818 544.4 823 544.5 828 544.6 833 544.7 838 544.8 843 544.9 848 545 853 545.1 858 545.2 863 545.4 868 545.5 873 545.5 878 545.6 883 545.7 888 545.8 893 545.9 898 546 903 546 908 546.1 913 546.2 918 546.3 923 546.4 928 546.5 933 546.5 938 546.4 943 546.3 948 546.2 953 546.2 958 546.1 963 546 968 546 973 545.9 978 545.8 980.3 545.8 983 545.7 986.6 545.7 988 545.7 992.9 545.6 993 545.6 998 545.5 999.2 545.5 1003 545.5 1005.6 545.5 1008 545.5 1011.9 545.6 1013 545.6 1018 545.3 1018.2 545.2 1023 544.3 1024.5 544 1028 543.1 1030.8 542.7 1033 542.2 1037.1 540.8 1038 540.6 1043 539.2 1043.5 539.1 1048 537.9 1049.8 536.6 1053 535.9 1056.1 534.8 1058 534 1062.4 532.5 1063 531.9 1068 529.4 1068.7 529 1073 526.9 1075 526.3 1078 524.3 1081.4 523.4 1083 523.6 1087.7 522.2 1088 521.9 1093 521.8 1094 521.1 1098 521 1100.3 520.3 1103 520.2 1106.6 520.7 1108 520.8 1112.9 520.3 1113 520.5 1118 520.7 1119.3 520.7 1123 521.6 1125.6 520.2 1128 520.2 1131.9 519.3 1133 519.1 1138 518.3 1138.2 518.3 1143 517 1148 516.3 1153 515.6 1158 515 1163 513.8 1168 513 1173 512.6" stroke="#ff00d2" stroke-width="2.00"/><path d="M738 542 743 542.2 748 542.5 753 542.7 758 542.9 763 543.1 768 543.2 773 543.3 778 543.5 783 543.6 788 543.7 793 543.8 798 544 803 544.1 808 544.2 813 544.3 818 544.4 823 544.5 828 544.6 833 544.7 838 544.8 843 544.9 848 545 853 545.1 858 545.2 863 545.4 868 545.5 873 545.5 878 545.6 883 545.7 888 545.8 893 545.9 898 546 903 546 908 546.1 913 546.2 918 546.3 923 546.4 928 546.5 933 546.5 938 546.4 943 546.3 948 546.2 953 546.2 958 546.1 963 546 968 546 973 545.9 978 545.8 982.2 545.8 983 545.7 988 545.7 988.5 545.7 993 545.6 994.9 545.6 998 545.5 1001.2 545.5 1003 545.5 1007.6 545.5 1008 545.5 1013 545.6 1013.9 545.6 1018 545.6 1020.2 545.3 1023 544.9 1026.6 544.1 1028 543.8 1032.9 542.6 1033 542.4 1038 541.5 1039.3 540.9 1043 540.2 1045.6 539.6 1048 538.5 1052 537.5 1053 536.6 1058 534.5 1058.3 534.4 1063 533.4 1064.7 532.4 1068 531 1071 528.7 1073 527.9 1077.4 526.5 1078 525.9 1083 524 1083.7 523.8 1088 522.5 1090.1 522.4 1093 521.9 1096.4 521.9 1098 521 1102.8 520.9 1103 520.8 1108 521.5 1109.1 521.3 1113 520.7 1115.4 520.7 1118 520.1 1121.8 520.8 1123 521.1 1128 520.6 1128.1 520.6 1133 519.2 1134.5 519.3 1138 518.4 1143 517.1 1148 516.6 1153 516.1 1158 515 1163 514.1 1168 513.2 1173 512.6" stroke="#ff00f2" stroke-width="2.00"/><path d="M738 542 743 542.2 748 542.5 753 542.7 758 542.9 763 543.1 768 543.2 773 543.3 778 543.5 783 543.6 788 543.7 793 543.8 798 544 803 544.1 808 544.2 813 544.3 818 544.4 823 544.5 828 544.6 833 544.7 838 544.8 843 544.9 848 545 853 545.1 858 545.2 863 545.4 868 545.5 873 545.5 878 545.6 883 545.7 888 545.8 893 545.9 898 546 903 546 908 546.1 913 546.2 918 546.3 923 546.4 928 546.5 933 546.5 938 546.4 943 546.3 948 546.2 953 546.2 958 546.1 963 546 968 546 973 545.9 978 545.8 983 545.7 984.1 545.7 988 545.7 990.4 545.6 993 545.6 996.8 545.5 998 545.5 1003 545.5 1003.2 545.5 1008 545.5 1009.6 545.6 1013 545.6 1015.9 545.6 1018 545.6 1022.3 545.3 1023 545.2 1028 544.3 1028.7 544.2 1033 543.1 1035.1 542.7 1038 541.5 1041.4 541.1 1043 540.3 1047.8 539.4 1048 539.4 1053 537.5 1054.2 537.7 1058 536.1 1060.6 534.9 1063 534.3 1066.9 532.1 1068 531.4 1073 529.1 1073.3 529 1078 526.7 1079.7 526.3 1083 524.8 1086.1 524 1088 523.5 1092.4 522.6 1093 522.8 1098 521.2 1098.8 521.1 1103 521.8 1105.2 521.3 1108 520.6 1111.6 521 1113 521.3 1117.9 521.1 1118 521.2 1123 521.2 1124.3 521.7 1128 520.9 1130.7 519.6 1133 519.4 1137.1 519.1 1138 517.9 1143 517.3 1143.4 517.2 1148 516.3 1153 515.7 1158 514.8 1163 514.6 1168 513.8 1173 512.7" stroke="#ec00ff" stroke-width="2.00"/><path d="M738 542 743 542.2 748 542.5 753 542.7 758 542.9 763 543.1 768 543.2 773 543.3 778 543.5 783 543.6 788 543.7 793 543.8 798 544 803 544.1 808 544.2 813 544.3 818 544.4 823 544.5 828 544.6 833 544.7 838 544.8 843 544.9 848 545 853 545.1 858 545.2 863 545.4 868 545.5 873 545.5 878 545.6 883 545.7 888 545.8 893 545.9 898 546 903 546 908 546.1 913 546.2 918 546.3 923 546.4 928 546.5 933 546.5 938 546.4 943 546.3 948 546.2 953 546.2 958 546.1 963 546 968 546 973 545.9 978 545.8 983 545.7 985.9 545.7 988 545.7 992.4 545.6 993 545.6 998 545.5 998.8 545.5 1003 545.5 1005.2 545.5 1008 545.5 1011.6 545.6 1013 545.6 1018 545.6 1023 545.5 1024.4 545.3 1028 544.8 1030.8 544.2 1033 543.9 1037.2 542.8 1038 542.7 1043 541.1 1043.6 540.9 1048 539.4 1050 539 1053 538.3 1056.4 537 1058 536.7 1062.8 534.7 1063 534.9 1068 532.2 1069.2 532.6 1073 530.7 1075.6 529.2 1078 527.9 1082 526.7 1083 525.8 1088 524.8 1088.4 524.7 1093 523 1094.8 522.6 1098 522.8 1101.2 521.4 1103 522.7 1107.6 521.7 1108 521.4 1113 522 1114 521.4 1118 521.7 1120.4 521.3 1123 521.3 1126.8 520.7 1128 520.7 1133 519.4 1133.2 519.4 1138 519.2 1139.6 518.3 1143 517.3 1146.1 516.6 1148 516.7 1153 516.1 1158 515.5 1163 514.3 1168 513.2 1173 512.6" stroke="#cc00ff" stroke-width="2.00"/><path d="M738 542 743 542.2 748 542.5 753 542.7 758 542.9 763 543.1 768 543.2 773 543.3 778 543.5 783 543.6 788 543.7 793 543.8 798 544 803 544.1 808 544.2 813 544.3 818 544.4 823 544.5 828 544.6 833 544.7 838 544.8 843 544.9 848 545 853 545.1 858 545.2 863 545.4 868 545.5 873 545.5 878 545.6 883 545.7 888 545.8 893 545.9 898 546 903 546 908 546.1 913 546.2 918 546.3 923 546.4 928 546.5 933 546.5 938 546.4 943 546.3 948 546.2 953 546.2 958 546.1 963 546 968 546 973 545.9 978 545.8 983 545.7 987.8 545.7 988 545.7 993 545.6 994.3 545.6 998 545.5 1000.7 545.5 1003 545.5 1007.1 545.5 1008 545.5 1013 545.6 1013.6 545.6 1018 545.6 1020 545.6 1023 545.6 1026.4 545.4 1028 545 1032.9 544.3 1033 544.2 1038 542.8 1039.3 542.5 1043 541.3 1045.7 541.3 1048 540.3 1052.2 539.3 1053 539.3 1058 537.2 1058.6 537 1063 535.6 1065 535.3 1068 534.1 1071.5 532.3 1073 530.9 1077.9 528.9 1078 528.5 1083 526.7 1084.3 527.1 1088 525.7 1090.8 525.2 1093 524.4 1097.2 523.7 1098 523.3 1103 522.3 1103.6 522.2 1108 522 1110.1 521.9 1113 522 1116.5 521.7 1118 521.5 1122.9 521.9 1123 521.4 1128 521.5 1129.4 520.9 1133 519.3 1135.8 519.5 1138 519.5 1142.2 518.3 1143 517.8 1148 517.2 1148.7 517 1153 516 1158 515.3 1163 514.8 1168 513.8 1173 512.5" stroke="#ac00ff" stroke-width="2.00"/><path d="M738 542 743 542.2 748 542.5 753 542.7 758 542.9 763 543.1 768 543.2 773 543.3 778 543.5 783 543.6 788 543.7 793 543.8 798 544 803 544.1 808 544.2 813 544.3 818 544.4 823 544.5 828 544.6 833 544.7 838 544.8 843 544.9 848 545 853 545.1 858 545.2 863 545.4 868 545.5 873 545.5 878 545.6 883 545.7 888 545.8 893 545.9 898 546 903 546 908 546.1 913 546.2 918 546.3 923 546.4 928 546.5 933 546.5 938 546.4 943 546.3 948 546.2 953 546.2 958 546.1 963 546 968 546 973 545.9 978 545.8 983 545.7 988 545.7 989.7 545.6 993 545.6 996.2 545.6 998 545.5 1002.7 545.5 1003 545.5 1008 545.5 1009.1 545.6 1013 545.6 1015.6 545.6 1018 545.6 1022 545.6 1023 545.6 1028 545.4 1028.5 545.3 1033 544.7 1035 544.1 1038 543.6 1041.4 543 1043 542 1047.9 541 1048 541.3 1053 539.4 1054.3 539 1058 538.4 1060.8 536.7 1063 536.2 1067.3 535.4 1068 535.3 1073 532.7 1073.7 532.3 1078 530 1080.2 529.1 1083 528.3 1086.7 527.3 1088 526.6 1093 524.6 1093.1 524.6 1098 523.9 1099.6 524.1 1103 523.4 1106 522.6 1108 522.8 1112.5 522.9 1113 522.3 1118 522 1119 521.7 1123 522.5 1125.4 521.3 1128 521.1 1131.9 520.5 1133 520.3 1138 518.8 1138.3 518.7 1143 518.1 1144.8 517.8 1148 516.8 1151.3 517 1153 516.6 1158 515.6 1163 514.6 1168 514.1 1173 513.2" stroke="#8c00ff" stroke-width="2.00"/><path d="M738 542 743 542.2 748 542.5 753 542.7 758 542.9 763 543.1 768 543.2 773 543.3 778 543.5 783 543.6 788 543.7 793 543.8 798 544 803 544.1 808 544.2 813 544.3 818 544.4 823 544.5 828 544.6 833 544.7 838 544.8 843 544.9 848 545 853 545.1 858 545.2 863 545.4 868 545.5 873 545.5 878 545.6 883 545.7 888 545.8 893 545.9 898 546 903 546 908 546.1 913 546.2 918 546.3 923 546.4 928 546.5 933 546.5 938 546.4 943 546.3 948 546.2 953 546.2 958 546.1 963 546 968 546 973 545.9 978 545.8 983 545.7 988 545.7 991.6 545.6 993 545.6 998 545.5 998.1 545.5 1003 545.5 1004.6 545.5 1008 545.5 1011.1 545.6 1013 545.6 1017.6 545.6 1018 545.6 1023 545.6 1024.1 545.7 1028 545.7 1030.6 545.4 1033 544.9 1037.1 544.1 1038 543.9 1043 542.8 1043.5 542.7 1048 541.2 1050 541.7 1053 540.1 1056.5 539.5 1058 538.8 1063 537.3 1068 536 1069.5 535.5 1073 534 1076 532.9 1078 531.6 1082.5 529.7 1083 529.3 1088 527.8 1089 527.4 1093 525.5 1095.5 525.1 1098 524.4 1102 523.6 1103 523.6 1108 523.3 1108.4 523.2 1113 522.5 1114.9 522.5 1118 522.7 1121.4 522.6 1123 522.5 1127.9 521.5 1128 521.7 1133 520.3 1134.4 520.2 1138 519.1 1140.9 519.2 1143 518.1 1147.4 518 1148 518.1 1153 516.6 1158 515.4 1163 514.7 1168 514.2 1173 513.3" stroke="#6c00ff" stroke-width="2.00"/><path d="M738 542 743 542.2 748 542.5 753 542.7 758 542.9 763 543.1 768 543.2 773 543.3 778 543.5 783 543.6 788 543.7 793 543.8 798 544 803 544.1 808 544.2 813 544.3 818 544.4 823 544.5 828 544.6 833 544.7 838 544.8 843 544.9 848 545 853 545.1 858 545.2 863 545.4 868 545.5 873 545.5 878 545.6 883 545.7 888 545.8 893 545.9 898 546 903 546 908 546.1 913 546.2 918 546.3 923 546.4 928 546.5 933 546.5 938 546.4 943 546.3 948 546.2 953 546.2 958 546.1 963 546 968 546 973 545.9 978 545.8 983 545.7 988 545.7 993 545.6 993.5 545.6 998 545.5 1000 545.5 1003 545.5 1006.6 545.5 1008 545.5 1013 545.6 1013.1 545.6 1018 545.6 1019.6 545.6 1023 545.6 1026.1 545.7 1028 545.7 1032.6 545.4 1033 545.3 1038 544.3 1039.1 544.1 1043 543.6 1045.7 542.8 1048 541.9 1052.2 541.1 1053 541 1058 539.6 1058.7 539.4 1063 538.5 1065.2 537 1068 536.5 1071.7 535.6 1073 535.4 1078 532.2 1078.3 532 1083 529.9 1084.8 530.3 1088 528.2 1091.3 527.2 1093 526.6 1097.8 525.3 1098 525.1 1103 524.6 1104.3 524.1 1108 523.6 1110.9 522.8 1113 523.7 1117.4 523.6 1118 523.5 1123 522.7 1123.9 522.7 1128 521.8 1130.4 521.1 1133 520.8 1136.9 519.4 1138 519.3 1143 518.7 1143.4 518.6 1148 517.8 1150 517.2 1153 516.9 1158 516 1163 515.2 1168 513.9 1173 513" stroke="#4c00ff" stroke-width="2.00"/><path d="M738 542 743 542.2 748 542.5 753 542.7 758 542.9 763 543.1 768 543.2 773 543.3 778 543.5 783 543.6 788 543.7 793 543.8 798 544 803 544.1 808 544.2 813 544.3 818 544.4 823 544.5 828 544.6 833 544.7 838 544.8 843 544.9 848 545 853 545.1 858 545.2 863 545.4 868 545.5 873 545.5 878 545.6 883 545.7 888 545.8 893 545.9 898 546 903 546 908 546.1 913 546.2 918 546.3 923 546.4 928 546.5 933 546.5 938 546.4 943 546.3 948 546.2 953 546.2 958 546.1 963 546 968 546 973 545.9 978 545.8 983 545.7 988 545.7 993 545.6 995.4 545.6 998 545.5 1002 545.5 1003 545.5 1008 545.5 1008.5 545.6 1013 545.6 1015.1 545.6 1018 545.6 1021.6 545.6 1023 545.6 1028 545.7 1028.1 545.7 1033 545.7 1034.7 545.4 1038 544.8 1041.2 544.4 1043 543.7 1047.8 542.9 1048 542.9 1053 541.8 1054.3 541.2 1058 539.7 1060.9 539.8 1063 538.9 1067.4 537.7 1068 537.8 1073 535.6 1074 535.6 1078 533.9 1080.5 532.8 1083 532.3 1087.1 530.1 1088 528.9 1093 527.3 1093.6 527.1 1098 526 1100.2 525.5 1103 524.8 1106.7 525.1 1108 524.5 1113 523.5 1113.3 523.5 1118 523.4 1119.8 523.7 1123 522.7 1126.4 522.2 1128 522.1 1132.9 520.9 1133 521 1138 520.3 1139.4 520.1 1143 518.6 1146 518.5 1148 518.4 1152.5 517.6 1153 516.6 1158 515.8 1163 515.6 1168 514.1 1173 513.7" stroke="#2d00ff" stroke-width="2.00"/><path d="M738 542 743 542.2 748 542.5 753 542.7 758 542.9 763 543.1 768 543.2 773 543.3 778 543.5 783 543.6 788 543.7 793 543.8 798 544 803 544.1 808 544.2 813 544.3 818 544.4 823 544.5 828 544.6 833 544.7 838 544.8 843 544.9 848 545 853 545.1 858 545.2 863 545.4 868 545.5 873 545.5 878 545.6 883 545.7 888 545.8 893 545.9 898 546 903 546 908 546.1 913 546.2 918 546.3 923 546.4 928 546.5 933 546.5 938 546.4 943 546.3 948 546.2 953 546.2 958 546.1 963 546 968 546 973 545.9 978 545.8 983 545.7 988 545.7 993 545.6 997.3 545.5 998 545.5 1003 545.5 1003.9 545.5 1008 545.5 1010.5 545.6 1013 545.6 1017 545.6 1018 545.6 1023 545.6 1023.6 545.6 1028 545.7 1030.2 545.7 1033 545.7 1036.8 545.4 1038 545.2 1043 544.2 1043.3 544.2 1048 543.4 1049.9 543.3 1053 542.2 1056.5 541.3 1058 541.1 1063 539.7 1063.1 539.6 1068 538.1 1069.6 537.4 1073 536.3 1076.2 535.4 1078 535.1 1082.8 533 1083 532.6 1088 530.4 1089.4 530.3 1093 528.9 1095.9 528.2 1098 527.3 1102.5 525.4 1103 525.8 1108 524.9 1109.1 524.8 1113 524 1115.7 524 1118 523.9 1122.2 523.6 1123 523.4 1128 522.1 1128.8 521.9 1133 521.4 1135.4 520.7 1138 519.5 1142 519.8 1143 518.9 1148 517.7 1148.5 517.6 1153 517.2 1155.1 517 1158 516.1 1161.7 515.7 1163 515.3 1168 514.4 1173 514" stroke="#0d00ff" stroke-width="2.00"/><path d="M738 542 743 542.2 748 542.5 753 542.7 758 542.9 763 543.1 768 543.2 773 543.3 778 543.5 783 543.6 788 543.7 793 543.8 798 544 803 544.1 808 544.2 813 544.3 818 544.4 823 544.5 828 544.6 833 544.7 838 544.8 843 544.9 848 545 853 545.1 858 545.2 863 545.4 868 545.5 873 545.5 878 545.6 883 545.7 888 545.8 893 545.9 898 546 903 546 908 546.1 913 546.2 918 546.3 923 546.4 928 546.5 933 546.5 938 546.4 943 546.3 948 546.2 953 546.2 958 546.1 963 546 968 546 973 545.9 978 545.8 983 545.7 988 545.7 993 545.6 998 545.5 999.2 545.5 1003 545.5 1005.8 545.5 1008 545.5 1012.4 545.6 1013 545.6 1018 545.6 1019 545.6 1023 545.6 1025.6 545.7 1028 545.7 1032.2 545.7 1033 545.7 1038 545.6 1038.8 545.4 1043 544.7 1045.4 544.2 1048 543.7 1052 543 1053 542.6 1058 541.6 1058.6 541.4 1063 540.1 1065.2 539.8 1068 539.2 1071.8 537.9 1073 536.9 1078 535.2 1078.4 535 1083 533.6 1085.1 532.6 1088 532 1091.7 530.2 1093 530.1 1098 528.4 1098.3 528.3 1103 526.8 1104.9 526.2 1108 525.9 1111.5 525.5 1113 525 1118 524.3 1118.1 524.2 1123 524.1 1124.7 523.8 1128 523.5 1131.3 522.1 1133 521.5 1137.9 520.5 1138 520.5 1143 518.8 1144.5 519.2 1148 517.7 1151.1 517.7 1153 517.8 1157.7 516.5 1158 515.7 1163 514.9 1168 515.4 1173 514.1" stroke="#0013ff" stroke-width="2.00"/><path d="M738 542 743 542.2 748 542.5 753 542.7 758 542.9 763 543.1 768 543.2 773 543.3 778 543.5 783 543.6 788 543.7 793 543.8 798 544 803 544.1 808 544.2 813 544.3 818 544.4 823 544.5 828 544.6 833 544.7 838 544.8 843 544.9 848 545 853 545.1 858 545.2 863 545.4 868 545.5 873 545.5 878 545.6 883 545.7 888 545.8 893 545.9 898 546 903 546 908 546.1 913 546.2 918 546.3 923 546.4 928 546.5 933 546.5 938 546.4 943 546.3 948 546.2 953 546.2 958 546.1 963 546 968 546 973 545.9 978 545.8 983 545.7 988 545.7 993 545.6 998 545.5 1001.1 545.5 1003 545.5 1007.7 545.5 1008 545.5 1013 545.6 1014.4 545.6 1018 545.6 1021 545.6 1023 545.6 1027.6 545.7 1028 545.7 1033 545.7 1034.3 545.7 1038 545.7 1040.9 545.4 1043 545.1 1047.5 544.4 1048 544.3 1053 542.9 1054.2 543 1058 542.3 1060.8 540.9 1063 540.8 1067.4 539.1 1068 539.3 1073 537.9 1074.1 538.1 1078 536 1080.7 535.7 1083 535.1 1087.3 533.2 1088 532.5 1093 530.6 1093.9 530.2 1098 529 1100.6 528.6 1103 527.4 1107.2 526.7 1108 526.5 1113 525.5 1113.8 525.4 1118 525 1120.5 524.4 1123 524.1 1127.1 523.5 1128 523.2 1133 521.9 1133.7 521.7 1138 521 1140.4 520.2 1143 520 1147 518.6 1148 518.7 1153 517.5 1153.6 517.4 1158 517.3 1160.3 516.6 1163 516 1166.9 514.9 1168 514.9 1173 514.4" stroke="#0033ff" stroke-width="2.00"/><path d="M738 542 743 542.2 748 542.5 753 542.7 758 542.9 763 543.1 768 543.2 773 543.3 778 543.5 783 543.6 788 543.7 793 543.8 798 544 803 544.1 808 544.2 813 544.3 818 544.4 823 544.5 828 544.6 833 544.7 838 544.8 843 544.9 848 545 853 545.1 858 545.2 863 545.4 868 545.5 873 545.5 878 545.6 883 545.7 888 545.8 893 545.9 898 546 903 546 908 546.1 913 546.2 918 546.3 923 546.4 928 546.5 933 546.5 938 546.4 943 546.3 948 546.2 953 546.2 958 546.1 963 546 968 546 973 545.9 978 545.8 983 545.7 988 545.7 993 545.6 998 545.5 1003 545.5 1008 545.5 1009.7 545.6 1013 545.6 1016.3 545.6 1018 545.6 1023 545.6 1028 545.7 1029.6 545.7 1033 545.7 1036.3 545.7 1038 545.7 1043 545.5 1048 544.7 1049.6 544.4 1053 543.8 1056.3 543.4 1058 542.6 1062.9 540.8 1063 542 1068 540.5 1069.6 540.1 1073 538.6 1076.3 537.6 1078 536.9 1082.9 535.1 1083 536.2 1088 533.9 1089.6 532.6 1093 532.3 1096.2 530.7 1098 530.2 1102.9 528.5 1103 528.6 1108 527.2 1109.6 526.7 1113 526.1 1116.2 525.7 1118 525.9 1122.9 524.9 1123 525 1128 523.9 1129.5 523.4 1133 522.5 1136.2 521.8 1138 521.1 1142.9 519.5 1143 520.5 1148 519.3 1149.5 518.3 1153 518 1156.2 517.5 1158 516.2 1162.8 516.2 1163 515.6 1168 515.3 1173 514.2" stroke="#0053ff" stroke-width="2.00"/><path d="M738 542 743 542.2 748 542.5 753 542.7 758 542.9 763 543.1 768 543.2 773 543.3 778 543.5 783 543.6 788 543.7 793 543.8 798 544 803 544.1 808 544.2 813 544.3 818 544.4 823 544.5 828 544.6 833 544.7 838 544.8 843 544.9 848 545 853 545.1 858 545.2 863 545.4 868 545.5 873 545.5 878 545.6 883 545.7 888 545.8 893 545.9 898 546 903 546 908 546.1 913 546.2 918 546.3 923 546.4 928 546.5 933 546.5 938 546.4 943 546.3 948 546.2 953 546.2 958 546.1 963 546 968 546 973 545.9 978 545.8 983 545.7 988 545.7 993 545.6 998 545.5 1003 545.5 1004.9 545.5 1008 545.5 1011.6 545.6 1013 545.6 1018 545.6 1018.3 545.6 1023 545.6 1025 545.7 1028 545.7 1031.6 545.7 1033 545.7 1038 545.7 1038.3 545.7 1043 545.8 1045 545.4 1048 545 1051.7 544.2 1053 544.1 1058 543.2 1058.4 543.1 1063 541.9 1065.1 541.6 1068 540.9 1071.8 540 1073 539.5 1078 537.4 1078.5 537.2 1083 536.3 1085.2 535.9 1088 535.7 1091.8 533.4 1093 532.8 1098 531.3 1098.5 531.1 1103 529.1 1105.2 528.5 1108 527.8 1111.9 527.8 1113 526.8 1118 526.3 1118.6 526.2 1123 525.2 1125.3 524.8 1128 524 1132 522.9 1133 522.8 1138 521.4 1138.7 521.3 1143 520.3 1145.4 520.2 1148 519.5 1152 517.7 1153 518 1158 517 1158.7 516.9 1163 516 1165.4 515.5 1168 515.1 1173 514.5" stroke="#0073ff" stroke-width="2.00"/><path d="M738 542 743 542.2 748 542.5 753 542.7 758 542.9 763 543.1 768 543.2 773 543.3 778 543.5 783 543.6 788 543.7 793 543.8 798 544 803 544.1 808 544.2 813 544.3 818 544.4 823 544.5 828 544.6 833 544.7 838 544.8 843 544.9 848 545 853 545.1 858 545.2 863 545.4 868 545.5 873 545.5 878 545.6 883 545.7 888 545.8 893 545.9 898 546 903 546 908 546.1 913 546.2 918 546.3 923 546.4 928 546.5 933 546.5 938 546.4 943 546.3 948 546.2 953 546.2 958 546.1 963 546 968 546 973 545.9 978 545.8 983 545.7 988 545.7 993 545.6 998 545.5 1003 545.5 1006.8 545.5 1008 545.5 1013 545.6 1013.5 545.6 1018 545.6 1020.2 545.6 1023 545.6 1026.9 545.7 1028 545.7 1033 545.7 1033.7 545.7 1038 545.7 1040.4 545.8 1043 545.8 1047.1 545.5 1048 545.3 1053 544.4 1053.8 544.3 1058 543.3 1060.5 542.9 1063 542.8 1067.2 541.5 1068 541.2 1073 539.7 1074 539.9 1078 538.7 1080.7 537.5 1083 537.8 1087.4 535.8 1088 536.1 1093 534.2 1094.1 533.8 1098 532.2 1100.8 530.8 1103 531.2 1107.5 528.9 1108 528.9 1113 527.8 1114.3 527.6 1118 526.9 1121 526.3 1123 526.1 1127.7 524.7 1128 524.5 1133 523 1134.4 522.2 1138 522 1141.1 521.3 1143 520.2 1147.8 519 1148 519.7 1153 518.1 1154.6 517.4 1158 517.2 1161.3 516.6 1163 516.6 1168 515.4 1173 514.5" stroke="#0093ff" stroke-width="2.00"/><path d="M738 542 743 542.2 748 542.5 753 542.7 758 542.9 763 543.1 768 543.2 773 543.3 778 543.5 783 543.6 788 543.7 793 543.8 798 544 803 544.1 808 544.2 813 544.3 818 544.4 823 544.5 828 544.6 833 544.7 838 544.8 843 544.9 848 545 853 545.1 858 545.2 863 545.4 868 545.5 873 545.5 878 545.6 883 545.7 888 545.8 893 545.9 898 546 903 546 908 546.1 913 546.2 918 546.3 923 546.4 928 546.5 933 546.5 938 546.4 943 546.3 948 546.2 953 546.2 958 546.1 963 546 968 546 973 545.9 978 545.8 983 545.7 988 545.7 993 545.6 998 545.5 1003 545.5 1008 545.5 1008.7 545.6 1013 545.6 1015.4 545.6 1018 545.6 1022.2 545.6 1023 545.6 1028 545.7 1028.9 545.7 1033 545.7 1035.7 545.7 1038 545.7 1042.4 545.8 1043 545.8 1048 545.7 1049.2 545.5 1053 545 1055.9 544.3 1058 544 1062.6 543.4 1063 543.1 1068 542.1 1069.4 541.3 1073 540 1076.1 539.6 1078 539.2 1082.9 537.7 1083 538.2 1088 536.9 1089.6 536.4 1093 535 1096.4 533.8 1098 533.3 1103 531.5 1103.1 531.5 1108 529.6 1109.9 529.1 1113 528.6 1116.6 528 1118 527.9 1123 527.1 1123.4 527 1128 525.5 1130.1 524.6 1133 523.7 1136.8 522.6 1138 522.3 1143 520.8 1143.6 520.7 1148 519.7 1150.3 519.4 1153 518.6 1157.1 517.7 1158 517.9 1163 516.5 1163.8 516.3 1168 515.2 1170.6 515.2 1173 515.1" stroke="#00b2ff" stroke-width="2.00"/><path d="M738 542 743 542.2 748 542.5 753 542.7 758 542.9 763 543.1 768 543.2 773 543.3 778 543.5 783 543.6 788 543.7 793 543.8 798 544 803 544.1 808 544.2 813 544.3 818 544.4 823 544.5 828 544.6 833 544.7 838 544.8 843 544.9 848 545 853 545.1 858 545.2 863 545.4 868 545.5 873 545.5 878 545.6 883 545.7 888 545.8 893 545.9 898 546 903 546 908 546.1 913 546.2 918 546.3 923 546.4 928 546.5 933 546.5 938 546.4 943 546.3 948 546.2 953 546.2 958 546.1 963 546 968 546 973 545.9 978 545.8 983 545.7 988 545.7 993 545.6 998 545.5 1003 545.5 1008 545.5 1010.6 545.6 1013 545.6 1017.4 545.6 1018 545.6 1023 545.6 1024.1 545.7 1028 545.7 1030.9 545.7 1033 545.7 1037.7 545.7 1038 545.7 1043 545.8 1044.4 545.8 1048 545.8 1051.2 545.5 1053 545.3 1058 544.4 1063 543.6 1064.8 543 1068 542.1 1071.5 541.1 1073 540.9 1078 540.4 1078.3 540.3 1083 538.7 1085.1 538.2 1088 537.8 1091.9 536 1093 536.4 1098 534.7 1098.6 534.5 1103 532.7 1105.4 531.7 1108 530.8 1112.2 529.2 1113 529 1118 528.3 1119 528 1123 527.3 1125.7 526.2 1128 525.8 1132.5 524.1 1133 524.1 1138 522.8 1139.3 522.2 1143 521.4 1146.1 520.2 1148 520.4 1152.8 518.6 1153 518.2 1158 517.4 1159.6 517.4 1163 517 1166.4 516.7 1168 515.7 1173 515.6" stroke="#00d2ff" stroke-width="2.00"/><path d="M738 542 743 542.2 748 542.5 753 542.7 758 542.9 763 543.1 768 543.2 773 543.3 778 543.5 783 543.6 788 543.7 793 543.8 798 544 803 544.1 808 544.2 813 544.3 818 544.4 823 544.5 828 544.6 833 544.7 838 544.8 843 544.9 848 545 853 545.1 858 545.2 863 545.4 868 545.5 873 545.5 878 545.6 883 545.7 888 545.8 893 545.9 898 546 903 546 908 546.1 913 546.2 918 546.3 923 546.4 928 546.5 933 546.5 938 546.4 943 546.3 948 546.2 953 546.2 958 546.1 963 546 968 546 973 545.9 978 545.8 983 545.7 988 545.7 993 545.6 998 545.5 1003 545.5 1008 545.5 1012.5 545.6 1013 545.6 1018 545.6 1019.3 545.6 1023 545.6 1026.1 545.7 1028 545.7 1032.9 545.7 1033 545.7 1038 545.7 1039.7 545.7 1043 545.8 1046.5 545.8 1048 545.8 1053 545.6 1053.3 545.5 1058 544.7 1060.1 544.4 1063 543.9 1066.9 543.1 1068 543.1 1073 541.9 1073.7 541.8 1078 540.2 1080.5 539.7 1083 539.5 1087.3 538.1 1088 538.2 1093 536.8 1094.1 536.4 1098 535.5 1100.9 534.9 1103 533.2 1107.7 531.9 1108 532 1113 530.5 1114.5 530.3 1118 528.9 1121.3 528.9 1123 528.6 1128 526.6 1128.1 526.6 1133 525.2 1134.9 524.1 1138 523.5 1141.7 521.9 1143 521.6 1148 520.1 1148.5 519.9 1153 519.2 1155.3 518.2 1158 517.4 1162.1 517.1 1163 516.8 1168 515.6 1168.9 515.5 1173 515.5" stroke="#00f2ff" stroke-width="2.00"/><path d="M738 542 743 542.2 748 542.5 753 542.7 758 542.9 763 543.1 768 543.2 773 543.3 778 543.5 783 543.6 788 543.7 793 543.8 798 544 803 544.1 808 544.2 813 544.3 818 544.4 823 544.5 828 544.6 833 544.7 838 544.8 843 544.9 848 545 853 545.1 858 545.2 863 545.4 868 545.5 873 545.5 878 545.6 883 545.7 888 545.8 893 545.9 898 546 903 546 908 546.1 913 546.2 918 546.3 923 546.4 928 546.5 933 546.5 938 546.4 943 546.3 948 546.2 953 546.2 958 546.1 963 546 968 546 973 545.9 978 545.8 983 545.7 988 545.7 993 545.6 998 545.5 1003 545.5 1008 545.5 1013 545.6 1014.4 545.6 1018 545.6 1021.2 545.6 1023 545.6 1028 545.7 1033 545.7 1034.9 545.7 1038 545.7 1041.7 545.8 1043 545.8 1048 545.8 1048.5 545.8 1053 545.8 1055.4 545.6 1058 545.1 1062.2 544.5 1063 544.4 1068 543.3 1069 543 1073 542.4 1075.8 541.7 1078 540.7 1082.7 540.1 1083 540.3 1088 538.3 1089.5 538 1093 538 1096.3 536.8 1098 536.3 1103 534 1103.2 534 1108 532.3 1110 532.3 1113 530.7 1116.8 529.7 1118 529.8 1123 529.1 1123.7 529 1128 527.4 1130.5 526.7 1133 525.1 1137.3 523.9 1138 523.2 1143 522.1 1144.1 521.2 1148 520.1 1151 520 1153 519 1157.8 518.6 1158 518.5 1163 517.4 1164.6 517.1 1168 516.1 1171.5 516.4 1173 515.1" stroke="#00ffec" stroke-width="2.00"/><path d="M738 542 743 542.2 748 542.5 753 542.7 758 542.9 763 543.1 768 543.2 773 543.3 778 543.5 783 543.6 788 543.7 793 543.8 798 544 803 544.1 808 544.2 813 544.3 818 544.4 823 544.5 828 544.6 833 544.7 838 544.8 843 544.9 848 545 853 545.1 858 545.2 863 545.4 868 545.5 873 545.5 878 545.6 883 545.7 888 545.8 893 545.9 898 546 903 546 908 546.1 913 546.2 918 546.3 923 546.4 928 546.5 933 546.5 938 546.4 943 546.3 948 546.2 953 546.2 958 546.1 963 546 968 546 973 545.9 978 545.8 983 545.7 988 545.7 993 545.6 998 545.5 1003 545.5 1008 545.5 1013 545.6 1016.3 545.6 1018 545.6 1023 545.6 1023.1 545.6 1028 545.7 1030 545.7 1033 545.7 1036.9 545.7 1038 545.7 1043 545.8 1043.7 545.8 1048 545.8 1050.6 545.8 1053 545.8 1057.4 545.6 1058 545.5 1063 544.7 1064.3 544.6 1068 543.5 1071.1 543.3 1073 542.8 1078 541.3 1083 540.7 1084.9 539.9 1088 539 1091.7 538.4 1093 538.4 1098 537.2 1098.6 537 1103 536.2 1105.4 534.6 1108 533.3 1112.3 533.2 1113 532.7 1118 530.7 1119.1 530.6 1123 529.6 1126 529 1128 527.6 1132.9 525.9 1133 525.7 1138 523.9 1139.7 523.9 1143 522.4 1146.6 521.5 1148 521.3 1153 519.4 1153.4 519.3 1158 519.2 1160.3 517.8 1163 517.3 1167.1 517.1 1168 516.8 1173 515.5" stroke="#00ffcc" stroke-width="2.00"/><path d="M738 542 743 542.2 748 542.5 753 542.7 758 542.9 763 543.1 768 543.2 773 543.3 778 543.5 783 543.6 788 543.7 793 543.8 798 544 803 544.1 808 544.2 813 544.3 818 544.4 823 544.5 828 544.6 833 544.7 838 544.8 843 544.9 848 545 853 545.1 858 545.2 863 545.4 868 545.5 873 545.5 878 545.6 883 545.7 888 545.8 893 545.9 898 546 903 546 908 546.1 913 546.2 918 546.3 923 546.4 928 546.5 933 546.5 938 546.4 943 546.3 948 546.2 953 546.2 958 546.1 963 546 968 546 973 545.9 978 545.8 983 545.7 988 545.7 993 545.6 998 545.5 1003 545.5 1008 545.5 1013 545.6 1018 545.6 1018.2 545.6 1023 545.6 1025.1 545.7 1028 545.7 1032 545.7 1033 545.7 1038 545.7 1038.8 545.7 1043 545.8 1045.7 545.8 1048 545.8 1052.6 545.8 1053 545.8 1058 545.8 1059.5 545.6 1063 545 1066.4 544.4 1068 543.9 1073 543 1073.3 542.9 1078 542.2 1080.2 541.7 1083 541.1 1087 540.1 1088 540 1093 538.9 1093.9 538.7 1098 537.8 1100.8 536.6 1103 536.5 1107.7 534.8 1108 534.8 1113 533.3 1114.6 532.6 1118 531.5 1121.5 530.9 1123 530.7 1128 528.8 1128.3 528.7 1133 526.4 1135.2 525.9 1138 524.7 1142.1 523.3 1143 523.2 1148 521.3 1149 521.3 1153 520.2 1155.9 519.2 1158 518.8 1162.8 517.2 1163 517.4 1168 516.7 1169.7 516.7 1173 516.2" stroke="#00ffac" stroke-width="2.00"/><path d="M738 542 743 542.2 748 542.5 753 542.7 758 542.9 763 543.1 768 543.2 773 543.3 778 543.5 783 543.6 788 543.7 793 543.8 798 544 803 544.1 808 544.2 813 544.3 818 544.4 823 544.5 828 544.6 833 544.7 838 544.8 843 544.9 848 545 853 545.1 858 545.2 863 545.4 868 545.5 873 545.5 878 545.6 883 545.7 888 545.8 893 545.9 898 546 903 546 908 546.1 913 546.2 918 546.3 923 546.4 928 546.5 933 546.5 938 546.4 943 546.3 948 546.2 953 546.2 958 546.1 963 546 968 546 973 545.9 978 545.8 983 545.7 988 545.7 993 545.6 998 545.5 1003 545.5 1008 545.5 1013 545.6 1018 545.6 1020.1 545.6 1023 545.6 1027 545.7 1028 545.7 1033 545.7 1033.9 545.7 1038 545.7 1040.8 545.8 1043 545.8 1047.7 545.8 1048 545.8 1053 545.8 1054.7 545.8 1058 545.9 1061.6 545.6 1063 545.3 1068 544.6 1068.5 544.5 1073 543.7 1075.4 543.2 1078 542.7 1082.3 541.7 1083 541.8 1088 540.3 1089.2 540.2 1093 539.7 1096.1 538.6 1098 538.3 1103 536.3 1108 536 1110 535.1 1113 534.5 1116.9 533.1 1118 532.6 1123 531.5 1123.8 531.3 1128 529.2 1130.7 528.4 1133 526.9 1137.6 525.3 1138 525.8 1143 523.4 1144.5 523.1 1148 521.7 1151.4 520.7 1153 520 1158 519.7 1158.3 519.6 1163 518.3 1165.3 517.1 1168 516.9 1172.2 516.2 1173 516.3" stroke="#00ff8c" stroke-width="2.00"/><path d="M738 542 743 542.2 748 542.5 753 542.7 758 542.9 763 543.1 768 543.2 773 543.3 778 543.5 783 543.6 788 543.7 793 543.8 798 544 803 544.1 808 544.2 813 544.3 818 544.4 823 544.5 828 544.6 833 544.7 838 544.8 843 544.9 848 545 853 545.1 858 545.2 863 545.4 868 545.5 873 545.5 878 545.6 883 545.7 888 545.8 893 545.9 898 546 903 546 908 546.1 913 546.2 918 546.3 923 546.4 928 546.5 933 546.5 938 546.4 943 546.3 948 546.2 953 546.2 958 546.1 963 546 968 546 973 545.9 978 545.8 983 545.7 988 545.7 993 545.6 998 545.5 1003 545.5 1008 545.5 1013 545.6 1018 545.6 1022 545.6 1023 545.6 1028 545.7 1028.9 545.7 1033 545.7 1035.9 545.7 1038 545.7 1042.8 545.8 1043 545.8 1048 545.8 1049.8 545.8 1053 545.8 1056.7 545.9 1058 545.9 1063 545.7 1063.6 545.6 1068 545 1070.6 544.3 1073 544.2 1077.5 543.1 1078 543.1 1083 542.2 1084.5 542 1088 540.6 1091.4 540.5 1093 540.3 1098 539.2 1098.3 539.2 1103 537.6 1105.3 537 1108 536.7 1112.2 535.2 1113 535.2 1118 533.7 1119.2 533.5 1123 532.5 1126.1 530.8 1128 530.5 1133 528.5 1138 526.1 1140 524.7 1143 524.6 1146.9 522.3 1148 522.3 1153 520.7 1153.9 520.5 1158 519.2 1160.8 519 1163 518.4 1167.7 517.3 1168 517.7 1173 516.1" stroke="#00ff6c" stroke-width="2.00"/><path d="M738 542 743 542.2 748 542.5 753 542.7 758 542.9 763 543.1 768 543.2 773 543.3 778 543.5 783 543.6 788 543.7 793 543.8 798 544 803 544.1 808 544.2 813 544.3 818 544.4 823 544.5 828 544.6 833 544.7 838 544.8 843 544.9 848 545 853 545.1 858 545.2 863 545.4 868 545.5 873 545.5 878 545.6 883 545.7 888 545.8 893 545.9 898 546 903 546 908 546.1 913 546.2 918 546.3 923 546.4 928 546.5 933 546.5 938 546.4 943 546.3 948 546.2 953 546.2 958 546.1 963 546 968 546 973 545.9 978 545.8 983 545.7 988 545.7 993 545.6 998 545.5 1003 545.5 1008 545.5 1013 545.6 1018 545.6 1023 545.6 1023.9 545.6 1028 545.7 1030.9 545.7 1033 545.7 1037.8 545.7 1038 545.7 1043 545.8 1044.8 545.8 1048 545.8 1051.8 545.8 1053 545.8 1058 545.9 1058.7 545.9 1063 545.9 1065.7 545.6 1068 545.2 1072.7 544.7 1073 544.5 1078 543.5 1079.6 543.4 1083 542.5 1086.6 542.1 1088 541.8 1093 540.5 1093.6 540.4 1098 539.7 1100.5 539.4 1103 537.9 1107.5 537.5 1108 537.8 1113 536.5 1114.5 535.3 1118 534.1 1121.5 533.4 1123 533.3 1128 531.2 1128.4 531.1 1133 528.5 1135.4 527.8 1138 526.9 1142.4 525.3 1143 525.4 1148 522.4 1149.3 522.4 1153 521.4 1156.3 520.1 1158 519.8 1163 518.6 1163.3 518.6 1168 517.4 1170.2 516.9 1173 516.3" stroke="#00ff4d" stroke-width="2.00"/><path d="M738 542 743 542.2 748 542.5 753 542.7 758 542.9 763 543.1 768 543.2 773 543.3 778 543.5 783 543.6 788 543.7 793 543.8 798 544 803 544.1 808 544.2 813 544.3 818 544.4 823 544.5 828 544.6 833 544.7 838 544.8 843 544.9 848 545 853 545.1 858 545.2 863 545.4 868 545.5 873 545.5 878 545.6 883 545.7 888 545.8 893 545.9 898 546 903 546 908 546.1 913 546.2 918 546.3 923 546.4 928 546.5 933 546.5 938 546.4 943 546.3 948 546.2 953 546.2 958 546.1 963 546 968 546 973 545.9 978 545.8 983 545.7 988 545.7 993 545.6 998 545.5 1003 545.5 1008 545.5 1013 545.6 1018 545.6 1023 545.6 1025.8 545.7 1028 545.7 1032.8 545.7 1033 545.7 1038 545.7 1039.8 545.7 1043 545.8 1046.8 545.8 1048 545.8 1053 545.8 1053.8 545.8 1058 545.9 1060.8 545.9 1063 545.9 1067.8 545.6 1068 545.6 1073 544.9 1074.8 544.6 1078 544.1 1081.8 543.5 1083 543.5 1088 542.2 1088.8 542 1093 541.3 1095.8 540.4 1098 540.6 1102.8 538.6 1103 539 1108 537.9 1109.8 537.6 1113 536.8 1116.7 535.5 1118 535.4 1123 534.2 1123.7 534 1128 531.8 1130.7 530.7 1133 529.5 1137.7 528.1 1138 527.5 1143 525.6 1144.7 524.4 1148 523.9 1151.7 522.2 1153 521.5 1158 520.4 1158.7 520.2 1163 518.8 1165.7 517.8 1168 517.6 1172.7 517.3 1173 516.5" stroke="#00ff2d" stroke-width="2.00"/><path d="M738 542 743 542.2 748 542.5 753 542.7 758 542.9 763 543.1 768 543.2 773 543.3 778 543.5 783 543.6 788 543.7 793 543.8 798 544 803 544.1 808 544.2 813 544.3 818 544.4 823 544.5 828 544.6 833 544.7 838 544.8 843 544.9 848 545 853 545.1 858 545.2 863 545.4 868 545.5 873 545.5 878 545.6 883 545.7 888 545.8 893 545.9 898 546 903 546 908 546.1 913 546.2 918 546.3 923 546.4 928 546.5 933 546.5 938 546.4 943 546.3 948 546.2 953 546.2 958 546.1 963 546 968 546 973 545.9 978 545.8 983 545.7 988 545.7 993 545.6 998 545.5 1003 545.5 1008 545.5 1013 545.6 1018 545.6 1023 545.6 1027.7 545.7 1028 545.7 1033 545.7 1034.7 545.7 1038 545.7 1041.7 545.8 1043 545.8 1048 545.8 1048.8 545.8 1053 545.8 1055.8 545.8 1058 545.9 1062.8 545.9 1063 545.9 1068 545.9 1069.8 545.6 1073 545.2 1076.9 544.6 1078 544.5 1083 543.5 1083.9 543.4 1088 542.5 1090.9 542.1 1093 541.4 1097.9 540.8 1098 541 1103 539.7 1105 539.1 1108 538.8 1112 537.6 1113 537.6 1118 536.8 1119 536.1 1123 535 1126 533.6 1128 532.5 1133 530.8 1133.1 530.8 1138 528.1 1140.1 527.6 1143 525.9 1147.1 524.1 1148 524.3 1153 522.1 1154.1 521.8 1158 520.9 1161.2 519.6 1163 519.5 1168 518.1 1168.2 518 1173 516.7" stroke="#00ff0d" stroke-width="2.00"/><path d="M738 542 743 542.2 748 542.5 753 542.7 758 542.9 763 543.1 768 543.2 773 543.3 778 543.5 783 543.6 788 543.7 793 543.8 798 544 803 544.1 808 544.2 813 544.3 818 544.4 823 544.5 828 544.6 833 544.7 838 544.8 843 544.9 848 545 853 545.1 858 545.2 863 545.4 868 545.5 873 545.5 878 545.6 883 545.7 888 545.8 893 545.9 898 546 903 546 908 546.1 913 546.2 918 546.3 923 546.4 928 546.5 933 546.5 938 546.4 943 546.3 948 546.2 953 546.2 958 546.1 963 546 968 546 973 545.9 978 545.8 983 545.7 988 545.7 993 545.6 998 545.5 1003 545.5 1008 545.5 1013 545.6 1018 545.6 1023 545.6 1028 545.7 1029.6 545.7 1033 545.7 1036.7 545.7 1038 545.7 1043 545.8 1043.7 545.8 1048 545.8 1050.8 545.8 1053 545.8 1057.8 545.9 1058 545.9 1063 545.9 1064.9 545.9 1068 545.9 1071.9 545.6 1073 545.5 1078 544.7 1079 544.7 1083 544 1086 543.4 1088 543.5 1093 542 1093.1 541.9 1098 541.4 1100.1 540.5 1103 540 1107.2 539.3 1108 539 1113 538.4 1114.2 537.6 1118 537.5 1121.3 536.5 1123 535.2 1128 533.5 1128.3 533.4 1133 531.3 1135.4 530.9 1138 528.6 1142.4 527 1143 526.8 1148 524.6 1149.5 523.6 1153 523 1156.5 521.7 1158 520.8 1163 519.5 1163.6 519.3 1168 518.7 1170.6 518.2 1173 517.9" stroke="#13ff00" stroke-width="2.00"/><path d="M738 542 743 542.2 748 542.5 753 542.7 758 542.9 763 543.1 768 543.2 773 543.3 778 543.5 783 543.6 788 543.7 793 543.8 798 544 803 544.1 808 544.2 813 544.3 818 544.4 823 544.5 828 544.6 833 544.7 838 544.8 843 544.9 848 545 853 545.1 858 545.2 863 545.4 868 545.5 873 545.5 878 545.6 883 545.7 888 545.8 893 545.9 898 546 903 546 908 546.1 913 546.2 918 546.3 923 546.4 928 546.5 933 546.5 938 546.4 943 546.3 948 546.2 953 546.2 958 546.1 963 546 968 546 973 545.9 978 545.8 983 545.7 988 545.7 993 545.6 998 545.5 1003 545.5 1008 545.5 1013 545.6 1018 545.6 1023 545.6 1028 545.7 1031.5 545.7 1033 545.7 1038 545.7 1038.6 545.7 1043 545.8 1045.7 545.8 1048 545.8 1052.7 545.8 1053 545.8 1058 545.9 1059.8 545.9 1063 545.9 1066.9 545.9 1068 545.9 1073 545.8 1074 545.7 1078 545 1081.1 544.7 1083 544 1088 543.2 1088.1 543.2 1093 543 1095.2 542.4 1098 541.6 1102.3 541 1103 540.6 1108 539.9 1109.4 539.5 1113 538.4 1116.5 538 1118 538.3 1123 536.8 1123.5 536.7 1128 534.5 1130.6 533.4 1133 532.1 1137.7 530.2 1138 530.1 1143 527.3 1144.8 526.2 1148 525.1 1151.9 523.4 1153 523.3 1158 521.9 1158.9 521.6 1163 520.6 1166 519.4 1168 518.5 1173 517.9" stroke="#33ff00" stroke-width="2.00"/><path d="M738 542 743 542.2 748 542.5 753 542.7 758 542.9 763 543.1 768 543.2 773 543.3 778 543.5 783 543.6 788 543.7 793 543.8 798 544 803 544.1 808 544.2 813 544.3 818 544.4 823 544.5 828 544.6 833 544.7 838 544.8 843 544.9 848 545 853 545.1 858 545.2 863 545.4 868 545.5 873 545.5 878 545.6 883 545.7 888 545.8 893 545.9 898 546 903 546 908 546.1 913 546.2 918 546.3 923 546.4 928 546.5 933 546.5 938 546.4 943 546.3 948 546.2 953 546.2 958 546.1 963 546 968 546 973 545.9 978 545.8 983 545.7 988 545.7 993 545.6 998 545.5 1003 545.5 1008 545.5 1013 545.6 1018 545.6 1023 545.6 1028 545.7 1033 545.7 1033.4 545.7 1038 545.7 1040.5 545.8 1043 545.8 1047.6 545.8 1048 545.8 1053 545.8 1054.7 545.8 1058 545.9 1061.8 545.9 1063 545.9 1068 545.9 1069 545.9 1073 546 1076.1 545.6 1078 545.4 1083 544.7 1083.2 544.7 1088 543.9 1090.3 543.6 1093 543.4 1097.4 541.9 1098 542.2 1103 541.8 1104.5 540.7 1108 539.9 1111.6 540 1113 540 1118 538.9 1118.7 538.8 1123 537.7 1125.8 536.8 1128 535.3 1132.9 533.9 1133 533 1138 530.3 1140 529.5 1143 528.2 1147.1 526.2 1148 526 1153 523.7 1154.2 524 1158 521.9 1161.3 521.6 1163 520.8 1168 519.6 1168.4 519.5 1173 517.8" stroke="#53ff00" stroke-width="2.00"/><path d="M738 542 743 542.2 748 542.5 753 542.7 758 542.9 763 543.1 768 543.2 773 543.3 778 543.5 783 543.6 788 543.7 793 543.8 798 544 803 544.1 808 544.2 813 544.3 818 544.4 823 544.5 828 544.6 833 544.7 838 544.8 843 544.9 848 545 853 545.1 858 545.2 863 545.4 868 545.5 873 545.5 878 545.6 883 545.7 888 545.8 893 545.9 898 546 903 546 908 546.1 913 546.2 918 546.3 923 546.4 928 546.5 933 546.5 938 546.4 943 546.3 948 546.2 953 546.2 958 546.1 963 546 968 546 973 545.9 978 545.8 983 545.7 988 545.7 993 545.6 998 545.5 1003 545.5 1008 545.5 1013 545.6 1018 545.6 1023 545.6 1028 545.7 1033 545.7 1035.3 545.7 1038 545.7 1042.5 545.8 1043 545.8 1048 545.8 1049.6 545.8 1053 545.8 1056.7 545.9 1058 545.9 1063 545.9 1063.9 545.9 1068 545.9 1071 545.9 1073 546 1078 545.7 1078.1 545.7 1083 545.1 1085.3 544.8 1088 544.2 1092.4 543.4 1093 543.5 1098 542.8 1099.5 542.5 1103 541.9 1106.7 541.2 1108 541.2 1113 540.3 1113.8 540.2 1118 539.4 1120.9 538.5 1123 538.7 1128 536.4 1128.1 536.4 1133 534 1135.2 533.3 1138 531.6 1142.3 530 1143 529.4 1148 526.6 1149.5 525.6 1153 524.5 1156.6 522.6 1158 523.1 1163 521.5 1163.7 521.3 1168 519.9 1170.9 519.7 1173 518.5" stroke="#73ff00" stroke-width="2.00"/><path d="M738 542 743 542.2 748 542.5 753 542.7 758 542.9 763 543.1 768 543.2 773 543.3 778 543.5 783 543.6 788 543.7 793 543.8 798 544 803 544.1 808 544.2 813 544.3 818 544.4 823 544.5 828 544.6 833 544.7 838 544.8 843 544.9 848 545 853 545.1 858 545.2 863 545.4 868 545.5 873 545.5 878 545.6 883 545.7 888 545.8 893 545.9 898 546 903 546 908 546.1 913 546.2 918 546.3 923 546.4 928 546.5 933 546.5 938 546.4 943 546.3 948 546.2 953 546.2 958 546.1 963 546 968 546 973 545.9 978 545.8 983 545.7 988 545.7 993 545.6 998 545.5 1003 545.5 1008 545.5 1013 545.6 1018 545.6 1023 545.6 1028 545.7 1033 545.7 1037.2 545.7 1038 545.7 1043 545.8 1044.4 545.8 1048 545.8 1051.6 545.8 1053 545.8 1058 545.9 1058.7 545.9 1063 545.9 1065.9 545.9 1068 545.9 1073 546 1078 546 1080.2 545.7 1083 545.3 1087.4 544.7 1088 544.6 1093 543.9 1094.5 543.8 1098 543.3 1101.7 542.6 1103 542.7 1108 541.4 1108.8 541.3 1113 540.4 1116 540.2 1118 539.8 1123 538.2 1123.2 538.2 1128 537.3 1130.3 536.5 1133 535.3 1137.5 533.6 1138 532.9 1143 529.5 1144.7 529.1 1148 527.6 1151.8 525.5 1153 525.1 1158 523.3 1159 522.4 1163 521.4 1166.1 520.2 1168 519.7 1173 518.3" stroke="#93ff00" stroke-width="2.00"/><path d="M738 542 743 542.2 748 542.5 753 542.7 758 542.9 763 543.1 768 543.2 773 543.3 778 543.5 783 543.6 788 543.7 793 543.8 798 544 803 544.1 808 544.2 813 544.3 818 544.4 823 544.5 828 544.6 833 544.7 838 544.8 843 544.9 848 545 853 545.1 858 545.2 863 545.4 868 545.5 873 545.5 878 545.6 883 545.7 888 545.8 893 545.9 898 546 903 546 908 546.1 913 546.2 918 546.3 923 546.4 928 546.5 933 546.5 938 546.4 943 546.3 948 546.2 953 546.2 958 546.1 963 546 968 546 973 545.9 978 545.8 983 545.7 988 545.7 993 545.6 998 545.5 1003 545.5 1008 545.5 1013 545.6 1018 545.6 1023 545.6 1028 545.7 1033 545.7 1038 545.7 1039.1 545.7 1043 545.8 1046.3 545.8 1048 545.8 1053 545.8 1053.5 545.8 1058 545.9 1060.7 545.9 1063 545.9 1067.9 545.9 1068 545.9 1073 546 1075.1 546 1078 546 1082.3 545.8 1083 545.7 1088 545 1089.5 544.8 1093 544.3 1096.7 543.8 1098 543.4 1103 542.4 1103.8 542.2 1108 541.9 1111 541.3 1113 540.7 1118 540.5 1118.2 540.5 1123 538.9 1125.4 539.2 1128 538.4 1132.6 536.4 1133 536.3 1138 533.7 1139.8 532.7 1143 531.2 1147 528.6 1148 528.1 1153 526.4 1154.2 525.6 1158 523.8 1161.3 523.1 1163 521.7 1168 520.6 1168.5 520.5 1173 518.8" stroke="#b3ff00" stroke-width="2.00"/><path d="M738 542 743 542.2 748 542.5 753 542.7 758 542.9 763 543.1 768 543.2 773 543.3 778 543.5 783 543.6 788 543.7 793 543.8 798 544 803 544.1 808 544.2 813 544.3 818 544.4 823 544.5 828 544.6 833 544.7 838 544.8 843 544.9 848 545 853 545.1 858 545.2 863 545.4 868 545.5 873 545.5 878 545.6 883 545.7 888 545.8 893 545.9 898 546 903 546 908 546.1 913 546.2 918 546.3 923 546.4 928 546.5 933 546.5 938 546.4 943 546.3 948 546.2 953 546.2 958 546.1 963 546 968 546 973 545.9 978 545.8 983 545.7 988 545.7 993 545.6 998 545.5 1003 545.5 1008 545.5 1013 545.6 1018 545.6 1023 545.6 1028 545.7 1033 545.7 1038 545.7 1041.1 545.8 1043 545.8 1048 545.8 1048.3 545.8 1053 545.8 1055.5 545.8 1058 545.9 1062.7 545.9 1063 545.9 1068 545.9 1069.9 545.9 1073 546 1077.1 546 1078 546 1083 546 1084.3 545.8 1088 545.3 1091.6 544.9 1093 544.7 1098 544 1098.8 543.8 1103 543.3 1106 542.5 1108 542.7 1113 541.7 1113.2 541.7 1118 541.3 1120.4 540.6 1123 540.5 1127.6 538.8 1128 539 1133 536.9 1134.9 536.2 1138 534.4 1142.1 532.4 1143 531.9 1148 529.2 1149.3 528.9 1153 526.8 1156.5 525.2 1158 524.4 1163 522.4 1163.7 522.1 1168 521.1 1170.9 519.7 1173 519.5" stroke="#d2ff00" stroke-width="2.00"/><path d="M738 542 743 542.2 748 542.5 753 542.7 758 542.9 763 543.1 768 543.2 773 543.3 778 543.5 783 543.6 788 543.7 793 543.8 798 544 803 544.1 808 544.2 813 544.3 818 544.4 823 544.5 828 544.6 833 544.7 838 544.8 843 544.9 848 545 853 545.1 858 545.2 863 545.4 868 545.5 873 545.5 878 545.6 883 545.7 888 545.8 893 545.9 898 546 903 546 908 546.1 913 546.2 918 546.3 923 546.4 928 546.5 933 546.5 938 546.4 943 546.3 948 546.2 953 546.2 958 546.1 963 546 968 546 973 545.9 978 545.8 983 545.7 988 545.7 993 545.6 998 545.5 1003 545.5 1008 545.5 1013 545.6 1018 545.6 1023 545.6 1028 545.7 1033 545.7 1038 545.7 1043 545.8 1048 545.8 1050.2 545.8 1053 545.8 1057.4 545.9 1058 545.9 1063 545.9 1064.7 545.9 1068 545.9 1071.9 545.9 1073 546 1078 546 1079.2 546 1083 546 1086.4 545.8 1088 545.6 1093 545 1093.7 544.9 1098 544 1100.9 544.4 1103 543.5 1108 542.6 1108.1 542.5 1113 542.2 1115.4 542.4 1118 541.1 1122.6 541.4 1123 540.9 1128 539.5 1129.9 539 1133 537.6 1137.1 536 1138 535.6 1143 533 1144.4 531.8 1148 529.7 1151.6 527.7 1153 527.5 1158 524.9 1158.9 524.5 1163 523.1 1166.1 521.5 1168 521.6 1173 519.7" stroke="#f2ff00" stroke-width="2.00"/><path d="M738 542 743 542.2 748 542.5 753 542.7 758 542.9 763 543.1 768 543.2 773 543.3 778 543.5 783 543.6 788 543.7 793 543.8 798 544 803 544.1 808 544.2 813 544.3 818 544.4 823 544.5 828 544.6 833 544.7 838 544.8 843 544.9 848 545 853 545.1 858 545.2 863 545.4 868 545.5 873 545.5 878 545.6 883 545.7 888 545.8 893 545.9 898 546 903 546 908 546.1 913 546.2 918 546.3 923 546.4 928 546.5 933 546.5 938 546.4 943 546.3 948 546.2 953 546.2 958 546.1 963 546 968 546 973 545.9 978 545.8 983 545.7 988 545.7 993 545.6 998 545.5 1003 545.5 1008 545.5 1013 545.6 1018 545.6 1023 545.6 1028 545.7 1033 545.7 1038 545.7 1043 545.8 1044.9 545.8 1048 545.8 1052.1 545.8 1053 545.8 1058 545.9 1059.4 545.9 1063 545.9 1066.7 545.9 1068 545.9 1073 546 1074 546 1078 546 1081.2 546 1083 546 1088 545.9 1088.5 545.9 1093 545.3 1095.8 545 1098 544.6 1103 544 1108 543.1 1110.3 543.3 1113 542.2 1117.6 542.7 1118 542.2 1123 541.2 1124.8 541 1128 540 1132.1 539 1133 538.9 1138 536.9 1139.4 535.7 1143 533.5 1146.7 531.7 1148 531.2 1153 527.8 1153.9 527.4 1158 526 1161.2 524.8 1163 523.9 1168 522.1 1168.5 521.9 1173 520.6" stroke="#ffec00" stroke-width="2.00"/><path d="M738 542 743 542.2 748 542.5 753 542.7 758 542.9 763 543.1 768 543.2 773 543.3 778 543.5 783 543.6 788 543.7 793 543.8 798 544 803 544.1 808 544.2 813 544.3 818 544.4 823 544.5 828 544.6 833 544.7 838 544.8 843 544.9 848 545 853 545.1 858 545.2 863 545.4 868 545.5 873 545.5 878 545.6 883 545.7 888 545.8 893 545.9 898 546 903 546 908 546.1 913 546.2 918 546.3 923 546.4 928 546.5 933 546.5 938 546.4 943 546.3 948 546.2 953 546.2 958 546.1 963 546 968 546 973 545.9 978 545.8 983 545.7 988 545.7 993 545.6 998 545.5 1003 545.5 1008 545.5 1013 545.6 1018 545.6 1023 545.6 1028 545.7 1033 545.7 1038 545.7 1043 545.8 1046.8 545.8 1048 545.8 1053 545.8 1054.1 545.8 1058 545.9 1061.4 545.9 1063 545.9 1068 545.9 1068.7 545.9 1073 546 1076 546 1078 546 1083 546 1083.3 546.1 1088 546.1 1090.6 545.9 1093 545.7 1097.9 545.1 1098 544.9 1103 544.3 1105.2 543.9 1108 543.8 1112.5 543.2 1113 543.2 1118 542.3 1119.8 542.9 1123 542.1 1127.1 540.6 1128 540.8 1133 538.4 1134.4 538.8 1138 537.3 1141.6 535.7 1143 534.7 1148 531.3 1148.9 530.8 1153 529.1 1156.2 526.9 1158 526.4 1163 524.1 1163.5 523.9 1168 522.6 1170.8 521 1173 521.1" stroke="#ffcc00" stroke-width="2.00"/><path d="M738 542 743 542.2 748 542.5 753 542.7 758 542.9 763 543.1 768 543.2 773 543.3 778 543.5 783 543.6 788 543.7 793 543.8 798 544 803 544.1 808 544.2 813 544.3 818 544.4 823 544.5 828 544.6 833 544.7 838 544.8 843 544.9 848 545 853 545.1 858 545.2 863 545.4 868 545.5 873 545.5 878 545.6 883 545.7 888 545.8 893 545.9 898 546 903 546 908 546.1 913 546.2 918 546.3 923 546.4 928 546.5 933 546.5 938 546.4 943 546.3 948 546.2 953 546.2 958 546.1 963 546 968 546 973 545.9 978 545.8 983 545.7 988 545.7 993 545.6 998 545.5 1003 545.5 1008 545.5 1013 545.6 1018 545.6 1023 545.6 1028 545.7 1033 545.7 1038 545.7 1043 545.8 1048 545.8 1048.7 545.8 1053 545.8 1056 545.9 1058 545.9 1063 545.9 1063.3 545.9 1068 545.9 1070.7 545.9 1073 546 1078 546 1083 546 1085.3 546.1 1088 546.1 1092.6 546 1093 545.9 1098 545.3 1100 545.1 1103 544.7 1107.3 544.1 1108 544 1113 543.4 1114.6 543.4 1118 543.4 1121.9 543.1 1123 542.4 1128 541 1129.3 541.3 1133 539.7 1136.6 539.1 1138 538.1 1143 535.4 1143.9 534.8 1148 533 1151.2 530.8 1153 529.7 1158 527.5 1158.6 527.2 1163 525 1165.9 523.9 1168 522.5 1173 521.3" stroke="#ffac00" stroke-width="2.00"/><path d="M738 542 743 542.2 748 542.5 753 542.7 758 542.9 763 543.1 768 543.2 773 543.3 778 543.5 783 543.6 788 543.7 793 543.8 798 544 803 544.1 808 544.2 813 544.3 818 544.4 823 544.5 828 544.6 833 544.7 838 544.8 843 544.9 848 545 853 545.1 858 545.2 863 545.4 868 545.5 873 545.5 878 545.6 883 545.7 888 545.8 893 545.9 898 546 903 546 908 546.1 913 546.2 918 546.3 923 546.4 928 546.5 933 546.5 938 546.4 943 546.3 948 546.2 953 546.2 958 546.1 963 546 968 546 973 545.9 978 545.8 983 545.7 988 545.7 993 545.6 998 545.5 1003 545.5 1008 545.5 1013 545.6 1018 545.6 1023 545.6 1028 545.7 1033 545.7 1038 545.7 1043 545.8 1048 545.8 1050.6 545.8 1053 545.8 1058 545.9 1063 545.9 1065.3 545.9 1068 545.9 1072.7 546 1073 546 1078 546 1080 546 1083 546 1087.4 546.1 1088 546.1 1093 546.2 1094.7 546 1098 545.6 1102.1 545 1103 545.1 1108 544.4 1109.4 544.5 1113 544.1 1116.8 544 1118 543.3 1123 542.5 1124.1 542.6 1128 541.6 1131.5 541.2 1133 539.9 1138 538.2 1138.8 537.8 1143 536.4 1146.2 534.1 1148 533.6 1153 530.2 1153.5 529.9 1158 528.1 1160.9 527.2 1163 525.7 1168 524.1 1168.2 524 1173 521.7" stroke="#ff8c00" stroke-width="2.00"/><path d="M738 542 743 542.2 748 542.5 753 542.7 758 542.9 763 543.1 768 543.2 773 543.3 778 543.5 783 543.6 788 543.7 793 543.8 798 544 803 544.1 808 544.2 813 544.3 818 544.4 823 544.5 828 544.6 833 544.7 838 544.8 843 544.9 848 545 853 545.1 858 545.2 863 545.4 868 545.5 873 545.5 878 545.6 883 545.7 888 545.8 893 545.9 898 546 903 546 908 546.1 913 546.2 918 546.3 923 546.4 928 546.5 933 546.5 938 546.4 943 546.3 948 546.2 953 546.2 958 546.1 963 546 968 546 973 545.9 978 545.8 983 545.7 988 545.7 993 545.6 998 545.5 1003 545.5 1008 545.5 1013 545.6 1018 545.6 1023 545.6 1028 545.7 1033 545.7 1038 545.7 1043 545.8 1048 545.8 1052.5 545.8 1053 545.8 1058 545.9 1059.9 545.9 1063 545.9 1067.3 545.9 1068 545.9 1073 546 1074.7 546 1078 546 1082 546 1083 546 1088 546.1 1089.4 546.2 1093 546.2 1096.8 546 1098 545.9 1103 545.3 1104.2 545.2 1108 544.6 1111.5 544.6 1113 544.1 1118 543.6 1118.9 543.5 1123 543.7 1126.3 542.9 1128 542.5 1133 540.6 1133.7 540.4 1138 539.9 1141.1 537.4 1143 537 1148 534.3 1148.4 534 1153 531.3 1155.8 530.1 1158 528.8 1163 526.3 1163.2 526.2 1168 524.3 1170.6 523.2 1173 522.2" stroke="#ff6c00" stroke-width="2.00"/><path d="M738 542 743 542.2 748 542.5 753 542.7 758 542.9 763 543.1 768 543.2 773 543.3 778 543.5 783 543.6 788 543.7 793 543.8 798 544 803 544.1 808 544.2 813 544.3 818 544.4 823 544.5 828 544.6 833 544.7 838 544.8 843 544.9 848 545 853 545.1 858 545.2 863 545.4 868 545.5 873 545.5 878 545.6 883 545.7 888 545.8 893 545.9 898 546 903 546 908 546.1 913 546.2 918 546.3 923 546.4 928 546.5 933 546.5 938 546.4 943 546.3 948 546.2 953 546.2 958 546.1 963 546 968 546 973 545.9 978 545.8 983 545.7 988 545.7 993 545.6 998 545.5 1003 545.5 1008 545.5 1013 545.6 1018 545.6 1023 545.6 1028 545.7 1033 545.7 1038 545.7 1043 545.8 1048 545.8 1053 545.8 1054.4 545.8 1058 545.9 1061.8 545.9 1063 545.9 1068 545.9 1069.2 545.9 1073 546 1076.6 546 1078 546 1083 546 1084.1 546.1 1088 546.1 1091.5 546.2 1093 546.2 1098 546.1 1098.9 546 1103 545.5 1106.3 545.3 1108 545.1 1113 544.6 1113.7 544.6 1118 544.2 1121.1 543.7 1123 543.6 1128 542.5 1128.5 542.4 1133 541.7 1135.9 541.1 1138 540.5 1143 537.8 1143.3 537.6 1148 535.1 1150.7 534 1153 531.9 1158 530.2 1158.1 530.1 1163 527.5 1165.5 526 1168 525.1 1172.9 523.4 1173 522.9" stroke="#ff4d00" stroke-width="2.00"/><path d="M738 542 743 542.2 748 542.5 753 542.7 758 542.9 763 543.1 768 543.2 773 543.3 778 543.5 783 543.6 788 543.7 793 543.8 798 544 803 544.1 808 544.2 813 544.3 818 544.4 823 544.5 828 544.6 833 544.7 838 544.8 843 544.9 848 545 853 545.1 858 545.2 863 545.4 868 545.5 873 545.5 878 545.6 883 545.7 888 545.8 893 545.9 898 546 903 546 908 546.1 913 546.2 918 546.3 923 546.4 928 546.5 933 546.5 938 546.4 943 546.3 948 546.2 953 546.2 958 546.1 963 546 968 546 973 545.9 978 545.8 983 545.7 988 545.7 993 545.6 998 545.5 1003 545.5 1008 545.5 1013 545.6 1018 545.6 1023 545.6 1028 545.7 1033 545.7 1038 545.7 1043 545.8 1048 545.8 1053 545.8 1056.3 545.9 1058 545.9 1063 545.9 1063.8 545.9 1068 545.9 1071.2 545.9 1073 546 1078 546 1078.6 546 1083 546 1086.1 546.1 1088 546.1 1093 546.2 1093.5 546.2 1098 546.3 1100.9 546.1 1103 545.9 1108 545.3 1108.4 545.2 1113 544.9 1115.8 544.5 1118 544.6 1123 544.1 1123.2 544 1128 543.3 1130.7 542.5 1133 541.8 1138 540.7 1138.1 540.7 1143 538.4 1145.5 537 1148 535.3 1153 533.5 1158 529.9 1160.4 529.5 1163 527.9 1167.8 525.9 1168 525.6 1173 523.7" stroke="#ff2d00" stroke-width="2.00"/><path d="M738 542 743 542.2 748 542.5 753 542.7 758 542.9 763 543.1 768 543.2 773 543.3 778 543.5 783 543.6 788 543.7 793 543.8 798 544 803 544.1 808 544.2 813 544.3 818 544.4 823 544.5 828 544.6 833 544.7 838 544.8 843 544.9 848 545 853 545.1 858 545.2 863 545.4 868 545.5 873 545.5 878 545.6 883 545.7 888 545.8 893 545.9 898 546 903 546 908 546.1 913 546.2 918 546.3 923 546.4 928 546.5 933 546.5 938 546.4 943 546.3 948 546.2 953 546.2 958 546.1 963 546 968 546 973 545.9 978 545.8 983 545.7 988 545.7 993 545.6 998 545.5 1003 545.5 1008 545.5 1013 545.6 1018 545.6 1023 545.6 1028 545.7 1033 545.7 1038 545.7 1043 545.8 1048 545.8 1053 545.8 1058 545.9 1058.3 545.9 1063 545.9 1065.7 545.9 1068 545.9 1073 546 1073.2 546 1078 546 1080.6 546 1083 546 1088 546.1 1088.1 546.1 1093 546.2 1095.6 546.3 1098 546.3 1103 546.1 1108 545.6 1110.5 545.4 1113 545.3 1117.9 545.2 1118 545 1123 544.7 1125.4 544.4 1128 543.4 1132.9 542.6 1133 541.9 1138 540.9 1140.3 540.2 1143 538.5 1147.8 536.8 1148 535.8 1153 534.6 1155.2 533 1158 531.4 1162.7 528.6 1163 529 1168 526.4 1170.1 525.2 1173 524.5" stroke="#ff0d00" stroke-width="2.00"/><path d="M738 542 743 542.2 748 542.5 753 542.7 758 542.9 763 543.1 768 543.2 773 543.3 778 543.5 783 543.6 788 543.7 793 543.8 798 544 803 544.1 808 544.2 813 544.3 818 544.4 823 544.5 828 544.6 833 544.7 838 544.8 843 544.9 848 545 853 545.1 858 545.2 863 545.4 868 545.5 873 545.5 878 545.6 883 545.7 888 545.8 893 545.9 898 546 903 546 908 546.1 913 546.2 918 546.3 923 546.4 928 546.5 933 546.5 938 546.4 943 546.3 948 546.2 953 546.2 958 546.1 963 546 968 546 973 545.9 978 545.8 983 545.7 988 545.7 993 545.6 998 545.5 1003 545.5 1008 545.5 1013 545.6 1018 545.6 1023 545.6 1028 545.7 1033 545.7 1038 545.7 1043 545.8 1048 545.8 1053 545.8 1058 545.9 1060.2 545.9 1063 545.9 1067.7 545.9 1068 545.9 1073 546 1075.1 546 1078 546 1082.6 546 1083 546 1088 546.1 1090.1 546.2 1093 546.2 1097.6 546.3 1098 546.3 1103 546.4 1105.1 546.2 1108 545.9 1112.6 545.7 1113 545.5 1118 545.4 1120.1 545.3 1123 544.8 1127.5 544.4 1128 543.9 1133 543.3 1135 542.5 1138 542.2 1142.5 539.1 1143 539 1148 536.7 1150 536.3 1153 534.8 1157.5 532.4 1158 531.6 1163 529.4 1165 529 1168 527.2 1172.5 525 1173 525" stroke="#ff0013" stroke-width="2.00"/><path d="M738 542 743 542.2 748 542.5 753 542.7 758 542.9 763 543.1 768 543.2 773 543.3 778 543.5 783 543.6 788 543.7 793 543.8 798 544 803 544.1 808 544.2 813 544.3 818 544.4 823 544.5 828 544.6 833 544.7 838 544.8 843 544.9 848 545 853 545.1 858 545.2 863 545.4 868 545.5 873 545.5 878 545.6 883 545.7 888 545.8 893 545.9 898 546 903 546 908 546.1 913 546.2 918 546.3 923 546.4 928 546.5 933 546.5 938 546.4 943 546.3 948 546.2 953 546.2 958 546.1 963 546 968 546 973 545.9 978 545.8 983 545.7 988 545.7 993 545.6 998 545.5 1003 545.5 1008 545.5 1013 545.6 1018 545.6 1023 545.6 1028 545.7 1033 545.7 1038 545.7 1043 545.8 1048 545.8 1053 545.8 1058 545.9 1062.1 545.9 1063 545.9 1068 545.9 1069.6 545.9 1073 546 1077.1 546 1078 546 1083 546 1084.6 546.1 1088 546.1 1092.1 546.2 1093 546.2 1098 546.3 1099.7 546.3 1103 546.4 1107.2 546.2 1108 546.2 1113 545.8 1114.7 545.8 1118 545.6 1122.2 545.6 1123 545.3 1128 544.2 1129.7 544.2 1133 542.7 1137.2 542.3 1138 542.3 1143 539.9 1144.7 539.1 1148 537.2 1152.2 535.6 1153 535.1 1158 532.7 1159.8 531.7 1163 530.5 1167.3 528.1 1168 528 1173 525.8" stroke="#ff0033" stroke-width="2.00"/><path d="M738 542 743 542.2 748 542.5 753 542.7 758 542.9 763 543.1 768 543.2 773 543.3 778 543.5 783 543.6 788 543.7 793 543.8 798 544 803 544.1 808 544.2 813 544.3 818 544.4 823 544.5 828 544.6 833 544.7 838 544.8 843 544.9 848 545 853 545.1 858 545.2 863 545.4 868 545.5 873 545.5 878 545.6 883 545.7 888 545.8 893 545.9 898 546 903 546 908 546.1 913 546.2 918 546.3 923 546.4 928 546.5 933 546.5 938 546.4 943 546.3 948 546.2 953 546.2 958 546.1 963 546 968 546 973 545.9 978 545.8 983 545.7 988 545.7 993 545.6 998 545.5 1003 545.5 1008 545.5 1013 545.6 1018 545.6 1023 545.6 1028 545.7 1033 545.7 1038 545.7 1043 545.8 1048 545.8 1053 545.8 1058 545.9 1063 545.9 1064 545.9 1068 545.9 1071.5 545.9 1073 546 1078 546 1079.1 546 1083 546 1086.6 546.1 1088 546.1 1093 546.2 1094.2 546.2 1098 546.3 1101.7 546.4 1103 546.4 1108 546.4 1109.2 546.3 1113 546.2 1116.8 545.8 1118 545.9 1123 545.7 1124.3 545.5 1128 544.6 1131.9 544.6 1133 543.7 1138 542.4 1139.4 542.2 1143 541 1146.9 538.2 1148 538.4 1153 535.6 1154.5 535.9 1158 534.5 1162 531.5 1163 531.4 1168 527.9 1169.6 528.1 1173 526.5" stroke="#ff0053" stroke-width="2.00"/><path d="M738 542 743 542.2 748 542.5 753 542.7 758 542.9 763 543.1 768 543.2 773 543.3 778 543.5 783 543.6 788 543.7 793 543.8 798 544 803 544.1 808 544.2 813 544.3 818 544.4 823 544.5 828 544.6 833 544.7 838 544.8 843 544.9 848 545 853 545.1 858 545.2 863 545.4 868 545.5 873 545.5 878 545.6 883 545.7 888 545.8 893 545.9 898 546 903 546 908 546.1 913 546.2 918 546.3 923 546.4 928 546.5 933 546.5 938 546.4 943 546.3 948 546.2 953 546.2 958 546.1 963 546 968 546 973 545.9 978 545.8 983 545.7 988 545.7 993 545.6 998 545.5 1003 545.5 1008 545.5 1013 545.6 1018 545.6 1023 545.6 1028 545.7 1033 545.7 1038 545.7 1043 545.8 1048 545.8 1053 545.8 1058 545.9 1063 545.9 1065.9 545.9 1068 545.9 1073 546 1073.5 546 1078 546 1081.1 546 1083 546 1088 546.1 1088.6 546.1 1093 546.2 1096.2 546.3 1098 546.3 1103 546.4 1103.8 546.4 1108 546.5 1111.3 546.4 1113 546.3 1118 546.1 1118.9 546.1 1123 545.6 1126.5 545.2 1128 544.9 1133 544.5 1134 544.4 1138 543.7 1141.6 542.3 1143 541.7 1148 538.9 1149.2 538 1153 536.5 1156.7 534.8 1158 534.8 1163 532.4 1164.3 530.9 1168 529.6 1171.8 527.4 1173 526.6" stroke="#ff0073" stroke-width="2.00"/><path d="M738 542 743 542.2 748 542.5 753 542.7 758 542.9 763 543.1 768 543.2 773 543.3 778 543.5 783 543.6 788 543.7 793 543.8 798 544 803 544.1 808 544.2 813 544.3 818 544.4 823 544.5 828 544.6 833 544.7 838 544.8 843 544.9 848 545 853 545.1 858 545.2 863 545.4 868 545.5 873 545.5 878 545.6 883 545.7 888 545.8 893 545.9 898 546 903 546 908 546.1 913 546.2 918 546.3 923 546.4 928 546.5 933 546.5 938 546.4 943 546.3 948 546.2 953 546.2 958 546.1 963 546 968 546 973 545.9 978 545.8 983 545.7 988 545.7 993 545.6 998 545.5 1003 545.5 1008 545.5 1013 545.6 1018 545.6 1023 545.6 1028 545.7 1033 545.7 1038 545.7 1043 545.8 1048 545.8 1053 545.8 1058 545.9 1063 545.9 1067.8 545.9 1068 545.9 1073 546 1075.4 546 1078 546 1083 546 1088 546.1 1090.6 546.2 1093 546.2 1098 546.3 1098.2 546.3 1103 546.4 1105.8 546.4 1108 546.5 1113 546.6 1113.4 546.6 1118 546.5 1121 546.5 1123 546.2 1128 545.5 1128.6 545.4 1133 545.2 1136.2 544.1 1138 543.7 1143 541.7 1143.8 541.4 1148 539.5 1151.4 537.8 1153 537.5 1158 535.4 1159 534.1 1163 532.4 1166.5 530.7 1168 530 1173 527.7" stroke="#ff0093" stroke-width="2.00"/><path d="M738 542 743 542.2 748 542.5 753 542.7 758 542.9 763 543.1 768 543.2 773 543.3 778 543.5 783 543.6 788 543.7 793 543.8 798 544 803 544.1 808 544.2 813 544.3 818 544.4 823 544.5 828 544.6 833 544.7 838 544.8 843 544.9 848 545 853 545.1 858 545.2 863 545.4 868 545.5 873 545.5 878 545.6 883 545.7 888 545.8 893 545.9 898 546 903 546 908 546.1 913 546.2 918 546.3 923 546.4 928 546.5 933 546.5 938 546.4 943 546.3 948 546.2 953 546.2 958 546.1 963 546 968 546 973 545.9 978 545.8 983 545.7 988 545.7 993 545.6 998 545.5 1003 545.5 1008 545.5 1013 545.6 1018 545.6 1023 545.6 1028 545.7 1033 545.7 1038 545.7 1043 545.8 1048 545.8 1053 545.8 1058 545.9 1063 545.9 1068 545.9 1069.8 545.9 1073 546 1077.4 546 1078 546 1083 546 1085 546.1 1088 546.1 1092.6 546.2 1093 546.2 1098 546.3 1100.2 546.3 1103 546.4 1107.9 546.5 1108 546.5 1113 546.8 1115.5 546.7 1118 546.7 1123 546.4 1123.1 546.4 1128 546.1 1130.7 545.8 1133 544.9 1138 544.4 1138.3 544.3 1143 542.2 1146 540.3 1148 540.1 1153 537.9 1153.6 537.6 1158 536 1161.2 533.7 1163 533.3 1168 531.3 1168.8 530.9 1173 528.7" stroke="#ff00b3" stroke-width="2.00"/><path d="M738 542 743 542.2 748 542.5 753 542.7 758 542.9 763 543.1 768 543.2 773 543.3 778 543.5 783 543.6 788 543.7 793 543.8 798 544 803 544.1 808 544.2 813 544.3 818 544.4 823 544.5 828 544.6 833 544.7 838 544.8 843 544.9 848 545 853 545.1 858 545.2 863 545.4 868 545.5 873 545.5 878 545.6 883 545.7 888 545.8 893 545.9 898 546 903 546 908 546.1 913 546.2 918 546.3 923 546.4 928 546.5 933 546.5 938 546.4 943 546.3 948 546.2 953 546.2 958 546.1 963 546 968 546 973 545.9 978 545.8 983 545.7 988 545.7 993 545.6 998 545.5 1003 545.5 1008 545.5 1013 545.6 1018 545.6 1023 545.6 1028 545.7 1033 545.7 1038 545.7 1043 545.8 1048 545.8 1053 545.8 1058 545.9 1063 545.9 1068 545.9 1071.7 545.9 1073 546 1078 546 1079.3 546 1083 546 1087 546.1 1088 546.1 1093 546.2 1094.6 546.2 1098 546.3 1102.3 546.4 1103 546.4 1108 546.5 1109.9 546.5 1113 546.8 1117.5 547 1118 547 1123 546.8 1125.2 546.6 1128 546.1 1132.8 545.6 1133 545.4 1138 544.6 1140.5 543.7 1143 542.1 1148 541 1148.1 541 1153 538.1 1155.8 536.4 1158 536.6 1163 533.6 1163.4 533.5 1168 531.6 1171.1 530 1173 528.9" stroke="#ff00d2" stroke-width="2.00"/><path d="M738 542 743 542.2 748 542.5 753 542.7 758 542.9 763 543.1 768 543.2 773 543.3 778 543.5 783 543.6 788 543.7 793 543.8 798 544 803 544.1 808 544.2 813 544.3 818 544.4 823 544.5 828 544.6 833 544.7 838 544.8 843 544.9 848 545 853 545.1 858 545.2 863 545.4 868 545.5 873 545.5 878 545.6 883 545.7 888 545.8 893 545.9 898 546 903 546 908 546.1 913 546.2 918 546.3 923 546.4 928 546.5 933 546.5 938 546.4 943 546.3 948 546.2 953 546.2 958 546.1 963 546 968 546 973 545.9 978 545.8 983 545.7 988 545.7 993 545.6 998 545.5 1003 545.5 1008 545.5 1013 545.6 1018 545.6 1023 545.6 1028 545.7 1033 545.7 1038 545.7 1043 545.8 1048 545.8 1053 545.8 1058 545.9 1063 545.9 1068 545.9 1073 546 1073.6 546 1078 546 1081.3 546 1083 546 1088 546.1 1088.9 546.1 1093 546.2 1096.6 546.3 1098 546.3 1103 546.4 1104.3 546.4 1108 546.5 1112 546.7 1113 546.8 1118 547.2 1119.6 547.2 1123 547 1127.3 546.6 1128 546.6 1133 545.9 1135 545.5 1138 545 1142.6 543.3 1143 542.7 1148 540.3 1150.3 539.9 1153 538.6 1158 536.4 1163 534.8 1165.7 533.1 1168 532.2 1173 529.6" stroke="#ff00f2" stroke-width="2.00"/><path d="M738 542 743 542.2 748 542.5 753 542.7 758 542.9 763 543.1 768 543.2 773 543.3 778 543.5 783 543.6 788 543.7 793 543.8 798 544 803 544.1 808 544.2 813 544.3 818 544.4 823 544.5 828 544.6 833 544.7 838 544.8 843 544.9 848 545 853 545.1 858 545.2 863 545.4 868 545.5 873 545.5 878 545.6 883 545.7 888 545.8 893 545.9 898 546 903 546 908 546.1 913 546.2 918 546.3 923 546.4 928 546.5 933 546.5 938 546.4 943 546.3 948 546.2 953 546.2 958 546.1 963 546 968 546 973 545.9 978 545.8 983 545.7 988 545.7 993 545.6 998 545.5 1003 545.5 1008 545.5 1013 545.6 1018 545.6 1023 545.6 1028 545.7 1033 545.7 1038 545.7 1043 545.8 1048 545.8 1053 545.8 1058 545.9 1063 545.9 1068 545.9 1073 546 1075.5 546 1078 546 1083 546 1083.2 546.1 1088 546.1 1090.9 546.2 1093 546.2 1098 546.3 1098.6 546.3 1103 546.4 1106.3 546.4 1108 546.5 1113 546.8 1114 546.9 1118 547.2 1121.7 547.3 1123 547.2 1128 546.8 1129.4 546.7 1133 546.1 1137.1 545.7 1138 545.5 1143 543 1144.8 542.4 1148 540.9 1152.5 539.3 1153 538.9 1158 536.8 1160.2 535.7 1163 534.4 1167.9 532.6 1168 532.5 1173 530.7" stroke="#ec00ff" stroke-width="2.00"/><path d="M738 542 743 542.2 748 542.5 753 542.7 758 542.9 763 543.1 768 543.2 773 543.3 778 543.5 783 543.6 788 543.7 793 543.8 798 544 803 544.1 808 544.2 813 544.3 818 544.4 823 544.5 828 544.6 833 544.7 838 544.8 843 544.9 848 545 853 545.1 858 545.2 863 545.4 868 545.5 873 545.5 878 545.6 883 545.7 888 545.8 893 545.9 898 546 903 546 908 546.1 913 546.2 918 546.3 923 546.4 928 546.5 933 546.5 938 546.4 943 546.3 948 546.2 953 546.2 958 546.1 963 546 968 546 973 545.9 978 545.8 983 545.7 988 545.7 993 545.6 998 545.5 1003 545.5 1008 545.5 1013 545.6 1018 545.6 1023 545.6 1028 545.7 1033 545.7 1038 545.7 1043 545.8 1048 545.8 1053 545.8 1058 545.9 1063 545.9 1068 545.9 1073 546 1077.4 546 1078 546 1083 546 1085.2 546.1 1088 546.1 1092.9 546.2 1093 546.2 1098 546.3 1100.6 546.3 1103 546.4 1108 546.5 1108.3 546.5 1113 546.8 1116.1 547.1 1118 547.2 1123 547.4 1123.8 547.4 1128 547 1131.5 546.9 1133 546.6 1138 545.5 1139.2 545 1143 543.7 1147 541.9 1148 541.9 1153 539.7 1154.7 538.4 1158 537.4 1162.4 534.6 1163 535.1 1168 533.4 1170.1 532.3 1173 531.7" stroke="#cc00ff" stroke-width="2.00"/><path d="M738 542 743 542.2 748 542.5 753 542.7 758 542.9 763 543.1 768 543.2 773 543.3 778 543.5 783 543.6 788 543.7 793 543.8 798 544 803 544.1 808 544.2 813 544.3 818 544.4 823 544.5 828 544.6 833 544.7 838 544.8 843 544.9 848 545 853 545.1 858 545.2 863 545.4 868 545.5 873 545.5 878 545.6 883 545.7 888 545.8 893 545.9 898 546 903 546 908 546.1 913 546.2 918 546.3 923 546.4 928 546.5 933 546.5 938 546.4 943 546.3 948 546.2 953 546.2 958 546.1 963 546 968 546 973 545.9 978 545.8 983 545.7 988 545.7 993 545.6 998 545.5 1003 545.5 1008 545.5 1013 545.6 1018 545.6 1023 545.6 1028 545.7 1033 545.7 1038 545.7 1043 545.8 1048 545.8 1053 545.8 1058 545.9 1063 545.9 1068 545.9 1073 546 1078 546 1079.3 546 1083 546 1087.1 546.1 1088 546.1 1093 546.2 1094.9 546.2 1098 546.3 1102.6 546.4 1103 546.4 1108 546.5 1110.4 546.5 1113 546.8 1118 547.2 1118.1 547.2 1123 547.6 1125.9 547.4 1128 547.3 1133 546.8 1133.6 546.7 1138 546 1141.4 544.5 1143 544 1148 541.7 1149.1 542.4 1153 539.9 1156.9 538.4 1158 537.7 1163 535.5 1164.6 535.2 1168 533.7 1172.4 531.5 1173 531.5" stroke="#ac00ff" stroke-width="2.00"/><path d="M738 542 743 542.2 748 542.5 753 542.7 758 542.9 763 543.1 768 543.2 773 543.3 778 543.5 783 543.6 788 543.7 793 543.8 798 544 803 544.1 808 544.2 813 544.3 818 544.4 823 544.5 828 544.6 833 544.7 838 544.8 843 544.9 848 545 853 545.1 858 545.2 863 545.4 868 545.5 873 545.5 878 545.6 883 545.7 888 545.8 893 545.9 898 546 903 546 908 546.1 913 546.2 918 546.3 923 546.4 928 546.5 933 546.5 938 546.4 943 546.3 948 546.2 953 546.2 958 546.1 963 546 968 546 973 545.9 978 545.8 983 545.7 988 545.7 993 545.6 998 545.5 1003 545.5 1008 545.5 1013 545.6 1018 545.6 1023 545.6 1028 545.7 1033 545.7 1038 545.7 1043 545.8 1048 545.8 1053 545.8 1058 545.9 1063 545.9 1068 545.9 1073 546 1078 546 1081.3 546 1083 546 1088 546.1 1089 546.1 1093 546.2 1096.8 546.3 1098 546.3 1103 546.4 1104.6 546.4 1108 546.5 1112.4 546.7 1113 546.8 1118 547.2 1120.2 547.4 1123 547.6 1127.9 547.5 1128 547.5 1133 547 1135.7 546.8 1138 546.5 1143 544 1143.5 543.8 1148 542.2 1151.3 541 1153 540.4 1158 537.6 1159.1 537.8 1163 536.6 1166.8 534.8 1168 534.1 1173 531.6" stroke="#8c00ff" stroke-width="2.00"/><path d="M738 542 743 542.2 748 542.5 753 542.7 758 542.9 763 543.1 768 543.2 773 543.3 778 543.5 783 543.6 788 543.7 793 543.8 798 544 803 544.1 808 544.2 813 544.3 818 544.4 823 544.5 828 544.6 833 544.7 838 544.8 843 544.9 848 545 853 545.1 858 545.2 863 545.4 868 545.5 873 545.5 878 545.6 883 545.7 888 545.8 893 545.9 898 546 903 546 908 546.1 913 546.2 918 546.3 923 546.4 928 546.5 933 546.5 938 546.4 943 546.3 948 546.2 953 546.2 958 546.1 963 546 968 546 973 545.9 978 545.8 983 545.7 988 545.7 993 545.6 998 545.5 1003 545.5 1008 545.5 1013 545.6 1018 545.6 1023 545.6 1028 545.7 1033 545.7 1038 545.7 1043 545.8 1048 545.8 1053 545.8 1058 545.9 1063 545.9 1068 545.9 1073 546 1078 546 1083 546 1083.2 546.1 1088 546.1 1091 546.2 1093 546.2 1098 546.3 1098.8 546.3 1103 546.4 1106.6 546.4 1108 546.5 1113 546.8 1114.4 546.9 1118 547.2 1122.2 547.5 1123 547.6 1128 547.7 1130 547.5 1133 547.3 1137.8 546.5 1138 546.6 1143 544.7 1145.6 543.6 1148 542.6 1153 539.9 1153.4 539.8 1158 538.6 1161.2 537.1 1163 536.4 1168 534.2 1169 534.4 1173 532.3" stroke="#6c00ff" stroke-width="2.00"/><path d="M738 542 743 542.2 748 542.5 753 542.7 758 542.9 763 543.1 768 543.2 773 543.3 778 543.5 783 543.6 788 543.7 793 543.8 798 544 803 544.1 808 544.2 813 544.3 818 544.4 823 544.5 828 544.6 833 544.7 838 544.8 843 544.9 848 545 853 545.1 858 545.2 863 545.4 868 545.5 873 545.5 878 545.6 883 545.7 888 545.8 893 545.9 898 546 903 546 908 546.1 913 546.2 918 546.3 923 546.4 928 546.5 933 546.5 938 546.4 943 546.3 948 546.2 953 546.2 958 546.1 963 546 968 546 973 545.9 978 545.8 983 545.7 988 545.7 993 545.6 998 545.5 1003 545.5 1008 545.5 1013 545.6 1018 545.6 1023 545.6 1028 545.7 1033 545.7 1038 545.7 1043 545.8 1048 545.8 1053 545.8 1058 545.9 1063 545.9 1068 545.9 1073 546 1078 546 1083 546 1085.1 546.1 1088 546.1 1092.9 546.2 1093 546.2 1098 546.3 1100.8 546.3 1103 546.4 1108 546.5 1108.6 546.5 1113 546.8 1116.4 547.1 1118 547.2 1123 547.6 1124.3 547.6 1128 547.7 1132.1 547.6 1133 547.5 1138 546.7 1139.9 546.1 1143 545.1 1147.8 543.2 1148 543.1 1153 541 1155.6 539.8 1158 539.1 1163 536.9 1163.4 536.8 1168 535.3 1171.3 533 1173 532.4" stroke="#4c00ff" stroke-width="2.00"/><path d="M738 542 743 542.2 748 542.5 753 542.7 758 542.9 763 543.1 768 543.2 773 543.3 778 543.5 783 543.6 788 543.7 793 543.8 798 544 803 544.1 808 544.2 813 544.3 818 544.4 823 544.5 828 544.6 833 544.7 838 544.8 843 544.9 848 545 853 545.1 858 545.2 863 545.4 868 545.5 873 545.5 878 545.6 883 545.7 888 545.8 893 545.9 898 546 903 546 908 546.1 913 546.2 918 546.3 923 546.4 928 546.5 933 546.5 938 546.4 943 546.3 948 546.2 953 546.2 958 546.1 963 546 968 546 973 545.9 978 545.8 983 545.7 988 545.7 993 545.6 998 545.5 1003 545.5 1008 545.5 1013 545.6 1018 545.6 1023 545.6 1028 545.7 1033 545.7 1038 545.7 1043 545.8 1048 545.8 1053 545.8 1058 545.9 1063 545.9 1068 545.9 1073 546 1078 546 1083 546 1087 546.1 1088 546.1 1093 546.2 1094.9 546.2 1098 546.3 1102.7 546.4 1103 546.4 1108 546.5 1110.6 546.6 1113 546.8 1118 547.2 1118.5 547.3 1123 547.6 1126.3 547.7 1128 547.7 1133 547.8 1134.2 547.7 1138 547 1142 545.5 1143 545.1 1148 543.5 1149.9 542.7 1153 540.9 1157.7 539.7 1158 539 1163 537.1 1165.6 536.7 1168 535.1 1173 533.5" stroke="#2d00ff" stroke-width="2.00"/><path d="M738 542 743 542.2 748 542.5 753 542.7 758 542.9 763 543.1 768 543.2 773 543.3 778 543.5 783 543.6 788 543.7 793 543.8 798 544 803 544.1 808 544.2 813 544.3 818 544.4 823 544.5 828 544.6 833 544.7 838 544.8 843 544.9 848 545 853 545.1 858 545.2 863 545.4 868 545.5 873 545.5 878 545.6 883 545.7 888 545.8 893 545.9 898 546 903 546 908 546.1 913 546.2 918 546.3 923 546.4 928 546.5 933 546.5 938 546.4 943 546.3 948 546.2 953 546.2 958 546.1 963 546 968 546 973 545.9 978 545.8 983 545.7 988 545.7 993 545.6 998 545.5 1003 545.5 1008 545.5 1013 545.6 1018 545.6 1023 545.6 1028 545.7 1033 545.7 1038 545.7 1043 545.8 1048 545.8 1053 545.8 1058 545.9 1063 545.9 1068 545.9 1073 546 1078 546 1083 546 1088 546.1 1089 546.1 1093 546.2 1096.8 546.3 1098 546.3 1103 546.4 1104.7 546.4 1108 546.5 1112.6 546.7 1113 546.8 1118 547.2 1120.5 547.5 1123 547.6 1128 547.7 1128.4 547.7 1133 547.9 1136.3 547.7 1138 547.2 1143 545.4 1144.1 545.1 1148 543.7 1152 542 1153 541.9 1158 539.6 1159.9 539 1163 537.5 1167.8 535.8 1168 535.8 1173 533.8" stroke="#0d00ff" stroke-width="2.00"/><path d="M738 542 743 542.2 748 542.5 753 542.7 758 542.9 763 543.1 768 543.2 773 543.3 778 543.5 783 543.6 788 543.7 793 543.8 798 544 803 544.1 808 544.2 813 544.3 818 544.4 823 544.5 828 544.6 833 544.7 838 544.8 843 544.9 848 545 853 545.1 858 545.2 863 545.4 868 545.5 873 545.5 878 545.6 883 545.7 888 545.8 893 545.9 898 546 903 546 908 546.1 913 546.2 918 546.3 923 546.4 928 546.5 933 546.5 938 546.4 943 546.3 948 546.2 953 546.2 958 546.1 963 546 968 546 973 545.9 978 545.8 983 545.7 988 545.7 993 545.6 998 545.5 1003 545.5 1008 545.5 1013 545.6 1018 545.6 1023 545.6 1028 545.7 1033 545.7 1038 545.7 1043 545.8 1048 545.8 1053 545.8 1058 545.9 1063 545.9 1068 545.9 1073 546 1078 546 1083 546 1088 546.1 1090.9 546.2 1093 546.2 1098 546.3 1098.8 546.3 1103 546.4 1106.7 546.4 1108 546.5 1113 546.8 1114.6 546.9 1118 547.2 1122.5 547.5 1123 547.6 1128 547.7 1130.4 547.8 1133 547.9 1138 547.5 1138.3 547.4 1143 545.7 1146.2 544.6 1148 543.9 1153 541.8 1154.2 541.4 1158 540 1162.1 538.5 1163 537.9 1168 536.4 1170 535.3 1173 534.2" stroke="#0013ff" stroke-width="2.00"/><path d="M738 542 743 542.2 748 542.5 753 542.7 758 542.9 763 543.1 768 543.2 773 543.3 778 543.5 783 543.6 788 543.7 793 543.8 798 544 803 544.1 808 544.2 813 544.3 818 544.4 823 544.5 828 544.6 833 544.7 838 544.8 843 544.9 848 545 853 545.1 858 545.2 863 545.4 868 545.5 873 545.5 878 545.6 883 545.7 888 545.8 893 545.9 898 546 903 546 908 546.1 913 546.2 918 546.3 923 546.4 928 546.5 933 546.5 938 546.4 943 546.3 948 546.2 953 546.2 958 546.1 963 546 968 546 973 545.9 978 545.8 983 545.7 988 545.7 993 545.6 998 545.5 1003 545.5 1008 545.5 1013 545.6 1018 545.6 1023 545.6 1028 545.7 1033 545.7 1038 545.7 1043 545.8 1048 545.8 1053 545.8 1058 545.9 1063 545.9 1068 545.9 1073 546 1078 546 1083 546 1088 546.1 1092.8 546.2 1093 546.2 1098 546.3 1100.7 546.3 1103 546.4 1108 546.5 1108.7 546.5 1113 546.8 1116.6 547.1 1118 547.2 1123 547.6 1124.5 547.6 1128 547.7 1132.5 547.9 1133 547.9 1138 547.7 1140.4 546.9 1143 545.9 1148 543.9 1148.4 543.8 1153 542.2 1156.3 540.8 1158 540.3 1163 538.7 1164.2 538.3 1168 536 1172.2 534.9 1173 534.2" stroke="#0033ff" stroke-width="2.00"/><path d="M738 542 743 542.2 748 542.5 753 542.7 758 542.9 763 543.1 768 543.2 773 543.3 778 543.5 783 543.6 788 543.7 793 543.8 798 544 803 544.1 808 544.2 813 544.3 818 544.4 823 544.5 828 544.6 833 544.7 838 544.8 843 544.9 848 545 853 545.1 858 545.2 863 545.4 868 545.5 873 545.5 878 545.6 883 545.7 888 545.8 893 545.9 898 546 903 546 908 546.1 913 546.2 918 546.3 923 546.4 928 546.5 933 546.5 938 546.4 943 546.3 948 546.2 953 546.2 958 546.1 963 546 968 546 973 545.9 978 545.8 983 545.7 988 545.7 993 545.6 998 545.5 1003 545.5 1008 545.5 1013 545.6 1018 545.6 1023 545.6 1028 545.7 1033 545.7 1038 545.7 1043 545.8 1048 545.8 1053 545.8 1058 545.9 1063 545.9 1068 545.9 1073 546 1078 546 1083 546 1088 546.1 1093 546.2 1094.7 546.2 1098 546.3 1102.7 546.4 1103 546.4 1108 546.5 1110.6 546.6 1113 546.8 1118 547.2 1118.6 547.3 1123 547.6 1126.6 547.7 1128 547.7 1133 547.9 1134.5 547.9 1138 547.7 1142.5 546.3 1143 546.2 1148 544.3 1150.5 543.4 1153 542.5 1158 540.7 1158.4 540.6 1163 538.7 1166.4 537.4 1168 536.7 1173 534.9" stroke="#0053ff" stroke-width="2.00"/><path d="M738 542 743 542.2 748 542.5 753 542.7 758 542.9 763 543.1 768 543.2 773 543.3 778 543.5 783 543.6 788 543.7 793 543.8 798 544 803 544.1 808 544.2 813 544.3 818 544.4 823 544.5 828 544.6 833 544.7 838 544.8 843 544.9 848 545 853 545.1 858 545.2 863 545.4 868 545.5 873 545.5 878 545.6 883 545.7 888 545.8 893 545.9 898 546 903 546 908 546.1 913 546.2 918 546.3 923 546.4 928 546.5 933 546.5 938 546.4 943 546.3 948 546.2 953 546.2 958 546.1 963 546 968 546 973 545.9 978 545.8 983 545.7 988 545.7 993 545.6 998 545.5 1003 545.5 1008 545.5 1013 545.6 1018 545.6 1023 545.6 1028 545.7 1033 545.7 1038 545.7 1043 545.8 1048 545.8 1053 545.8 1058 545.9 1063 545.9 1068 545.9 1073 546 1078 546 1083 546 1088 546.1 1093 546.2 1096.6 546.3 1098 546.3 1103 546.4 1104.6 546.4 1108 546.5 1112.6 546.7 1113 546.8 1118 547.2 1120.6 547.5 1123 547.6 1128 547.7 1128.6 547.7 1133 547.9 1136.6 548 1138 547.7 1143 546.4 1144.6 545.8 1148 544.6 1152.6 542.9 1153 542.9 1158 540.8 1160.6 539.9 1163 538.9 1168 537.4 1168.5 537.2 1173 535.2" stroke="#0073ff" stroke-width="2.00"/><path d="M738 542 743 542.2 748 542.5 753 542.7 758 542.9 763 543.1 768 543.2 773 543.3 778 543.5 783 543.6 788 543.7 793 543.8 798 544 803 544.1 808 544.2 813 544.3 818 544.4 823 544.5 828 544.6 833 544.7 838 544.8 843 544.9 848 545 853 545.1 858 545.2 863 545.4 868 545.5 873 545.5 878 545.6 883 545.7 888 545.8 893 545.9 898 546 903 546 908 546.1 913 546.2 918 546.3 923 546.4 928 546.5 933 546.5 938 546.4 943 546.3 948 546.2 953 546.2 958 546.1 963 546 968 546 973 545.9 978 545.8 983 545.7 988 545.7 993 545.6 998 545.5 1003 545.5 1008 545.5 1013 545.6 1018 545.6 1023 545.6 1028 545.7 1033 545.7 1038 545.7 1043 545.8 1048 545.8 1053 545.8 1058 545.9 1063 545.9 1068 545.9 1073 546 1078 546 1083 546 1088 546.1 1093 546.2 1098 546.3 1098.6 546.3 1103 546.4 1106.6 546.4 1108 546.5 1113 546.8 1114.6 546.9 1118 547.2 1122.6 547.5 1123 547.6 1128 547.7 1130.6 547.8 1133 547.9 1138 547.7 1138.6 547.6 1143 546.4 1146.7 545.3 1148 544.8 1153 543.1 1154.7 542.2 1158 541.2 1162.7 539.4 1163 539.3 1168 537.3 1170.7 536.9 1173 535.6" stroke="#0093ff" stroke-width="2.00"/><path d="M738 542 743 542.2 748 542.5 753 542.7 758 542.9 763 543.1 768 543.2 773 543.3 778 543.5 783 543.6 788 543.7 793 543.8 798 544 803 544.1 808 544.2 813 544.3 818 544.4 823 544.5 828 544.6 833 544.7 838 544.8 843 544.9 848 545 853 545.1 858 545.2 863 545.4 868 545.5 873 545.5 878 545.6 883 545.7 888 545.8 893 545.9 898 546 903 546 908 546.1 913 546.2 918 546.3 923 546.4 928 546.5 933 546.5 938 546.4 943 546.3 948 546.2 953 546.2 958 546.1 963 546 968 546 973 545.9 978 545.8 983 545.7 988 545.7 993 545.6 998 545.5 1003 545.5 1008 545.5 1013 545.6 1018 545.6 1023 545.6 1028 545.7 1033 545.7 1038 545.7 1043 545.8 1048 545.8 1053 545.8 1058 545.9 1063 545.9 1068 545.9 1073 546 1078 546 1083 546 1088 546.1 1093 546.2 1098 546.3 1100.5 546.3 1103 546.4 1108 546.5 1108.5 546.5 1113 546.8 1116.6 547.1 1118 547.2 1123 547.6 1124.6 547.6 1128 547.7 1132.7 547.9 1133 547.9 1138 547.7 1140.7 547 1143 546.4 1148 545 1148.7 544.7 1153 543.1 1156.8 541.9 1158 541.4 1163 539.6 1164.8 539.3 1168 537 1172.9 535.9 1173 535.7" stroke="#00b2ff" stroke-width="2.00"/><path d="M738 542 743 542.2 748 542.5 753 542.7 758 542.9 763 543.1 768 543.2 773 543.3 778 543.5 783 543.6 788 543.7 793 543.8 798 544 803 544.1 808 544.2 813 544.3 818 544.4 823 544.5 828 544.6 833 544.7 838 544.8 843 544.9 848 545 853 545.1 858 545.2 863 545.4 868 545.5 873 545.5 878 545.6 883 545.7 888 545.8 893 545.9 898 546 903 546 908 546.1 913 546.2 918 546.3 923 546.4 928 546.5 933 546.5 938 546.4 943 546.3 948 546.2 953 546.2 958 546.1 963 546 968 546 973 545.9 978 545.8 983 545.7 988 545.7 993 545.6 998 545.5 1003 545.5 1008 545.5 1013 545.6 1018 545.6 1023 545.6 1028 545.7 1033 545.7 1038 545.7 1043 545.8 1048 545.8 1053 545.8 1058 545.9 1063 545.9 1068 545.9 1073 546 1078 546 1083 546 1088 546.1 1093 546.2 1098 546.3 1102.4 546.4 1103 546.4 1108 546.5 1110.5 546.5 1113 546.8 1118 547.2 1118.6 547.3 1123 547.6 1126.6 547.7 1128 547.7 1133 547.9 1134.7 547.9 1138 547.7 1142.8 546.5 1143 546.4 1148 545.1 1150.8 544.2 1153 543.4 1158 541.6 1158.9 541.3 1163 539.9 1167 538.1 1168 538 1173 536.3" stroke="#00d2ff" stroke-width="2.00"/><path d="M738 542 743 542.2 748 542.5 753 542.7 758 542.9 763 543.1 768 543.2 773 543.3 778 543.5 783 543.6 788 543.7 793 543.8 798 544 803 544.1 808 544.2 813 544.3 818 544.4 823 544.5 828 544.6 833 544.7 838 544.8 843 544.9 848 545 853 545.1 858 545.2 863 545.4 868 545.5 873 545.5 878 545.6 883 545.7 888 545.8 893 545.9 898 546 903 546 908 546.1 913 546.2 918 546.3 923 546.4 928 546.5 933 546.5 938 546.4 943 546.3 948 546.2 953 546.2 958 546.1 963 546 968 546 973 545.9 978 545.8 983 545.7 988 545.7 993 545.6 998 545.5 1003 545.5 1008 545.5 1013 545.6 1018 545.6 1023 545.6 1028 545.7 1033 545.7 1038 545.7 1043 545.8 1048 545.8 1053 545.8 1058 545.9 1063 545.9 1068 545.9 1073 546 1078 546 1083 546 1088 546.1 1093 546.2 1098 546.3 1103 546.4 1104.4 546.4 1108 546.5 1112.4 546.7 1113 546.8 1118 547.2 1120.5 547.5 1123 547.6 1128 547.7 1128.6 547.7 1133 547.9 1136.7 548 1138 547.7 1143 546.4 1144.8 546 1148 545.1 1152.9 543.6 1153 543.6 1158 541.8 1161 540.6 1163 540 1168 538.2 1169.1 538 1173 536.4" stroke="#00f2ff" stroke-width="2.00"/><path d="M738 542 743 542.2 748 542.5 753 542.7 758 542.9 763 543.1 768 543.2 773 543.3 778 543.5 783 543.6 788 543.7 793 543.8 798 544 803 544.1 808 544.2 813 544.3 818 544.4 823 544.5 828 544.6 833 544.7 838 544.8 843 544.9 848 545 853 545.1 858 545.2 863 545.4 868 545.5 873 545.5 878 545.6 883 545.7 888 545.8 893 545.9 898 546 903 546 908 546.1 913 546.2 918 546.3 923 546.4 928 546.5 933 546.5 938 546.4 943 546.3 948 546.2 953 546.2 958 546.1 963 546 968 546 973 545.9 978 545.8 983 545.7 988 545.7 993 545.6 998 545.5 1003 545.5 1008 545.5 1013 545.6 1018 545.6 1023 545.6 1028 545.7 1033 545.7 1038 545.7 1043 545.8 1048 545.8 1053 545.8 1058 545.9 1063 545.9 1068 545.9 1073 546 1078 546 1083 546 1088 546.1 1093 546.2 1098 546.3 1103 546.4 1106.3 546.4 1108 546.5 1113 546.8 1114.4 546.9 1118 547.2 1122.5 547.5 1123 547.6 1128 547.7 1130.6 547.8 1133 547.9 1138 547.7 1138.7 547.6 1143 546.4 1146.9 545.4 1148 545.1 1153 543.8 1155 543.1 1158 542 1163 540.3 1163.1 540.3 1168 538.6 1171.2 537.5 1173 536.7" stroke="#00ffec" stroke-width="2.00"/><path d="M738 542 743 542.2 748 542.5 753 542.7 758 542.9 763 543.1 768 543.2 773 543.3 778 543.5 783 543.6 788 543.7 793 543.8 798 544 803 544.1 808 544.2 813 544.3 818 544.4 823 544.5 828 544.6 833 544.7 838 544.8 843 544.9 848 545 853 545.1 858 545.2 863 545.4 868 545.5 873 545.5 878 545.6 883 545.7 888 545.8 893 545.9 898 546 903 546 908 546.1 913 546.2 918 546.3 923 546.4 928 546.5 933 546.5 938 546.4 943 546.3 948 546.2 953 546.2 958 546.1 963 546 968 546 973 545.9 978 545.8 983 545.7 988 545.7 993 545.6 998 545.5 1003 545.5 1008 545.5 1013 545.6 1018 545.6 1023 545.6 1028 545.7 1033 545.7 1038 545.7 1043 545.8 1048 545.8 1053 545.8 1058 545.9 1063 545.9 1068 545.9 1073 546 1078 546 1083 546 1088 546.1 1093 546.2 1098 546.3 1103 546.4 1108 546.5 1108.2 546.5 1113 546.8 1116.3 547.1 1118 547.2 1123 547.6 1124.5 547.6 1128 547.7 1132.6 547.9 1133 547.9 1138 547.7 1140.8 547 1143 546.4 1148 545.1 1148.9 544.9 1153 543.8 1157.1 542.6 1158 542.3 1163 540.4 1165.2 539.9 1168 538.9 1173 536.7" stroke="#00ffcc" stroke-width="2.00"/><path d="M738 542 743 542.2 748 542.5 753 542.7 758 542.9 763 543.1 768 543.2 773 543.3 778 543.5 783 543.6 788 543.7 793 543.8 798 544 803 544.1 808 544.2 813 544.3 818 544.4 823 544.5 828 544.6 833 544.7 838 544.8 843 544.9 848 545 853 545.1 858 545.2 863 545.4 868 545.5 873 545.5 878 545.6 883 545.7 888 545.8 893 545.9 898 546 903 546 908 546.1 913 546.2 918 546.3 923 546.4 928 546.5 933 546.5 938 546.4 943 546.3 948 546.2 953 546.2 958 546.1 963 546 968 546 973 545.9 978 545.8 983 545.7 988 545.7 993 545.6 998 545.5 1003 545.5 1008 545.5 1013 545.6 1018 545.6 1023 545.6 1028 545.7 1033 545.7 1038 545.7 1043 545.8 1048 545.8 1053 545.8 1058 545.9 1063 545.9 1068 545.9 1073 546 1078 546 1083 546 1088 546.1 1093 546.2 1098 546.3 1103 546.4 1108 546.5 1110.1 546.5 1113 546.8 1118 547.2 1118.3 547.3 1123 547.6 1126.5 547.7 1128 547.7 1133 547.9 1134.6 547.9 1138 547.7 1142.8 546.5 1143 546.4 1148 545.1 1151 544.3 1153 543.8 1158 542.4 1159.1 542.1 1163 540.6 1167.3 539.3 1168 539.1 1173 537.1" stroke="#00ffac" stroke-width="2.00"/><path d="M738 542 743 542.2 748 542.5 753 542.7 758 542.9 763 543.1 768 543.2 773 543.3 778 543.5 783 543.6 788 543.7 793 543.8 798 544 803 544.1 808 544.2 813 544.3 818 544.4 823 544.5 828 544.6 833 544.7 838 544.8 843 544.9 848 545 853 545.1 858 545.2 863 545.4 868 545.5 873 545.5 878 545.6 883 545.7 888 545.8 893 545.9 898 546 903 546 908 546.1 913 546.2 918 546.3 923 546.4 928 546.5 933 546.5 938 546.4 943 546.3 948 546.2 953 546.2 958 546.1 963 546 968 546 973 545.9 978 545.8 983 545.7 988 545.7 993 545.6 998 545.5 1003 545.5 1008 545.5 1013 545.6 1018 545.6 1023 545.6 1028 545.7 1033 545.7 1038 545.7 1043 545.8 1048 545.8 1053 545.8 1058 545.9 1063 545.9 1068 545.9 1073 546 1078 546 1083 546 1088 546.1 1093 546.2 1098 546.3 1103 546.4 1108 546.5 1112.1 546.7 1113 546.8 1118 547.2 1120.3 547.4 1123 547.6 1128 547.7 1128.5 547.7 1133 547.9 1136.6 548 1138 547.7 1143 546.4 1144.8 546 1148 545.1 1153 543.8 1158 542.5 1161.2 541.5 1163 540.8 1168 539.1 1169.4 538.5 1173 537.4" stroke="#00ff8c" stroke-width="2.00"/><path d="M738 542 743 542.2 748 542.5 753 542.7 758 542.9 763 543.1 768 543.2 773 543.3 778 543.5 783 543.6 788 543.7 793 543.8 798 544 803 544.1 808 544.2 813 544.3 818 544.4 823 544.5 828 544.6 833 544.7 838 544.8 843 544.9 848 545 853 545.1 858 545.2 863 545.4 868 545.5 873 545.5 878 545.6 883 545.7 888 545.8 893 545.9 898 546 903 546 908 546.1 913 546.2 918 546.3 923 546.4 928 546.5 933 546.5 938 546.4 943 546.3 948 546.2 953 546.2 958 546.1 963 546 968 546 973 545.9 978 545.8 983 545.7 988 545.7 993 545.6 998 545.5 1003 545.5 1008 545.5 1013 545.6 1018 545.6 1023 545.6 1028 545.7 1033 545.7 1038 545.7 1043 545.8 1048 545.8 1053 545.8 1058 545.9 1063 545.9 1068 545.9 1073 546 1078 546 1083 546 1088 546.1 1093 546.2 1098 546.3 1103 546.4 1108 546.5 1113 546.8 1114 546.9 1118 547.2 1122.2 547.5 1123 547.6 1128 547.7 1130.4 547.8 1133 547.9 1138 547.7 1138.7 547.6 1143 546.4 1146.9 545.4 1148 545.1 1153 543.8 1155.1 543.3 1158 542.5 1163 541 1163.3 540.9 1168 539.2 1171.5 538 1173 537.6" stroke="#00ff6c" stroke-width="2.00"/><path d="M738 542 743 542.2 748 542.5 753 542.7 758 542.9 763 543.1 768 543.2 773 543.3 778 543.5 783 543.6 788 543.7 793 543.8 798 544 803 544.1 808 544.2 813 544.3 818 544.4 823 544.5 828 544.6 833 544.7 838 544.8 843 544.9 848 545 853 545.1 858 545.2 863 545.4 868 545.5 873 545.5 878 545.6 883 545.7 888 545.8 893 545.9 898 546 903 546 908 546.1 913 546.2 918 546.3 923 546.4 928 546.5 933 546.5 938 546.4 943 546.3 948 546.2 953 546.2 958 546.1 963 546 968 546 973 545.9 978 545.8 983 545.7 988 545.7 993 545.6 998 545.5 1003 545.5 1008 545.5 1013 545.6 1018 545.6 1023 545.6 1028 545.7 1033 545.7 1038 545.7 1043 545.8 1048 545.8 1053 545.8 1058 545.9 1063 545.9 1068 545.9 1073 546 1078 546 1083 546 1088 546.1 1093 546.2 1098 546.3 1103 546.4 1108 546.5 1113 546.8 1115.9 547 1118 547.2 1123 547.6 1124.2 547.6 1128 547.7 1132.4 547.9 1133 547.9 1138 547.7 1140.7 547 1143 546.4 1148 545.1 1148.9 544.9 1153 543.8 1157.2 542.7 1158 542.5 1163 541.2 1165.4 540.3 1168 539.5 1173 538" stroke="#00ff4d" stroke-width="2.00"/><path d="M738 542 743 542.2 748 542.5 753 542.7 758 542.9 763 543.1 768 543.2 773 543.3 778 543.5 783 543.6 788 543.7 793 543.8 798 544 803 544.1 808 544.2 813 544.3 818 544.4 823 544.5 828 544.6 833 544.7 838 544.8 843 544.9 848 545 853 545.1 858 545.2 863 545.4 868 545.5 873 545.5 878 545.6 883 545.7 888 545.8 893 545.9 898 546 903 546 908 546.1 913 546.2 918 546.3 923 546.4 928 546.5 933 546.5 938 546.4 943 546.3 948 546.2 953 546.2 958 546.1 963 546 968 546 973 545.9 978 545.8 983 545.7 988 545.7 993 545.6 998 545.5 1003 545.5 1008 545.5 1013 545.6 1018 545.6 1023 545.6 1028 545.7 1033 545.7 1038 545.7 1043 545.8 1048 545.8 1053 545.8 1058 545.9 1063 545.9 1068 545.9 1073 546 1078 546 1083 546 1088 546.1 1093 546.2 1098 546.3 1103 546.4 1108 546.5 1113 546.8 1117.8 547.2 1118 547.2 1123 547.6 1126.1 547.7 1128 547.7 1133 547.9 1134.4 547.9 1138 547.7 1142.7 546.5 1143 546.4 1148 545.1 1150.9 544.4 1153 543.8 1158 542.5 1159.2 542.2 1163 541.2 1167.5 539.8 1168 539.6 1173 537.9" stroke="#00ff2d" stroke-width="2.00"/><path d="M738 542 743 542.2 748 542.5 753 542.7 758 542.9 763 543.1 768 543.2 773 543.3 778 543.5 783 543.6 788 543.7 793 543.8 798 544 803 544.1 808 544.2 813 544.3 818 544.4 823 544.5 828 544.6 833 544.7 838 544.8 843 544.9 848 545 853 545.1 858 545.2 863 545.4 868 545.5 873 545.5 878 545.6 883 545.7 888 545.8 893 545.9 898 546 903 546 908 546.1 913 546.2 918 546.3 923 546.4 928 546.5 933 546.5 938 546.4 943 546.3 948 546.2 953 546.2 958 546.1 963 546 968 546 973 545.9 978 545.8 983 545.7 988 545.7 993 545.6 998 545.5 1003 545.5 1008 545.5 1013 545.6 1018 545.6 1023 545.6 1028 545.7 1033 545.7 1038 545.7 1043 545.8 1048 545.8 1053 545.8 1058 545.9 1063 545.9 1068 545.9 1073 546 1078 546 1083 546 1088 546.1 1093 546.2 1098 546.3 1103 546.4 1108 546.5 1113 546.8 1118 547.2 1119.8 547.4 1123 547.6 1128 547.7 1128.1 547.7 1133 547.9 1136.4 548 1138 547.7 1143 546.4 1144.7 546 1148 545.1 1153 543.8 1158 542.5 1161.3 541.6 1163 541.2 1168 539.8 1169.6 539.2 1173 538.1" stroke="#00ff0d" stroke-width="2.00"/><path d="M738 542 743 542.2 748 542.5 753 542.7 758 542.9 763 543.1 768 543.2 773 543.3 778 543.5 783 543.6 788 543.7 793 543.8 798 544 803 544.1 808 544.2 813 544.3 818 544.4 823 544.5 828 544.6 833 544.7 838 544.8 843 544.9 848 545 853 545.1 858 545.2 863 545.4 868 545.5 873 545.5 878 545.6 883 545.7 888 545.8 893 545.9 898 546 903 546 908 546.1 913 546.2 918 546.3 923 546.4 928 546.5 933 546.5 938 546.4 943 546.3 948 546.2 953 546.2 958 546.1 963 546 968 546 973 545.9 978 545.8 983 545.7 988 545.7 993 545.6 998 545.5 1003 545.5 1008 545.5 1013 545.6 1018 545.6 1023 545.6 1028 545.7 1033 545.7 1038 545.7 1043 545.8 1048 545.8 1053 545.8 1058 545.9 1063 545.9 1068 545.9 1073 546 1078 546 1083 546 1088 546.1 1093 546.2 1098 546.3 1103 546.4 1108 546.5 1113 546.8 1118 547.2 1121.7 547.5 1123 547.6 1128 547.7 1130 547.8 1133 547.9 1138 547.7 1138.4 547.6 1143 546.4 1146.7 545.5 1148 545.1 1153 543.8 1155 543.3 1158 542.5 1163 541.2 1163.3 541.1 1168 539.8 1171.6 538.7 1173 538.2" stroke="#13ff00" stroke-width="2.00"/><path d="M738 542 743 542.2 748 542.5 753 542.7 758 542.9 763 543.1 768 543.2 773 543.3 778 543.5 783 543.6 788 543.7 793 543.8 798 544 803 544.1 808 544.2 813 544.3 818 544.4 823 544.5 828 544.6 833 544.7 838 544.8 843 544.9 848 545 853 545.1 858 545.2 863 545.4 868 545.5 873 545.5 878 545.6 883 545.7 888 545.8 893 545.9 898 546 903 546 908 546.1 913 546.2 918 546.3 923 546.4 928 546.5 933 546.5 938 546.4 943 546.3 948 546.2 953 546.2 958 546.1 963 546 968 546 973 545.9 978 545.8 983 545.7 988 545.7 993 545.6 998 545.5 1003 545.5 1008 545.5 1013 545.6 1018 545.6 1023 545.6 1028 545.7 1033 545.7 1038 545.7 1043 545.8 1048 545.8 1053 545.8 1058 545.9 1063 545.9 1068 545.9 1073 546 1078 546 1083 546 1088 546.1 1093 546.2 1098 546.3 1103 546.4 1108 546.5 1113 546.8 1118 547.2 1123 547.6 1123.6 547.6 1128 547.7 1132 547.8 1133 547.9 1138 547.7 1140.3 547.1 1143 546.4 1148 545.1 1148.7 544.9 1153 543.8 1157 542.8 1158 542.5 1163 541.2 1165.4 540.5 1168 539.8 1173 538.4" stroke="#33ff00" stroke-width="2.00"/><path d="M738 542 743 542.2 748 542.5 753 542.7 758 542.9 763 543.1 768 543.2 773 543.3 778 543.5 783 543.6 788 543.7 793 543.8 798 544 803 544.1 808 544.2 813 544.3 818 544.4 823 544.5 828 544.6 833 544.7 838 544.8 843 544.9 848 545 853 545.1 858 545.2 863 545.4 868 545.5 873 545.5 878 545.6 883 545.7 888 545.8 893 545.9 898 546 903 546 908 546.1 913 546.2 918 546.3 923 546.4 928 546.5 933 546.5 938 546.4 943 546.3 948 546.2 953 546.2 958 546.1 963 546 968 546 973 545.9 978 545.8 983 545.7 988 545.7 993 545.6 998 545.5 1003 545.5 1008 545.5 1013 545.6 1018 545.6 1023 545.6 1028 545.7 1033 545.7 1038 545.7 1043 545.8 1048 545.8 1053 545.8 1058 545.9 1063 545.9 1068 545.9 1073 546 1078 546 1083 546 1088 546.1 1093 546.2 1098 546.3 1103 546.4 1108 546.5 1113 546.8 1118 547.2 1123 547.6 1125.6 547.6 1128 547.7 1133 547.9 1133.9 547.9 1138 547.7 1142.3 546.6 1143 546.4 1148 545.1 1150.7 544.4 1153 543.8 1158 542.5 1159.1 542.2 1163 541.2 1167.4 540 1168 539.8 1173 538.5" stroke="#53ff00" stroke-width="2.00"/><path d="M738 542 743 542.2 748 542.5 753 542.7 758 542.9 763 543.1 768 543.2 773 543.3 778 543.5 783 543.6 788 543.7 793 543.8 798 544 803 544.1 808 544.2 813 544.3 818 544.4 823 544.5 828 544.6 833 544.7 838 544.8 843 544.9 848 545 853 545.1 858 545.2 863 545.4 868 545.5 873 545.5 878 545.6 883 545.7 888 545.8 893 545.9 898 546 903 546 908 546.1 913 546.2 918 546.3 923 546.4 928 546.5 933 546.5 938 546.4 943 546.3 948 546.2 953 546.2 958 546.1 963 546 968 546 973 545.9 978 545.8 983 545.7 988 545.7 993 545.6 998 545.5 1003 545.5 1008 545.5 1013 545.6 1018 545.6 1023 545.6 1028 545.7 1033 545.7 1038 545.7 1043 545.8 1048 545.8 1053 545.8 1058 545.9 1063 545.9 1068 545.9 1073 546 1078 546 1083 546 1088 546.1 1093 546.2 1098 546.3 1103 546.4 1108 546.5 1113 546.8 1118 547.2 1123 547.6 1127.5 547.7 1128 547.7 1133 547.9 1135.9 548 1138 547.7 1143 546.4 1144.3 546.1 1148 545.1 1152.7 543.9 1153 543.8 1158 542.5 1161.1 541.7 1163 541.2 1168 539.8 1169.5 539.4 1173 538.5" stroke="#73ff00" stroke-width="2.00"/><path d="M688.5 541 L690 545.5 L693 547.5 L697 547 L703 545.5 L709 543.5 L714 542 L720 540.5 L726 539.5 L727.5 538" stroke="#ff00ff" stroke-width="2" shape-rendering="crispEdges"/><path d="M676.1 360.4 677.1 384.4 678.1 412 679.6 440 680.6 446.6 681.6 447.3 682.1 457.7 683.1 468.3 684.1 478.5 686.1 505 687.6 527.9 688.5 540.5 690 544 693 545.5 697 545 703 543 709 541 714 539.5 720 538 726 537 727.5 535.5 728.4 500.6 728.9 455.3 730.6 425 731.4 412.9 732.4 431.8 733.1 500.5 733.6 569.5 734.5 566.5 735.5 552.5 737 544.5 738 542.5M1173 499 1173.8 498 1175.9 440 1179.5 330 1180.5 240 1181 200 1181.5 181.7 1185 181.2 1204 180.7" stroke="#6c00ff" stroke-width="1.2" shape-rendering="crispEdges"/><path d="M675.9 360.2 676.9 384.5 677.9 411.7 679.4 440.2 680.4 446 681.4 447.4 681.9 458.3 682.9 467.9 683.9 477.5 685.9 504.6 687.4 528 688.5 540.3 690 543.8 693 545.3 697 544.8 703 542.8 709 540.8 714 539.3 720 537.8 726 536.8 727.5 535.3 728.2 499.2 728.7 455.2 730.4 425.5 731.2 413.2 732.2 432.6 732.9 500.4 733.6 569.3 734.5 566.3 735.5 552.3 737 544.3 738 542.3M1173 499 1173.3 498 1174.6 440 1176.8 330 1177.8 240 1178.3 200 1178.8 182.9 1185 182.4 1204 181.9" stroke="#00ffec" stroke-width="1.2" shape-rendering="crispEdges"/><path d="M676.2 361.3 677.2 385.1 678.2 411.6 679.7 439.9 680.7 445.9 681.7 446.9 682.2 458.4 683.2 468.1 684.2 477.8 686.2 505.4 687.7 527.7 688.6 540.6 690.1 544.1 693.1 545.6 697.1 545.1 703.1 543.1 709.1 541.1 714.1 539.6 720.1 538.1 726.1 537.1 727.6 535.6 728.5 499.6 729 455.2 730.7 425 731.5 413.7 732.5 432.1 733.2 500.7 733.7 569.6 734.6 566.6 735.6 552.6 737.1 544.6 738.1 542.6M1173 499.5 1173.4 498 1175.1 440 1177.7 330 1178.7 240 1179.2 200 1179.7 182.8 1185 182.3 1204 181.8" stroke="#93ff00" stroke-width="1.2" shape-rendering="crispEdges"/><path d="M675.2 361.2 676.2 384.9 677.2 412.2 678.7 440.3 679.7 445.9 680.7 446.7 681.2 458.2 682.2 468 683.2 478.4 685.2 505.1 686.7 528.1 688.3 539.8 689.8 543.3 692.8 544.8 696.8 544.3 702.8 542.3 708.8 540.3 713.8 538.8 719.8 537.3 725.8 536.3 727.3 534.8 727.5 501 728 454.8 729.7 425 730.5 413.4 731.5 431.7 732.2 499.9 733.4 568.8 734.3 565.8 735.3 551.8 736.8 543.8 737.8 541.8M1173 500.4 1173.6 498 1175.5 440 1178.6 330 1179.6 240 1180.1 200 1180.6 180.8 1185 180.3 1204 179.8" stroke="#ff0013" stroke-width="1.2" shape-rendering="crispEdges"/><path d="M676.5 361.1 677.5 384.2 678.5 412.5 680 439.9 681 445.8 682 446.5 682.5 457.9 683.5 468.1 684.5 478.1 686.5 505.1 688 528.3 688.7 539.7 690.2 543.2 693.2 544.7 697.2 544.2 703.2 542.2 709.2 540.2 714.2 538.7 720.2 537.2 726.2 536.2 727.7 534.7 728.8 499.8 729.3 454.9 731 425.3 731.8 413.2 732.8 431.9 733.5 499.3 733.8 568.7 734.7 565.7 735.7 551.7 737.2 543.7 738.2 541.7M1173 501.3 1174 498 1176.3 440 1180.3 330 1181.3 240 1181.8 200 1182.3 181.7 1185 181.2 1204 180.7" stroke="#6c00ff" stroke-width="1.2" shape-rendering="crispEdges"/><path d="M676.4 361.6 677.4 384.6 678.4 411.4 679.9 439.7 680.9 445.4 681.9 446.7 682.4 457.9 683.4 468 684.4 478.2 686.4 504.6 687.9 527.6 688.6 539 690.1 542.5 693.1 544 697.1 543.5 703.1 541.5 709.1 539.5 714.1 538 720.1 536.5 726.1 535.5 727.6 534 728.7 499.9 729.2 455.5 730.9 425.5 731.7 413.8 732.7 431.3 733.4 500.2 733.7 568 734.6 565 735.6 551 737.1 543 738.1 541M1173 503.3 1173.1 498 1174.3 440 1176.1 330 1177.1 240 1177.6 200 1178.1 182 1185 181.5 1204 181" stroke="#00ffec" stroke-width="1.2" shape-rendering="crispEdges"/><path d="M675.8 361.7 676.8 385.2 677.8 411.9 679.3 440.5 680.3 446 681.3 446.9 681.8 457.3 682.8 468.3 683.8 477.6 685.8 505.5 687.3 528.2 688.5 541 690 544.5 693 546 697 545.5 703 543.5 709 541.5 714 540 720 538.5 726 537.5 727.5 536 728.1 500.1 728.6 454.7 730.3 425.6 731.1 412.1 732.1 432.8 732.8 499.9 733.6 570 734.5 567 735.5 553 737 545 738 543M1173 504.3 1173.7 498 1175.7 440 1179.2 330 1180.2 240 1180.7 200 1181.2 181.5 1185 181 1204 180.5" stroke="#93ff00" stroke-width="1.2" shape-rendering="crispEdges"/><path d="M675.7 361.1 676.7 384.7 677.7 411.4 679.2 440.6 680.2 446.6 681.2 446.7 681.7 458.1 682.7 468.2 683.7 477.5 685.7 505.3 687.2 528.1 688.4 538.4 689.9 541.9 692.9 543.4 696.9 542.9 702.9 540.9 708.9 538.9 713.9 537.4 719.9 535.9 725.9 534.9 727.4 533.4 728 499.5 728.5 455.2 730.2 425.6 731 413.2 732 432.1 732.7 500.3 733.5 567.4 734.4 564.4 735.4 550.4 736.9 542.4 737.9 540.4M1173 505.1 1173.2 498 1174.5 440 1176.6 330 1177.6 240 1178.1 200 1178.6 181.6 1185 181.1 1204 180.6" stroke="#ff0013" stroke-width="1.2" shape-rendering="crispEdges"/><path d="M675.4 361.8 676.4 385.6 677.4 411.9 678.9 439.6 679.9 446.2 680.9 447.2 681.4 457 682.4 467.7 683.4 478 685.4 504.8 686.9 528.2 688.3 539 689.8 542.5 692.8 544 696.8 543.5 702.8 541.5 708.8 539.5 713.8 538 719.8 536.5 725.8 535.5 727.3 534 727.7 499.8 728.2 454.7 729.9 425 730.7 412.8 731.7 431.8 732.4 500.1 733.4 568 734.3 565 735.3 551 736.8 543 737.8 541M1173 506.8 1173.3 498 1174.7 440 1176.9 330 1177.9 240 1178.4 200 1178.9 180.7 1185 180.2 1204 179.7" stroke="#6c00ff" stroke-width="1.2" shape-rendering="crispEdges"/><path d="M676.6 360.4 677.6 385 678.6 411.8 680.1 440 681.1 445.8 682.1 447.6 682.6 457.9 683.6 468.3 684.6 477.7 686.6 504.1 688.1 527.6 688.7 539.5 690.2 543 693.2 544.5 697.2 544 703.2 542 709.2 540 714.2 538.5 720.2 537 726.2 536 727.7 534.5 728.9 499.9 729.4 454.9 731.1 424.9 731.9 413 732.9 431.6 733.6 500.4 733.8 568.5 734.7 565.5 735.7 551.5 737.2 543.5 738.2 541.5M1173 508.2 1173.3 498 1174.8 440 1177.2 330 1178.2 240 1178.7 200 1179.2 180.9 1185 180.4 1204 179.9" stroke="#00ffec" stroke-width="1.2" shape-rendering="crispEdges"/><path d="M676.4 360.7 677.4 385.7 678.4 412.2 679.9 441 680.9 446.4 681.9 447 682.4 458.1 683.4 468.3 684.4 478 686.4 504.4 687.9 528.1 688.6 538.4 690.1 541.9 693.1 543.4 697.1 542.9 703.1 540.9 709.1 538.9 714.1 537.4 720.1 535.9 726.1 534.9 727.6 533.4 728.7 500.3 729.2 455.3 730.9 425.2 731.7 413.1 732.7 432.2 733.4 500.4 733.7 567.4 734.6 564.4 735.6 550.4 737.1 542.4 738.1 540.4M1173 510 1173.3 498 1174.7 440 1176.9 330 1178 240 1178.5 200 1179 180.9 1185 180.4 1204 179.9" stroke="#93ff00" stroke-width="1.2" shape-rendering="crispEdges"/><path d="M675.8 361.1 676.8 385.3 677.8 411.8 679.3 440.1 680.3 446.2 681.3 447 681.8 457.9 682.8 468.2 683.8 477.4 685.8 504.9 687.3 528.5 688.4 539.7 689.9 543.2 692.9 544.7 696.9 544.2 702.9 542.2 708.9 540.2 713.9 538.7 719.9 537.2 725.9 536.2 727.4 534.7 728.1 500.5 728.6 455.6 730.3 424.4 731.1 413.4 732.1 431.5 732.8 500.4 733.5 568.7 734.4 565.7 735.4 551.7 736.9 543.7 737.9 541.7M1173 511.6 1173.6 498 1175.3 440 1178.3 330 1179.3 240 1179.8 200 1180.3 182.3 1185 181.8 1204 181.3" stroke="#ff0013" stroke-width="1.2" shape-rendering="crispEdges"/><path d="M676.1 361.2 677.1 385.3 678.1 412.1 679.6 440.1 680.6 445.1 681.6 446.8 682.1 457.2 683.1 468.2 684.1 478.4 686.1 505.5 687.6 527.8 688.5 539.8 690 543.3 693 544.8 697 544.3 703 542.3 709 540.3 714 538.8 720 537.3 726 536.3 727.5 534.8 728.4 500 728.9 454.4 730.6 425.1 731.4 412.8 732.4 432 733.1 499.8 733.6 568.8 734.5 565.8 735.5 551.8 737 543.8 738 541.8M1173 513.3 1173.2 498 1174.4 440 1176.4 330 1177.4 240 1177.9 200 1178.4 182.7 1185 182.2 1204 181.7" stroke="#6c00ff" stroke-width="1.2" shape-rendering="crispEdges"/><path d="M676.5 360.9 677.5 384.4 678.5 412.2 680 440.2 681 446.1 682 447.5 682.5 457.6 683.5 468.2 684.5 478.1 686.5 505.1 688 527.5 688.6 541.1 690.1 544.6 693.1 546.1 697.1 545.6 703.1 543.6 709.1 541.6 714.1 540.1 720.1 538.6 726.1 537.6 727.6 536.1 728.8 499.8 729.3 454.3 731 425.3 731.8 413.4 732.8 431.8 733.5 500.3 733.7 570.1 734.6 567.1 735.6 553.1 737.1 545.1 738.1 543.1M1173 515.1 1173.6 498 1175.4 440 1178.4 330 1179.5 240 1180 200 1180.5 182.3 1185 181.8 1204 181.3" stroke="#00ffec" stroke-width="1.2" shape-rendering="crispEdges"/><path d="M676.6 360.9 677.6 386.1 678.6 411.2 680.1 440.3 681.1 446.4 682.1 445.9 682.6 458 683.6 467.7 684.6 478.2 686.6 505.1 688.1 527.6 688.7 542 690.2 545.5 693.2 547 697.2 546.5 703.2 544.5 709.2 542.5 714.2 541 720.2 539.5 726.2 538.5 727.7 537 728.9 500.7 729.4 455.1 731.1 425.6 731.9 413.4 732.9 432.6 733.6 499.4 733.8 571 734.7 568 735.7 554 737.2 546 738.2 544M1173 518.3 1173.3 498 1174.7 440 1176.9 330 1177.9 240 1178.4 200 1178.9 181.3 1185 180.8 1204 180.3" stroke="#93ff00" stroke-width="1.2" shape-rendering="crispEdges"/><path d="M676 361.7 677 384.7 678 412 679.5 440.9 680.5 445.8 681.5 446.9 682 457.7 683 468.2 684 478 686 504.7 687.5 528.3 688.5 541 690 544.5 693 546 697 545.5 703 543.5 709 541.5 714 540 720 538.5 726 537.5 727.5 536 728.3 500.2 728.8 455.2 730.5 424.7 731.3 414.2 732.3 432.3 733 500.4 733.6 570 734.5 567 735.5 553 737 545 738 543M1173 525 1173.6 498 1175.4 440 1178.5 330 1179.5 240 1180 200 1180.5 181.1 1185 180.6 1204 180.1" stroke="#ff0013" stroke-width="1.2" shape-rendering="crispEdges"/><path d="M676 361.3 677 385.3 678 412.3 679.5 439.4 680.5 445.9 681.5 446.7 682 457.7 683 468.7 684 477.5 686 504.9 687.5 527.8 688.5 539.8 690 543.3 693 544.8 697 544.3 703 542.3 709 540.3 714 538.8 720 537.3 726 536.3 727.5 534.8 728.3 499.8 728.8 454.9 730.5 425 731.3 412.6 732.3 432.5 733 500 733.6 568.8 734.5 565.8 735.5 551.8 737 543.8 738 541.8M1173 532.3 1173.1 498 1174.3 440 1176.1 330 1177.1 240 1177.6 200 1178.1 182.7 1185 182.2 1204 181.7" stroke="#6c00ff" stroke-width="1.2" shape-rendering="crispEdges"/><path d="M675.3 360.9 676.3 384.8 677.3 412 678.8 439.8 679.8 445.6 680.8 446.9 681.3 457.7 682.3 467.9 683.3 477.3 685.3 504.9 686.8 528.6 688.3 539.6 689.8 543.1 692.8 544.6 696.8 544.1 702.8 542.1 708.8 540.1 713.8 538.6 719.8 537.1 725.8 536.1 727.3 534.6 727.6 500.1 728.1 456 729.8 425.8 730.6 412.8 731.6 432 732.3 499.4 733.4 568.6 734.3 565.6 735.3 551.6 736.8 543.6 737.8 541.6M1173 536.7 1173.2 498 1174.6 440 1176.7 330 1177.7 240 1178.2 200 1178.7 181.4 1185 180.9 1204 180.4" stroke="#00ffec" stroke-width="1.2" shape-rendering="crispEdges"/><path d="M676 360.6 677 385.4 678 412 679.5 440 680.5 446.2 681.5 446.4 682 458.3 683 468.1 684 478 686 505.5 687.5 527.9 688.5 540.6 690 544.1 693 545.6 697 545.1 703 543.1 709 541.1 714 539.6 720 538.1 726 537.1 727.5 535.6 728.3 500 728.8 454.7 730.5 425.1 731.3 412.7 732.3 432.1 733 500.6 733.6 569.6 734.5 566.6 735.5 552.6 737 544.6 738 542.6M1173 538.5 1173.8 498 1175.8 440 1179.4 330 1180.4 240 1180.9 200 1181.4 182 1185 181.5 1204 181" stroke="#00ffff" stroke-width="1.6" shape-rendering="crispEdges"/><path d="M738 541.7 741 542.8 744 541.6 747 542.3 750 542.6 753 543.3 756 542.3 759 542.8 762 543.2 765 543.0 768 543.2 771 543.3 774 542.7 777 544.2 780 543.5 783 543.6 786 543.5 789 543.8 792 543.6 795 543.9 798 543.9 801 544.2 804 544.1 807 544.8 810 544.0 813 543.9 816 544.3 819 544.5 822 544.8 825 544.3 828 544.7 831 544.4 834 544.8 837 544.9 840 544.3 843 545.0 846 544.7 849 544.7 852 545.0 855 545.2 858 545.3 861 545.3 864 545.5 867 545.3 870 545.9 873 546.2 876 545.6 879 545.5 882 545.7 885 545.8 888 545.8 891 545.5 894 545.7 897 546.0 900 545.2 903 545.9 906 546.0 909 546.2 912 546.0 915 546.3 918 546.5 921 546.4 924 546.4 927 546.6 930 546.2 933 546.3 936 546.1 939 546.4 942 545.8 945 546.6 948 546.3 951 546.2 954 546.4 957 546.0 960 545.8 963 545.9 966 546.4 969 546.1 972 546.2 975 545.6 978 545.8 981 545.3 984 545.7 987 545.4 990 545.6 993 545.4 996 545.2 999 545.6 1002 545.7 1005 545.2 1008 545.7 1011 545.1 1014 545.7 1017 545.6 1020 546.0 1023 545.5 1026 545.8 1029 545.4 1032 545.9 1035 545.7 1038 545.6 1041 546.1 1044 545.8 1047 545.9 1050 546.1 1053 546.0 1056 545.8 1059 545.9 1062 546.3 1065 545.8 1068 546.0 1071 546.1 1074 545.8 1077 546.1 1080 546.1 1083 545.8 1086 546.0 1089 546.0 1092 546.1 1095 546.4 1098 546.2 1101 546.2 1104 546.2 1107 546.4 1110 546.5 1113 546.9 1116 547.2 1119 547.7 1122 547.8 1125 547.6 1128 547.7 1131 547.8 1134 547.7 1137 547.8 1140 547.2 1143 546.2 1146 545.7 1149 544.7 1152 544.3 1155 543.2 1158 542.3 1161 541.4 1164 540.9 1167 539.8 1170 539.5 1173 538.7" stroke="#00ffff" stroke-width="1.6"/></g><path fill="#000" d="M1169 509h1v1h-1zM1124 523h1v1h-1zM839 522h1v1h-1zM1166 515h1v1h-1zM1025 517h1v1h-1zM1062 517h1v1h-1zM854 519h1v1h-1zM921 514h1v1h-1zM995 522h1v1h-1zM1014 519h1v1h-1zM1044 533h1v1h-1zM787 526h1v1h-1zM755 531h1v1h-1zM954 540h1v1h-1zM873 540h1v1h-1zM765 516h1v1h-1zM957 540h1v1h-1zM1110 514h1v1h-1zM742 536h1v1h-1zM1058 514h1v1h-1zM861 515h1v1h-1zM843 527h1v1h-1zM969 516h1v1h-1zM950 536h1v1h-1zM1025 537h1v1h-1zM1066 539h1v1h-1zM744 523h1v1h-1zM888 516h1v1h-1zM752 535h1v1h-1zM848 519h1v1h-1zM1019 528h1v1h-1zM1078 532h1v1h-1zM1151 518h1v1h-1zM1023 515h1v1h-1zM902 532h1v1h-1zM936 517h1v1h-1zM802 512h1v1h-1zM910 530h1v1h-1zM1095 517h1v1h-1zM788 535h1v1h-1zM1035 539h1v1h-1zM931 525h1v1h-1zM1083 537h1v1h-1zM873 511h1v1h-1zM1147 526h1v1h-1zM904 513h1v1h-1zM782 520h1v1h-1zM1047 537h1v1h-1zM1167 520h1v1h-1zM763 518h1v1h-1zM953 539h1v1h-1zM843 540h1v1h-1zM1075 539h1v1h-1zM875 530h1v1h-1zM1033 520h1v1h-1zM1006 520h1v1h-1zM968 518h1v1h-1zM843 529h1v1h-1zM747 519h1v1h-1zM757 512h1v1h-1zM754 524h1v1h-1zM983 535h1v1h-1zM909 515h1v1h-1zM1169 518h1v1h-1zM765 524h1v1h-1zM1019 525h1v1h-1zM777 538h1v1h-1zM1067 511h1v1h-1zM1120 525h1v1h-1zM869 534h1v1h-1zM1094 529h1v1h-1zM1032 527h1v1h-1zM751 511h1v1h-1zM743 509h1v1h-1zM743 510h1v1h-1zM945 536h1v1h-1zM1002 527h1v1h-1zM1005 530h1v1h-1zM1129 516h1v1h-1zM1154 535h1v1h-1zM857 534h1v1h-1zM914 541h1v1h-1zM943 541h1v1h-1zM1009 512h1v1h-1zM916 527h1v1h-1zM1010 519h1v1h-1zM1153 518h1v1h-1zM742 507h1v1h-1zM1035 517h1v1h-1zM833 533h1v1h-1zM751 526h1v1h-1zM936 537h1v1h-1zM996 527h1v1h-1zM881 518h1v1h-1zM1064 535h1v1h-1zM955 528h1v1h-1zM778 511h1v1h-1zM897 537h1v1h-1zM989 533h1v1h-1zM964 538h1v1h-1zM767 516h1v1h-1zM778 511h1v1h-1zM1058 529h1v1h-1zM1047 534h1v1h-1zM1147 540h1v1h-1zM1124 541h1v1h-1zM816 524h1v1h-1zM880 517h1v1h-1zM871 537h1v1h-1zM857 525h1v1h-1zM857 511h1v1h-1zM852 516h1v1h-1zM1147 535h1v1h-1zM928 512h1v1h-1zM813 512h1v1h-1zM1094 516h1v1h-1zM826 522h1v1h-1zM943 512h1v1h-1zM744 523h1v1h-1zM1004 521h1v1h-1zM844 522h1v1h-1zM776 519h1v1h-1zM1082 513h1v1h-1zM1114 535h1v1h-1zM764 508h1v1h-1zM941 520h1v1h-1zM1054 525h1v1h-1zM876 538h1v1h-1zM1142 525h1v1h-1zM892 523h1v1h-1zM789 527h1v1h-1zM928 528h1v1h-1zM808 533h1v1h-1zM986 539h1v1h-1zM991 512h1v1h-1zM1056 513h1v1h-1zM1033 518h1v1h-1zM793 534h1v1h-1zM819 525h1v1h-1zM1048 516h1v1h-1zM1044 511h1v1h-1zM917 513h1v1h-1zM890 513h1v1h-1zM1144 537h1v1h-1zM1087 518h1v1h-1zM1048 528h1v1h-1zM771 512h1v1h-1zM819 535h1v1h-1zM750 525h1v1h-1zM1011 531h1v1h-1zM807 535h1v1h-1zM807 509h1v1h-1zM1085 519h1v1h-1zM1003 518h1v1h-1zM749 515h1v1h-1zM974 517h1v1h-1zM1061 524h1v1h-1zM1088 519h1v1h-1zM1025 518h1v1h-1zM1049 528h1v1h-1zM1144 529h1v1h-1zM1171 506h1v1h-1zM1062 517h1v1h-1zM1050 520h1v1h-1zM1012 519h1v1h-1zM1037 518h1v1h-1zM789 533h1v1h-1zM834 534h1v1h-1zM984 532h1v1h-1zM1064 534h1v1h-1zM949 541h1v1h-1zM1159 520h1v1h-1zM780 522h1v1h-1zM953 521h1v1h-1zM848 536h1v1h-1zM955 513h1v1h-1zM921 534h1v1h-1zM1056 523h1v1h-1zM928 518h1v1h-1zM899 529h1v1h-1zM865 538h1v1h-1zM823 521h1v1h-1zM819 525h1v1h-1zM1048 522h1v1h-1zM838 520h1v1h-1zM1050 528h1v1h-1zM862 528h1v1h-1zM870 517h1v1h-1zM967 518h1v1h-1zM768 528h1v1h-1zM861 521h1v1h-1zM1101 534h1v1h-1zM1163 531h1v1h-1zM796 514h1v1h-1zM781 515h1v1h-1zM840 525h1v1h-1zM1044 521h1v1h-1zM1097 516h1v1h-1zM910 534h1v1h-1zM890 523h1v1h-1zM962 536h1v1h-1zM1166 524h1v1h-1zM841 536h1v1h-1zM1014 530h1v1h-1zM1001 514h1v1h-1zM805 520h1v1h-1zM1014 531h1v1h-1zM1165 536h1v1h-1zM826 539h1v1h-1zM825 515h1v1h-1zM960 526h1v1h-1zM1053 536h1v1h-1zM912 527h1v1h-1zM863 512h1v1h-1zM949 536h1v1h-1zM1037 528h1v1h-1zM1017 512h1v1h-1zM1030 535h1v1h-1zM980 515h1v1h-1zM841 527h1v1h-1zM762 529h1v1h-1zM983 518h1v1h-1zM934 531h1v1h-1zM1071 516h1v1h-1zM810 526h1v1h-1zM1086 521h1v1h-1zM991 531h1v1h-1zM1088 528h1v1h-1zM896 521h1v1h-1zM884 519h1v1h-1zM928 528h1v1h-1zM810 512h1v1h-1zM876 525h1v1h-1zM812 537h1v1h-1zM1138 526h1v1h-1zM893 537h1v1h-1zM1011 531h1v1h-1zM887 531h1v1h-1zM1118 532h1v1h-1zM804 527h1v1h-1zM1137 515h1v1h-1zM809 533h1v1h-1zM1070 512h1v1h-1zM939 522h1v1h-1zM1060 537h1v1h-1zM983 530h1v1h-1zM802 537h1v1h-1zM812 537h1v1h-1zM1081 540h1v1h-1zM771 535h1v1h-1zM1131 530h1v1h-1zM1047 522h1v1h-1zM1116 525h1v1h-1zM1131 515h1v1h-1zM975 533h1v1h-1zM1088 528h1v1h-1zM1146 537h1v1h-1zM908 520h1v1h-1zM795 527h1v1h-1zM961 537h1v1h-1zM925 528h1v1h-1zM1045 513h1v1h-1zM790 531h1v1h-1zM996 539h1v1h-1zM860 532h1v1h-1zM806 524h1v1h-1zM870 534h1v1h-1zM896 540h1v1h-1zM1004 512h1v1h-1zM992 526h1v1h-1zM1033 535h1v1h-1zM896 515h1v1h-1zM1119 540h1v1h-1zM861 539h1v1h-1zM762 535h1v1h-1zM1137 538h1v1h-1zM1110 523h1v1h-1zM980 541h1v1h-1zM785 533h1v1h-1zM1135 526h1v1h-1zM781 516h1v1h-1zM907 516h1v1h-1zM761 514h1v1h-1zM1135 542h1v1h-1zM1088 520h1v1h-1zM792 509h1v1h-1zM1110 533h1v1h-1zM990 514h1v1h-1zM1119 529h1v1h-1zM812 539h1v1h-1zM820 509h1v1h-1zM778 531h1v1h-1zM767 532h1v1h-1zM1052 511h1v1h-1zM1020 538h1v1h-1zM1101 515h1v1h-1zM1019 538h1v1h-1zM808 517h1v1h-1zM793 523h1v1h-1zM756 518h1v1h-1zM811 514h1v1h-1zM1115 519h1v1h-1zM1065 537h1v1h-1zM1060 540h1v1h-1zM1083 536h1v1h-1zM1055 536h1v1h-1zM1096 524h1v1h-1zM1050 539h1v1h-1zM1136 528h1v1h-1zM858 513h1v1h-1zM1165 510h1v1h-1zM986 526h1v1h-1zM912 540h1v1h-1zM848 512h1v1h-1zM959 513h1v1h-1zM1044 518h1v1h-1zM772 517h1v1h-1zM1150 528h1v1h-1zM1110 530h1v1h-1zM948 520h1v1h-1zM1107 530h1v1h-1zM1081 522h1v1h-1zM1003 536h1v1h-1zM900 523h1v1h-1zM1163 533h1v1h-1zM1010 530h1v1h-1zM872 516h1v1h-1zM851 522h1v1h-1zM913 515h1v1h-1zM973 512h1v1h-1zM842 522h1v1h-1zM1002 516h1v1h-1zM835 538h1v1h-1zM1021 535h1v1h-1zM1135 530h1v1h-1zM826 525h1v1h-1zM1147 527h1v1h-1zM884 521h1v1h-1zM1098 532h1v1h-1zM790 517h1v1h-1zM1152 538h1v1h-1zM877 521h1v1h-1zM1122 528h1v1h-1zM800 521h1v1h-1zM1107 537h1v1h-1zM952 515h1v1h-1zM742 521h1v1h-1zM1119 541h1v1h-1zM1024 521h1v1h-1zM836 538h1v1h-1zM844 523h1v1h-1zM751 523h1v1h-1zM883 518h1v1h-1zM1169 528h1v1h-1zM979 515h1v1h-1zM866 516h1v1h-1zM769 511h1v1h-1zM752 515h1v1h-1zM983 530h1v1h-1zM849 517h1v1h-1zM1082 522h1v1h-1zM1169 522h1v1h-1zM1031 538h1v1h-1zM789 511h1v1h-1zM1000 538h1v1h-1zM752 520h1v1h-1zM1013 530h1v1h-1zM1057 519h1v1h-1zM1133 517h1v1h-1zM857 518h1v1h-1zM1128 526h1v1h-1zM849 514h1v1h-1zM930 536h1v1h-1zM942 516h1v1h-1zM888 520h1v1h-1zM944 537h1v1h-1zM943 542h1v1h-1zM954 525h1v1h-1zM1079 537h1v1h-1zM758 533h1v1h-1zM847 521h1v1h-1zM842 537h1v1h-1zM859 534h1v1h-1zM1151 525h1v1h-1zM810 520h1v1h-1zM744 523h1v1h-1zM1149 522h1v1h-1zM764 523h1v1h-1zM979 530h1v1h-1zM755 512h1v1h-1zM772 521h1v1h-1zM917 523h1v1h-1zM983 515h1v1h-1zM986 533h1v1h-1zM1089 520h1v1h-1zM1122 517h1v1h-1zM1145 512h1v1h-1zM1011 529h1v1h-1zM858 538h1v1h-1zM786 515h1v1h-1zM887 512h1v1h-1zM910 533h1v1h-1zM1024 540h1v1h-1zM980 524h1v1h-1zM1051 530h1v1h-1zM1067 516h1v1h-1zM957 514h1v1h-1zM860 518h1v1h-1zM1148 522h1v1h-1zM954 520h1v1h-1zM1077 512h1v1h-1zM805 532h1v1h-1zM1004 513h1v1h-1zM1127 536h1v1h-1zM879 529h1v1h-1zM925 519h1v1h-1zM797 529h1v1h-1zM835 525h1v1h-1zM833 515h1v1h-1zM1047 524h1v1h-1zM1062 541h1v1h-1zM829 534h1v1h-1zM1058 514h1v1h-1zM1023 515h1v1h-1zM859 520h1v1h-1zM848 527h1v1h-1zM1160 518h1v1h-1zM754 508h1v1h-1zM1144 514h1v1h-1zM1065 538h1v1h-1zM1041 524h1v1h-1zM938 529h1v1h-1zM919 534h1v1h-1zM978 535h1v1h-1zM1115 513h1v1h-1zM1138 526h1v1h-1zM1168 514h1v1h-1zM872 518h1v1h-1zM1162 528h1v1h-1zM1169 520h1v1h-1zM1170 533h1v1h-1zM819 529h1v1h-1zM973 529h1v1h-1zM1133 543h1v1h-1zM1072 514h1v1h-1zM971 527h1v1h-1zM855 524h1v1h-1zM970 518h1v1h-1zM839 539h1v1h-1zM884 511h1v1h-1zM851 514h1v1h-1zM745 513h1v1h-1zM1069 524h1v1h-1zM982 541h1v1h-1zM1051 520h1v1h-1zM1137 524h1v1h-1zM900 531h1v1h-1zM948 527h1v1h-1zM797 520h1v1h-1zM761 520h1v1h-1zM896 517h1v1h-1zM1154 518h1v1h-1zM841 527h1v1h-1zM969 539h1v1h-1zM770 516h1v1h-1zM840 539h1v1h-1zM896 537h1v1h-1zM796 516h1v1h-1zM1080 514h1v1h-1zM945 522h1v1h-1zM947 538h1v1h-1zM813 533h1v1h-1zM829 539h1v1h-1zM971 527h1v1h-1zM973 527h1v1h-1zM1040 518h1v1h-1zM848 535h1v1h-1zM1012 528h1v1h-1zM744 510h1v1h-1zM780 512h1v1h-1zM903 537h1v1h-1zM1057 528h1v1h-1zM1013 518h1v1h-1zM914 522h1v1h-1zM994 531h1v1h-1zM1005 525h1v1h-1zM778 516h1v1h-1zM863 512h1v1h-1zM764 511h1v1h-1zM849 515h1v1h-1zM1020 522h1v1h-1zM938 540h1v1h-1zM912 541h1v1h-1zM1117 535h1v1h-1zM1113 514h1v1h-1zM856 525h1v1h-1zM982 515h1v1h-1zM1107 518h1v1h-1zM872 527h1v1h-1zM838 512h1v1h-1zM968 518h1v1h-1zM1045 535h1v1h-1zM833 520h1v1h-1zM901 536h1v1h-1zM945 524h1v1h-1zM990 531h1v1h-1zM1151 519h1v1h-1zM899 520h1v1h-1zM925 514h1v1h-1zM970 540h1v1h-1zM1104 522h1v1h-1zM1136 523h1v1h-1zM1161 522h1v1h-1zM857 510h1v1h-1zM787 526h1v1h-1zM1104 523h1v1h-1zM1101 526h1v1h-1zM1170 517h1v1h-1zM925 511h1v1h-1zM905 536h1v1h-1zM1119 518h1v1h-1zM978 513h1v1h-1zM866 537h1v1h-1zM930 530h1v1h-1zM1158 533h1v1h-1zM1013 526h1v1h-1zM934 541h1v1h-1zM872 517h1v1h-1zM978 538h1v1h-1zM1011 533h1v1h-1zM1069 525h1v1h-1zM791 536h1v1h-1zM1011 523h1v1h-1zM1062 537h1v1h-1zM1071 519h1v1h-1zM1055 527h1v1h-1zM743 511h1v1h-1zM920 535h1v1h-1zM1085 522h1v1h-1zM746 532h1v1h-1zM849 531h1v1h-1zM1169 533h1v1h-1zM975 534h1v1h-1zM1119 518h1v1h-1zM757 528h1v1h-1zM945 524h1v1h-1zM926 523h1v1h-1zM979 511h1v1h-1zM880 521h1v1h-1zM996 529h1v1h-1zM836 521h1v1h-1zM813 520h1v1h-1zM842 524h1v1h-1zM838 516h1v1h-1zM798 514h1v1h-1zM874 535h1v1h-1zM787 539h1v1h-1zM764 530h1v1h-1zM962 519h1v1h-1zM919 515h1v1h-1zM1126 539h1v1h-1zM801 509h1v1h-1zM1050 525h1v1h-1zM866 521h1v1h-1zM827 525h1v1h-1zM860 535h1v1h-1zM1161 515h1v1h-1zM1171 517h1v1h-1zM778 522h1v1h-1zM1055 524h1v1h-1zM777 514h1v1h-1zM1170 508h1v1h-1zM911 526h1v1h-1zM801 538h1v1h-1zM951 534h1v1h-1zM817 516h1v1h-1zM749 537h1v1h-1zM807 531h1v1h-1zM983 521h1v1h-1zM961 533h1v1h-1zM822 516h1v1h-1zM1159 509h1v1h-1zM1169 520h1v1h-1zM983 522h1v1h-1zM941 525h1v1h-1zM764 526h1v1h-1zM920 539h1v1h-1zM953 524h1v1h-1zM1005 531h1v1h-1zM815 530h1v1h-1zM875 537h1v1h-1zM939 529h1v1h-1zM1018 523h1v1h-1zM1046 523h1v1h-1zM966 540h1v1h-1zM1117 533h1v1h-1zM1068 516h1v1h-1zM774 513h1v1h-1zM785 528h1v1h-1zM894 523h1v1h-1zM771 511h1v1h-1zM887 532h1v1h-1zM772 521h1v1h-1zM923 529h1v1h-1zM1105 526h1v1h-1zM931 530h1v1h-1zM800 535h1v1h-1zM799 538h1v1h-1zM1084 525h1v1h-1zM793 528h1v1h-1zM755 526h1v1h-1zM891 529h1v1h-1zM1051 526h1v1h-1zM981 526h1v1h-1zM795 518h1v1h-1zM1134 517h1v1h-1zM927 536h1v1h-1zM1040 518h1v1h-1zM1034 524h1v1h-1zM1063 528h1v1h-1zM1095 535h1v1h-1zM782 515h1v1h-1zM750 526h1v1h-1zM762 519h1v1h-1zM905 541h1v1h-1zM781 528h1v1h-1zM892 519h1v1h-1zM900 536h1v1h-1zM815 535h1v1h-1zM1006 535h1v1h-1zM981 532h1v1h-1zM749 508h1v1h-1zM1014 531h1v1h-1zM768 507h1v1h-1zM891 530h1v1h-1zM761 534h1v1h-1zM1126 522h1v1h-1zM833 519h1v1h-1zM925 524h1v1h-1zM1024 536h1v1h-1zM793 526h1v1h-1zM1017 532h1v1h-1zM765 526h1v1h-1zM1141 535h1v1h-1zM807 512h1v1h-1zM1127 542h1v1h-1zM770 528h1v1h-1zM1114 535h1v1h-1zM1083 512h1v1h-1zM875 530h1v1h-1zM1159 524h1v1h-1zM992 526h1v1h-1zM941 524h1v1h-1zM1117 537h1v1h-1zM1055 527h1v1h-1zM1058 539h1v1h-1zM907 513h1v1h-1zM833 527h1v1h-1zM940 527h1v1h-1zM968 526h1v1h-1zM867 527h1v1h-1zM788 532h1v1h-1zM746 519h1v1h-1zM881 525h1v1h-1zM905 540h1v1h-1zM1018 515h1v1h-1zM757 525h1v1h-1zM793 515h1v1h-1zM945 525h1v1h-1zM1092 521h1v1h-1zM771 535h1v1h-1zM837 519h1v1h-1zM855 533h1v1h-1zM771 529h1v1h-1zM1014 539h1v1h-1zM1134 519h1v1h-1zM860 533h1v1h-1zM994 539h1v1h-1zM905 513h1v1h-1zM855 524h1v1h-1zM782 515h1v1h-1zM1106 519h1v1h-1zM1051 516h1v1h-1zM745 516h1v1h-1zM744 520h1v1h-1zM1050 529h1v1h-1zM841 537h1v1h-1zM1097 522h1v1h-1zM756 537h1v1h-1zM1063 519h1v1h-1zM757 526h1v1h-1zM767 526h1v1h-1zM749 508h1v1h-1zM855 513h1v1h-1zM1007 529h1v1h-1zM911 522h1v1h-1zM854 526h1v1h-1zM1158 525h1v1h-1zM982 526h1v1h-1zM970 518h1v1h-1zM844 520h1v1h-1zM837 531h1v1h-1zM1106 539h1v1h-1zM1140 518h1v1h-1zM913 517h1v1h-1zM767 523h1v1h-1zM1166 530h1v1h-1zM769 528h1v1h-1zM823 536h1v1h-1zM1121 530h1v1h-1zM892 530h1v1h-1zM742 522h1v1h-1zM1100 527h1v1h-1zM926 538h1v1h-1zM759 517h1v1h-1zM789 530h1v1h-1zM833 532h1v1h-1zM904 541h1v1h-1zM850 540h1v1h-1zM1077 524h1v1h-1zM839 530h1v1h-1zM957 539h1v1h-1zM881 533h1v1h-1zM936 513h1v1h-1zM944 524h1v1h-1zM804 533h1v1h-1zM1166 526h1v1h-1zM1102 528h1v1h-1zM1153 516h1v1h-1zM979 534h1v1h-1zM748 529h1v1h-1zM1050 538h1v1h-1zM759 515h1v1h-1zM802 521h1v1h-1zM1161 510h1v1h-1zM885 529h1v1h-1zM769 523h1v1h-1zM914 529h1v1h-1zM921 526h1v1h-1zM815 520h1v1h-1zM791 523h1v1h-1zM973 519h1v1h-1zM760 531h1v1h-1zM746 524h1v1h-1zM1134 523h1v1h-1zM915 519h1v1h-1zM873 539h1v1h-1zM882 519h1v1h-1zM1024 517h1v1h-1zM956 519h1v1h-1zM830 535h1v1h-1zM817 514h1v1h-1zM878 537h1v1h-1zM891 512h1v1h-1zM968 531h1v1h-1zM999 514h1v1h-1zM1160 515h1v1h-1zM890 539h1v1h-1zM1043 532h1v1h-1zM922 528h1v1h-1zM1078 540h1v1h-1zM752 529h1v1h-1zM763 510h1v1h-1zM964 528h1v1h-1zM928 522h1v1h-1zM796 533h1v1h-1zM780 530h1v1h-1zM1120 519h1v1h-1zM744 530h1v1h-1zM749 535h1v1h-1zM841 532h1v1h-1zM845 518h1v1h-1zM1153 535h1v1h-1zM1020 516h1v1h-1zM772 521h1v1h-1zM788 513h1v1h-1zM753 532h1v1h-1zM784 522h1v1h-1zM882 514h1v1h-1zM1115 542h1v1h-1zM856 524h1v1h-1zM939 516h1v1h-1zM743 522h1v1h-1zM843 523h1v1h-1zM1016 539h1v1h-1zM908 527h1v1h-1zM1124 522h1v1h-1zM783 527h1v1h-1zM1062 539h1v1h-1zM1124 520h1v1h-1zM982 530h1v1h-1zM1112 523h1v1h-1zM1073 512h1v1h-1zM1076 515h1v1h-1zM781 536h1v1h-1zM747 533h1v1h-1zM903 512h1v1h-1zM1088 530h1v1h-1zM1087 532h1v1h-1zM951 528h1v1h-1zM754 511h1v1h-1zM785 531h1v1h-1zM878 536h1v1h-1zM762 516h1v1h-1zM814 538h1v1h-1zM759 530h1v1h-1zM751 535h1v1h-1zM882 524h1v1h-1zM1159 512h1v1h-1zM824 511h1v1h-1zM767 534h1v1h-1zM1055 511h1v1h-1zM829 536h1v1h-1zM1134 531h1v1h-1zM754 535h1v1h-1zM1056 539h1v1h-1zM797 525h1v1h-1zM932 528h1v1h-1zM744 515h1v1h-1zM850 533h1v1h-1zM758 538h1v1h-1zM1098 518h1v1h-1zM844 512h1v1h-1zM949 541h1v1h-1zM904 536h1v1h-1zM761 520h1v1h-1zM757 530h1v1h-1zM949 522h1v1h-1zM841 531h1v1h-1zM918 521h1v1h-1zM1065 521h1v1h-1zM851 515h1v1h-1zM805 529h1v1h-1zM1010 513h1v1h-1zM885 530h1v1h-1zM824 530h1v1h-1zM989 534h1v1h-1zM856 538h1v1h-1zM779 517h1v1h-1zM1066 526h1v1h-1zM1152 536h1v1h-1zM786 538h1v1h-1zM1054 522h1v1h-1zM876 530h1v1h-1zM1148 519h1v1h-1zM948 526h1v1h-1zM1141 530h1v1h-1zM1116 534h1v1h-1zM1111 523h1v1h-1zM934 528h1v1h-1zM868 521h1v1h-1zM854 540h1v1h-1zM952 520h1v1h-1zM975 536h1v1h-1zM1107 525h1v1h-1zM1102 531h1v1h-1zM1009 535h1v1h-1zM845 528h1v1h-1zM819 522h1v1h-1zM1055 533h1v1h-1zM836 518h1v1h-1zM869 523h1v1h-1zM1050 523h1v1h-1zM798 521h1v1h-1zM1091 523h1v1h-1zM974 525h1v1h-1zM1098 539h1v1h-1zM819 512h1v1h-1zM775 517h1v1h-1zM816 527h1v1h-1zM1049 541h1v1h-1zM823 520h1v1h-1zM922 520h1v1h-1zM1021 539h1v1h-1zM805 526h1v1h-1zM897 519h1v1h-1zM868 539h1v1h-1zM756 525h1v1h-1zM872 534h1v1h-1zM995 525h1v1h-1zM820 525h1v1h-1zM1040 511h1v1h-1zM796 518h1v1h-1zM1150 510h1v1h-1zM939 529h1v1h-1zM1058 513h1v1h-1zM1020 531h1v1h-1zM1008 540h1v1h-1zM1117 542h1v1h-1zM996 521h1v1h-1zM772 535h1v1h-1zM1101 540h1v1h-1zM1051 528h1v1h-1zM1012 526h1v1h-1zM1066 541h1v1h-1zM1119 528h1v1h-1zM1009 540h1v1h-1zM802 509h1v1h-1zM1124 515h1v1h-1zM839 526h1v1h-1zM870 516h1v1h-1zM900 513h1v1h-1zM846 523h1v1h-1zM1059 521h1v1h-1zM900 527h1v1h-1zM1141 512h1v1h-1zM949 527h1v1h-1zM930 520h1v1h-1zM749 509h1v1h-1zM802 520h1v1h-1zM1069 518h1v1h-1zM1020 514h1v1h-1zM941 523h1v1h-1zM770 518h1v1h-1zM905 535h1v1h-1zM907 512h1v1h-1zM946 532h1v1h-1zM857 521h1v1h-1zM890 537h1v1h-1zM756 515h1v1h-1zM826 532h1v1h-1zM903 538h1v1h-1zM802 518h1v1h-1zM903 525h1v1h-1zM1110 536h1v1h-1zM1056 527h1v1h-1zM907 525h1v1h-1zM836 520h1v1h-1zM886 535h1v1h-1zM903 531h1v1h-1zM943 515h1v1h-1zM792 538h1v1h-1zM896 532h1v1h-1zM1083 528h1v1h-1zM989 533h1v1h-1zM986 523h1v1h-1zM1166 523h1v1h-1zM1045 514h1v1h-1zM1155 512h1v1h-1zM976 541h1v1h-1zM992 536h1v1h-1zM914 527h1v1h-1zM998 539h1v1h-1zM1023 537h1v1h-1zM1132 534h1v1h-1zM893 532h1v1h-1zM810 531h1v1h-1zM1123 540h1v1h-1zM1112 515h1v1h-1zM952 536h1v1h-1zM1056 522h1v1h-1zM984 512h1v1h-1zM1165 513h1v1h-1zM1033 530h1v1h-1zM764 525h1v1h-1zM917 534h1v1h-1zM784 509h1v1h-1zM1030 527h1v1h-1zM1006 526h1v1h-1zM977 531h1v1h-1zM980 528h1v1h-1zM989 528h1v1h-1zM776 529h1v1h-1zM902 530h1v1h-1zM765 513h1v1h-1zM946 538h1v1h-1zM1068 537h1v1h-1zM845 513h1v1h-1zM971 531h1v1h-1zM1156 532h1v1h-1zM796 512h1v1h-1zM774 526h1v1h-1zM884 514h1v1h-1zM750 523h1v1h-1zM1078 528h1v1h-1zM842 532h1v1h-1zM1075 514h1v1h-1zM1118 539h1v1h-1zM754 531h1v1h-1zM821 517h1v1h-1zM1045 522h1v1h-1zM1062 527h1v1h-1zM1076 518h1v1h-1zM1031 535h1v1h-1zM995 519h1v1h-1zM971 531h1v1h-1zM931 520h1v1h-1zM951 524h1v1h-1zM964 533h1v1h-1zM791 516h1v1h-1zM809 526h1v1h-1zM1156 510h1v1h-1zM853 521h1v1h-1zM827 511h1v1h-1zM752 521h1v1h-1zM1105 518h1v1h-1zM983 521h1v1h-1zM982 541h1v1h-1zM755 535h1v1h-1zM830 528h1v1h-1zM986 534h1v1h-1zM1123 533h1v1h-1zM1153 514h1v1h-1zM852 528h1v1h-1zM1093 522h1v1h-1zM748 536h1v1h-1zM998 527h1v1h-1zM1072 514h1v1h-1zM1010 538h1v1h-1zM965 512h1v1h-1zM863 529h1v1h-1zM1112 529h1v1h-1zM763 523h1v1h-1zM889 515h1v1h-1zM1107 538h1v1h-1zM894 520h1v1h-1zM1034 523h1v1h-1zM861 539h1v1h-1zM994 538h1v1h-1zM762 536h1v1h-1zM742 508h1v1h-1zM984 531h1v1h-1zM1011 524h1v1h-1zM892 537h1v1h-1zM1056 524h1v1h-1zM984 529h1v1h-1zM878 533h1v1h-1zM772 530h1v1h-1zM929 527h1v1h-1zM1093 535h1v1h-1zM1048 537h1v1h-1zM960 518h1v1h-1zM762 532h1v1h-1zM1122 542h1v1h-1zM908 531h1v1h-1zM887 526h1v1h-1zM1143 527h1v1h-1zM876 538h1v1h-1zM1099 539h1v1h-1zM838 538h1v1h-1zM1074 515h1v1h-1zM808 539h1v1h-1zM812 529h1v1h-1zM1136 520h1v1h-1zM809 516h1v1h-1zM1079 517h1v1h-1zM880 526h1v1h-1zM974 539h1v1h-1zM777 537h1v1h-1zM1070 520h1v1h-1zM901 524h1v1h-1zM1021 533h1v1h-1zM745 517h1v1h-1zM970 526h1v1h-1zM1138 532h1v1h-1zM856 534h1v1h-1zM842 534h1v1h-1zM989 513h1v1h-1zM1023 530h1v1h-1zM1088 522h1v1h-1zM1117 536h1v1h-1zM1151 537h1v1h-1zM995 529h1v1h-1zM932 527h1v1h-1zM775 522h1v1h-1zM823 523h1v1h-1zM1142 514h1v1h-1zM1066 521h1v1h-1zM817 528h1v1h-1zM808 521h1v1h-1zM1053 521h1v1h-1zM758 534h1v1h-1zM1155 530h1v1h-1zM1033 530h1v1h-1zM1096 519h1v1h-1zM1167 519h1v1h-1zM890 538h1v1h-1zM850 529h1v1h-1zM815 535h1v1h-1zM1028 522h1v1h-1zM1001 535h1v1h-1zM1073 511h1v1h-1zM753 523h1v1h-1zM995 517h1v1h-1zM1092 527h1v1h-1zM1130 533h1v1h-1zM1003 519h1v1h-1zM990 536h1v1h-1zM830 533h1v1h-1zM754 526h1v1h-1zM912 536h1v1h-1zM1080 528h1v1h-1zM744 523h1v1h-1zM773 533h1v1h-1zM1148 511h1v1h-1zM773 538h1v1h-1zM799 530h1v1h-1zM838 531h1v1h-1zM774 518h1v1h-1zM1093 535h1v1h-1z"/></svg></body></html>
